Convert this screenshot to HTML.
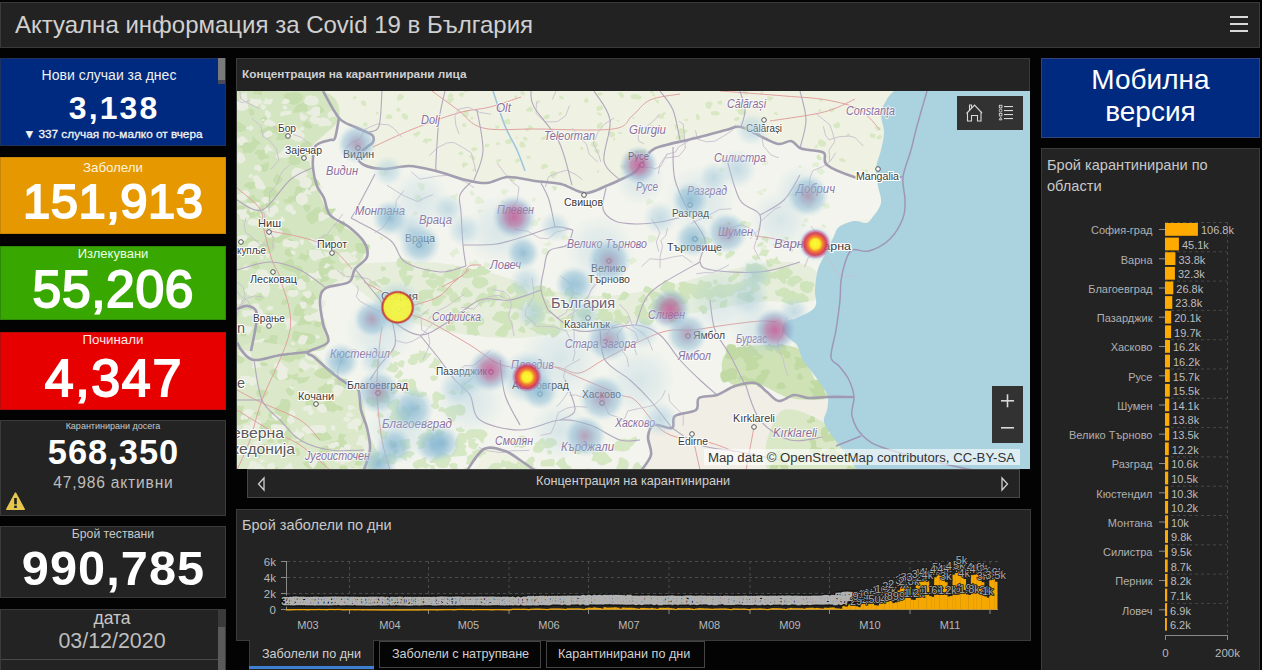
<!DOCTYPE html>
<html><head><meta charset="utf-8">
<style>
*{box-sizing:border-box;margin:0;padding:0}
html,body{width:1262px;height:670px;overflow:hidden;background:#030303;font-family:"Liberation Sans",sans-serif}
.a{position:absolute}
.pn{position:absolute;background:#232323;border:1px solid #3b3b3b}
.t{position:absolute;white-space:nowrap;line-height:1}
.c{left:0;right:0;text-align:center}
</style></head><body>
<!-- header -->
<div class="pn" style="left:0;top:2px;width:1260px;height:46px;background:#222;border-color:#3a3a3a"></div>
<div class="t" id="title" style="left:15px;top:13px;font-size:24px;color:#d0d0d0">Актуална информация за Covid 19 в България</div>
<div class="a" style="left:1230px;top:16px;width:18px;height:2px;background:#d8d8d8"></div>
<div class="a" style="left:1230px;top:23px;width:18px;height:2px;background:#d8d8d8"></div>
<div class="a" style="left:1230px;top:30px;width:18px;height:2px;background:#d8d8d8"></div>

<!-- left column -->
<div class="pn" style="left:0;top:58px;width:226px;height:88px;background:#002a80;border-color:#22325e"></div>
<div class="a" style="left:218px;top:58px;width:7px;height:22px;background:#7a7a7a"></div>
<div class="a" style="left:218px;top:80px;width:7px;height:4px;background:#4a4a5a"></div>
<div class="t" style="left:0;width:218px;text-align:center;top:67.5px;font-size:14px;color:#f0f0f0">Нови случаи за днес</div>
<div class="t" style="left:0;width:226px;text-align:center;top:91.8px;font-size:32px;font-weight:700;color:#fff;letter-spacing:2.1px;text-indent:2.1px">3,138</div>
<div class="t" style="left:0;width:226px;text-align:center;top:128.9px;font-size:11.8px;color:#f4f4f4;-webkit-text-stroke:0.3px #f4f4f4">▼ 337 случая по-малко от вчера</div>

<div class="pn" style="left:0;top:157px;width:226px;height:77px;background:#e69800;border-color:#c8860a"></div>
<div class="t" style="left:0;width:226px;text-align:center;top:160.6px;font-size:13.3px;color:#fff4dc">Заболели</div>
<div class="t" style="-webkit-text-stroke:1.9px #fff;left:0;width:226px;text-align:center;top:177.4px;font-size:49px;color:#fff;letter-spacing:0.5px;text-indent:0.5px">151,913</div>

<div class="pn" style="left:0;top:246px;width:226px;height:74px;background:#38a800;border-color:#2e8a08"></div>
<div class="t" style="left:0;width:226px;text-align:center;top:247.2px;font-size:13px;color:#e8ffe0">Излекувани</div>
<div class="t" style="-webkit-text-stroke:1.9px #fff;left:0;width:226px;text-align:center;top:264.3px;font-size:51.6px;color:#fff;letter-spacing:0.6px;text-indent:0.6px">55,206</div>

<div class="pn" style="left:0;top:332px;width:226px;height:78px;background:#e60000;border-color:#b80a0a"></div>
<div class="t" style="left:0;width:226px;text-align:center;top:333.3px;font-size:13.3px;color:#ffe8e8">Починали</div>
<div class="t" style="-webkit-text-stroke:1.9px #fff;left:0;width:226px;text-align:center;top:352.2px;font-size:52px;color:#fff;letter-spacing:1.65px;text-indent:1.65px">4,347</div>

<div class="pn" style="left:0;top:420px;width:226px;height:96px"></div>
<div class="t" style="left:0;width:226px;text-align:center;top:421.9px;font-size:9px;color:#c8c8c8">Карантинирани досега</div>
<div class="t" style="left:0;width:226px;text-align:center;top:434.5px;font-size:34.4px;font-weight:700;color:#fff;letter-spacing:1.0px;text-indent:1.0px">568,350</div>
<div class="t" style="left:0;width:226px;text-align:center;top:474.6px;font-size:15.6px;color:#bdbdbd;letter-spacing:0.8px;text-indent:0.8px">47,986 активни</div>
<svg class="a" style="left:5px;top:491px" width="21" height="20" viewBox="0 0 21 20"><path d="M10.5 2.2 L19.2 18.3 L1.8 18.3 Z" fill="#e6c64c" stroke="#e6c64c" stroke-width="1.6" stroke-linejoin="round"/><rect x="9.2" y="7" width="2.6" height="6.3" fill="#1e1e1e"/><rect x="9.2" y="14.6" width="2.6" height="2.4" fill="#1e1e1e"/></svg>

<div class="pn" style="left:0;top:526px;width:226px;height:72px"></div>
<div class="t" style="left:0;width:226px;text-align:center;top:527.6px;font-size:12.2px;color:#c8c8c8">Брой тествани</div>
<div class="t" style="left:0;width:226px;text-align:center;top:543.8px;font-size:48.7px;font-weight:700;color:#fff;letter-spacing:1.05px;text-indent:1.05px">990,785</div>

<div class="pn" style="left:0;top:609px;width:226px;height:70px"></div>
<div class="a" style="left:218px;top:610px;width:7px;height:60px;background:#3a3a3a"></div>
<div class="a" style="left:218px;top:627px;width:7px;height:43px;background:#5a5a5a"></div>
<div class="a" style="left:1px;top:659px;width:217px;height:1px;background:#4a4a4a"></div>
<div class="t" style="left:0;width:224px;text-align:center;top:610px;font-size:17.5px;color:#c8c8c8">дата</div>
<div class="t" style="left:0;width:224px;text-align:center;top:630.7px;font-size:21.4px;color:#bdbdbd">03/12/2020</div>

<!-- map panel -->
<div class="pn" style="left:236px;top:58px;width:794px;height:411px"></div>
<div class="t" style="left:242px;top:69px;font-size:11.8px;font-weight:700;color:#cfcfcf">Концентрация на карантинирани лица</div>
<div class="a" id="map" style="left:237px;top:91px;width:793px;height:378px;background:#efece4;overflow:hidden">
<svg width="793" height="378" viewBox="237 91 793 378" style="position:absolute;left:0;top:0" font-family="Liberation Sans">
<defs><radialGradient id="g0"><stop offset="0" stop-color="#9cc4d8" stop-opacity=".55"/><stop offset=".55" stop-color="#a9cde0" stop-opacity=".35"/><stop offset="1" stop-color="#bcd9e6" stop-opacity="0"/></radialGradient><radialGradient id="g1"><stop offset="0" stop-color="#7fb2cf" stop-opacity=".8"/><stop offset=".6" stop-color="#8fbdd6" stop-opacity=".5"/><stop offset="1" stop-color="#b0d2e2" stop-opacity="0"/></radialGradient><radialGradient id="g2"><stop offset="0" stop-color="#a585a8" stop-opacity=".75"/><stop offset=".35" stop-color="#90a4c4" stop-opacity=".65"/><stop offset=".7" stop-color="#8dbcd6" stop-opacity=".45"/><stop offset="1" stop-color="#b0d2e2" stop-opacity="0"/></radialGradient><radialGradient id="g3"><stop offset="0" stop-color="#c04d90" stop-opacity=".8"/><stop offset=".4" stop-color="#a9709f" stop-opacity=".7"/><stop offset=".7" stop-color="#8fa8cc" stop-opacity=".5"/><stop offset="1" stop-color="#b0d2e2" stop-opacity="0"/></radialGradient><radialGradient id="g4"><stop offset="0" stop-color="#ffff30"/><stop offset=".3" stop-color="#fff020"/><stop offset=".5" stop-color="#f5762a"/><stop offset=".72" stop-color="#d62a48" stop-opacity=".9"/><stop offset=".88" stop-color="#b868a8" stop-opacity=".5"/><stop offset="1" stop-color="#a0c8dc" stop-opacity="0"/></radialGradient><radialGradient id="g5"><stop offset="0" stop-color="#ffff3a"/><stop offset=".8" stop-color="#fbf52a"/><stop offset=".86" stop-color="#e45a20"/><stop offset=".92" stop-color="#b82828"/><stop offset="1" stop-color="#c05050" stop-opacity=".3"/></radialGradient></defs>
<rect x="237" y="91" width="793" height="378" fill="#eff2e2"/>
<polygon points="640.0,472.0 651.0,455.0 648.0,437.0 654.0,425.0 672.0,428.0 675.0,416.0 696.0,410.0 699.0,398.0 717.0,395.0 735.0,386.0 755.0,383.0 767.0,392.0 779.0,401.0 794.0,395.0 809.0,398.0 827.0,397.0 828.0,398.0 827.0,410.0 824.0,422.0 833.0,437.0 842.0,449.0 851.0,460.0 856.0,472.0" fill="#f1eee6"/>
<path d="M339.0,118.0 C342.3,116.2 349.5,124.2 355.0,127.0 C360.5,129.8 369.0,132.5 372.0,135.0 C375.0,137.5 373.8,140.0 373.0,142.0 C372.2,144.0 369.5,144.7 367.0,147.0 C364.5,149.3 358.5,153.0 358.0,156.0 C357.5,159.0 359.5,162.8 364.0,165.0 C368.5,167.2 377.5,168.8 385.0,169.0 C392.5,169.2 400.5,165.7 409.0,166.0 C417.5,166.3 426.5,168.7 436.0,171.0 C445.5,173.3 457.5,178.0 466.0,180.0 C474.5,182.0 480.0,183.5 487.0,183.0 C494.0,182.5 500.0,177.3 508.0,177.0 C516.0,176.7 526.2,179.8 535.0,181.0 C543.8,182.2 552.7,182.0 561.0,184.0 C569.3,186.0 577.5,192.7 585.0,193.0 C592.5,193.3 599.5,188.5 606.0,186.0 C612.5,183.5 619.0,180.5 624.0,178.0 C629.0,175.5 631.5,175.5 636.0,171.0 C640.5,166.5 646.0,155.3 651.0,151.0 C656.0,146.7 658.5,147.2 666.0,145.0 C673.5,142.8 686.0,140.5 696.0,138.0 C706.0,135.5 718.5,131.8 726.0,130.0 C733.5,128.2 734.7,125.7 741.0,127.0 C747.3,128.3 757.7,135.2 764.0,138.0 C770.3,140.8 774.5,143.5 779.0,144.0 C783.5,144.5 787.5,140.3 791.0,141.0 C794.5,141.7 797.0,146.5 800.0,148.0 C803.0,149.5 805.0,149.2 809.0,150.0 C813.0,150.8 821.0,150.5 824.0,153.0 C827.0,155.5 822.0,161.0 827.0,165.0 C832.0,169.0 847.5,174.8 854.0,177.0 C860.5,179.2 862.0,177.7 866.0,178.0 C870.0,178.3 876.2,177.8 878.0,179.0 C879.8,180.2 876.5,181.0 877.0,185.0 C877.5,189.0 881.8,197.5 881.0,203.0 C880.2,208.5 876.5,215.0 872.0,218.0 C867.5,221.0 859.5,219.5 854.0,221.0 C848.5,222.5 843.5,222.0 839.0,227.0 C834.5,232.0 830.5,244.0 827.0,251.0 C823.5,258.0 820.0,262.5 818.0,269.0 C816.0,275.5 815.5,283.7 815.0,290.0 C814.5,296.3 818.0,302.3 815.0,307.0 C812.0,311.7 802.5,314.2 797.0,318.0 C791.5,321.8 783.0,326.3 782.0,330.0 C781.0,333.7 787.5,335.0 791.0,340.0 C794.5,345.0 799.5,354.7 803.0,360.0 C806.5,365.3 808.5,367.2 812.0,372.0 C815.5,376.8 821.3,384.7 824.0,389.0 C826.7,393.3 827.5,396.7 828.0,398.0 C828.5,399.3 830.2,397.0 827.0,397.0 C823.8,397.0 814.5,398.3 809.0,398.0 C803.5,397.7 799.0,394.5 794.0,395.0 C789.0,395.5 783.5,401.5 779.0,401.0 C774.5,400.5 771.0,395.0 767.0,392.0 C763.0,389.0 760.3,384.0 755.0,383.0 C749.7,382.0 741.3,384.0 735.0,386.0 C728.7,388.0 723.0,393.0 717.0,395.0 C711.0,397.0 702.5,395.5 699.0,398.0 C695.5,400.5 700.0,407.0 696.0,410.0 C692.0,413.0 679.0,413.0 675.0,416.0 C671.0,419.0 675.5,426.5 672.0,428.0 C668.5,429.5 658.0,423.5 654.0,425.0 C650.0,426.5 648.5,432.0 648.0,437.0 C647.5,442.0 652.3,449.2 651.0,455.0 C649.7,460.8 645.2,469.2 640.0,472.0 C634.8,474.8 637.2,472.0 620.0,472.0 C602.8,472.0 553.7,474.0 537.0,472.0 C520.3,470.0 525.3,463.5 520.0,460.0 C514.7,456.5 511.0,452.8 505.0,451.0 C499.0,449.2 490.5,445.5 484.0,449.0 C477.5,452.5 486.0,468.2 466.0,472.0 C446.0,475.8 380.0,475.8 364.0,472.0 C348.0,468.2 369.5,456.3 370.0,449.0 C370.5,441.7 368.5,434.5 367.0,428.0 C365.5,421.5 362.5,416.5 361.0,410.0 C359.5,403.5 360.5,393.5 358.0,389.0 C355.5,384.5 350.5,385.8 346.0,383.0 C341.5,380.2 336.3,376.3 331.0,372.0 C325.7,367.7 317.8,360.3 314.0,357.0 C310.2,353.7 305.7,354.5 308.0,352.0 C310.3,349.5 325.5,346.7 328.0,342.0 C330.5,337.3 324.3,331.0 323.0,324.0 C321.7,317.0 319.5,306.0 320.0,300.0 C320.5,294.0 321.2,291.0 326.0,288.0 C330.8,285.0 344.2,285.2 349.0,282.0 C353.8,278.8 352.0,273.2 355.0,269.0 C358.0,264.8 365.5,261.5 367.0,257.0 C368.5,252.5 367.0,247.0 364.0,242.0 C361.0,237.0 354.7,231.5 349.0,227.0 C343.3,222.5 334.2,219.8 330.0,215.0 C325.8,210.2 326.2,202.8 324.0,198.0 C321.8,193.2 318.8,191.0 317.0,186.0 C315.2,181.0 313.5,174.0 313.0,168.0 C312.5,162.0 313.2,154.0 314.0,150.0 C314.8,146.0 315.3,145.7 318.0,144.0 C320.7,142.3 327.2,141.0 330.0,140.0 C332.8,139.0 333.5,141.7 335.0,138.0 C336.5,134.3 335.7,119.8 339.0,118.0Z" fill="#f3f4f0" opacity=".75"/>
<path d="M237.0,91.0 C251.2,47.5 305.0,86.5 322.0,91.0 C339.0,95.5 340.7,108.7 339.0,118.0 C337.3,127.3 316.7,138.7 312.0,147.0 C307.3,155.3 308.0,156.7 311.0,168.0 C314.0,179.3 321.2,202.7 330.0,215.0 C338.8,227.3 359.8,233.0 364.0,242.0 C368.2,251.0 361.3,261.3 355.0,269.0 C348.7,276.7 331.8,282.8 326.0,288.0 C320.2,293.2 319.7,291.0 320.0,300.0 C320.3,309.0 330.0,333.3 328.0,342.0 C326.0,350.7 323.2,350.3 308.0,352.0 C292.8,353.7 248.8,395.5 237.0,352.0 C225.2,308.5 222.8,134.5 237.0,91.0Z" fill="#d4e6c1"/>
<path d="M279.8,127.5 C281.5,128.1 284.5,128.5 285.0,129.9 C285.6,131.4 284.7,135.6 283.2,136.2 C281.7,136.9 277.6,134.7 276.1,133.8 C274.6,132.8 274.4,131.8 274.2,130.6 C274.0,129.4 273.8,127.0 274.8,126.5 C275.7,125.9 278.1,126.9 279.8,127.5Z" fill="#c6ddad"/>
<path d="M270.6,234.0 C271.0,234.5 270.5,236.1 269.9,236.5 C269.4,236.8 268.1,236.3 267.2,236.2 C266.4,236.0 264.8,236.0 264.6,235.6 C264.4,235.3 265.7,234.4 266.3,233.9 C266.9,233.5 267.2,233.1 268.0,233.1 C268.7,233.1 270.3,233.4 270.6,234.0Z" fill="#c6ddad"/>
<path d="M302.9,123.9 C303.2,122.9 306.0,121.0 307.2,121.0 C308.5,121.1 309.4,123.2 310.3,124.3 C311.2,125.4 312.9,126.9 312.6,127.6 C312.2,128.3 309.2,128.7 308.0,128.6 C306.7,128.5 306.0,128.0 305.1,127.2 C304.3,126.4 302.5,125.0 302.9,123.9Z" fill="#c6ddad"/>
<path d="M325.0,234.1 C326.2,233.8 327.4,234.1 328.8,234.3 C330.1,234.5 332.2,234.5 332.9,235.2 C333.7,235.9 333.7,237.7 333.4,238.7 C333.1,239.7 331.9,240.2 331.0,241.2 C330.2,242.1 329.5,244.3 328.2,244.6 C326.9,245.0 324.1,244.1 323.2,243.2 C322.3,242.3 323.2,240.5 322.9,239.3 C322.6,238.1 321.0,236.9 321.4,236.1 C321.7,235.2 323.7,234.4 325.0,234.1Z" fill="#c6ddad"/>
<path d="M300.5,317.3 C301.1,316.3 302.0,314.0 303.0,313.9 C304.0,313.7 305.6,315.6 306.7,316.5 C307.8,317.3 308.8,317.6 309.5,318.9 C310.3,320.2 312.1,323.4 311.2,324.3 C310.4,325.2 306.6,324.3 304.4,324.5 C302.1,324.7 298.3,326.3 297.5,325.5 C296.7,324.8 299.1,321.1 299.6,319.8 C300.1,318.4 299.9,318.3 300.5,317.3Z" fill="#c6ddad"/>
<path d="M305.1,290.9 C306.4,290.2 309.7,290.5 311.3,291.2 C312.8,291.9 313.7,293.5 314.6,295.0 C315.5,296.5 317.3,298.6 316.7,300.3 C316.2,301.9 313.4,304.6 311.4,304.9 C309.5,305.2 306.7,303.1 304.8,302.2 C302.9,301.3 300.0,300.4 299.8,299.3 C299.7,298.2 303.1,296.9 303.9,295.5 C304.8,294.1 303.9,291.6 305.1,290.9Z" fill="#c6ddad"/>
<path d="M324.5,265.8 C322.7,265.9 318.8,265.7 318.3,264.7 C317.8,263.7 321.1,261.3 321.4,259.7 C321.7,258.2 319.4,256.2 320.1,255.5 C320.7,254.8 323.8,255.2 325.3,255.3 C326.8,255.4 328.1,255.7 329.0,256.2 C329.9,256.8 329.7,257.6 330.8,258.7 C332.0,259.9 336.2,262.3 335.9,263.1 C335.5,264.0 330.5,263.4 328.6,263.8 C326.7,264.3 326.2,265.7 324.5,265.8Z" fill="#c6ddad"/>
<path d="M272.0,197.9 C269.9,198.6 266.8,198.1 265.4,197.3 C264.0,196.5 263.5,194.6 263.4,193.0 C263.3,191.5 263.3,189.0 264.8,188.0 C266.3,187.1 270.3,186.6 272.5,187.4 C274.6,188.2 277.8,191.3 277.7,193.0 C277.6,194.8 274.0,197.2 272.0,197.9Z" fill="#c6ddad"/>
<path d="M285.6,153.0 C284.8,153.1 283.8,153.3 283.2,152.9 C282.6,152.6 281.9,151.5 282.0,150.9 C282.2,150.4 283.4,149.8 284.1,149.6 C284.7,149.5 285.2,149.9 285.8,150.0 C286.5,150.1 287.7,150.1 288.0,150.5 C288.3,150.9 288.0,151.9 287.6,152.4 C287.2,152.8 286.3,152.9 285.6,153.0Z" fill="#c6ddad"/>
<path d="M300.3,341.7 C299.4,340.0 300.4,335.8 302.1,334.5 C303.9,333.1 308.6,333.1 310.9,333.7 C313.1,334.4 315.3,336.7 315.7,338.2 C316.1,339.8 314.6,342.1 313.2,343.1 C311.9,344.2 309.6,344.6 307.4,344.4 C305.3,344.2 301.2,343.4 300.3,341.7Z" fill="#c6ddad"/>
<path d="M296.0,196.2 C295.6,195.4 294.4,194.3 294.7,193.9 C295.0,193.5 296.8,193.8 297.8,193.7 C298.8,193.6 300.1,192.9 300.8,193.2 C301.5,193.6 301.9,194.8 302.0,195.7 C302.0,196.7 301.9,198.5 301.1,199.0 C300.3,199.5 297.8,199.1 297.0,198.6 C296.1,198.2 296.4,197.0 296.0,196.2Z" fill="#c6ddad"/>
<path d="M251.0,144.1 C251.4,144.8 250.7,146.5 250.0,147.1 C249.3,147.7 247.8,147.4 246.8,147.6 C245.7,147.9 244.9,148.7 243.6,148.6 C242.4,148.5 239.6,147.7 239.3,146.8 C239.0,146.0 240.9,144.2 241.8,143.5 C242.7,142.7 243.9,142.3 244.8,142.2 C245.8,142.2 246.4,142.7 247.5,143.0 C248.5,143.4 250.5,143.4 251.0,144.1Z" fill="#c6ddad"/>
<path d="M303.3,270.2 C303.4,271.4 301.7,272.3 300.9,273.3 C300.1,274.3 299.2,276.3 298.3,276.3 C297.4,276.3 296.6,274.2 295.5,273.3 C294.5,272.5 292.4,272.2 292.1,271.0 C291.8,269.8 292.2,266.9 293.6,266.0 C295.0,265.2 298.8,265.3 300.5,266.0 C302.1,266.7 303.2,269.0 303.3,270.2Z" fill="#c6ddad"/>
<path d="M278.4,129.8 C279.3,128.7 282.2,127.3 284.2,127.4 C286.2,127.4 289.5,128.7 290.3,129.9 C291.0,131.2 289.2,133.6 288.7,134.9 C288.1,136.2 288.0,137.0 287.1,137.9 C286.2,138.7 284.9,139.5 283.1,139.8 C281.4,140.0 277.4,140.3 276.6,139.4 C275.9,138.5 278.2,135.9 278.5,134.3 C278.7,132.7 277.4,131.0 278.4,129.8Z" fill="#c6ddad"/>
<path d="M293.7,282.6 C292.9,281.4 291.2,278.6 292.0,277.5 C292.8,276.5 296.0,276.6 298.3,276.1 C300.6,275.6 303.9,273.9 305.8,274.6 C307.7,275.4 309.7,278.6 309.6,280.4 C309.6,282.1 306.8,283.3 305.5,285.1 C304.2,286.9 303.2,291.4 301.7,291.4 C300.2,291.4 298.0,286.6 296.7,285.1 C295.3,283.7 294.5,283.9 293.7,282.6Z" fill="#c6ddad"/>
<path d="M245.5,210.2 C246.4,209.4 248.2,208.8 249.4,208.9 C250.6,209.0 251.6,210.1 252.5,210.7 C253.4,211.4 254.5,211.8 255.0,212.6 C255.5,213.4 255.9,215.1 255.3,215.6 C254.7,216.2 252.3,215.3 251.2,215.7 C250.1,216.1 249.7,217.6 248.7,217.8 C247.6,217.9 245.6,217.4 244.8,216.6 C244.1,215.9 244.1,214.4 244.2,213.3 C244.3,212.2 244.6,210.9 245.5,210.2Z" fill="#c6ddad"/>
<path d="M254.3,298.0 C254.3,297.3 256.5,296.5 257.2,296.0 C257.9,295.4 257.7,295.4 258.5,294.7 C259.2,294.0 261.0,291.7 261.6,291.9 C262.1,292.1 261.3,294.9 261.8,295.9 C262.3,296.8 264.4,296.8 264.6,297.4 C264.7,298.0 263.4,298.9 262.7,299.5 C261.9,300.1 261.0,301.0 260.0,301.1 C259.0,301.2 257.6,300.7 256.7,300.2 C255.7,299.7 254.2,298.7 254.3,298.0Z" fill="#c6ddad"/>
<path d="M307.6,213.5 C308.4,212.4 309.3,212.7 311.1,211.5 C312.9,210.4 316.8,206.3 318.6,206.7 C320.4,207.1 321.8,211.6 321.9,213.7 C321.9,215.8 320.4,217.7 318.8,219.4 C317.1,221.1 313.8,224.1 311.8,223.9 C309.7,223.7 307.0,220.0 306.4,218.2 C305.7,216.5 306.8,214.7 307.6,213.5Z" fill="#c6ddad"/>
<path d="M264.1,153.9 C265.3,154.0 266.7,154.0 267.5,154.7 C268.4,155.4 269.6,157.5 269.2,158.1 C268.7,158.7 266.0,158.2 264.7,158.6 C263.4,159.0 262.3,160.6 261.1,160.4 C260.0,160.2 258.1,158.4 258.0,157.4 C257.8,156.3 259.2,154.6 260.2,154.0 C261.2,153.4 262.9,153.7 264.1,153.9Z" fill="#c6ddad"/>
<path d="M333.0,224.7 C333.4,223.7 336.9,223.6 338.6,223.0 C340.4,222.3 342.2,220.4 343.4,220.7 C344.6,221.0 345.5,223.7 345.6,224.8 C345.6,226.0 344.5,226.3 343.7,227.8 C342.9,229.2 341.9,233.4 340.8,233.5 C339.6,233.7 337.8,230.0 336.6,228.5 C335.3,227.1 332.7,225.6 333.0,224.7Z" fill="#c6ddad"/>
<path d="M294.6,275.9 C295.5,275.3 297.6,275.6 299.2,276.0 C300.7,276.3 302.9,276.7 303.9,277.8 C304.8,278.9 305.5,281.7 304.6,282.5 C303.7,283.3 300.0,282.6 298.5,282.8 C297.1,282.9 296.4,283.6 295.7,283.4 C294.9,283.2 294.4,282.1 294.1,281.4 C293.8,280.7 293.6,280.2 293.7,279.3 C293.8,278.3 293.7,276.4 294.6,275.9Z" fill="#c6ddad"/>
<path d="M286.3,100.7 C285.5,99.0 286.7,95.7 288.3,94.2 C289.9,92.8 293.3,91.8 295.7,92.0 C298.2,92.2 302.4,94.0 303.1,95.7 C303.9,97.4 301.9,100.6 300.2,102.1 C298.6,103.6 295.4,104.9 293.1,104.7 C290.8,104.4 287.1,102.5 286.3,100.7Z" fill="#c6ddad"/>
<path d="M305.8,333.3 C306.3,334.3 303.2,336.5 302.3,337.9 C301.5,339.2 301.8,340.6 300.7,341.2 C299.6,341.8 297.3,341.8 295.9,341.5 C294.5,341.1 293.0,340.0 292.4,339.0 C291.8,338.0 292.1,336.7 292.4,335.4 C292.7,334.1 292.9,331.8 294.1,331.2 C295.2,330.6 297.6,331.6 299.5,331.9 C301.5,332.3 305.4,332.3 305.8,333.3Z" fill="#c6ddad"/>
<path d="M267.5,168.9 C267.8,169.4 267.0,170.6 266.5,171.2 C266.0,171.7 265.1,172.0 264.4,172.0 C263.8,172.0 263.2,171.7 262.6,171.3 C262.0,170.9 261.0,170.5 260.8,169.9 C260.7,169.2 261.1,167.6 261.7,167.4 C262.3,167.1 263.6,168.2 264.6,168.5 C265.6,168.7 267.1,168.5 267.5,168.9Z" fill="#c6ddad"/>
<path d="M287.8,198.9 C289.3,198.8 291.3,197.9 292.0,198.4 C292.8,199.0 293.0,201.4 292.4,202.2 C291.9,202.9 289.9,202.8 288.7,203.0 C287.5,203.1 286.2,203.6 285.3,203.0 C284.4,202.4 283.0,200.2 283.4,199.5 C283.8,198.9 286.4,199.1 287.8,198.9Z" fill="#c6ddad"/>
<path d="M307.3,107.0 C307.5,108.5 307.9,110.5 307.0,111.2 C306.1,112.0 304.1,111.3 301.9,111.6 C299.6,111.8 294.5,113.7 293.5,112.8 C292.4,111.9 294.6,107.9 295.7,106.4 C296.8,104.9 298.2,104.4 299.9,103.8 C301.6,103.1 304.5,101.7 305.7,102.3 C307.0,102.8 307.0,105.5 307.3,107.0Z" fill="#c6ddad"/>
<path d="M268.3,126.2 C269.3,126.0 270.0,126.5 271.6,126.5 C273.2,126.5 277.3,125.7 278.2,126.4 C279.1,127.2 278.0,130.1 277.1,131.2 C276.2,132.3 274.1,131.7 272.8,133.0 C271.5,134.3 270.9,138.7 269.4,139.0 C267.9,139.4 265.4,136.7 263.8,135.4 C262.2,134.0 259.3,132.4 259.6,131.1 C260.0,129.9 264.3,128.7 265.7,127.9 C267.2,127.1 267.3,126.5 268.3,126.2Z" fill="#c6ddad"/>
<path d="M276.7,232.8 C278.2,231.5 278.0,228.3 279.9,227.6 C281.7,227.0 286.0,227.5 287.9,228.8 C289.9,230.0 292.3,233.5 291.7,235.1 C291.1,236.8 286.5,238.0 284.6,238.8 C282.7,239.6 282.3,239.3 280.2,239.9 C278.1,240.4 273.8,242.6 272.2,241.9 C270.7,241.2 270.3,237.0 271.0,235.5 C271.8,234.0 275.3,234.1 276.7,232.8Z" fill="#c6ddad"/>
<path d="M303.6,150.0 C301.9,150.1 298.2,148.9 297.9,147.9 C297.6,146.9 300.8,144.8 301.7,143.9 C302.6,143.0 302.6,143.0 303.6,142.6 C304.5,142.1 305.9,141.0 307.3,141.2 C308.7,141.5 311.8,143.1 312.0,144.2 C312.1,145.2 309.5,146.8 308.1,147.8 C306.7,148.7 305.3,150.0 303.6,150.0Z" fill="#c6ddad"/>
<path d="M264.5,203.2 C265.9,202.3 267.4,200.8 269.2,200.7 C270.9,200.5 274.2,201.4 274.9,202.5 C275.7,203.6 274.0,206.2 273.5,207.4 C273.0,208.6 272.7,209.2 272.0,209.9 C271.3,210.6 270.3,211.2 269.3,211.4 C268.4,211.6 267.7,211.2 266.2,211.0 C264.6,210.9 261.1,211.4 260.2,210.5 C259.2,209.7 259.9,207.1 260.7,205.9 C261.4,204.7 263.0,204.1 264.5,203.2Z" fill="#c6ddad"/>
<path d="M264.1,349.9 C264.2,352.0 263.0,356.0 261.0,356.8 C259.1,357.7 254.1,356.3 252.3,355.2 C250.5,354.2 251.2,352.3 250.2,350.6 C249.2,349.0 245.8,346.5 246.4,345.3 C247.0,344.1 251.4,343.5 253.7,343.3 C256.1,343.2 258.9,343.3 260.6,344.4 C262.3,345.5 264.0,347.8 264.1,349.9Z" fill="#c6ddad"/>
<path d="M355.9,248.2 C355.5,246.7 354.9,244.5 355.9,243.7 C356.8,242.9 359.4,243.0 361.7,243.3 C364.0,243.6 368.7,243.8 369.6,245.3 C370.5,246.9 368.9,251.5 367.1,252.8 C365.2,254.0 360.3,253.4 358.5,252.7 C356.6,251.9 356.4,249.7 355.9,248.2Z" fill="#c6ddad"/>
<path d="M269.6,345.7 C268.5,345.8 267.9,345.3 267.1,345.0 C266.3,344.8 265.5,344.7 264.9,344.2 C264.2,343.6 263.0,342.2 263.3,341.6 C263.6,341.0 265.6,341.0 266.7,340.6 C267.8,340.1 269.4,338.6 270.0,338.9 C270.7,339.2 269.9,341.2 270.5,342.2 C271.1,343.1 273.5,344.1 273.4,344.7 C273.2,345.3 270.6,345.7 269.6,345.7Z" fill="#c6ddad"/>
<path d="M254.0,246.9 C252.9,246.7 251.1,246.7 250.5,246.0 C249.9,245.3 250.2,243.8 250.5,242.8 C250.9,241.8 251.6,240.3 252.7,239.8 C253.8,239.3 255.8,239.5 257.1,239.9 C258.5,240.3 259.9,241.1 260.6,242.1 C261.3,243.1 262.1,245.1 261.5,245.9 C261.0,246.8 258.4,247.2 257.2,247.3 C255.9,247.5 255.2,247.1 254.0,246.9Z" fill="#c6ddad"/>
<path d="M282.8,349.0 C282.6,349.8 281.3,351.2 280.2,351.5 C279.2,351.8 277.6,351.2 276.6,350.7 C275.6,350.2 274.5,349.4 274.3,348.6 C274.0,347.8 274.4,346.1 275.1,345.7 C275.8,345.3 277.5,346.1 278.5,346.2 C279.6,346.3 280.6,345.9 281.3,346.4 C282.0,346.8 282.9,348.1 282.8,349.0Z" fill="#c6ddad"/>
<path d="M304.6,310.6 C304.2,311.9 304.0,314.7 302.2,315.5 C300.4,316.2 295.1,316.2 293.8,315.0 C292.6,313.9 294.0,310.3 294.6,308.5 C295.2,306.7 295.9,304.7 297.2,304.3 C298.5,303.8 301.1,305.1 302.3,305.7 C303.6,306.3 304.4,307.0 304.8,307.8 C305.2,308.6 305.1,309.3 304.6,310.6Z" fill="#c6ddad"/>
<path d="M306.0,150.9 C306.8,151.0 307.5,152.3 308.0,153.0 C308.4,153.7 308.8,154.5 308.7,155.2 C308.7,156.0 308.4,157.3 307.7,157.6 C307.0,157.9 305.7,156.7 304.6,156.8 C303.6,156.9 302.0,158.3 301.5,158.0 C300.9,157.8 301.3,156.1 301.4,155.4 C301.6,154.7 302.0,154.4 302.3,153.9 C302.6,153.4 302.6,153.0 303.2,152.5 C303.9,152.0 305.2,150.8 306.0,150.9Z" fill="#c6ddad"/>
<path d="M300.4,186.1 C301.8,186.2 304.1,186.9 304.5,187.8 C304.9,188.6 303.4,190.2 303.0,191.1 C302.6,192.0 302.6,192.6 302.0,193.1 C301.4,193.6 300.5,194.0 299.3,194.1 C298.1,194.3 295.2,194.8 294.6,194.2 C293.9,193.6 295.1,191.6 295.3,190.5 C295.6,189.3 295.3,188.0 296.1,187.3 C296.9,186.5 299.0,186.0 300.4,186.1Z" fill="#c6ddad"/>
<path d="M236.9,103.2 C237.6,102.9 239.7,104.1 240.7,104.8 C241.7,105.5 242.9,106.5 242.7,107.4 C242.6,108.2 241.1,109.5 240.0,109.8 C238.9,110.2 236.7,109.9 236.1,109.3 C235.4,108.8 235.8,107.5 236.0,106.5 C236.1,105.5 236.1,103.5 236.9,103.2Z" fill="#c6ddad"/>
<path d="M245.9,210.6 C246.2,212.1 248.1,214.4 247.4,215.8 C246.7,217.2 243.2,219.3 241.5,218.9 C239.7,218.6 238.2,215.1 237.2,213.9 C236.1,212.8 236.1,213.1 235.0,212.2 C233.9,211.3 230.3,209.5 230.5,208.6 C230.7,207.7 234.5,207.4 236.1,206.9 C237.7,206.4 238.6,205.8 240.1,205.7 C241.6,205.6 244.3,205.6 245.2,206.4 C246.2,207.2 245.5,209.0 245.9,210.6Z" fill="#c6ddad"/>
<path d="M248.4,188.2 C247.2,187.5 243.8,187.0 243.5,186.1 C243.2,185.2 245.3,183.5 246.5,182.9 C247.7,182.2 249.2,182.5 250.6,182.3 C252.0,182.2 253.9,181.3 254.8,181.8 C255.8,182.2 256.0,184.0 256.1,185.0 C256.3,186.0 256.4,187.1 255.8,187.8 C255.3,188.4 253.9,188.4 253.0,188.8 C252.1,189.2 251.1,190.1 250.4,189.9 C249.6,189.8 249.5,188.8 248.4,188.2Z" fill="#c6ddad"/>
<path d="M276.6,174.0 C277.7,173.8 279.7,175.9 280.6,176.8 C281.6,177.7 282.5,178.4 282.5,179.3 C282.6,180.1 282.0,181.1 281.0,182.0 C280.0,183.0 277.9,185.1 276.7,184.9 C275.4,184.8 273.8,182.4 273.4,181.2 C273.0,180.0 273.8,179.0 274.3,177.8 C274.9,176.6 275.6,174.2 276.6,174.0Z" fill="#c6ddad"/>
<path d="M294.5,163.6 C294.3,164.3 292.8,165.3 292.0,165.3 C291.2,165.4 290.7,164.4 289.9,163.8 C289.2,163.2 287.3,162.3 287.5,161.8 C287.6,161.3 289.9,160.8 290.8,160.7 C291.8,160.7 292.5,161.1 293.1,161.6 C293.7,162.1 294.6,163.0 294.5,163.6Z" fill="#c6ddad"/>
<path d="M299.9,94.4 C300.8,95.3 299.1,97.9 298.6,99.5 C298.2,101.0 298.2,103.3 297.0,103.7 C295.8,104.1 293.3,101.8 291.4,101.8 C289.6,101.9 287.1,104.3 285.9,104.0 C284.8,103.6 285.1,101.1 284.7,99.6 C284.3,98.2 283.0,96.4 283.6,95.2 C284.2,94.0 286.8,92.7 288.4,92.6 C290.0,92.4 291.2,94.0 293.1,94.3 C295.0,94.6 299.0,93.5 299.9,94.4Z" fill="#c6ddad"/>
<path d="M241.0,334.0 C240.7,333.6 240.8,333.1 240.7,332.6 C240.6,332.0 240.2,330.9 240.6,330.4 C241.0,330.0 242.4,329.8 243.2,329.9 C243.9,330.0 244.7,330.6 245.1,331.0 C245.5,331.5 245.5,332.0 245.7,332.5 C245.8,333.0 246.2,333.6 246.1,334.2 C245.9,334.7 245.2,335.7 244.6,335.8 C244.0,335.8 243.1,334.8 242.5,334.5 C241.9,334.2 241.3,334.3 241.0,334.0Z" fill="#c6ddad"/>
<path d="M313.7,109.3 C314.0,108.6 315.2,108.1 316.2,107.5 C317.2,106.8 318.6,105.1 319.6,105.2 C320.7,105.2 321.7,107.0 322.5,107.9 C323.3,108.7 324.5,109.7 324.5,110.5 C324.4,111.3 322.8,112.2 322.0,112.7 C321.2,113.2 320.5,113.3 319.5,113.6 C318.5,114.0 316.8,115.0 316.0,114.7 C315.1,114.5 314.8,112.9 314.4,112.0 C314.1,111.1 313.4,110.1 313.7,109.3Z" fill="#c6ddad"/>
<path d="M283.8,299.5 C284.6,299.4 286.2,300.1 286.8,300.9 C287.3,301.6 287.6,303.1 287.1,303.8 C286.6,304.4 284.8,304.9 283.8,304.9 C282.8,304.9 281.3,304.1 281.0,303.5 C280.7,302.9 281.4,302.0 281.9,301.4 C282.3,300.7 282.9,299.6 283.8,299.5Z" fill="#c6ddad"/>
<path d="M276.0,345.6 C275.3,346.1 273.6,345.9 272.5,345.9 C271.4,345.9 270.1,346.1 269.5,345.6 C269.0,345.2 269.0,343.9 269.2,343.2 C269.4,342.6 270.1,342.2 270.8,341.7 C271.6,341.2 272.8,340.2 273.7,340.4 C274.7,340.5 276.4,341.5 276.8,342.4 C277.1,343.2 276.7,345.0 276.0,345.6Z" fill="#c6ddad"/>
<path d="M260.0,200.8 C260.1,201.7 257.4,202.2 256.9,203.6 C256.4,205.0 258.0,208.4 256.8,209.4 C255.7,210.4 251.7,210.3 250.0,209.5 C248.4,208.8 247.6,206.4 247.0,205.0 C246.3,203.6 246.1,202.4 246.4,201.2 C246.6,200.0 247.6,199.0 248.7,197.9 C249.8,196.9 251.6,194.7 252.9,194.8 C254.2,194.9 255.2,197.7 256.4,198.7 C257.6,199.7 260.0,200.0 260.0,200.8Z" fill="#c6ddad"/>
<path d="M259.8,346.3 C259.3,346.6 257.6,346.0 256.9,345.9 C256.2,345.9 256.2,346.2 255.6,346.2 C255.0,346.2 253.5,346.3 253.3,346.0 C253.2,345.7 254.4,345.0 254.5,344.4 C254.6,343.8 253.6,342.9 253.9,342.3 C254.2,341.7 255.6,341.0 256.4,341.0 C257.2,341.0 258.1,341.9 258.6,342.5 C259.2,343.0 259.4,343.6 259.6,344.2 C259.7,344.9 260.2,346.0 259.8,346.3Z" fill="#c6ddad"/>
<path d="M289.2,290.0 C289.5,289.3 290.3,288.8 290.9,288.6 C291.5,288.3 292.2,288.5 292.9,288.5 C293.6,288.6 295.1,288.4 295.3,288.7 C295.5,289.1 294.4,290.0 294.2,290.6 C294.0,291.1 294.4,291.6 294.1,292.0 C293.7,292.4 293.0,292.7 292.1,292.8 C291.2,292.8 289.4,293.0 288.9,292.5 C288.4,292.0 288.9,290.6 289.2,290.0Z" fill="#c6ddad"/>
<path d="M316.0,321.0 C316.5,319.9 316.0,318.6 317.0,318.0 C318.0,317.4 321.1,316.9 321.9,317.4 C322.7,317.9 322.0,320.2 322.0,321.3 C321.9,322.3 322.3,322.7 321.7,323.7 C321.1,324.8 319.7,327.4 318.4,327.5 C317.0,327.6 314.2,325.5 313.8,324.4 C313.4,323.4 315.5,322.0 316.0,321.0Z" fill="#c6ddad"/>
<path d="M247.7,152.7 C246.6,152.8 245.6,153.5 244.7,153.2 C243.9,152.9 243.0,151.9 242.7,151.0 C242.3,150.1 241.8,148.2 242.5,147.6 C243.2,147.1 245.3,147.8 246.8,147.6 C248.2,147.4 250.1,145.9 251.2,146.3 C252.3,146.7 253.4,148.6 253.4,149.7 C253.5,150.8 252.3,152.4 251.4,152.9 C250.4,153.4 248.8,152.7 247.7,152.7Z" fill="#c6ddad"/>
<path d="M263.5,346.7 C262.4,347.0 259.9,347.7 259.2,347.3 C258.6,346.8 259.5,345.1 259.5,343.8 C259.6,342.6 258.8,340.4 259.7,339.9 C260.5,339.4 263.4,340.2 264.5,340.8 C265.5,341.4 265.8,342.5 266.0,343.3 C266.2,344.1 266.3,344.9 265.8,345.5 C265.4,346.1 264.6,346.4 263.5,346.7Z" fill="#c6ddad"/>
<path d="M294.2,262.8 C294.6,264.1 294.4,264.6 294.1,266.1 C293.8,267.5 293.8,271.0 292.3,271.5 C290.9,272.1 287.6,270.6 285.5,269.5 C283.5,268.4 280.1,266.4 280.2,265.0 C280.3,263.6 284.3,262.3 286.2,261.2 C288.0,260.1 290.0,258.2 291.4,258.5 C292.7,258.8 293.7,261.6 294.2,262.8Z" fill="#c6ddad"/>
<path d="M253.3,115.4 C252.5,115.8 250.0,115.3 249.3,114.8 C248.7,114.2 249.6,112.9 249.4,112.0 C249.3,111.1 248.0,110.0 248.3,109.6 C248.6,109.1 250.6,109.1 251.5,109.2 C252.4,109.3 253.4,109.7 253.9,110.2 C254.4,110.8 254.3,111.5 254.2,112.3 C254.2,113.2 254.2,115.0 253.3,115.4Z" fill="#c6ddad"/>
<path d="M253.5,94.0 C252.9,93.5 253.8,91.7 254.2,90.8 C254.6,89.8 255.1,88.4 256.0,88.1 C256.9,87.8 258.3,88.6 259.5,88.9 C260.7,89.1 262.7,89.1 263.1,89.7 C263.5,90.3 262.2,91.5 261.8,92.5 C261.5,93.5 261.8,95.3 261.1,95.5 C260.4,95.8 259.1,94.0 257.8,93.7 C256.5,93.5 254.1,94.5 253.5,94.0Z" fill="#c6ddad"/>
<path d="M309.8,208.1 C309.6,209.1 310.1,210.4 309.4,211.1 C308.7,211.7 306.6,212.3 305.7,212.0 C304.8,211.6 304.5,209.7 304.1,209.0 C303.7,208.3 303.4,208.3 303.3,207.8 C303.2,207.4 303.4,207.3 303.5,206.4 C303.6,205.6 303.1,203.0 303.7,202.8 C304.3,202.5 305.9,204.5 307.0,204.9 C308.1,205.3 310.1,204.8 310.6,205.4 C311.1,205.9 310.0,207.2 309.8,208.1Z" fill="#c6ddad"/>
<path d="M271.4,335.1 C272.8,334.6 276.7,335.0 277.6,335.9 C278.5,336.9 276.7,339.3 276.6,340.9 C276.5,342.4 277.8,344.2 277.0,345.1 C276.2,346.0 273.6,346.3 271.8,346.4 C269.9,346.5 267.6,346.5 266.1,345.6 C264.6,344.7 262.3,342.2 262.8,341.1 C263.2,340.0 267.5,339.9 268.9,338.9 C270.4,337.9 270.0,335.6 271.4,335.1Z" fill="#c6ddad"/>
<path d="M335.8,208.7 C336.4,209.5 333.1,212.0 332.4,213.4 C331.7,214.9 332.5,217.1 331.6,217.4 C330.7,217.8 329.0,215.7 327.0,215.6 C324.9,215.4 320.1,217.4 319.3,216.7 C318.5,216.1 321.5,213.1 322.2,211.5 C322.9,209.8 322.3,207.2 323.5,206.8 C324.6,206.3 327.0,208.5 329.0,208.8 C331.1,209.1 335.2,207.9 335.8,208.7Z" fill="#c6ddad"/>
<path d="M262.3,315.5 C262.5,314.5 264.2,313.7 265.4,313.2 C266.7,312.7 268.4,312.1 269.7,312.6 C271.0,313.1 273.1,315.0 273.0,316.1 C272.9,317.3 270.8,319.0 269.3,319.5 C267.7,320.1 265.1,320.1 263.9,319.4 C262.7,318.8 262.0,316.5 262.3,315.5Z" fill="#c6ddad"/>
<path d="M257.2,203.9 C256.6,203.8 256.0,203.5 255.6,203.0 C255.2,202.5 254.5,201.5 254.8,200.9 C255.2,200.2 256.9,199.2 257.8,199.3 C258.6,199.4 259.9,200.6 260.1,201.3 C260.4,202.0 259.8,203.0 259.4,203.4 C258.9,203.9 257.9,203.9 257.2,203.9Z" fill="#c6ddad"/>
<path d="M290.9,248.7 C292.5,249.0 294.4,250.4 294.8,251.5 C295.3,252.7 294.8,254.7 293.8,255.6 C292.9,256.5 290.5,257.1 289.0,256.9 C287.6,256.6 285.8,255.4 285.1,254.3 C284.5,253.1 284.3,250.6 285.2,249.7 C286.2,248.8 289.3,248.4 290.9,248.7Z" fill="#c6ddad"/>
<path d="M258.8,155.2 C257.4,154.6 254.8,154.2 254.5,153.4 C254.3,152.6 256.3,150.8 257.3,150.3 C258.4,149.7 259.4,150.0 260.7,149.9 C262.0,149.9 264.2,149.3 264.9,149.9 C265.7,150.4 265.6,152.3 265.3,153.4 C265.0,154.6 264.2,156.7 263.1,157.0 C262.0,157.3 260.3,155.8 258.8,155.2Z" fill="#c6ddad"/>
<path d="M253.6,213.2 C254.0,214.6 256.0,214.9 255.9,215.7 C255.8,216.4 254.1,217.2 253.1,217.8 C252.2,218.4 251.7,218.5 250.1,219.1 C248.4,219.7 244.6,222.1 243.2,221.6 C241.9,221.1 242.5,217.9 242.1,216.1 C241.7,214.3 240.0,211.9 240.9,210.9 C241.8,209.9 245.6,210.6 247.7,210.0 C249.7,209.5 252.3,206.8 253.2,207.4 C254.2,207.9 253.2,211.8 253.6,213.2Z" fill="#c6ddad"/>
<path d="M300.2,162.7 C299.2,164.0 294.8,165.6 292.9,165.2 C291.1,164.8 289.8,162.0 289.1,160.4 C288.5,158.9 288.2,156.6 289.1,155.7 C290.0,154.9 293.1,154.8 294.7,155.1 C296.3,155.3 297.9,156.0 298.8,157.3 C299.8,158.6 301.2,161.4 300.2,162.7Z" fill="#c6ddad"/>
<path d="M272.7,241.3 C274.1,241.8 274.8,244.7 275.0,246.2 C275.3,247.7 274.8,248.9 273.9,250.1 C273.1,251.3 270.9,253.3 269.7,253.2 C268.4,253.1 267.1,250.5 266.5,249.5 C265.8,248.4 265.9,248.0 265.8,246.9 C265.8,245.8 265.2,243.9 266.3,242.9 C267.5,242.0 271.2,240.8 272.7,241.3Z" fill="#c6ddad"/>
<path d="M295.5,194.8 C297.4,194.1 297.6,193.7 299.4,193.6 C301.2,193.6 305.2,193.4 306.1,194.4 C306.9,195.4 305.5,198.5 304.5,199.7 C303.4,201.0 301.5,201.8 299.8,202.0 C298.2,202.3 296.8,202.1 294.8,201.3 C292.8,200.6 287.9,198.8 288.0,197.7 C288.1,196.6 293.6,195.5 295.5,194.8Z" fill="#c6ddad"/>
<path d="M282.5,239.4 C282.8,240.2 281.7,241.7 280.8,242.3 C279.9,243.0 278.1,243.2 277.0,243.1 C275.9,243.0 274.9,242.1 274.2,241.6 C273.4,241.0 273.1,240.5 272.5,239.7 C272.0,238.8 270.3,237.2 270.7,236.5 C271.1,235.8 273.8,235.7 274.9,235.6 C276.1,235.6 276.9,236.1 277.6,236.4 C278.3,236.8 278.3,237.1 279.2,237.6 C280.0,238.0 282.2,238.6 282.5,239.4Z" fill="#c6ddad"/>
<path d="M250.4,243.4 C249.3,243.9 249.2,244.1 248.0,244.3 C246.9,244.4 243.8,244.9 243.2,244.3 C242.7,243.6 243.9,241.6 244.5,240.6 C245.1,239.5 245.7,238.5 247.0,238.0 C248.3,237.4 251.0,236.8 252.2,237.4 C253.4,238.0 254.6,240.4 254.2,241.4 C253.9,242.4 251.4,242.9 250.4,243.4Z" fill="#c6ddad"/>
<path d="M260.8,181.0 C261.1,181.9 262.1,182.2 262.0,183.0 C261.8,183.7 260.9,185.0 259.9,185.3 C258.9,185.7 256.3,185.6 255.7,185.0 C255.1,184.5 256.0,182.6 256.3,181.9 C256.6,181.1 256.8,181.1 257.3,180.4 C257.9,179.8 259.2,177.8 259.8,177.9 C260.4,178.0 260.4,180.2 260.8,181.0Z" fill="#c6ddad"/>
<path d="M239.6,328.7 C240.3,328.0 243.4,328.1 244.9,328.5 C246.4,328.8 248.2,329.9 248.6,330.8 C248.9,331.7 247.5,333.0 246.9,333.9 C246.3,334.8 246.0,336.1 244.9,336.4 C243.9,336.8 241.3,336.6 240.6,336.0 C240.0,335.4 241.2,334.0 241.0,332.8 C240.9,331.6 239.0,329.4 239.6,328.7Z" fill="#c6ddad"/>
<path d="M291.1,131.8 C290.7,133.8 288.6,137.3 286.8,137.6 C285.0,137.8 282.9,134.3 280.4,133.3 C277.9,132.4 272.2,132.7 271.8,131.7 C271.5,130.7 276.7,128.7 278.6,127.2 C280.4,125.8 281.1,123.0 282.9,122.7 C284.8,122.5 288.2,124.3 289.6,125.8 C291.0,127.4 291.6,129.9 291.1,131.8Z" fill="#c6ddad"/>
<path d="M285.8,244.3 C285.8,243.6 287.4,243.0 287.8,242.1 C288.3,241.2 287.7,239.2 288.5,238.8 C289.3,238.4 291.6,238.9 292.5,239.4 C293.4,240.0 293.4,241.1 294.0,242.1 C294.5,243.0 296.3,244.3 296.1,245.3 C295.8,246.2 293.8,247.7 292.5,247.9 C291.2,248.1 289.3,247.2 288.2,246.6 C287.1,246.0 285.9,245.1 285.8,244.3Z" fill="#c6ddad"/>
<path d="M258.1,216.2 C257.2,215.7 255.7,215.1 255.7,214.5 C255.7,213.9 257.0,213.0 257.8,212.5 C258.7,212.0 260.0,211.4 260.6,211.7 C261.2,211.9 261.3,213.3 261.4,213.9 C261.6,214.5 261.8,214.6 261.7,215.2 C261.6,215.9 261.4,217.8 260.8,218.0 C260.2,218.2 258.9,216.8 258.1,216.2Z" fill="#c6ddad"/>
<path d="M274.6,276.5 C275.1,276.4 276.4,277.4 277.0,277.7 C277.6,277.9 277.6,277.8 278.1,278.0 C278.6,278.2 279.9,278.3 280.2,278.8 C280.5,279.2 280.2,280.4 279.8,280.7 C279.3,280.9 278.0,280.5 277.3,280.5 C276.7,280.5 276.7,280.5 276.0,280.5 C275.3,280.4 273.4,280.7 273.1,280.4 C272.9,280.1 274.2,279.2 274.5,278.5 C274.8,277.9 274.2,276.7 274.6,276.5Z" fill="#c6ddad"/>
<path d="M321.9,277.7 C322.4,277.2 323.0,276.8 323.8,276.6 C324.7,276.4 325.9,276.2 326.9,276.6 C327.8,276.9 329.4,278.0 329.5,278.8 C329.5,279.6 327.8,280.6 327.0,281.1 C326.2,281.6 325.5,281.3 324.4,281.6 C323.3,281.8 321.3,283.0 320.6,282.6 C319.9,282.3 320.2,280.3 320.4,279.5 C320.6,278.7 321.3,278.2 321.9,277.7Z" fill="#c6ddad"/>
<path d="M314.9,252.3 C314.8,252.7 314.3,252.9 313.6,253.6 C312.9,254.2 311.8,256.1 310.9,256.1 C310.0,256.1 308.9,254.6 308.2,253.7 C307.6,252.8 306.5,251.4 306.9,250.7 C307.3,250.1 309.7,250.4 310.7,249.9 C311.8,249.4 312.7,247.7 313.3,247.8 C313.9,248.0 314.1,249.9 314.3,250.7 C314.6,251.4 315.0,251.8 314.9,252.3Z" fill="#c6ddad"/>
<path d="M299.7,255.7 C300.2,254.7 300.3,252.8 301.2,252.7 C302.1,252.5 303.5,254.6 304.9,254.8 C306.3,254.9 308.8,253.1 309.6,253.5 C310.4,253.9 310.0,256.1 309.7,257.1 C309.3,258.0 308.3,258.4 307.6,259.2 C306.9,260.0 306.3,261.7 305.5,261.8 C304.6,261.9 303.8,260.1 302.6,259.6 C301.3,259.1 298.5,259.6 298.0,259.0 C297.5,258.3 299.1,256.8 299.7,255.7Z" fill="#c6ddad"/>
<path d="M311.3,191.3 C309.2,191.5 305.9,192.7 304.8,191.9 C303.7,191.0 305.0,187.9 304.8,186.4 C304.7,184.9 303.2,183.7 303.7,182.8 C304.1,181.9 306.2,181.8 307.7,180.9 C309.1,179.9 310.9,177.1 312.6,177.1 C314.3,177.0 316.7,179.0 317.9,180.4 C319.2,181.8 320.4,183.8 320.3,185.4 C320.2,187.1 319.0,189.3 317.5,190.3 C316.0,191.3 313.4,191.0 311.3,191.3Z" fill="#c6ddad"/>
<path d="M256.6,166.4 C256.8,165.6 260.9,165.2 262.2,164.6 C263.6,164.1 263.5,163.6 264.7,163.2 C265.9,162.8 268.6,161.7 269.2,162.2 C269.8,162.7 268.6,165.2 268.5,166.2 C268.3,167.2 268.3,167.3 268.2,168.0 C268.0,168.8 268.2,170.5 267.5,170.9 C266.8,171.2 265.3,170.2 264.2,170.0 C263.0,169.8 262.0,170.1 260.7,169.5 C259.5,168.9 256.3,167.2 256.6,166.4Z" fill="#c6ddad"/>
<path d="M260.2,248.0 C259.4,247.5 260.8,244.3 261.4,243.1 C261.9,242.0 262.5,242.1 263.6,241.2 C264.6,240.2 266.2,237.4 267.6,237.3 C269.1,237.3 271.7,239.7 272.2,241.1 C272.7,242.5 271.6,244.7 270.5,245.6 C269.5,246.4 267.8,245.7 266.1,246.1 C264.4,246.5 261.0,248.5 260.2,248.0Z" fill="#c6ddad"/>
<path d="M257.7,264.3 C258.1,265.1 260.1,266.2 259.9,267.0 C259.7,267.9 257.7,269.0 256.6,269.1 C255.4,269.3 253.8,268.3 252.9,267.7 C252.0,267.1 251.2,266.3 251.0,265.4 C250.8,264.6 251.0,263.4 251.6,262.7 C252.1,262.0 253.5,261.5 254.5,261.4 C255.5,261.3 257.1,261.4 257.6,261.9 C258.2,262.4 257.4,263.4 257.7,264.3Z" fill="#c6ddad"/>
<path d="M256.1,92.1 C255.8,91.4 256.2,91.2 256.4,90.5 C256.7,89.9 257.2,88.2 257.7,88.2 C258.2,88.1 258.8,89.7 259.3,90.4 C259.8,91.1 260.9,91.5 260.7,92.2 C260.5,92.8 259.0,94.4 258.2,94.4 C257.5,94.4 256.4,92.7 256.1,92.1Z" fill="#c6ddad"/>
<path d="M256.7,139.9 C257.9,140.6 259.0,140.5 259.6,141.2 C260.1,141.9 260.3,143.3 260.0,144.0 C259.6,144.6 258.1,144.4 257.2,145.3 C256.3,146.3 255.9,149.4 254.7,149.8 C253.4,150.2 250.9,148.7 249.8,147.7 C248.6,146.7 247.3,144.8 247.7,143.8 C248.1,142.8 251.5,142.8 252.3,141.6 C253.1,140.5 251.9,137.1 252.6,136.8 C253.4,136.5 255.6,139.2 256.7,139.9Z" fill="#c6ddad"/>
<path d="M269.5,121.5 C268.6,122.4 265.9,123.0 264.3,122.7 C262.8,122.4 260.5,120.7 260.3,119.7 C260.2,118.7 262.5,117.3 263.5,116.8 C264.5,116.3 265.2,116.6 266.3,116.7 C267.3,116.8 269.4,116.7 270.0,117.5 C270.5,118.3 270.5,120.6 269.5,121.5Z" fill="#c6ddad"/>
<path d="M320.1,278.6 C318.0,278.6 313.9,275.8 313.6,274.2 C313.4,272.6 317.6,270.5 318.6,268.9 C319.5,267.2 318.4,264.8 319.4,264.3 C320.4,263.8 322.6,265.5 324.8,265.7 C327.1,266.0 331.5,264.6 333.0,265.7 C334.4,266.8 334.6,271.0 333.4,272.4 C332.3,273.7 328.2,273.0 326.0,274.0 C323.8,275.1 322.2,278.6 320.1,278.6Z" fill="#c6ddad"/>
<path d="M255.9,331.8 C255.0,331.4 252.9,331.8 252.5,331.3 C252.0,330.8 252.9,329.5 253.3,328.8 C253.7,328.0 254.2,327.2 254.9,326.8 C255.7,326.4 256.8,326.4 257.8,326.4 C258.9,326.4 260.7,326.4 261.2,326.9 C261.7,327.5 260.8,328.8 260.8,329.7 C260.8,330.6 261.5,331.6 261.0,332.2 C260.6,332.8 259.0,333.3 258.1,333.2 C257.3,333.2 256.8,332.1 255.9,331.8Z" fill="#c6ddad"/>
<path d="M325.4,242.2 C324.6,241.7 324.1,239.8 324.5,239.1 C324.9,238.3 326.8,237.9 327.7,237.7 C328.6,237.5 329.4,237.8 330.1,238.1 C330.7,238.4 331.3,238.6 331.7,239.3 C332.2,240.0 333.3,241.8 332.9,242.3 C332.4,242.8 330.3,242.3 329.1,242.2 C327.8,242.2 326.1,242.8 325.4,242.2Z" fill="#c6ddad"/>
<path d="M238.4,121.2 C240.1,121.1 241.8,123.7 243.4,124.8 C244.9,126.0 247.8,127.1 247.7,128.2 C247.6,129.2 244.8,130.7 242.7,131.3 C240.7,132.0 237.2,133.0 235.5,132.1 C233.8,131.2 232.3,127.7 232.8,125.9 C233.2,124.1 236.6,121.4 238.4,121.2Z" fill="#c6ddad"/>
<path d="M264.1,118.7 C264.5,118.9 264.7,119.8 264.6,120.2 C264.6,120.5 264.1,120.9 263.8,121.0 C263.4,121.2 263.1,121.2 262.6,121.1 C262.1,120.9 260.8,120.6 260.8,120.3 C260.8,120.0 261.8,119.6 262.4,119.3 C262.9,119.0 263.7,118.6 264.1,118.7Z" fill="#e9eee0"/>
<path d="M278.5,201.2 C278.7,201.6 279.6,201.8 279.6,202.2 C279.7,202.6 279.1,203.2 278.6,203.4 C278.1,203.6 277.2,203.5 276.8,203.3 C276.3,203.1 275.9,202.6 275.7,202.3 C275.6,201.9 275.7,201.4 275.9,201.1 C276.1,200.8 276.5,200.8 276.9,200.6 C277.3,200.4 278.0,199.8 278.3,199.9 C278.5,200.0 278.2,200.9 278.5,201.2Z" fill="#e9eee0"/>
<path d="M299.9,116.1 C299.9,115.2 300.5,112.6 301.3,112.4 C302.1,112.3 303.5,114.3 304.6,115.2 C305.7,116.1 308.2,117.0 308.0,117.7 C307.9,118.3 304.8,118.8 303.7,118.8 C302.6,118.9 302.0,118.4 301.4,117.9 C300.8,117.5 300.0,117.0 299.9,116.1Z" fill="#e9eee0"/>
<path d="M260.3,292.6 C258.3,291.4 255.0,290.9 254.8,289.4 C254.6,287.9 256.7,284.5 259.0,283.6 C261.2,282.6 266.4,282.5 268.2,283.6 C270.0,284.8 270.2,288.2 269.9,290.5 C269.6,292.7 268.3,296.5 266.7,296.9 C265.1,297.2 262.3,293.9 260.3,292.6Z" fill="#e9eee0"/>
<path d="M304.2,241.3 C304.3,241.7 304.1,242.0 303.9,242.5 C303.7,243.1 303.6,244.5 303.0,244.7 C302.4,244.9 300.8,244.2 300.3,243.7 C299.8,243.2 299.9,242.5 299.9,241.7 C299.9,241.0 299.8,239.8 300.3,239.5 C300.8,239.1 302.5,239.5 303.2,239.8 C303.8,240.1 304.0,240.8 304.2,241.3Z" fill="#e9eee0"/>
<path d="M252.4,174.9 C252.6,175.3 252.3,175.8 252.3,176.3 C252.3,176.7 252.4,177.3 252.2,177.6 C251.9,177.8 251.0,177.8 250.6,177.8 C250.1,177.8 249.7,177.6 249.4,177.5 C249.0,177.3 248.6,177.1 248.4,176.8 C248.2,176.5 248.0,175.9 248.2,175.6 C248.3,175.3 249.1,175.5 249.5,175.2 C250.0,174.9 250.4,173.8 250.9,173.8 C251.3,173.7 252.1,174.5 252.4,174.9Z" fill="#e9eee0"/>
<path d="M316.0,338.6 C315.6,338.4 315.6,337.8 315.5,337.2 C315.5,336.7 315.3,335.4 315.8,335.1 C316.3,334.8 318.0,335.2 318.7,335.6 C319.4,336.0 320.1,337.1 320.0,337.6 C319.8,338.1 318.4,338.4 317.8,338.5 C317.1,338.7 316.3,338.9 316.0,338.6Z" fill="#e9eee0"/>
<path d="M290.1,296.5 C288.9,296.0 287.4,294.5 287.3,293.5 C287.1,292.5 288.3,290.9 289.3,290.3 C290.3,289.7 291.6,290.0 293.0,290.0 C294.4,290.0 296.6,289.6 297.5,290.3 C298.4,291.0 299.0,293.2 298.5,294.3 C298.1,295.4 296.0,296.4 294.6,296.7 C293.2,297.1 291.3,297.1 290.1,296.5Z" fill="#e9eee0"/>
<path d="M327.7,250.1 C326.7,249.8 324.2,249.7 323.9,249.1 C323.6,248.4 324.8,246.6 325.6,246.1 C326.5,245.7 327.7,246.6 328.9,246.6 C330.1,246.6 332.5,245.6 332.9,246.0 C333.2,246.4 331.4,248.0 330.9,248.8 C330.5,249.6 330.6,250.4 330.1,250.6 C329.5,250.8 328.7,250.3 327.7,250.1Z" fill="#e9eee0"/>
<path d="M263.5,256.4 C263.8,256.6 263.1,257.1 263.1,257.7 C263.1,258.2 263.7,259.4 263.4,259.6 C263.0,259.8 261.6,259.4 261.1,259.1 C260.6,258.8 260.6,258.4 260.3,257.9 C260.0,257.4 259.0,256.3 259.3,256.0 C259.5,255.7 261.1,256.0 261.8,256.1 C262.5,256.1 263.3,256.1 263.5,256.4Z" fill="#e9eee0"/>
<path d="M239.4,152.1 C240.7,152.0 243.1,154.5 244.1,155.9 C245.0,157.2 245.7,159.0 245.0,160.2 C244.4,161.5 241.8,163.5 240.2,163.5 C238.6,163.5 236.3,161.5 235.6,160.4 C234.9,159.2 235.5,158.1 236.2,156.7 C236.8,155.3 238.0,152.2 239.4,152.1Z" fill="#e9eee0"/>
<path d="M331.7,270.1 C333.0,269.5 334.7,269.6 336.4,269.8 C338.0,270.0 341.0,270.5 341.4,271.3 C341.8,272.2 339.5,273.9 338.7,275.0 C337.9,276.1 338.0,277.5 336.6,278.1 C335.3,278.7 332.0,279.3 330.6,278.5 C329.2,277.8 327.9,275.2 328.0,273.8 C328.2,272.4 330.3,270.8 331.7,270.1Z" fill="#e9eee0"/>
<path d="M285.2,209.3 C285.0,208.4 285.4,206.8 286.3,206.0 C287.1,205.2 289.2,204.3 290.4,204.5 C291.5,204.7 292.7,206.4 293.2,207.2 C293.7,208.0 292.8,208.5 293.3,209.3 C293.9,210.1 296.5,211.2 296.5,212.1 C296.5,213.0 294.6,214.7 293.5,214.8 C292.4,214.8 290.9,212.7 289.9,212.2 C289.0,211.6 288.5,211.9 287.7,211.5 C286.9,211.0 285.5,210.2 285.2,209.3Z" fill="#e9eee0"/>
<path d="M260.6,277.5 C261.0,275.9 259.9,274.0 261.0,273.2 C262.0,272.4 265.1,272.4 267.0,272.8 C268.8,273.3 271.6,274.6 272.1,275.9 C272.7,277.2 271.4,279.5 270.3,280.8 C269.1,282.1 267.4,283.5 265.4,283.8 C263.5,284.2 259.4,283.8 258.6,282.8 C257.8,281.7 260.2,279.1 260.6,277.5Z" fill="#e9eee0"/>
<path d="M307.8,197.9 C308.1,199.1 308.7,200.8 307.7,202.0 C306.7,203.3 303.7,205.5 301.8,205.4 C299.9,205.2 297.2,202.8 296.3,201.2 C295.5,199.6 295.7,197.4 296.5,195.9 C297.4,194.5 299.6,192.6 301.2,192.4 C302.7,192.3 305.0,193.9 306.1,194.8 C307.2,195.7 307.6,196.7 307.8,197.9Z" fill="#e9eee0"/>
<path d="M283.8,105.7 C284.3,105.4 284.9,105.2 285.3,105.3 C285.8,105.4 286.0,106.0 286.3,106.2 C286.6,106.4 287.0,106.5 287.1,106.7 C287.3,107.0 287.3,107.3 287.2,107.7 C287.1,108.1 287.1,109.0 286.7,109.2 C286.3,109.5 285.3,109.5 284.7,109.4 C284.0,109.2 283.3,108.8 283.0,108.4 C282.6,108.0 282.4,107.3 282.5,106.8 C282.7,106.3 283.3,105.9 283.8,105.7Z" fill="#e9eee0"/>
<path d="M298.3,128.5 C299.9,129.0 301.6,131.6 301.9,133.2 C302.1,134.8 301.3,137.5 300.0,138.2 C298.6,138.9 296.2,138.0 294.0,137.5 C291.7,137.0 286.8,136.2 286.5,135.1 C286.3,133.9 290.3,131.6 292.2,130.5 C294.2,129.4 296.7,128.1 298.3,128.5Z" fill="#e9eee0"/>
<path d="M325.4,304.5 C325.2,305.8 324.3,307.0 323.4,308.0 C322.4,309.0 320.9,310.4 319.6,310.5 C318.3,310.6 316.8,309.3 315.4,308.7 C314.0,308.1 311.5,307.7 311.2,306.9 C311.0,306.0 313.4,304.7 314.0,303.6 C314.5,302.4 313.6,300.7 314.5,299.9 C315.3,299.2 317.5,299.2 319.1,299.2 C320.8,299.3 323.5,299.3 324.5,300.2 C325.6,301.0 325.6,303.2 325.4,304.5Z" fill="#e9eee0"/>
<path d="M319.0,220.8 C318.2,220.3 318.5,218.3 318.4,217.1 C318.4,215.9 318.1,214.7 318.7,213.8 C319.4,212.9 321.4,211.4 322.5,211.5 C323.6,211.6 324.0,213.7 325.4,214.5 C326.9,215.2 331.0,215.3 331.1,216.0 C331.3,216.7 327.5,217.9 326.3,218.6 C325.0,219.4 324.9,220.1 323.7,220.5 C322.5,220.8 319.9,221.4 319.0,220.8Z" fill="#e9eee0"/>
<path d="M286.5,110.9 C287.7,110.8 290.2,110.1 291.0,110.6 C291.7,111.2 291.6,113.4 290.9,114.1 C290.3,114.8 288.2,114.8 287.3,114.9 C286.3,115.1 286.5,115.0 285.4,115.2 C284.3,115.4 281.2,116.6 280.4,116.1 C279.7,115.6 280.2,113.2 280.8,112.4 C281.4,111.5 283.0,111.2 284.0,110.9 C285.0,110.7 285.4,110.9 286.5,110.9Z" fill="#e9eee0"/>
<path d="M248.8,129.5 C248.1,129.1 246.4,129.5 246.0,129.1 C245.7,128.7 246.0,127.4 246.5,127.0 C247.0,126.6 248.3,127.1 249.0,126.8 C249.8,126.5 250.3,125.2 250.9,125.2 C251.5,125.2 252.1,126.2 252.5,126.8 C252.9,127.3 253.6,127.9 253.5,128.5 C253.5,129.1 252.8,129.7 252.3,130.1 C251.7,130.6 250.8,131.5 250.3,131.4 C249.7,131.3 249.5,129.9 248.8,129.5Z" fill="#e9eee0"/>
<path d="M260.7,269.8 C261.6,269.7 261.9,269.6 262.6,269.6 C263.4,269.6 264.4,269.4 265.3,269.8 C266.1,270.2 267.8,271.2 267.8,271.9 C267.8,272.7 266.1,273.5 265.3,274.1 C264.4,274.7 263.7,275.4 262.8,275.5 C261.8,275.6 260.9,275.1 259.8,274.8 C258.7,274.4 256.7,274.1 256.3,273.4 C255.9,272.6 256.5,270.9 257.2,270.3 C257.9,269.7 259.8,269.9 260.7,269.8Z" fill="#e9eee0"/>
<path d="M270.4,136.6 C269.3,137.3 266.8,138.4 265.7,138.0 C264.6,137.5 263.5,135.2 263.6,134.1 C263.7,133.0 265.1,131.9 266.3,131.4 C267.4,130.8 269.4,130.3 270.5,130.7 C271.5,131.1 272.7,132.8 272.7,133.8 C272.7,134.8 271.6,136.0 270.4,136.6Z" fill="#e9eee0"/>
<path d="M255.4,182.1 C256.4,180.9 259.7,179.2 261.1,179.5 C262.5,179.8 263.1,182.3 263.9,183.9 C264.6,185.4 266.3,187.9 265.5,188.7 C264.7,189.6 260.8,189.4 259.1,189.0 C257.4,188.7 255.9,187.6 255.3,186.4 C254.7,185.3 254.4,183.2 255.4,182.1Z" fill="#e9eee0"/>
<path d="M325.9,257.1 C325.2,256.8 325.0,255.6 324.7,254.8 C324.4,254.0 323.7,252.6 324.2,252.1 C324.7,251.7 326.7,252.0 327.6,252.1 C328.6,252.1 329.3,252.0 329.8,252.2 C330.3,252.5 330.8,253.3 330.8,253.8 C330.8,254.2 330.2,254.6 329.9,255.1 C329.5,255.5 329.5,256.0 328.8,256.3 C328.1,256.7 326.5,257.4 325.9,257.1Z" fill="#e9eee0"/>
<path d="M284.1,218.2 C284.6,218.8 284.5,219.2 284.6,219.8 C284.6,220.4 284.9,221.4 284.5,221.7 C284.1,222.0 282.8,221.7 282.1,221.6 C281.5,221.5 281.1,221.5 280.4,221.3 C279.7,221.0 278.0,220.4 278.0,219.9 C278.0,219.5 279.9,219.3 280.5,218.6 C281.2,218.0 281.4,216.0 282.0,215.9 C282.6,215.9 283.7,217.5 284.1,218.2Z" fill="#e9eee0"/>
<path d="M246.1,350.6 C246.6,350.0 246.1,349.3 246.4,349.1 C246.8,348.9 247.7,349.4 248.3,349.5 C248.9,349.6 249.2,349.4 250.0,349.6 C250.9,349.8 253.1,350.2 253.3,350.8 C253.6,351.4 252.1,352.4 251.4,353.0 C250.7,353.6 250.0,354.2 249.1,354.4 C248.2,354.7 247.0,354.8 246.0,354.5 C245.1,354.2 243.4,353.4 243.4,352.8 C243.4,352.1 245.5,351.2 246.1,350.6Z" fill="#e9eee0"/>
<path d="M316.0,256.4 C315.0,256.7 312.5,255.5 311.3,254.5 C310.1,253.6 308.4,251.4 308.8,250.6 C309.3,249.7 312.6,249.7 314.0,249.6 C315.4,249.5 316.6,249.6 317.2,250.1 C317.7,250.6 317.5,251.5 317.3,252.6 C317.1,253.6 317.0,256.0 316.0,256.4Z" fill="#e9eee0"/>
<path d="M310.1,158.6 C310.0,159.2 310.8,160.1 310.5,160.5 C310.2,160.9 309.1,161.0 308.2,161.1 C307.4,161.2 305.9,161.4 305.4,161.0 C304.8,160.6 305.1,159.4 305.2,158.7 C305.2,158.0 305.3,157.5 305.6,156.9 C305.9,156.3 306.4,155.4 307.1,155.1 C307.8,154.8 309.3,155.0 309.9,155.3 C310.6,155.7 311.0,156.7 311.0,157.2 C311.1,157.8 310.2,158.1 310.1,158.6Z" fill="#e9eee0"/>
<path d="M241.3,269.0 C241.1,268.4 242.6,267.7 243.4,266.9 C244.1,266.1 245.1,264.2 245.9,264.2 C246.7,264.2 247.9,266.1 248.4,266.9 C248.8,267.7 248.9,268.6 248.6,269.2 C248.3,269.8 247.2,270.2 246.5,270.4 C245.8,270.6 245.2,270.5 244.3,270.2 C243.4,270.0 241.4,269.6 241.3,269.0Z" fill="#e9eee0"/>
<path d="M324.7,126.1 C322.6,126.3 320.0,127.0 319.0,126.2 C318.0,125.4 318.3,122.9 318.9,121.4 C319.5,119.9 320.8,117.6 322.4,117.2 C324.0,116.9 327.1,118.1 328.6,119.4 C330.1,120.7 332.2,123.7 331.6,124.8 C330.9,125.9 326.8,125.9 324.7,126.1Z" fill="#e9eee0"/>
<path d="M331.2,274.3 C330.7,274.3 329.8,273.4 329.5,272.8 C329.3,272.2 329.4,271.3 329.9,270.7 C330.5,270.2 331.9,269.6 332.8,269.8 C333.7,269.9 335.2,271.1 335.2,271.7 C335.2,272.2 333.6,272.7 332.9,273.2 C332.2,273.6 331.8,274.4 331.2,274.3Z" fill="#e9eee0"/>
<path d="M237.1,109.4 C235.9,108.5 234.3,106.6 234.7,105.0 C235.1,103.3 237.4,100.2 239.5,99.8 C241.6,99.4 246.0,101.1 247.3,102.6 C248.6,104.1 248.4,107.3 247.5,108.7 C246.6,110.0 243.7,110.7 242.0,110.8 C240.2,111.0 238.4,110.4 237.1,109.4Z" fill="#e9eee0"/>
<path d="M291.8,139.0 C290.0,137.6 288.9,134.9 289.4,133.3 C289.8,131.8 292.8,130.2 294.6,129.8 C296.5,129.4 298.8,129.9 300.5,130.9 C302.2,131.8 305.1,133.9 304.9,135.7 C304.8,137.5 302.0,141.0 299.8,141.5 C297.6,142.1 293.5,140.4 291.8,139.0Z" fill="#e9eee0"/>
<path d="M334.0,236.9 C334.5,236.3 336.6,235.5 337.6,235.8 C338.6,236.0 339.6,237.2 340.0,238.2 C340.4,239.1 340.5,240.7 339.8,241.3 C339.0,241.9 336.5,242.3 335.7,241.9 C334.9,241.6 335.3,240.2 335.0,239.3 C334.7,238.5 333.6,237.5 334.0,236.9Z" fill="#e9eee0"/>
<path d="M252.3,311.4 C251.4,310.8 251.0,309.1 251.1,307.8 C251.2,306.6 251.6,304.6 252.8,303.9 C254.0,303.3 257.1,303.2 258.2,303.8 C259.4,304.3 259.7,306.4 259.7,307.4 C259.7,308.3 258.8,308.7 258.3,309.4 C257.8,310.0 257.6,310.9 256.6,311.2 C255.6,311.5 253.2,312.0 252.3,311.4Z" fill="#e9eee0"/>
<path d="M289.7,247.1 C287.5,246.7 283.8,247.2 283.0,245.9 C282.1,244.6 283.0,240.2 284.5,239.4 C285.9,238.6 289.2,240.6 291.6,241.1 C294.0,241.5 298.1,241.0 298.8,242.2 C299.6,243.4 297.6,247.5 296.1,248.3 C294.6,249.1 291.9,247.5 289.7,247.1Z" fill="#e9eee0"/>
<path d="M302.5,293.0 C302.8,292.2 304.2,291.3 305.6,290.9 C306.9,290.5 309.3,290.1 310.3,290.7 C311.3,291.4 311.9,293.5 311.6,294.8 C311.2,296.1 309.5,298.4 308.2,298.6 C307.0,298.7 305.1,296.7 304.1,295.8 C303.2,294.9 302.3,293.8 302.5,293.0Z" fill="#e9eee0"/>
<path d="M241.9,193.0 C242.5,192.3 242.3,191.0 243.2,190.5 C244.0,190.1 246.1,190.0 247.2,190.4 C248.2,190.9 249.5,192.2 249.6,193.2 C249.8,194.1 249.0,195.5 248.2,196.1 C247.5,196.7 246.1,196.4 245.1,196.7 C244.0,196.9 242.8,197.7 241.8,197.5 C240.8,197.3 239.0,196.0 239.1,195.3 C239.1,194.5 241.2,193.8 241.9,193.0Z" fill="#e9eee0"/>
<path d="M270.8,310.3 C270.1,310.4 269.6,310.3 268.8,310.1 C268.0,309.9 266.2,309.5 266.0,309.0 C265.9,308.5 267.1,307.5 267.8,306.9 C268.5,306.4 269.4,305.6 270.2,305.7 C271.0,305.7 271.9,306.5 272.5,307.1 C273.0,307.7 273.5,308.8 273.2,309.3 C272.9,309.8 271.6,310.1 270.8,310.3Z" fill="#e9eee0"/>
<path d="M259.9,99.1 C261.0,99.6 262.6,101.4 262.5,102.3 C262.3,103.3 260.0,104.0 259.0,104.8 C258.0,105.6 257.2,107.1 256.2,107.1 C255.3,107.1 254.4,105.6 253.4,104.9 C252.5,104.2 251.1,103.9 250.5,102.9 C250.0,101.8 249.5,99.3 250.4,98.7 C251.2,98.1 254.1,99.2 255.7,99.3 C257.3,99.4 258.8,98.6 259.9,99.1Z" fill="#e9eee0"/>
<path d="M262.6,322.9 C261.6,322.9 260.4,321.2 259.5,320.2 C258.5,319.2 256.5,317.8 256.8,316.7 C257.0,315.7 259.3,314.4 260.9,314.0 C262.4,313.6 264.5,313.6 266.0,314.1 C267.4,314.7 269.6,316.5 269.5,317.5 C269.4,318.5 266.7,319.3 265.6,320.2 C264.4,321.1 263.6,322.9 262.6,322.9Z" fill="#e9eee0"/>
<path d="M243.3,143.7 C243.0,144.3 243.2,144.9 242.6,145.2 C242.0,145.5 240.4,145.7 239.8,145.4 C239.2,145.0 239.1,143.9 239.3,143.1 C239.4,142.3 239.8,141.2 240.6,140.8 C241.4,140.5 243.7,140.8 244.1,141.3 C244.6,141.7 243.5,143.0 243.3,143.7Z" fill="#e9eee0"/>
<path d="M346.3,263.4 C344.4,263.4 341.4,262.2 340.2,260.7 C338.9,259.1 337.8,255.5 338.9,254.1 C340.0,252.6 344.8,251.8 346.9,252.1 C349.1,252.4 350.9,254.4 351.7,255.9 C352.5,257.3 352.6,259.4 351.7,260.6 C350.8,261.9 348.2,263.4 346.3,263.4Z" fill="#e9eee0"/>
<path d="M261.8,349.8 C260.3,350.9 254.9,351.1 253.5,350.1 C252.1,349.1 253.8,345.6 253.5,343.9 C253.1,342.2 251.0,340.4 251.6,339.7 C252.2,339.1 255.0,340.3 257.1,340.1 C259.3,339.8 263.5,337.5 264.4,338.1 C265.3,338.8 262.9,341.9 262.4,343.8 C262.0,345.8 263.3,348.8 261.8,349.8Z" fill="#e9eee0"/>
<path d="M305.7,285.0 C305.5,286.1 306.5,288.0 305.6,288.8 C304.8,289.7 302.2,290.5 300.8,290.2 C299.4,290.0 297.7,288.4 297.2,287.4 C296.7,286.3 297.6,285.1 297.7,284.0 C297.7,282.9 297.0,281.8 297.6,280.9 C298.1,280.0 299.9,278.4 301.0,278.6 C302.1,278.7 303.0,280.9 304.0,281.6 C304.9,282.3 306.3,282.2 306.6,282.8 C306.9,283.3 305.8,284.0 305.7,285.0Z" fill="#e9eee0"/>
<path d="M264.6,125.0 C264.0,124.2 264.0,122.1 264.7,121.1 C265.3,120.1 267.5,118.9 268.8,118.9 C270.1,118.9 271.3,120.2 272.4,121.0 C273.5,121.9 275.4,122.8 275.4,123.8 C275.4,124.7 273.7,126.6 272.6,126.9 C271.5,127.2 270.1,125.9 268.8,125.5 C267.5,125.2 265.3,125.7 264.6,125.0Z" fill="#e9eee0"/>
<path d="M323.0,186.7 C323.3,187.5 321.1,189.4 320.0,190.0 C319.0,190.7 317.8,190.4 316.9,190.6 C316.0,190.7 316.0,190.7 314.7,190.9 C313.4,191.2 309.7,192.5 309.1,192.1 C308.4,191.6 310.4,189.1 311.0,188.1 C311.6,187.1 311.9,186.5 312.6,186.1 C313.3,185.6 314.3,185.7 315.2,185.6 C316.2,185.4 317.0,185.0 318.3,185.2 C319.6,185.4 322.7,185.9 323.0,186.7Z" fill="#e9eee0"/>
<path d="M277.5,282.7 C277.5,282.2 277.0,280.9 277.3,280.7 C277.7,280.5 278.9,281.3 279.5,281.5 C280.1,281.7 280.7,281.6 281.0,281.9 C281.2,282.1 281.0,282.7 280.9,283.1 C280.9,283.5 280.9,283.7 280.8,284.1 C280.6,284.6 280.3,285.7 279.8,285.8 C279.4,285.9 278.5,285.0 278.1,284.7 C277.7,284.3 277.6,284.0 277.5,283.6 C277.4,283.3 277.5,283.1 277.5,282.7Z" fill="#e9eee0"/>
<path d="M303.0,178.2 C301.1,179.2 298.3,179.8 296.3,179.1 C294.4,178.5 291.7,176.4 291.4,174.6 C291.0,172.7 292.5,169.1 294.3,168.2 C296.1,167.3 300.0,168.3 302.2,169.2 C304.4,170.1 307.5,172.0 307.6,173.5 C307.8,175.0 304.9,177.3 303.0,178.2Z" fill="#e9eee0"/>
<path d="M261.9,287.6 C262.0,289.2 261.1,291.8 259.6,292.5 C258.1,293.1 254.7,291.3 253.1,291.2 C251.5,291.1 251.3,291.9 249.8,291.8 C248.2,291.8 244.0,291.7 243.8,290.9 C243.5,290.1 247.8,288.5 248.4,287.1 C249.1,285.7 247.0,283.2 247.7,282.6 C248.4,282.1 250.8,283.7 252.8,283.8 C254.7,283.8 257.6,282.1 259.1,282.7 C260.7,283.3 261.8,285.9 261.9,287.6Z" fill="#e9eee0"/>
<path d="M234.9,302.9 C234.4,302.2 234.2,300.2 234.9,299.6 C235.5,299.1 237.6,299.4 238.7,299.5 C239.7,299.5 240.7,299.5 241.1,299.9 C241.5,300.3 241.0,301.1 241.0,301.8 C240.9,302.4 241.2,303.4 240.8,303.7 C240.3,304.1 239.2,303.8 238.2,303.7 C237.2,303.6 235.5,303.5 234.9,302.9Z" fill="#e9eee0"/>
<path d="M259.2,308.7 C259.9,308.6 261.0,309.1 261.5,309.4 C262.1,309.8 262.4,310.3 262.6,311.1 C262.9,311.9 263.6,313.5 263.0,314.1 C262.4,314.7 260.1,314.8 259.1,314.5 C258.0,314.2 257.2,313.1 256.9,312.4 C256.6,311.6 256.7,310.7 257.1,310.1 C257.5,309.5 258.5,308.8 259.2,308.7Z" fill="#e9eee0"/>
<path d="M315.8,278.4 C314.1,278.7 312.5,281.0 311.5,280.8 C310.4,280.5 310.2,278.3 309.7,277.0 C309.2,275.7 307.9,273.7 308.5,273.1 C309.2,272.4 312.1,273.6 313.8,273.1 C315.4,272.7 317.3,270.1 318.3,270.4 C319.2,270.6 318.9,273.2 319.5,274.6 C320.0,275.9 322.2,278.0 321.6,278.6 C321.0,279.2 317.5,278.0 315.8,278.4Z" fill="#e9eee0"/>
<path d="M239.0,332.1 C237.6,332.1 235.1,332.6 234.8,332.0 C234.4,331.4 236.5,329.6 236.6,328.6 C236.7,327.6 235.1,326.4 235.4,325.8 C235.8,325.2 237.7,325.1 238.9,325.0 C240.1,325.0 242.2,324.8 242.8,325.4 C243.4,326.0 242.5,327.5 242.5,328.5 C242.6,329.6 243.7,331.2 243.1,331.8 C242.5,332.4 240.4,332.0 239.0,332.1Z" fill="#e9eee0"/>
<path d="M283.7,148.6 C284.9,148.5 286.4,150.7 287.5,152.0 C288.6,153.2 290.7,155.0 290.3,156.0 C289.9,157.1 286.5,157.7 285.0,158.0 C283.6,158.3 283.1,157.8 281.6,157.8 C280.2,157.8 277.2,158.8 276.4,158.2 C275.6,157.5 276.1,155.0 276.8,154.1 C277.4,153.2 279.3,153.6 280.4,152.7 C281.6,151.8 282.6,148.7 283.7,148.6Z" fill="#e9eee0"/>
<path d="M270.9,115.9 C270.5,116.8 268.9,119.2 268.1,119.2 C267.3,119.1 266.4,116.4 265.9,115.5 C265.3,114.6 265.1,114.6 265.0,113.7 C264.9,112.7 264.6,110.4 265.3,110.0 C266.0,109.7 268.5,111.0 269.3,111.6 C270.2,112.2 270.2,112.9 270.5,113.6 C270.8,114.3 271.3,115.0 270.9,115.9Z" fill="#e9eee0"/>
<path d="M317.8,244.3 C317.4,245.0 315.3,245.7 314.3,245.6 C313.3,245.4 312.6,243.8 312.0,243.2 C311.4,242.7 311.0,242.8 310.5,242.3 C310.0,241.9 308.9,241.1 309.0,240.4 C309.0,239.8 310.0,238.8 310.7,238.5 C311.5,238.2 312.8,238.5 313.5,238.7 C314.3,238.9 314.6,239.5 315.2,239.9 C315.8,240.4 316.7,240.6 317.1,241.3 C317.5,242.0 318.3,243.6 317.8,244.3Z" fill="#e9eee0"/>
<path d="M251.5,241.4 C253.0,240.8 254.6,241.0 256.5,241.4 C258.3,241.7 262.6,242.6 262.7,243.5 C262.8,244.4 258.4,245.7 257.1,247.0 C255.8,248.2 256.2,250.6 254.8,250.9 C253.5,251.3 250.2,250.4 249.1,249.3 C247.9,248.3 247.4,245.9 247.8,244.6 C248.2,243.3 250.1,241.9 251.5,241.4Z" fill="#e9eee0"/>
<path d="M314.5,96.0 C316.4,96.5 317.7,97.8 318.3,99.0 C318.8,100.3 318.8,102.3 317.9,103.3 C316.9,104.4 314.7,105.4 312.5,105.4 C310.3,105.4 305.4,104.7 304.5,103.2 C303.6,101.6 305.3,97.3 307.0,96.1 C308.6,94.9 312.6,95.5 314.5,96.0Z" fill="#e9eee0"/>
<path d="M307.8,336.7 C308.6,337.7 306.7,340.1 306.2,341.2 C305.7,342.4 305.8,343.2 305.0,343.7 C304.2,344.3 302.6,344.7 301.3,344.5 C300.1,344.3 298.1,343.4 297.7,342.6 C297.2,341.7 298.0,340.4 298.7,339.1 C299.4,337.9 300.1,335.5 301.6,335.1 C303.2,334.7 307.1,335.6 307.8,336.7Z" fill="#e9eee0"/>
<path d="M262.4,198.0 C263.0,197.4 264.4,196.8 265.4,196.8 C266.5,196.7 268.4,197.0 268.7,197.6 C269.1,198.2 267.6,199.7 267.7,200.5 C267.8,201.3 269.5,202.0 269.4,202.4 C269.2,202.8 267.6,202.7 266.7,203.0 C265.9,203.3 264.9,204.3 264.3,204.1 C263.7,204.0 263.6,202.7 263.2,202.1 C262.7,201.4 261.9,201.1 261.8,200.4 C261.7,199.7 261.8,198.6 262.4,198.0Z" fill="#e9eee0"/>
<path d="M350.5,254.5 C350.3,253.9 351.8,252.6 352.5,252.0 C353.2,251.5 353.8,251.2 354.7,251.2 C355.5,251.2 357.3,251.6 357.5,252.0 C357.7,252.5 356.5,253.4 355.9,254.0 C355.4,254.7 355.0,255.6 354.1,255.7 C353.2,255.8 350.8,255.1 350.5,254.5Z" fill="#e9eee0"/>
<path d="M266.9,214.1 C266.3,213.0 265.3,211.4 265.9,210.3 C266.4,209.3 268.7,207.9 270.1,207.9 C271.6,207.8 273.6,209.1 274.3,209.9 C275.0,210.8 274.6,211.9 274.6,212.9 C274.5,214.0 275.0,215.6 274.2,216.3 C273.3,217.0 270.7,217.3 269.5,216.9 C268.3,216.5 267.5,215.1 266.9,214.1Z" fill="#e9eee0"/>
<path d="M271.3,207.1 C272.3,206.3 274.0,204.5 275.1,204.7 C276.3,204.8 277.6,206.8 278.1,207.9 C278.6,209.1 278.9,210.6 278.3,211.6 C277.7,212.6 275.9,213.9 274.5,214.1 C273.1,214.3 271.0,213.4 270.1,212.6 C269.2,211.8 269.0,210.3 269.2,209.4 C269.4,208.5 270.3,207.9 271.3,207.1Z" fill="#e9eee0"/>
<path d="M271.6,148.2 C272.1,148.9 273.5,150.7 273.1,151.2 C272.6,151.6 270.0,150.6 268.8,151.0 C267.6,151.4 266.5,153.6 265.8,153.5 C265.1,153.4 264.9,151.2 264.7,150.3 C264.4,149.5 264.1,149.0 264.2,148.4 C264.3,147.8 265.0,147.5 265.5,146.8 C266.1,146.1 267.0,144.1 267.7,144.2 C268.4,144.2 269.1,146.2 269.8,146.9 C270.4,147.5 271.0,147.5 271.6,148.2Z" fill="#e9eee0"/>
<path d="M241.8,97.5 C241.5,96.6 240.4,96.1 240.5,95.4 C240.7,94.8 241.7,94.0 242.7,93.5 C243.6,93.1 245.7,92.3 246.4,92.6 C247.1,93.0 246.7,95.0 246.9,95.8 C247.0,96.7 247.3,96.8 247.3,97.7 C247.3,98.7 247.5,101.0 246.6,101.5 C245.7,102.0 242.8,101.4 242.0,100.7 C241.2,100.1 242.0,98.4 241.8,97.5Z" fill="#e9eee0"/>
<path d="M253.2,176.5 C253.8,175.8 255.8,175.2 256.9,175.3 C257.9,175.5 258.9,176.5 259.5,177.3 C260.2,178.1 260.9,179.1 260.7,179.9 C260.5,180.7 259.3,181.8 258.3,182.1 C257.2,182.5 255.4,182.5 254.5,182.0 C253.7,181.6 253.5,180.3 253.3,179.4 C253.0,178.5 252.6,177.2 253.2,176.5Z" fill="#e9eee0"/>
<path d="M333.3,277.6 C332.5,276.8 331.0,275.5 331.2,274.3 C331.4,273.2 333.3,271.1 334.6,270.9 C335.9,270.7 337.6,272.4 338.9,273.2 C340.2,274.0 341.7,274.1 342.4,275.5 C343.1,276.8 344.2,280.6 343.2,281.3 C342.1,281.9 337.8,279.9 336.2,279.3 C334.5,278.7 334.1,278.4 333.3,277.6Z" fill="#e9eee0"/>
<path d="M314.7,124.0 C313.6,123.8 312.5,123.2 311.7,122.4 C310.9,121.7 309.8,120.7 309.7,119.7 C309.6,118.6 310.2,117.2 311.2,116.3 C312.1,115.5 314.1,114.3 315.2,114.5 C316.2,114.7 316.4,117.2 317.7,117.8 C319.0,118.5 322.0,117.5 323.1,118.3 C324.1,119.1 324.8,121.9 324.0,122.8 C323.2,123.7 319.9,123.6 318.3,123.8 C316.7,124.0 315.8,124.3 314.7,124.0Z" fill="#e9eee0"/>
<path d="M269.5,228.9 C270.2,228.3 272.4,229.2 273.7,228.5 C275.0,227.9 276.6,224.9 277.5,224.9 C278.4,225.0 278.3,227.9 279.2,229.0 C280.0,230.2 282.5,230.8 282.7,231.9 C282.9,233.0 281.5,234.6 280.3,235.6 C279.1,236.6 276.8,238.1 275.5,237.8 C274.2,237.5 273.5,234.7 272.6,233.8 C271.6,232.9 270.4,232.9 269.8,232.1 C269.3,231.3 268.9,229.5 269.5,228.9Z" fill="#e9eee0"/>
<path d="M237.0,237.3 C237.1,236.5 239.6,235.9 240.8,235.5 C242.0,235.1 243.0,235.0 244.0,235.1 C245.1,235.2 246.8,235.7 247.3,236.4 C247.7,237.1 247.1,238.4 246.7,239.2 C246.3,239.9 245.7,240.5 244.9,241.0 C244.1,241.4 242.8,242.2 241.9,242.0 C241.1,241.9 240.7,240.8 239.9,240.0 C239.1,239.2 236.8,238.0 237.0,237.3Z" fill="#e9eee0"/>
<path d="M300.7,113.6 C301.4,113.4 303.1,114.6 303.8,114.9 C304.6,115.2 304.9,115.1 305.5,115.3 C306.0,115.6 306.9,116.0 307.0,116.5 C307.2,117.0 306.8,117.6 306.4,118.3 C306.1,118.9 305.8,119.9 305.0,120.3 C304.2,120.7 302.5,120.8 301.7,120.5 C300.9,120.1 300.6,119.0 300.2,118.2 C299.9,117.5 299.5,116.8 299.6,116.0 C299.6,115.3 300.0,113.8 300.7,113.6Z" fill="#e9eee0"/>
<path d="M336.4,114.6 C336.4,115.4 335.4,116.4 334.7,116.8 C334.0,117.2 333.1,116.6 332.1,116.9 C331.1,117.1 329.6,118.4 328.9,118.2 C328.1,118.0 327.8,116.4 327.7,115.5 C327.5,114.6 327.5,113.6 328.1,112.8 C328.7,112.1 330.0,111.1 331.1,111.0 C332.2,110.8 333.8,111.4 334.7,112.0 C335.6,112.6 336.4,113.8 336.4,114.6Z" fill="#e9eee0"/>
<path d="M288.2,131.8 C288.4,131.2 288.6,130.8 289.1,130.4 C289.6,129.9 290.6,129.0 291.3,129.1 C292.1,129.1 293.4,130.1 293.6,130.7 C293.9,131.3 293.3,132.0 292.9,132.8 C292.5,133.6 292.1,135.3 291.4,135.5 C290.6,135.7 288.7,134.6 288.1,134.0 C287.6,133.4 288.0,132.4 288.2,131.8Z" fill="#e9eee0"/>
<path d="M240.9,193.7 C242.6,193.3 245.4,192.3 246.4,192.9 C247.5,193.5 247.5,196.2 247.4,197.4 C247.2,198.5 246.1,199.3 245.4,199.8 C244.7,200.4 243.9,200.7 243.1,200.8 C242.4,200.9 241.5,200.8 240.7,200.6 C240.0,200.3 239.3,200.0 238.5,199.2 C237.8,198.3 235.8,196.4 236.2,195.5 C236.6,194.5 239.2,194.2 240.9,193.7Z" fill="#e9eee0"/>
<path d="M303.9,316.3 C304.4,315.5 306.9,315.3 308.2,315.2 C309.5,315.1 310.3,315.2 311.7,315.8 C313.2,316.3 316.9,317.6 316.8,318.5 C316.8,319.3 312.9,320.4 311.4,320.9 C310.0,321.4 309.1,321.6 308.1,321.4 C307.0,321.2 305.8,320.7 305.1,319.8 C304.4,319.0 303.4,317.1 303.9,316.3Z" fill="#e9eee0"/>
<path d="M300.0,302.2 C300.8,301.5 304.4,301.5 305.5,302.0 C306.5,302.6 306.5,304.5 306.5,305.6 C306.6,306.6 306.3,307.7 305.5,308.2 C304.7,308.7 302.6,309.0 301.8,308.6 C301.0,308.3 301.0,307.1 300.7,306.1 C300.4,305.0 299.2,302.8 300.0,302.2Z" fill="#e9eee0"/>
<path d="M313.2,319.3 C311.6,318.1 310.7,316.0 311.0,314.8 C311.4,313.7 313.4,313.4 315.3,312.5 C317.1,311.6 320.6,308.9 322.0,309.5 C323.5,310.0 324.1,313.7 323.9,315.8 C323.6,317.9 322.5,321.5 320.7,322.1 C318.9,322.7 314.8,320.5 313.2,319.3Z" fill="#e9eee0"/>
<path d="M294.6,255.0 C294.0,255.3 292.4,254.7 291.9,254.3 C291.3,254.0 291.4,253.6 291.2,252.9 C291.0,252.2 290.2,250.5 290.7,250.2 C291.2,249.8 293.3,250.4 294.1,250.8 C295.0,251.3 295.5,252.1 295.6,252.8 C295.6,253.5 295.2,254.8 294.6,255.0Z" fill="#e9eee0"/>
<path d="M269.3,327.3 C267.2,327.4 263.0,327.0 262.2,325.9 C261.4,324.8 263.5,322.0 264.6,320.6 C265.7,319.3 266.7,318.4 268.8,318.1 C270.8,317.7 275.6,317.4 276.6,318.6 C277.7,319.7 276.1,323.4 274.9,324.9 C273.6,326.3 271.4,327.1 269.3,327.3Z" fill="#e9eee0"/>
<path d="M257.2,185.7 C256.9,185.1 256.9,184.9 256.8,184.3 C256.8,183.7 256.4,182.5 256.9,182.3 C257.3,182.0 258.6,182.6 259.3,182.8 C260.1,182.9 260.9,182.7 261.4,183.1 C262.0,183.4 263.0,184.4 262.8,184.9 C262.6,185.4 261.2,185.7 260.5,186.1 C259.8,186.5 259.1,187.5 258.5,187.5 C258.0,187.4 257.5,186.2 257.2,185.7Z" fill="#e9eee0"/>
<path d="M307.5,193.9 C306.3,193.9 304.9,195.2 304.3,195.0 C303.7,194.7 303.7,193.0 303.9,192.3 C304.0,191.6 304.7,191.4 305.2,190.7 C305.7,190.0 306.3,188.2 306.9,188.2 C307.6,188.2 308.4,190.0 309.0,190.6 C309.6,191.2 310.1,191.2 310.5,191.9 C310.9,192.6 311.9,194.5 311.4,194.9 C310.9,195.2 308.7,193.9 307.5,193.9Z" fill="#e9eee0"/>
<path d="M256.0,210.2 C254.6,211.0 252.2,212.5 250.9,212.2 C249.6,211.8 249.1,209.6 248.3,208.1 C247.4,206.6 245.2,203.9 246.0,203.1 C246.7,202.3 250.5,203.5 252.7,203.3 C254.9,203.1 258.1,201.2 259.2,201.8 C260.3,202.5 259.7,205.8 259.2,207.2 C258.7,208.6 257.4,209.3 256.0,210.2Z" fill="#e9eee0"/>
<path d="M264.0,208.1 C264.4,207.6 264.7,206.5 265.2,206.4 C265.8,206.3 266.8,207.1 267.2,207.5 C267.7,207.9 267.9,208.4 268.0,208.8 C268.1,209.3 268.1,210.0 267.8,210.2 C267.5,210.5 266.7,210.2 266.1,210.4 C265.5,210.5 264.7,211.2 264.2,211.1 C263.7,211.0 263.2,210.0 263.1,209.6 C263.1,209.1 263.7,208.7 264.0,208.1Z" fill="#e9eee0"/>
<path d="M255.1,314.3 C254.4,315.1 252.0,315.3 250.9,315.6 C249.9,315.8 249.7,315.4 248.6,315.7 C247.5,316.0 245.4,317.6 244.4,317.3 C243.3,317.1 242.5,315.3 242.3,314.2 C242.0,313.1 241.9,311.2 242.7,310.6 C243.5,309.9 246.0,310.3 247.2,310.3 C248.5,310.2 248.6,310.4 250.0,310.4 C251.3,310.5 254.2,309.7 255.1,310.4 C256.0,311.0 255.8,313.4 255.1,314.3Z" fill="#e9eee0"/>
<path d="M248.1,334.8 C247.0,334.9 245.3,332.8 244.2,332.1 C243.0,331.4 242.2,331.7 241.3,330.8 C240.4,330.0 238.4,327.9 238.8,327.0 C239.2,326.2 242.3,325.8 243.8,325.6 C245.3,325.4 246.2,325.6 247.7,325.9 C249.2,326.2 252.3,326.4 252.8,327.3 C253.3,328.3 251.5,330.1 250.8,331.4 C250.0,332.6 249.2,334.6 248.1,334.8Z" fill="#e9eee0"/>
<path d="M319.1,258.9 C317.3,259.5 315.8,261.2 314.3,261.0 C312.8,260.8 311.2,259.0 310.3,257.6 C309.4,256.3 308.0,253.8 308.8,252.9 C309.6,252.1 313.5,253.2 315.3,252.7 C317.0,252.1 317.9,249.5 319.1,249.6 C320.2,249.6 321.0,251.7 322.0,253.0 C323.1,254.3 325.8,256.4 325.3,257.3 C324.8,258.3 321.0,258.3 319.1,258.9Z" fill="#e9eee0"/>
<path d="M290.2,329.1 C289.9,329.5 288.7,329.6 288.0,329.6 C287.4,329.6 286.4,329.4 286.1,329.1 C285.9,328.7 286.5,327.9 286.6,327.5 C286.8,327.2 286.7,327.0 286.9,326.8 C287.1,326.6 287.4,326.3 287.8,326.3 C288.1,326.2 288.6,326.3 288.9,326.5 C289.2,326.7 289.4,327.0 289.7,327.4 C289.9,327.8 290.4,328.7 290.2,329.1Z" fill="#e9eee0"/>
<path d="M283.1,100.5 C283.6,99.8 283.8,98.9 284.5,98.7 C285.2,98.5 286.4,98.7 287.3,99.1 C288.2,99.5 289.9,100.3 290.0,101.1 C290.0,101.8 288.7,103.0 287.9,103.5 C287.0,104.0 285.8,104.1 284.7,104.0 C283.6,103.9 281.5,103.6 281.3,103.0 C281.0,102.4 282.6,101.2 283.1,100.5Z" fill="#e9eee0"/>
<path d="M255.1,287.2 C256.2,288.0 257.3,290.1 257.0,291.6 C256.7,293.0 254.8,295.6 253.1,296.0 C251.5,296.3 247.8,294.7 247.0,293.7 C246.3,292.6 247.9,290.8 248.5,289.7 C249.0,288.6 249.0,287.5 250.1,287.1 C251.2,286.7 253.9,286.5 255.1,287.2Z" fill="#e9eee0"/>
<path d="M311.0,179.5 C311.8,180.5 312.1,182.4 311.7,183.7 C311.4,185.1 310.3,187.0 308.9,187.7 C307.5,188.4 304.9,188.3 303.4,187.9 C301.8,187.6 300.1,186.6 299.6,185.7 C299.0,184.7 300.5,183.6 300.2,182.4 C299.9,181.2 297.2,179.4 297.6,178.6 C297.9,177.7 300.8,177.6 302.4,177.4 C303.9,177.2 305.3,176.9 306.7,177.3 C308.2,177.6 310.1,178.4 311.0,179.5Z" fill="#e9eee0"/>
<path d="M265.3,232.5 C265.6,231.7 267.4,231.2 268.7,230.7 C269.9,230.3 271.7,229.2 272.9,229.6 C274.2,229.9 276.0,231.7 276.2,232.8 C276.3,233.9 274.8,235.3 273.8,236.1 C272.7,237.0 271.1,238.1 269.9,238.0 C268.7,237.9 267.4,236.6 266.6,235.7 C265.9,234.7 264.9,233.3 265.3,232.5Z" fill="#e9eee0"/>
<path d="M330.2,266.1 C330.1,266.6 328.6,266.8 327.9,267.2 C327.2,267.6 326.6,268.5 325.9,268.5 C325.2,268.5 323.8,267.6 323.6,267.1 C323.5,266.5 324.7,265.9 325.1,265.2 C325.5,264.6 325.5,263.4 326.1,263.2 C326.8,263.0 328.2,263.6 328.8,264.0 C329.5,264.5 330.4,265.5 330.2,266.1Z" fill="#e9eee0"/>
<path d="M267.7,254.0 C268.2,254.0 269.0,253.6 269.4,253.7 C269.8,253.9 270.1,254.6 270.1,255.1 C270.1,255.5 269.7,255.9 269.4,256.3 C269.1,256.7 268.9,257.3 268.4,257.5 C267.9,257.7 266.7,257.8 266.4,257.5 C266.0,257.2 266.4,256.2 266.3,255.8 C266.2,255.4 265.8,255.2 265.8,254.9 C265.8,254.6 266.1,254.1 266.4,254.0 C266.7,253.8 267.2,254.1 267.7,254.0Z" fill="#e9eee0"/>
<path d="M265.2,108.1 C264.6,108.8 263.7,110.4 263.1,110.3 C262.5,110.3 262.0,108.5 261.5,107.8 C261.1,107.1 260.3,106.7 260.3,106.2 C260.4,105.6 261.2,104.5 261.8,104.3 C262.5,104.1 263.6,104.6 264.4,105.0 C265.1,105.3 266.3,105.7 266.5,106.2 C266.6,106.7 265.7,107.4 265.2,108.1Z" fill="#e9eee0"/>
<path d="M249.8,216.5 C249.7,217.8 247.7,220.3 246.1,220.6 C244.5,220.9 241.5,219.6 240.3,218.6 C239.2,217.7 239.8,216.0 239.1,215.0 C238.4,213.9 236.3,213.3 236.3,212.3 C236.2,211.4 237.7,209.9 238.8,209.4 C239.9,208.9 241.4,209.6 242.8,209.5 C244.2,209.4 246.7,208.5 247.3,209.0 C247.9,209.6 245.9,211.5 246.3,212.8 C246.7,214.0 249.8,215.2 249.8,216.5Z" fill="#e9eee0"/>
<path d="M352.1,257.3 C353.1,256.6 354.2,254.3 354.8,254.5 C355.5,254.6 355.5,257.1 356.0,258.0 C356.6,258.9 358.2,259.3 358.1,259.8 C358.1,260.4 356.5,260.9 355.7,261.4 C354.8,261.8 354.3,262.4 353.0,262.6 C351.8,262.8 348.7,263.1 348.0,262.4 C347.3,261.8 348.2,259.4 348.8,258.5 C349.5,257.7 351.1,258.0 352.1,257.3Z" fill="#e9eee0"/>
<path d="M350.6,267.5 C351.2,267.6 351.3,267.9 351.8,268.1 C352.3,268.3 353.6,268.6 353.6,268.9 C353.7,269.2 352.6,269.7 352.1,270.0 C351.6,270.3 351.3,270.5 350.8,270.6 C350.4,270.6 349.5,270.7 349.2,270.4 C348.8,270.2 348.9,269.6 348.8,269.1 C348.7,268.6 348.3,267.7 348.6,267.5 C348.9,267.2 350.1,267.4 350.6,267.5Z" fill="#e9eee0"/>
<path d="M272.8,98.8 C273.4,99.3 272.3,101.2 271.9,102.1 C271.6,103.1 271.3,104.0 270.6,104.4 C269.9,104.7 268.5,104.3 267.6,104.2 C266.7,104.2 266.1,104.4 265.2,104.2 C264.4,103.9 262.7,103.3 262.6,102.7 C262.6,102.2 264.5,101.6 264.9,100.8 C265.3,100.0 264.6,98.1 265.2,97.8 C265.7,97.6 267.0,99.2 268.3,99.4 C269.5,99.5 272.2,98.4 272.8,98.8Z" fill="#e9eee0"/>
<path d="M294.5,342.8 C295.0,343.1 294.9,343.8 294.9,344.3 C294.8,344.7 294.4,345.4 294.1,345.5 C293.7,345.6 293.1,345.2 292.6,344.9 C292.1,344.6 291.0,344.4 290.9,343.9 C290.8,343.4 291.5,342.2 292.1,342.0 C292.7,341.9 294.1,342.4 294.5,342.8Z" fill="#e9eee0"/>
<path d="M300.0,128.2 C300.2,127.7 300.7,127.3 301.2,127.1 C301.7,126.9 302.5,126.9 303.1,127.1 C303.6,127.3 304.3,128.0 304.3,128.5 C304.3,129.1 303.7,130.0 303.1,130.3 C302.4,130.6 300.8,130.6 300.3,130.2 C299.8,129.9 299.9,128.8 300.0,128.2Z" fill="#e9eee0"/>
<path d="M254.4,166.9 C254.7,166.2 255.6,165.4 256.4,165.1 C257.3,164.8 258.7,164.9 259.5,165.3 C260.4,165.6 261.0,166.4 261.3,167.1 C261.7,167.9 261.9,168.8 261.6,169.5 C261.3,170.3 260.3,171.4 259.5,171.5 C258.7,171.6 257.6,170.5 256.8,170.1 C256.0,169.8 254.9,169.7 254.5,169.2 C254.1,168.7 254.1,167.6 254.4,166.9Z" fill="#e9eee0"/>
<path d="M310.7,109.9 C311.9,108.9 312.2,107.8 313.7,107.3 C315.2,106.8 318.6,106.4 319.6,107.1 C320.7,107.8 320.1,110.4 320.0,111.8 C320.0,113.2 320.4,114.9 319.5,115.6 C318.6,116.3 316.2,116.1 314.8,116.0 C313.5,116.0 312.6,115.9 311.2,115.3 C309.8,114.8 306.5,113.8 306.5,112.9 C306.4,112.0 309.5,110.8 310.7,109.9Z" fill="#e9eee0"/>
<path d="M239.3,137.7 C240.1,137.3 241.3,136.0 242.3,136.1 C243.3,136.1 244.3,137.2 245.2,138.0 C246.1,138.9 248.0,140.4 247.8,141.2 C247.5,142.0 244.7,142.6 243.5,143.0 C242.3,143.4 241.6,143.3 240.6,143.4 C239.6,143.5 238.2,143.7 237.5,143.3 C236.8,142.9 236.7,141.7 236.6,140.9 C236.6,140.2 236.7,139.3 237.2,138.8 C237.6,138.3 238.4,138.2 239.3,137.7Z" fill="#e9eee0"/>
<path d="M342.8,259.0 C343.6,259.0 344.1,258.6 344.6,258.8 C345.2,259.0 345.8,259.5 346.0,260.0 C346.2,260.5 346.4,261.3 346.1,261.8 C345.8,262.3 344.9,262.9 344.2,263.1 C343.4,263.3 342.1,263.4 341.5,263.1 C340.9,262.8 340.8,261.8 340.6,261.1 C340.4,260.5 339.9,259.5 340.3,259.1 C340.7,258.8 342.1,259.1 342.8,259.0Z" fill="#e9eee0"/>
<path d="M249.7,218.8 C250.9,218.0 253.8,218.5 255.2,219.0 C256.6,219.4 257.7,220.5 258.0,221.5 C258.4,222.5 258.5,224.5 257.6,225.2 C256.7,225.9 254.4,226.0 252.9,225.8 C251.3,225.5 248.6,224.7 248.1,223.6 C247.6,222.4 248.6,219.6 249.7,218.8Z" fill="#e9eee0"/>
<path d="M261.5,214.0 C262.0,214.2 262.4,214.0 262.7,214.2 C262.9,214.4 263.3,215.0 263.2,215.3 C263.1,215.5 262.4,215.5 262.0,215.8 C261.7,216.0 261.3,216.9 261.0,216.9 C260.6,216.9 260.3,216.1 260.0,215.7 C259.8,215.4 259.6,215.2 259.6,214.8 C259.6,214.4 259.5,213.4 259.8,213.3 C260.1,213.2 261.1,213.8 261.5,214.0Z" fill="#e9eee0"/>
<path d="M284.8,320.9 C285.4,319.6 287.9,317.9 289.3,317.9 C290.7,317.9 291.7,320.0 293.0,320.7 C294.3,321.5 296.9,321.9 297.1,322.7 C297.2,323.4 295.0,324.6 293.9,325.4 C292.7,326.2 291.4,327.8 290.1,327.7 C288.8,327.7 287.0,326.3 286.1,325.1 C285.2,324.0 284.3,322.1 284.8,320.9Z" fill="#e9eee0"/>
<path d="M291.3,285.0 C291.0,285.7 287.9,285.5 286.7,286.1 C285.4,286.8 285.1,288.5 283.7,288.9 C282.3,289.2 278.9,289.0 278.4,288.1 C277.8,287.3 280.5,285.2 280.2,283.7 C280.0,282.2 276.6,280.2 276.9,279.2 C277.3,278.1 280.9,277.4 282.5,277.5 C284.1,277.6 285.5,279.1 286.5,279.8 C287.6,280.5 287.8,281.0 288.6,281.9 C289.4,282.8 291.6,284.3 291.3,285.0Z" fill="#e9eee0"/>
<path d="M237.0,352.0 C248.8,332.0 292.3,348.7 308.0,352.0 C323.7,355.3 322.7,365.8 331.0,372.0 C339.3,378.2 352.0,379.7 358.0,389.0 C364.0,398.3 365.0,414.2 367.0,428.0 C369.0,441.8 391.7,464.7 370.0,472.0 C348.3,479.3 259.2,492.0 237.0,472.0 C214.8,452.0 225.2,372.0 237.0,352.0Z" fill="#dbe9ca"/>
<path d="M297.9,448.0 C299.5,448.6 299.6,450.6 299.9,451.8 C300.2,453.0 300.5,454.5 299.7,455.2 C299.0,455.8 297.3,455.8 295.4,455.7 C293.5,455.6 289.1,455.6 288.3,454.4 C287.5,453.1 289.0,449.1 290.6,448.0 C292.3,446.9 296.4,447.3 297.9,448.0Z" fill="#c9dfb0"/>
<path d="M319.1,451.0 C319.6,449.5 320.5,447.9 322.0,447.0 C323.5,446.1 327.0,445.0 328.1,445.7 C329.2,446.3 328.4,449.7 328.9,451.0 C329.4,452.3 331.2,452.6 331.1,453.3 C330.9,454.0 329.2,454.5 328.2,455.1 C327.1,455.7 326.1,457.0 324.6,457.1 C323.1,457.2 320.0,456.7 319.1,455.7 C318.1,454.7 318.6,452.4 319.1,451.0Z" fill="#c9dfb0"/>
<path d="M266.5,443.8 C267.8,444.3 268.6,447.0 268.7,448.4 C268.8,449.8 267.9,451.3 267.0,452.2 C266.1,453.1 264.8,452.8 263.5,453.7 C262.1,454.6 260.3,457.6 259.1,457.5 C257.8,457.5 256.5,454.7 255.9,453.4 C255.3,452.1 255.4,451.1 255.5,449.9 C255.6,448.8 255.5,447.2 256.3,446.5 C257.2,445.8 258.9,446.3 260.6,445.9 C262.3,445.4 265.1,443.4 266.5,443.8Z" fill="#c9dfb0"/>
<path d="M253.9,424.4 C254.7,424.3 255.7,424.3 256.6,424.6 C257.6,424.9 259.7,425.7 259.7,426.3 C259.8,427.0 257.7,427.9 256.9,428.5 C256.1,429.0 255.7,429.4 254.9,429.5 C254.1,429.7 252.7,429.7 252.2,429.4 C251.6,429.0 251.6,427.9 251.6,427.3 C251.6,426.6 251.7,426.0 252.1,425.6 C252.5,425.1 253.2,424.6 253.9,424.4Z" fill="#c9dfb0"/>
<path d="M352.8,429.0 C350.9,428.5 348.8,428.5 348.1,427.6 C347.5,426.7 348.4,424.9 349.0,423.6 C349.5,422.4 350.2,420.4 351.5,419.9 C352.9,419.4 355.3,420.0 357.1,420.7 C359.0,421.5 362.1,422.8 362.5,424.4 C363.0,426.1 361.5,429.7 359.9,430.4 C358.3,431.2 354.8,429.4 352.8,429.0Z" fill="#c9dfb0"/>
<path d="M242.7,412.9 C245.0,413.4 247.7,414.7 248.5,416.1 C249.3,417.4 248.2,419.8 247.3,421.1 C246.4,422.4 245.0,422.9 243.2,423.6 C241.4,424.3 238.3,425.9 236.4,425.3 C234.5,424.7 232.2,421.8 231.9,419.8 C231.6,417.9 232.9,414.5 234.7,413.4 C236.5,412.2 240.4,412.5 242.7,412.9Z" fill="#c9dfb0"/>
<path d="M319.6,388.1 C320.2,386.6 322.2,385.8 323.5,384.9 C324.9,383.9 326.5,382.5 328.0,382.5 C329.5,382.6 331.8,384.0 332.4,385.0 C333.1,386.0 331.9,387.5 331.8,388.7 C331.6,389.8 332.4,391.3 331.6,392.1 C330.9,392.8 329.2,392.9 327.3,393.2 C325.3,393.5 321.2,394.9 319.9,394.0 C318.6,393.2 319.0,389.7 319.6,388.1Z" fill="#c9dfb0"/>
<path d="M303.7,396.0 C303.5,396.9 303.5,397.1 302.9,397.8 C302.3,398.6 300.9,400.4 299.9,400.4 C299.0,400.3 297.3,398.7 296.9,397.8 C296.5,396.9 297.2,395.6 297.7,394.9 C298.3,394.1 299.1,393.6 300.1,393.3 C301.2,392.9 303.5,392.4 304.1,392.9 C304.7,393.3 303.9,395.2 303.7,396.0Z" fill="#c9dfb0"/>
<path d="M360.6,425.3 C359.8,425.4 358.6,425.1 357.8,424.6 C357.0,424.1 355.5,422.9 355.7,422.4 C356.0,421.8 358.4,421.6 359.2,421.2 C360.0,420.9 359.8,420.7 360.7,420.5 C361.5,420.2 363.4,419.4 364.0,419.8 C364.6,420.1 364.5,421.7 364.3,422.5 C364.1,423.2 363.2,423.5 362.6,424.0 C361.9,424.5 361.4,425.2 360.6,425.3Z" fill="#c9dfb0"/>
<path d="M281.9,399.0 C283.6,398.3 288.0,399.3 289.4,400.5 C290.9,401.7 290.5,404.7 290.5,406.2 C290.5,407.7 289.6,408.1 289.5,409.7 C289.4,411.3 291.0,415.1 289.8,416.0 C288.7,416.9 284.9,415.4 282.6,415.0 C280.3,414.6 277.5,414.7 276.1,413.5 C274.8,412.4 274.2,409.6 274.7,408.2 C275.2,406.8 278.0,406.5 279.2,405.0 C280.4,403.4 280.2,399.7 281.9,399.0Z" fill="#c9dfb0"/>
<path d="M243.6,354.1 C244.3,355.0 243.2,356.4 243.4,357.5 C243.5,358.7 245.0,360.0 244.5,361.1 C243.9,362.1 241.6,363.7 240.2,363.7 C238.8,363.7 236.5,362.1 235.9,361.2 C235.3,360.2 236.8,359.1 236.5,357.9 C236.3,356.7 234.1,355.2 234.6,354.2 C235.0,353.2 237.7,352.1 239.2,352.1 C240.7,352.1 242.9,353.2 243.6,354.1Z" fill="#c9dfb0"/>
<path d="M279.1,365.2 C279.8,364.8 282.2,365.9 283.3,366.4 C284.4,366.8 285.1,367.2 285.4,368.0 C285.7,368.8 286.0,370.6 285.3,371.2 C284.5,371.8 282.0,371.9 280.9,371.5 C279.9,371.2 279.4,369.9 279.1,368.9 C278.8,367.8 278.4,365.7 279.1,365.2Z" fill="#c9dfb0"/>
<path d="M327.8,391.2 C328.4,391.2 329.5,390.8 330.0,391.1 C330.5,391.4 330.9,392.2 330.9,392.9 C331.0,393.5 330.8,394.7 330.2,395.0 C329.6,395.3 328.4,394.6 327.5,394.6 C326.6,394.7 325.5,395.4 324.9,395.2 C324.2,394.9 323.3,393.8 323.5,393.3 C323.7,392.7 325.4,392.4 325.9,392.0 C326.3,391.5 326.0,390.9 326.3,390.8 C326.7,390.6 327.2,391.1 327.8,391.2Z" fill="#c9dfb0"/>
<path d="M325.5,391.4 C324.4,391.8 324.2,392.4 323.3,392.5 C322.3,392.6 320.7,392.5 319.7,391.9 C318.7,391.2 317.2,389.4 317.5,388.6 C317.8,387.7 320.4,387.1 321.6,386.7 C322.8,386.3 323.9,386.0 324.9,386.2 C325.9,386.4 326.7,387.0 327.6,387.7 C328.4,388.4 330.1,389.9 329.8,390.5 C329.4,391.2 326.6,391.1 325.5,391.4Z" fill="#c9dfb0"/>
<path d="M268.3,418.8 C269.5,418.8 270.4,421.7 271.9,422.8 C273.3,423.9 276.1,424.2 276.8,425.5 C277.6,426.9 277.6,430.1 276.4,431.1 C275.2,432.1 271.3,431.8 269.5,431.7 C267.6,431.6 266.6,431.0 265.2,430.5 C263.7,430.0 262.0,429.9 260.8,428.8 C259.5,427.8 256.8,425.1 257.5,424.1 C258.1,423.2 263.0,424.0 264.8,423.1 C266.6,422.2 267.2,418.9 268.3,418.8Z" fill="#c9dfb0"/>
<path d="M242.4,413.8 C241.5,414.5 239.2,413.8 237.3,413.7 C235.3,413.7 232.0,414.4 230.6,413.5 C229.3,412.5 228.7,409.4 229.2,407.9 C229.8,406.4 232.4,404.8 234.0,404.4 C235.6,404.1 237.3,405.6 238.9,405.8 C240.5,406.1 243.0,405.3 243.6,405.9 C244.3,406.6 243.0,408.4 242.8,409.7 C242.6,411.0 243.4,413.1 242.4,413.8Z" fill="#c9dfb0"/>
<path d="M347.2,379.3 C348.4,380.4 348.9,383.3 348.3,384.9 C347.6,386.5 345.2,388.4 343.3,388.8 C341.5,389.3 338.7,388.4 337.3,387.5 C336.0,386.7 335.6,385.2 335.2,383.8 C334.8,382.4 334.0,380.0 334.9,379.1 C335.8,378.3 338.7,378.4 340.7,378.4 C342.8,378.5 345.9,378.2 347.2,379.3Z" fill="#c9dfb0"/>
<path d="M355.3,464.9 C354.4,464.2 355.6,461.9 355.3,460.6 C355.1,459.3 353.2,457.6 353.8,457.1 C354.3,456.6 356.9,457.8 358.4,457.8 C359.9,457.9 362.0,456.9 362.7,457.4 C363.4,457.9 362.9,459.7 362.6,461.0 C362.4,462.2 362.3,464.2 361.1,464.9 C359.9,465.5 356.3,465.6 355.3,464.9Z" fill="#c9dfb0"/>
<path d="M250.2,418.2 C250.3,419.0 249.0,420.0 248.4,420.7 C247.9,421.4 247.6,422.0 246.9,422.4 C246.2,422.7 245.2,422.8 244.3,422.8 C243.4,422.7 241.9,422.6 241.4,422.1 C240.9,421.6 241.1,420.4 241.3,419.7 C241.4,419.0 241.8,418.7 242.2,417.9 C242.7,417.0 243.0,415.2 243.9,414.8 C244.8,414.5 246.8,415.2 247.8,415.8 C248.9,416.3 250.1,417.4 250.2,418.2Z" fill="#c9dfb0"/>
<path d="M271.3,471.9 C270.9,471.3 272.2,469.5 273.2,468.7 C274.2,467.9 276.2,466.7 277.1,466.9 C278.1,467.2 278.4,469.3 278.8,470.2 C279.2,471.0 279.9,471.6 279.7,472.1 C279.5,472.5 278.2,473.0 277.5,473.1 C276.9,473.2 276.7,472.9 275.7,472.7 C274.6,472.5 271.8,472.6 271.3,471.9Z" fill="#c9dfb0"/>
<path d="M269.7,421.0 C270.4,419.9 275.6,420.9 278.5,420.5 C281.3,420.1 285.6,417.7 286.9,418.5 C288.3,419.3 286.9,423.3 286.7,425.5 C286.5,427.7 287.3,430.6 285.6,432.0 C283.9,433.4 278.5,434.6 276.6,433.8 C274.7,432.9 275.4,429.2 274.2,427.0 C273.1,424.9 269.0,422.0 269.7,421.0Z" fill="#c9dfb0"/>
<path d="M352.9,469.2 C354.3,469.4 357.7,469.9 357.8,470.5 C358.0,471.2 354.9,472.5 353.7,473.1 C352.6,473.7 351.7,474.2 350.7,474.0 C349.7,473.8 347.9,472.8 347.6,472.0 C347.4,471.2 348.6,469.6 349.5,469.1 C350.4,468.6 351.5,469.0 352.9,469.2Z" fill="#c9dfb0"/>
<path d="M333.3,412.4 C332.3,412.2 331.7,410.3 331.3,409.2 C330.9,408.1 330.4,406.8 330.7,405.7 C331.1,404.6 332.5,402.7 333.6,402.7 C334.7,402.7 336.5,405.0 337.5,405.6 C338.5,406.1 338.9,405.5 339.8,405.9 C340.8,406.3 343.0,407.1 343.2,407.9 C343.4,408.7 342.2,410.5 341.2,410.8 C340.2,411.2 338.6,409.7 337.3,409.9 C336.0,410.2 334.3,412.5 333.3,412.4Z" fill="#c9dfb0"/>
<path d="M303.7,377.5 C305.8,377.3 309.1,375.8 309.7,376.4 C310.2,376.9 307.8,379.7 306.9,380.7 C306.1,381.7 306.0,381.9 304.6,382.4 C303.2,382.8 299.6,384.2 298.4,383.4 C297.2,382.6 296.4,378.6 297.3,377.6 C298.2,376.6 301.7,377.7 303.7,377.5Z" fill="#c9dfb0"/>
<path d="M304.2,349.9 C305.2,349.1 306.8,347.7 307.8,347.8 C308.8,348.0 309.7,349.7 310.4,350.7 C311.0,351.8 311.9,352.9 311.6,353.9 C311.3,354.8 309.5,356.6 308.5,356.6 C307.4,356.6 306.7,354.5 305.5,353.8 C304.3,353.2 301.5,353.2 301.3,352.6 C301.1,351.9 303.1,350.7 304.2,349.9Z" fill="#c9dfb0"/>
<path d="M350.1,470.8 C349.2,470.6 347.9,470.1 347.7,469.5 C347.4,469.0 348.1,467.9 348.7,467.5 C349.2,467.1 349.9,466.9 350.8,466.9 C351.7,466.9 353.7,466.9 354.1,467.5 C354.5,468.1 353.9,469.9 353.3,470.4 C352.6,471.0 351.0,470.9 350.1,470.8Z" fill="#c9dfb0"/>
<path d="M309.5,393.7 C310.2,393.4 311.4,393.3 312.2,393.5 C313.0,393.8 313.9,394.6 314.1,395.3 C314.3,396.0 314.0,397.5 313.2,398.0 C312.4,398.5 310.4,398.5 309.5,398.1 C308.7,397.7 307.9,396.5 307.9,395.7 C307.9,395.0 308.8,394.1 309.5,393.7Z" fill="#c9dfb0"/>
<path d="M286.7,392.5 C285.9,391.5 285.3,390.3 285.6,389.5 C285.9,388.7 287.3,388.6 288.5,387.8 C289.8,387.0 292.4,384.5 293.1,384.8 C293.8,385.1 292.5,388.3 292.7,389.6 C293.0,391.0 295.0,391.8 294.6,392.8 C294.2,393.9 291.7,395.9 290.4,395.8 C289.1,395.8 287.5,393.6 286.7,392.5Z" fill="#c9dfb0"/>
<path d="M273.4,421.4 C274.2,421.9 273.5,423.7 273.7,424.8 C274.0,426.0 275.5,427.6 275.0,428.0 C274.5,428.5 272.3,427.5 270.8,427.5 C269.4,427.5 267.0,428.6 266.3,428.1 C265.6,427.6 266.2,425.5 266.6,424.5 C267.1,423.4 267.7,422.1 268.8,421.6 C269.9,421.1 272.6,420.8 273.4,421.4Z" fill="#c9dfb0"/>
<path d="M331.5,404.6 C331.8,405.9 335.1,407.1 335.1,408.3 C335.0,409.4 332.6,411.3 331.1,411.6 C329.6,411.9 327.4,410.7 325.9,410.1 C324.4,409.4 323.2,409.0 322.0,408.0 C320.8,406.9 318.2,404.8 318.7,403.8 C319.1,402.8 323.4,402.9 324.9,402.1 C326.5,401.3 326.7,399.6 328.0,399.2 C329.4,398.9 332.6,399.3 333.2,400.1 C333.8,401.0 331.2,403.2 331.5,404.6Z" fill="#c9dfb0"/>
<path d="M283.0,434.5 C284.1,433.9 285.7,434.3 287.1,434.2 C288.4,434.2 290.0,433.6 290.9,434.1 C291.8,434.6 292.6,436.3 292.5,437.1 C292.3,438.0 290.9,438.6 290.1,439.3 C289.4,440.1 288.7,441.7 287.8,441.8 C286.9,441.8 286.1,440.4 284.9,439.8 C283.7,439.1 280.9,438.8 280.6,437.9 C280.3,437.0 282.0,435.1 283.0,434.5Z" fill="#c9dfb0"/>
<path d="M292.4,435.7 C292.8,435.2 297.0,436.6 298.6,436.2 C300.1,435.7 300.9,433.1 301.8,433.2 C302.7,433.2 303.6,435.4 304.0,436.3 C304.4,437.3 304.2,438.1 304.0,438.9 C303.8,439.6 303.3,440.2 302.7,440.8 C302.1,441.4 301.4,442.2 300.3,442.5 C299.3,442.9 296.8,443.4 296.1,442.9 C295.5,442.4 296.9,440.5 296.3,439.4 C295.6,438.2 292.1,436.3 292.4,435.7Z" fill="#c9dfb0"/>
<path d="M321.9,378.5 C319.4,377.8 314.3,375.7 314.1,374.0 C313.9,372.3 318.4,369.3 320.7,368.3 C323.1,367.3 326.0,367.2 328.3,367.9 C330.6,368.7 334.6,371.1 334.7,372.8 C334.9,374.5 331.2,377.2 329.1,378.1 C326.9,379.1 324.4,379.1 321.9,378.5Z" fill="#c9dfb0"/>
<path d="M282.2,432.4 C282.0,431.2 280.9,430.8 281.0,429.6 C281.2,428.5 281.8,425.7 283.1,425.2 C284.4,424.7 287.4,426.0 288.7,426.8 C289.9,427.7 290.4,429.2 290.7,430.3 C291.0,431.4 290.9,432.5 290.4,433.6 C289.9,434.8 289.0,436.6 287.6,437.1 C286.3,437.6 283.1,437.3 282.2,436.5 C281.3,435.7 282.4,433.5 282.2,432.4Z" fill="#c9dfb0"/>
<path d="M253.5,430.9 C254.4,430.0 256.4,428.6 257.5,428.8 C258.6,429.0 259.3,431.0 260.0,432.0 C260.7,433.1 262.0,434.3 261.7,434.9 C261.3,435.5 258.9,435.3 257.8,435.5 C256.7,435.7 256.0,436.4 255.0,436.1 C254.0,435.9 252.1,435.0 251.8,434.1 C251.6,433.3 252.5,431.8 253.5,430.9Z" fill="#c9dfb0"/>
<path d="M278.3,425.8 C276.7,425.5 276.1,421.6 274.5,420.3 C272.9,418.9 269.5,419.2 268.8,417.7 C268.0,416.3 268.4,412.5 269.8,411.6 C271.3,410.8 275.3,412.5 277.5,412.8 C279.6,413.0 281.0,412.2 282.7,412.9 C284.5,413.6 287.7,415.4 288.0,416.9 C288.2,418.5 286.0,420.6 284.4,422.1 C282.8,423.6 280.0,426.1 278.3,425.8Z" fill="#c9dfb0"/>
<path d="M292.6,358.6 C292.8,359.7 291.4,362.0 290.2,362.4 C288.9,362.9 286.6,361.5 285.2,361.0 C283.7,360.5 281.9,360.3 281.5,359.5 C281.0,358.8 282.1,357.3 282.6,356.4 C283.1,355.6 283.5,355.3 284.5,354.6 C285.4,353.8 287.4,351.7 288.2,351.9 C289.0,352.2 288.6,354.8 289.3,355.9 C290.1,357.0 292.5,357.5 292.6,358.6Z" fill="#c9dfb0"/>
<path d="M324.3,471.0 C323.6,472.7 324.3,476.6 323.1,476.9 C322.0,477.2 319.2,473.6 317.5,472.7 C315.7,471.8 313.3,472.4 312.6,471.5 C311.8,470.6 312.3,468.4 313.0,467.2 C313.6,466.0 314.9,465.1 316.6,464.1 C318.4,463.2 321.7,461.0 323.4,461.4 C325.2,461.8 327.1,465.1 327.3,466.7 C327.4,468.3 325.0,469.3 324.3,471.0Z" fill="#c9dfb0"/>
<path d="M306.3,466.9 C305.1,465.9 302.6,464.1 302.9,463.0 C303.1,461.9 306.3,461.1 307.8,460.4 C309.3,459.7 310.5,458.9 311.9,458.9 C313.3,458.8 314.8,459.3 316.2,460.0 C317.7,460.7 320.1,461.7 320.6,462.9 C321.0,464.1 319.7,466.0 318.7,467.3 C317.8,468.5 316.3,470.1 314.9,470.4 C313.4,470.6 311.4,469.4 309.9,468.8 C308.5,468.2 307.5,467.9 306.3,466.9Z" fill="#c9dfb0"/>
<path d="M242.9,430.6 C243.7,430.6 245.0,430.8 245.6,431.2 C246.1,431.7 245.4,432.4 245.9,433.4 C246.4,434.4 248.9,436.7 248.5,437.2 C248.0,437.7 244.5,436.6 243.2,436.4 C241.9,436.2 242.0,436.2 240.8,436.1 C239.5,436.0 236.5,436.5 235.7,435.8 C235.0,435.2 235.7,432.9 236.5,432.1 C237.3,431.4 239.5,431.6 240.5,431.3 C241.6,431.0 242.0,430.6 242.9,430.6Z" fill="#c9dfb0"/>
<path d="M321.2,435.7 C321.7,434.2 324.6,431.8 326.1,431.7 C327.6,431.7 329.2,434.3 330.2,435.4 C331.3,436.5 332.6,437.8 332.3,438.6 C331.9,439.3 329.8,439.4 328.2,439.8 C326.7,440.1 324.2,441.3 323.1,440.6 C321.9,439.9 320.7,437.1 321.2,435.7Z" fill="#c9dfb0"/>
<path d="M286.2,374.4 C286.2,376.0 285.3,377.7 284.1,378.7 C282.8,379.6 280.3,380.5 278.6,380.3 C276.9,380.1 275.6,378.9 274.0,377.4 C272.5,376.0 268.7,373.1 269.2,371.5 C269.7,370.0 274.5,368.5 277.0,368.1 C279.6,367.7 282.9,368.2 284.4,369.2 C285.9,370.3 286.3,372.9 286.2,374.4Z" fill="#c9dfb0"/>
<path d="M294.7,353.7 C295.5,354.1 295.6,355.9 295.8,356.7 C296.0,357.5 296.2,358.0 296.0,358.5 C295.8,359.0 295.1,359.1 294.6,359.7 C294.1,360.2 293.7,361.6 293.0,361.7 C292.3,361.9 291.2,361.0 290.5,360.5 C289.8,360.1 289.0,359.5 288.8,358.8 C288.5,358.1 288.7,357.2 289.1,356.5 C289.5,355.8 290.2,355.1 291.2,354.6 C292.1,354.2 294.0,353.4 294.7,353.7Z" fill="#c9dfb0"/>
<path d="M285.4,446.6 C286.1,446.5 286.5,446.6 287.4,447.1 C288.3,447.6 290.8,449.0 290.6,449.8 C290.4,450.6 287.4,452.1 286.3,452.0 C285.2,451.9 284.5,450.0 284.0,449.2 C283.4,448.4 282.9,447.8 283.1,447.3 C283.3,446.9 284.7,446.6 285.4,446.6Z" fill="#c9dfb0"/>
<path d="M291.6,378.1 C291.3,377.5 292.4,376.4 292.7,375.8 C293.0,375.2 293.1,374.8 293.5,374.5 C293.9,374.2 294.4,374.2 295.2,373.9 C296.0,373.7 298.0,372.5 298.4,372.8 C298.8,373.1 297.9,374.9 297.8,375.6 C297.7,376.3 297.7,376.2 297.6,376.9 C297.6,377.7 298.1,379.4 297.5,379.8 C296.9,380.3 295.0,380.1 294.0,379.8 C293.1,379.6 291.8,378.8 291.6,378.1Z" fill="#c9dfb0"/>
<path d="M295.2,353.8 C295.3,352.0 296.6,349.5 298.1,348.8 C299.6,348.0 302.7,348.9 304.3,349.4 C305.9,349.9 306.4,350.7 307.6,351.9 C308.7,353.2 311.9,355.9 311.3,356.8 C310.7,357.6 306.5,356.8 304.2,357.2 C301.9,357.7 298.8,360.3 297.3,359.7 C295.8,359.1 295.0,355.6 295.2,353.8Z" fill="#c9dfb0"/>
<path d="M267.2,363.4 C267.6,364.0 267.7,365.6 267.2,366.0 C266.6,366.5 265.1,366.1 264.0,366.0 C262.9,365.8 260.8,365.8 260.4,365.2 C260.1,364.5 261.0,362.6 261.8,362.1 C262.6,361.7 264.1,362.2 265.0,362.5 C265.9,362.7 266.9,362.8 267.2,363.4Z" fill="#c9dfb0"/>
<path d="M244.0,437.1 C243.4,437.1 242.3,437.1 242.0,436.8 C241.8,436.5 242.2,435.8 242.2,435.3 C242.3,434.8 242.1,434.0 242.5,433.8 C242.8,433.6 243.7,434.1 244.4,434.0 C245.1,433.8 246.4,432.8 246.8,433.0 C247.2,433.1 246.6,434.4 246.8,435.0 C247.0,435.7 248.1,436.5 247.9,436.8 C247.6,437.1 246.0,436.8 245.3,436.9 C244.7,436.9 244.5,437.1 244.0,437.1Z" fill="#c9dfb0"/>
<path d="M341.8,471.9 C340.8,471.6 339.6,470.7 339.4,469.7 C339.2,468.7 339.2,466.5 340.3,465.8 C341.4,465.1 344.9,464.9 346.0,465.5 C347.1,466.1 347.0,468.5 346.8,469.5 C346.6,470.6 345.9,471.4 345.1,471.8 C344.2,472.2 342.7,472.3 341.8,471.9Z" fill="#c9dfb0"/>
<path d="M263.0,389.7 C264.5,390.2 268.0,390.6 268.4,391.8 C268.8,393.0 267.0,396.1 265.3,396.9 C263.6,397.8 259.7,397.7 258.2,396.9 C256.7,396.1 256.2,393.4 256.4,392.1 C256.6,390.8 258.3,389.7 259.4,389.3 C260.5,388.9 261.5,389.3 263.0,389.7Z" fill="#c9dfb0"/>
<path d="M284.6,445.4 C283.2,445.7 281.5,445.4 280.3,444.7 C279.1,444.0 277.3,442.4 277.5,441.0 C277.6,439.7 279.8,437.1 281.2,436.8 C282.6,436.6 284.7,438.7 285.9,439.7 C287.2,440.7 288.7,442.0 288.5,442.9 C288.3,443.9 286.0,445.1 284.6,445.4Z" fill="#c9dfb0"/>
<path d="M347.6,445.2 C347.6,447.0 347.0,450.8 345.4,451.4 C343.7,452.1 340.4,449.6 337.7,449.1 C335.1,448.7 331.0,449.9 329.7,448.8 C328.5,447.6 329.1,443.7 330.2,442.3 C331.4,441.0 334.9,441.4 336.6,440.8 C338.3,440.1 339.0,438.6 340.5,438.6 C341.9,438.5 344.2,439.4 345.4,440.5 C346.6,441.6 347.6,443.4 347.6,445.2Z" fill="#c9dfb0"/>
<path d="M271.5,437.8 C272.1,437.9 272.6,439.2 273.1,440.0 C273.5,440.7 274.4,441.9 274.1,442.4 C273.7,442.8 271.7,442.7 270.8,442.8 C270.0,442.9 269.7,443.0 269.0,442.9 C268.4,442.8 267.1,442.5 266.9,442.1 C266.8,441.7 267.6,440.9 268.0,440.5 C268.4,440.1 268.5,440.0 269.1,439.6 C269.7,439.1 270.8,437.8 271.5,437.8Z" fill="#c9dfb0"/>
<path d="M308.9,399.4 C310.1,398.4 310.6,397.8 311.8,397.2 C313.1,396.6 315.4,395.3 316.4,395.7 C317.4,396.1 317.6,398.6 317.9,399.6 C318.3,400.7 318.2,400.8 318.6,402.1 C319.0,403.3 321.1,406.5 320.4,407.2 C319.7,407.9 316.2,406.1 314.2,406.1 C312.3,406.1 310.1,407.6 308.6,407.1 C307.1,406.6 305.1,404.4 305.2,403.1 C305.2,401.8 307.8,400.4 308.9,399.4Z" fill="#c9dfb0"/>
<path d="M303.2,371.5 C302.6,372.0 301.3,372.6 300.7,372.5 C300.0,372.3 299.7,371.3 299.2,370.8 C298.8,370.3 297.8,369.6 298.0,369.2 C298.1,368.8 299.3,368.6 300.1,368.3 C300.8,368.0 301.8,367.4 302.4,367.6 C303.1,367.8 303.8,368.8 304.0,369.5 C304.1,370.1 303.7,371.1 303.2,371.5Z" fill="#c9dfb0"/>
<path d="M292.6,375.3 C293.0,376.2 291.2,378.5 289.9,379.2 C288.6,380.0 286.3,380.1 285.1,379.8 C283.8,379.4 282.9,378.1 282.6,377.2 C282.2,376.4 282.6,375.5 282.9,374.8 C283.3,374.2 284.1,373.5 284.9,373.3 C285.6,373.2 286.1,373.5 287.4,373.8 C288.7,374.1 292.2,374.4 292.6,375.3Z" fill="#c9dfb0"/>
<path d="M344.5,437.3 C344.0,438.1 344.0,439.8 342.9,440.2 C341.9,440.5 339.1,440.1 338.4,439.4 C337.7,438.7 338.5,436.9 338.8,435.9 C339.0,434.9 339.3,433.6 340.0,433.3 C340.7,433.1 342.0,434.1 343.1,434.3 C344.1,434.6 345.9,434.6 346.1,435.1 C346.3,435.5 345.1,436.4 344.5,437.3Z" fill="#c9dfb0"/>
<path d="M249.0,429.5 C249.3,428.8 251.8,427.8 252.7,428.0 C253.7,428.2 254.2,429.8 254.7,430.4 C255.3,431.1 255.9,431.3 256.0,432.0 C256.0,432.7 256.0,433.9 255.2,434.6 C254.3,435.2 251.7,436.2 251.0,435.8 C250.3,435.4 251.3,433.2 251.0,432.2 C250.6,431.1 248.7,430.2 249.0,429.5Z" fill="#c9dfb0"/>
<path d="M327.2,438.7 C326.0,440.1 323.0,441.3 321.3,441.2 C319.5,441.2 317.9,439.4 316.6,438.6 C315.3,437.8 314.4,437.6 313.3,436.3 C312.2,435.0 309.7,432.3 310.2,430.8 C310.8,429.4 315.0,427.5 316.8,427.8 C318.7,428.0 319.4,431.3 321.3,432.2 C323.2,433.0 327.3,432.0 328.3,433.1 C329.3,434.2 328.4,437.4 327.2,438.7Z" fill="#c9dfb0"/>
<path d="M257.0,411.3 C257.9,411.1 260.0,410.5 260.6,410.9 C261.2,411.3 261.0,412.9 260.8,413.8 C260.6,414.6 260.0,415.8 259.3,416.0 C258.6,416.3 257.1,415.3 256.4,415.0 C255.8,414.7 256.0,414.7 255.2,414.3 C254.5,413.9 251.9,413.3 251.9,412.9 C252.0,412.5 254.6,412.4 255.5,412.1 C256.3,411.8 256.2,411.5 257.0,411.3Z" fill="#c9dfb0"/>
<path d="M307.6,393.3 C307.0,393.6 305.6,393.6 305.1,393.2 C304.5,392.9 304.1,391.6 304.3,391.2 C304.6,390.7 305.8,390.8 306.5,390.6 C307.2,390.5 308.2,389.9 308.5,390.1 C308.9,390.3 308.8,391.3 308.6,391.9 C308.5,392.4 308.2,393.1 307.6,393.3Z" fill="#eaefe2"/>
<path d="M263.0,471.9 C261.9,472.8 260.2,473.6 258.8,473.7 C257.3,473.7 255.2,473.1 254.2,472.3 C253.1,471.5 252.6,470.1 252.4,468.9 C252.1,467.7 252.0,466.3 252.7,465.3 C253.3,464.3 254.9,463.3 256.2,463.0 C257.4,462.7 259.3,463.2 260.3,463.7 C261.4,464.2 261.9,465.0 262.7,465.9 C263.5,466.7 265.1,467.7 265.2,468.7 C265.3,469.7 264.1,471.1 263.0,471.9Z" fill="#eaefe2"/>
<path d="M345.0,457.9 C344.6,458.7 342.9,459.7 341.7,459.8 C340.6,459.9 338.8,459.1 338.1,458.4 C337.4,457.6 336.9,455.7 337.4,455.1 C337.9,454.4 340.0,454.6 341.1,454.6 C342.2,454.5 343.5,454.3 344.2,454.9 C344.8,455.4 345.5,457.0 345.0,457.9Z" fill="#eaefe2"/>
<path d="M307.1,460.3 C306.1,459.4 305.6,456.8 306.2,455.6 C306.8,454.4 309.1,453.3 310.8,453.0 C312.6,452.7 315.7,453.0 316.8,454.0 C317.9,455.0 318.1,457.9 317.3,459.0 C316.6,460.2 314.1,460.4 312.4,460.6 C310.6,460.8 308.2,461.1 307.1,460.3Z" fill="#eaefe2"/>
<path d="M244.3,424.7 C245.5,424.1 248.5,425.4 249.9,426.0 C251.3,426.6 252.2,427.4 252.7,428.3 C253.3,429.1 253.4,430.1 253.3,431.2 C253.2,432.3 253.1,433.8 252.0,434.8 C250.9,435.7 248.3,437.1 246.6,436.9 C244.9,436.7 242.3,434.9 241.7,433.7 C241.1,432.4 242.5,430.7 242.9,429.2 C243.4,427.7 243.1,425.2 244.3,424.7Z" fill="#eaefe2"/>
<path d="M293.5,388.8 C293.1,389.3 292.5,389.8 292.0,389.8 C291.5,389.8 291.1,389.1 290.7,388.7 C290.3,388.4 289.8,388.3 289.6,387.8 C289.4,387.3 289.2,385.8 289.6,385.6 C290.0,385.4 291.3,386.4 292.1,386.6 C293.0,386.8 294.5,386.6 294.7,387.0 C295.0,387.3 294.0,388.3 293.5,388.8Z" fill="#eaefe2"/>
<path d="M290.5,415.4 C291.1,415.0 292.5,413.7 292.9,413.9 C293.4,414.0 293.2,415.6 293.2,416.3 C293.2,416.9 293.3,417.2 293.0,417.8 C292.6,418.4 291.7,419.9 291.1,419.9 C290.5,419.9 289.5,418.4 289.2,417.8 C288.8,417.2 288.9,416.6 289.1,416.2 C289.3,415.7 289.9,415.7 290.5,415.4Z" fill="#eaefe2"/>
<path d="M353.5,429.1 C351.8,428.6 348.9,429.4 347.9,428.5 C346.9,427.7 347.0,425.3 347.5,424.0 C348.0,422.7 349.7,421.9 351.0,420.9 C352.3,420.0 353.8,418.7 355.5,418.5 C357.2,418.3 360.4,418.8 361.3,419.8 C362.2,420.8 361.4,423.4 360.9,424.5 C360.4,425.7 358.7,425.4 358.2,426.6 C357.8,427.8 358.9,431.1 358.1,431.5 C357.3,432.0 355.2,429.6 353.5,429.1Z" fill="#eaefe2"/>
<path d="M250.3,377.2 C251.5,376.9 254.1,376.8 255.1,377.4 C256.1,378.1 256.4,379.9 256.4,381.1 C256.4,382.3 256.0,383.7 255.1,384.4 C254.3,385.2 252.3,385.9 251.3,385.7 C250.2,385.5 249.9,384.0 248.9,383.3 C247.8,382.7 245.3,382.5 245.1,381.9 C245.0,381.3 247.2,380.5 248.1,379.7 C249.0,378.9 249.2,377.6 250.3,377.2Z" fill="#eaefe2"/>
<path d="M295.2,413.1 C295.5,413.7 296.0,414.7 295.7,415.3 C295.4,415.9 294.2,416.6 293.3,416.7 C292.5,416.7 291.6,416.2 290.9,415.8 C290.1,415.4 289.3,415.1 289.0,414.4 C288.7,413.8 288.5,412.9 288.9,412.1 C289.2,411.4 290.2,410.2 291.1,410.1 C291.9,410.0 293.3,410.9 294.0,411.4 C294.7,411.9 294.9,412.4 295.2,413.1Z" fill="#eaefe2"/>
<path d="M283.6,468.6 C283.7,468.2 284.3,467.3 285.0,467.2 C285.6,467.1 287.0,467.3 287.5,467.8 C287.9,468.2 287.9,469.3 287.6,469.8 C287.4,470.4 286.3,471.1 285.8,471.1 C285.3,471.1 284.9,470.1 284.5,469.7 C284.1,469.3 283.5,469.0 283.6,468.6Z" fill="#eaefe2"/>
<path d="M284.6,372.9 C283.1,373.7 280.6,374.5 279.4,374.0 C278.2,373.6 278.1,371.3 277.3,370.3 C276.5,369.3 274.7,369.0 274.4,367.9 C274.1,366.7 274.1,364.2 275.3,363.3 C276.4,362.5 279.6,362.1 281.2,362.5 C282.7,363.0 283.2,364.8 284.4,365.9 C285.6,367.0 288.3,368.1 288.4,369.2 C288.4,370.4 286.1,372.1 284.6,372.9Z" fill="#eaefe2"/>
<path d="M272.8,414.1 C273.5,413.7 275.1,413.5 276.0,413.7 C276.9,413.9 277.2,414.8 278.1,415.3 C278.9,415.8 281.0,416.1 281.2,416.8 C281.5,417.5 280.3,418.7 279.6,419.3 C278.9,420.0 277.9,420.8 277.0,420.8 C276.2,420.8 275.1,420.0 274.5,419.5 C273.9,419.1 273.8,418.8 273.4,418.3 C272.9,417.8 271.8,417.2 271.7,416.5 C271.6,415.9 272.1,414.6 272.8,414.1Z" fill="#eaefe2"/>
<path d="M348.2,450.6 C347.4,450.7 346.4,449.1 345.7,448.6 C345.0,448.1 344.2,448.0 344.0,447.4 C343.8,446.9 343.8,445.8 344.4,445.2 C345.0,444.6 346.3,444.0 347.4,444.0 C348.5,444.0 350.5,444.6 351.0,445.3 C351.5,446.0 350.8,447.4 350.4,448.3 C349.9,449.2 349.0,450.6 348.2,450.6Z" fill="#eaefe2"/>
<path d="M365.5,449.1 C364.7,449.0 363.7,447.5 363.2,446.7 C362.7,445.8 362.3,445.0 362.5,444.1 C362.8,443.3 363.8,441.6 364.7,441.5 C365.6,441.3 367.1,442.5 368.0,443.1 C368.9,443.7 370.3,444.3 370.3,445.0 C370.4,445.6 369.1,446.4 368.3,447.0 C367.5,447.7 366.4,449.1 365.5,449.1Z" fill="#eaefe2"/>
<path d="M281.1,451.6 C280.1,451.8 278.0,450.4 276.8,449.5 C275.7,448.6 274.0,447.2 274.2,446.2 C274.5,445.2 276.7,444.0 278.2,443.6 C279.7,443.3 282.3,443.5 283.1,444.2 C283.8,444.9 283.1,446.6 282.8,447.8 C282.5,449.1 282.1,451.3 281.1,451.6Z" fill="#eaefe2"/>
<path d="M257.3,440.3 C257.9,440.1 258.6,440.4 259.6,440.7 C260.5,441.0 262.6,441.5 262.9,442.1 C263.1,442.8 261.6,444.0 260.8,444.6 C260.1,445.1 259.2,445.0 258.3,445.3 C257.4,445.6 256.2,446.5 255.6,446.3 C254.9,446.1 255.0,444.8 254.5,444.1 C253.9,443.4 252.0,442.5 252.2,442.1 C252.4,441.6 254.9,441.7 255.8,441.4 C256.6,441.1 256.6,440.4 257.3,440.3Z" fill="#eaefe2"/>
<path d="M346.7,422.1 C346.2,422.0 345.9,421.4 345.3,421.0 C344.8,420.6 343.5,420.3 343.3,419.7 C343.1,419.1 343.5,417.8 344.2,417.3 C344.9,416.8 346.5,416.5 347.3,416.7 C348.2,416.9 348.7,417.7 349.4,418.3 C350.1,418.9 351.6,419.8 351.4,420.3 C351.3,420.8 349.1,421.1 348.4,421.3 C347.6,421.6 347.2,422.1 346.7,422.1Z" fill="#eaefe2"/>
<path d="M278.7,424.6 C281.3,424.9 285.7,425.2 286.6,426.6 C287.5,428.1 285.8,432.3 284.2,433.4 C282.6,434.6 279.0,434.2 277.0,433.8 C275.0,433.4 273.2,432.6 272.3,431.1 C271.3,429.6 270.1,426.2 271.2,425.1 C272.2,424.0 276.2,424.4 278.7,424.6Z" fill="#eaefe2"/>
<path d="M279.4,368.4 C280.5,368.2 282.9,370.6 284.3,371.1 C285.6,371.7 287.1,371.1 287.6,371.7 C288.0,372.2 287.1,373.4 287.1,374.3 C287.2,375.3 288.2,376.4 287.8,377.2 C287.3,378.0 285.9,378.7 284.5,379.2 C283.1,379.6 280.6,380.4 279.3,379.9 C278.0,379.4 277.1,377.4 276.8,376.2 C276.5,374.9 276.9,373.7 277.4,372.4 C277.8,371.1 278.2,368.6 279.4,368.4Z" fill="#eaefe2"/>
<path d="M292.8,423.2 C291.9,423.7 290.5,424.0 289.6,423.8 C288.8,423.6 288.3,422.6 287.8,421.8 C287.4,421.0 286.6,419.9 287.0,419.2 C287.3,418.5 288.9,417.6 290.0,417.5 C291.0,417.4 292.4,418.0 293.2,418.6 C294.0,419.2 294.8,420.2 294.7,421.0 C294.6,421.8 293.6,422.7 292.8,423.2Z" fill="#eaefe2"/>
<path d="M321.9,456.5 C322.3,456.3 322.6,456.5 323.1,456.3 C323.5,456.2 324.1,455.6 324.6,455.6 C325.1,455.7 326.1,456.2 326.2,456.6 C326.3,457.0 325.4,457.6 325.0,458.0 C324.7,458.3 324.5,458.5 324.2,458.6 C323.8,458.8 323.3,458.9 323.0,458.8 C322.7,458.7 322.6,458.4 322.2,458.2 C321.8,458.0 320.6,457.7 320.5,457.4 C320.5,457.1 321.5,456.7 321.9,456.5Z" fill="#eaefe2"/>
<path d="M370.3,451.0 C369.6,451.5 367.2,450.6 366.0,450.3 C364.9,449.9 363.8,449.8 363.4,449.0 C363.0,448.3 362.8,446.4 363.5,445.8 C364.1,445.2 366.4,445.4 367.5,445.6 C368.6,445.9 369.6,446.6 370.1,447.5 C370.5,448.4 371.0,450.6 370.3,451.0Z" fill="#eaefe2"/>
<path d="M306.1,406.1 C307.0,405.6 307.7,405.4 308.6,405.3 C309.6,405.2 311.3,405.2 311.8,405.7 C312.2,406.1 311.5,407.3 311.6,408.2 C311.7,409.1 312.7,410.8 312.2,411.2 C311.7,411.6 309.7,410.5 308.5,410.5 C307.2,410.5 305.4,411.6 304.5,411.1 C303.7,410.7 302.9,408.8 303.2,408.0 C303.4,407.2 305.2,406.5 306.1,406.1Z" fill="#eaefe2"/>
<path d="M310.1,352.4 C311.3,352.6 312.8,353.7 313.4,355.1 C313.9,356.5 314.5,360.1 313.4,360.7 C312.3,361.4 308.2,359.8 306.8,359.0 C305.4,358.2 305.1,357.0 305.0,356.1 C304.9,355.1 305.4,354.0 306.2,353.4 C307.0,352.8 308.9,352.1 310.1,352.4Z" fill="#eaefe2"/>
<path d="M290.7,462.4 C291.5,462.6 291.7,464.8 292.0,466.1 C292.3,467.3 293.2,469.5 292.5,469.9 C291.9,470.3 289.4,468.7 288.2,468.2 C287.0,467.8 285.4,467.6 285.3,467.1 C285.1,466.6 286.4,465.8 287.3,465.0 C288.2,464.3 289.9,462.3 290.7,462.4Z" fill="#eaefe2"/>
<path d="M299.5,438.3 C298.4,438.3 297.2,437.0 296.3,436.5 C295.4,436.0 295.2,436.0 294.3,435.4 C293.4,434.9 290.7,433.7 290.8,433.1 C291.0,432.6 294.2,432.8 295.3,432.0 C296.3,431.2 296.6,428.1 297.2,428.1 C297.9,428.1 298.1,431.3 299.2,432.1 C300.3,432.9 303.3,432.1 303.9,432.9 C304.6,433.6 304.1,435.6 303.3,436.5 C302.6,437.4 300.7,438.3 299.5,438.3Z" fill="#eaefe2"/>
<path d="M335.8,441.7 C336.6,441.7 337.9,442.1 338.5,442.6 C339.0,443.1 339.2,444.1 339.1,444.8 C339.1,445.4 338.7,446.4 338.2,446.6 C337.6,446.8 336.5,446.2 335.9,446.1 C335.2,446.0 334.7,446.1 334.5,445.9 C334.2,445.7 334.6,445.3 334.4,444.8 C334.1,444.3 333.0,443.3 333.2,442.8 C333.4,442.2 334.9,441.7 335.8,441.7Z" fill="#eaefe2"/>
<path d="M330.8,425.8 C331.1,425.4 332.4,425.5 333.1,425.6 C333.7,425.7 334.6,425.8 334.9,426.2 C335.2,426.5 334.8,427.0 334.9,427.6 C335.1,428.2 336.0,429.3 335.6,429.8 C335.3,430.2 333.7,430.6 333.0,430.5 C332.2,430.4 331.3,429.7 331.0,429.2 C330.7,428.7 331.4,428.2 331.3,427.6 C331.3,427.0 330.5,426.1 330.8,425.8Z" fill="#eaefe2"/>
<path d="M328.8,447.6 C328.1,446.9 328.1,445.3 328.5,444.6 C328.8,443.9 329.9,443.7 330.6,443.4 C331.3,443.0 332.0,442.4 332.6,442.5 C333.3,442.5 333.9,443.1 334.5,443.8 C335.0,444.5 336.3,445.7 336.0,446.5 C335.7,447.3 334.0,448.5 332.8,448.7 C331.6,448.8 329.5,448.2 328.8,447.6Z" fill="#eaefe2"/>
<path d="M350.6,417.2 C350.1,417.2 350.1,416.6 349.3,416.6 C348.6,416.5 346.8,417.1 346.3,416.8 C345.8,416.5 346.4,415.3 346.6,414.6 C346.8,413.9 347.0,413.1 347.6,412.6 C348.3,412.2 349.7,411.7 350.4,411.9 C351.2,412.1 351.5,413.3 352.0,413.8 C352.6,414.4 353.6,414.7 353.7,415.2 C353.7,415.6 352.7,416.3 352.2,416.6 C351.7,417.0 351.1,417.2 350.6,417.2Z" fill="#eaefe2"/>
<path d="M347.2,454.5 C346.9,454.8 345.1,455.1 344.6,454.9 C344.0,454.7 344.1,453.9 343.7,453.3 C343.4,452.7 342.3,451.9 342.6,451.4 C342.9,450.9 345.0,450.1 345.6,450.3 C346.2,450.4 346.1,451.9 346.3,452.6 C346.6,453.3 347.5,454.1 347.2,454.5Z" fill="#eaefe2"/>
<path d="M307.3,457.0 C307.9,456.2 311.4,456.7 313.2,456.9 C314.9,457.0 317.3,457.0 318.0,457.8 C318.8,458.6 317.8,460.6 317.6,461.6 C317.3,462.7 317.2,463.1 316.5,464.3 C315.7,465.4 314.4,468.3 313.2,468.4 C312.0,468.5 310.0,465.9 309.4,464.7 C308.7,463.6 309.7,463.0 309.4,461.7 C309.0,460.4 306.7,457.8 307.3,457.0Z" fill="#eaefe2"/>
<path d="M312.2,365.8 C312.5,365.3 313.6,365.1 314.3,364.8 C315.1,364.6 316.0,364.1 316.7,364.2 C317.3,364.4 318.1,365.1 318.4,365.6 C318.7,366.2 318.6,366.8 318.5,367.4 C318.4,368.0 318.4,368.6 317.9,369.0 C317.5,369.5 316.5,370.2 315.9,370.1 C315.3,369.9 315.1,368.7 314.5,368.4 C314.0,368.0 313.0,368.2 312.6,367.8 C312.2,367.3 311.9,366.3 312.2,365.8Z" fill="#eaefe2"/>
<path d="M349.8,466.9 C350.7,466.8 351.4,468.0 352.8,468.1 C354.2,468.2 357.2,467.2 358.0,467.7 C358.8,468.3 358.1,470.7 357.4,471.5 C356.7,472.4 354.7,472.3 353.7,472.7 C352.7,473.1 352.9,473.5 351.7,474.0 C350.5,474.5 347.4,476.1 346.7,475.6 C346.1,475.2 347.6,472.5 347.7,471.4 C347.8,470.3 347.1,469.7 347.4,468.9 C347.8,468.2 348.9,467.0 349.8,466.9Z" fill="#eaefe2"/>
<path d="M342.1,456.3 C340.6,456.1 339.3,453.5 338.8,452.4 C338.4,451.3 339.0,450.8 339.5,449.9 C339.9,449.0 340.6,447.2 341.6,447.0 C342.6,446.9 344.5,447.9 345.6,448.9 C346.7,450.0 348.6,452.2 348.0,453.4 C347.4,454.7 343.7,456.5 342.1,456.3Z" fill="#eaefe2"/>
<path d="M364.5,446.1 C364.3,446.0 364.2,445.8 363.9,445.6 C363.5,445.5 362.3,445.4 362.2,445.2 C362.2,445.0 363.3,444.9 363.6,444.5 C363.9,444.1 363.5,443.1 363.9,442.9 C364.2,442.7 365.2,443.1 365.6,443.4 C365.9,443.6 365.6,444.2 365.8,444.6 C366.1,444.9 367.1,445.3 367.0,445.5 C366.9,445.8 365.8,445.8 365.4,445.9 C365.0,446.0 364.8,446.1 364.5,446.1Z" fill="#eaefe2"/>
<path d="M307.7,363.5 C308.8,364.1 312.4,364.9 312.6,365.7 C312.8,366.5 310.2,367.5 309.0,368.4 C307.8,369.2 306.4,370.7 305.1,370.6 C303.9,370.6 302.5,369.1 301.5,368.2 C300.4,367.4 299.1,366.6 298.9,365.6 C298.6,364.6 299.1,363.3 299.7,362.2 C300.3,361.2 301.5,359.2 302.6,359.2 C303.7,359.2 305.4,361.4 306.3,362.1 C307.1,362.8 306.7,362.9 307.7,363.5Z" fill="#eaefe2"/>
<path d="M242.6,415.1 C243.2,415.0 244.1,415.4 244.7,415.6 C245.2,415.9 245.5,416.0 246.0,416.3 C246.4,416.6 247.2,417.0 247.4,417.5 C247.7,418.1 247.8,419.4 247.4,419.7 C246.9,420.0 245.4,419.2 244.6,419.3 C243.7,419.3 242.9,420.2 242.2,420.1 C241.6,419.9 240.8,419.1 240.5,418.5 C240.3,417.8 240.4,416.9 240.8,416.4 C241.1,415.8 242.0,415.2 242.6,415.1Z" fill="#eaefe2"/>
<path d="M247.6,408.9 C249.5,408.7 253.3,410.0 253.9,411.0 C254.6,412.1 252.3,414.2 251.5,415.4 C250.6,416.5 250.1,417.8 249.1,417.9 C248.0,418.1 246.2,417.3 245.1,416.4 C244.1,415.5 242.1,413.6 242.6,412.4 C243.0,411.1 245.7,409.1 247.6,408.9Z" fill="#eaefe2"/>
<path d="M260.7,424.9 C260.4,426.0 260.2,426.5 259.2,427.5 C258.2,428.5 256.1,430.9 254.6,430.9 C253.0,430.8 250.6,428.5 249.9,427.1 C249.3,425.6 249.7,423.4 250.7,422.2 C251.6,421.0 253.8,419.9 255.5,419.7 C257.2,419.5 259.8,420.2 260.7,421.1 C261.5,422.0 260.9,423.8 260.7,424.9Z" fill="#eaefe2"/>
<path d="M325.4,426.3 C326.6,427.6 326.2,431.7 325.0,432.8 C323.8,433.8 320.5,432.6 318.4,432.7 C316.2,432.7 313.2,434.0 311.9,432.9 C310.7,431.9 309.8,427.9 310.8,426.6 C311.9,425.3 315.7,425.1 318.1,425.1 C320.5,425.0 324.3,425.0 325.4,426.3Z" fill="#eaefe2"/>
<path d="M333.8,382.7 C333.5,383.3 332.8,383.5 332.2,383.8 C331.7,384.0 331.4,383.9 330.6,384.1 C329.7,384.2 327.7,384.8 327.2,384.4 C326.6,384.0 327.0,382.5 327.3,381.8 C327.6,381.1 328.5,380.6 329.2,380.2 C329.9,379.9 330.8,379.4 331.6,379.5 C332.5,379.5 333.9,379.9 334.3,380.5 C334.6,381.0 334.1,382.2 333.8,382.7Z" fill="#eaefe2"/>
<path d="M334.1,392.5 C333.4,391.2 332.6,390.7 333.0,389.5 C333.4,388.2 334.8,385.1 336.6,384.8 C338.4,384.5 343.0,386.4 343.7,387.7 C344.5,389.1 342.2,391.4 341.1,393.0 C340.0,394.5 338.2,397.0 337.0,396.9 C335.9,396.8 334.8,393.7 334.1,392.5Z" fill="#eaefe2"/>
<path d="M346.0,462.5 C345.4,463.2 342.0,462.6 340.1,462.6 C338.3,462.5 335.9,462.8 335.1,462.0 C334.3,461.3 334.8,459.2 335.1,457.9 C335.5,456.7 336.0,455.4 337.4,454.5 C338.8,453.7 342.5,452.2 343.5,452.8 C344.6,453.4 343.5,456.4 343.9,458.0 C344.3,459.6 346.6,461.7 346.0,462.5Z" fill="#eaefe2"/>
<path d="M311.7,428.5 C312.3,429.2 313.2,430.4 313.0,431.2 C312.8,432.0 311.4,432.8 310.5,433.3 C309.5,433.7 308.0,434.3 307.2,434.0 C306.3,433.8 306.1,432.4 305.3,431.8 C304.5,431.2 302.6,431.1 302.1,430.4 C301.7,429.6 302.0,428.0 302.7,427.2 C303.3,426.5 305.1,425.9 306.2,425.9 C307.4,425.8 308.5,426.5 309.4,427.0 C310.3,427.4 311.1,427.8 311.7,428.5Z" fill="#eaefe2"/>
<path d="M250.6,461.3 C251.6,460.8 254.7,460.9 255.7,461.6 C256.7,462.2 256.4,464.3 256.4,465.3 C256.3,466.3 256.1,467.3 255.5,467.7 C254.8,468.2 253.8,467.8 252.5,467.9 C251.3,467.9 248.6,468.8 248.0,468.3 C247.5,467.8 249.0,466.1 249.4,464.9 C249.8,463.7 249.5,461.9 250.6,461.3Z" fill="#eaefe2"/>
<path d="M268.5,464.1 C269.5,463.4 272.2,462.8 273.3,463.2 C274.4,463.6 275.2,465.6 275.3,466.5 C275.4,467.5 274.6,468.3 274.0,468.9 C273.5,469.5 272.7,470.0 271.9,470.1 C271.2,470.1 270.5,469.7 269.7,469.3 C268.9,468.9 267.4,468.3 267.2,467.4 C267.0,466.6 267.5,464.8 268.5,464.1Z" fill="#eaefe2"/>
<path d="M259.4,364.0 C260.1,364.9 261.8,366.2 261.5,366.8 C261.2,367.5 258.6,367.6 257.5,367.8 C256.4,368.1 255.8,368.5 254.9,368.5 C253.9,368.4 251.8,368.1 251.5,367.5 C251.2,366.9 252.9,365.9 253.1,364.9 C253.4,363.8 252.2,361.8 253.0,361.2 C253.7,360.6 256.4,360.7 257.5,361.2 C258.6,361.6 258.8,363.0 259.4,364.0Z" fill="#eaefe2"/>
<path d="M355.9,407.9 C355.8,408.4 353.7,408.6 352.7,409.0 C351.7,409.5 350.6,410.7 349.7,410.5 C348.9,410.4 347.6,409.0 347.4,408.1 C347.2,407.3 347.8,405.9 348.4,405.4 C349.1,404.9 350.7,405.0 351.5,405.2 C352.2,405.3 352.2,405.9 352.9,406.3 C353.7,406.8 355.9,407.5 355.9,407.9Z" fill="#eaefe2"/>
<path d="M261.3,459.4 C261.7,459.2 262.3,459.2 262.6,459.3 C263.0,459.4 263.1,459.6 263.6,459.9 C264.1,460.3 265.8,460.9 265.8,461.2 C265.8,461.6 264.1,461.8 263.4,462.1 C262.7,462.4 262.2,462.9 261.6,462.8 C261.0,462.8 260.2,462.1 260.0,461.7 C259.8,461.3 260.2,460.6 260.5,460.3 C260.7,459.9 261.0,459.6 261.3,459.4Z" fill="#eaefe2"/>
<path d="M250.4,352.1 C251.2,353.1 251.8,355.3 251.2,356.2 C250.5,357.0 247.9,357.0 246.4,357.1 C244.9,357.2 243.5,357.6 242.1,357.0 C240.8,356.4 238.2,354.6 238.2,353.5 C238.3,352.4 241.1,350.8 242.5,350.3 C243.9,349.9 245.4,350.3 246.7,350.6 C248.0,350.9 249.7,351.2 250.4,352.1Z" fill="#eaefe2"/>
<path d="M324.0,461.1 C322.2,461.0 318.6,460.5 318.1,459.5 C317.6,458.5 320.0,456.1 321.0,455.1 C322.0,454.0 323.0,453.4 324.2,453.2 C325.4,453.0 327.0,453.2 328.1,453.8 C329.2,454.3 330.8,455.6 330.8,456.7 C330.9,457.7 329.8,459.4 328.7,460.1 C327.5,460.9 325.7,461.2 324.0,461.1Z" fill="#eaefe2"/>
<path d="M326.7,411.2 C326.0,412.1 323.2,413.1 321.8,412.9 C320.3,412.7 318.6,411.4 317.9,410.2 C317.1,409.0 316.6,406.9 317.5,405.8 C318.3,404.7 321.5,403.5 322.9,403.8 C324.3,404.0 325.2,406.1 325.9,407.3 C326.5,408.6 327.4,410.2 326.7,411.2Z" fill="#eaefe2"/>
<path d="M308.3,411.3 C308.3,410.7 308.2,410.3 308.5,409.8 C308.7,409.4 309.2,408.4 309.8,408.3 C310.3,408.3 311.3,409.0 311.8,409.3 C312.3,409.6 312.5,409.8 312.8,410.2 C313.2,410.6 314.0,411.1 314.0,411.6 C314.1,412.2 313.6,412.8 313.1,413.4 C312.5,414.0 311.4,415.3 310.6,415.3 C309.8,415.3 308.6,414.1 308.2,413.4 C307.8,412.7 308.2,411.9 308.3,411.3Z" fill="#eaefe2"/>
<path d="M252.5,382.7 C251.4,383.4 248.9,383.3 247.5,383.1 C246.2,382.9 245.2,382.1 244.5,381.6 C243.7,381.0 243.8,380.6 243.0,379.7 C242.1,378.9 239.3,377.3 239.6,376.7 C239.8,376.1 243.2,376.0 244.5,375.9 C245.7,375.8 246.2,376.0 247.1,376.1 C247.9,376.1 248.6,376.0 249.8,376.5 C251.0,376.9 253.7,377.6 254.2,378.6 C254.7,379.7 253.6,381.9 252.5,382.7Z" fill="#eaefe2"/>
<path d="M297.4,439.0 C297.8,438.8 297.8,438.6 298.2,438.4 C298.6,438.3 299.7,437.9 299.9,438.1 C300.1,438.3 299.4,439.1 299.5,439.5 C299.6,440.0 300.6,440.4 300.5,440.7 C300.4,440.9 299.5,441.2 299.1,441.3 C298.7,441.3 298.3,441.1 297.8,441.0 C297.4,440.9 296.9,440.9 296.5,440.7 C296.2,440.4 295.8,439.8 296.0,439.5 C296.1,439.3 297.1,439.2 297.4,439.0Z" fill="#eaefe2"/>
<path d="M341.3,459.6 C341.8,458.4 342.3,456.9 343.5,456.5 C344.7,456.1 347.5,456.3 348.7,457.1 C349.9,457.9 350.9,460.4 350.5,461.4 C350.0,462.3 347.5,462.4 345.9,462.9 C344.2,463.3 341.3,464.6 340.5,464.1 C339.8,463.5 340.8,460.9 341.3,459.6Z" fill="#eaefe2"/>
<path d="M358.9,436.2 C359.9,435.4 363.1,434.7 364.2,435.2 C365.3,435.7 364.8,438.3 365.5,439.4 C366.2,440.5 368.3,440.7 368.5,441.8 C368.7,442.8 368.0,445.1 366.9,445.7 C365.7,446.3 363.4,445.6 361.6,445.4 C359.8,445.2 356.7,445.3 356.1,444.4 C355.4,443.6 357.5,441.5 358.0,440.1 C358.5,438.7 357.9,437.1 358.9,436.2Z" fill="#eaefe2"/>
<path d="M362.7,450.9 C363.1,450.4 365.0,450.6 366.0,450.4 C366.9,450.3 368.2,449.8 368.6,450.1 C369.0,450.4 368.1,451.6 368.4,452.3 C368.8,453.1 370.9,454.2 370.7,454.6 C370.6,454.9 368.3,454.5 367.4,454.6 C366.4,454.7 365.8,455.1 365.1,454.9 C364.5,454.7 364.0,454.1 363.6,453.4 C363.2,452.7 362.3,451.4 362.7,450.9Z" fill="#eaefe2"/>
<path d="M345.0,268.0 C353.0,261.7 397.5,261.7 420.0,262.0 C442.5,262.3 460.0,265.7 480.0,270.0 C500.0,274.3 520.0,283.7 540.0,288.0 C560.0,292.3 580.0,296.0 600.0,296.0 C620.0,296.0 640.0,292.0 660.0,288.0 C680.0,284.0 700.0,276.3 720.0,272.0 C740.0,267.7 764.2,262.3 780.0,262.0 C795.8,261.7 809.2,263.7 815.0,270.0 C820.8,276.3 824.2,294.7 815.0,300.0 C805.8,305.3 779.2,300.0 760.0,302.0 C740.8,304.0 720.0,308.7 700.0,312.0 C680.0,315.3 660.0,319.0 640.0,322.0 C620.0,325.0 600.0,327.3 580.0,330.0 C560.0,332.7 538.3,337.2 520.0,338.0 C501.7,338.8 486.7,337.2 470.0,335.0 C453.3,332.8 436.3,330.8 420.0,325.0 C403.7,319.2 384.5,309.5 372.0,300.0 C359.5,290.5 337.0,274.3 345.0,268.0Z" fill="#e6eedb"/>
<path d="M793.3,304.9 C792.1,305.5 789.6,304.4 787.5,303.7 C785.5,303.0 781.3,301.7 781.2,300.5 C781.0,299.2 784.6,297.8 786.4,296.1 C788.1,294.5 789.6,290.8 791.7,290.6 C793.7,290.5 798.1,293.6 798.6,295.2 C799.1,296.9 795.6,298.8 794.8,300.4 C793.9,302.1 794.5,304.4 793.3,304.9Z" fill="#d0e4bc"/>
<path d="M429.0,289.7 C430.6,289.6 434.2,288.7 434.8,289.4 C435.4,290.1 432.8,292.3 432.6,293.8 C432.3,295.3 434.2,297.6 433.3,298.4 C432.5,299.3 429.2,299.1 427.6,298.8 C426.0,298.4 424.6,297.4 423.7,296.4 C422.8,295.3 421.8,293.8 422.0,292.8 C422.3,291.7 423.9,290.4 425.0,289.9 C426.2,289.4 427.4,289.8 429.0,289.7Z" fill="#d0e4bc"/>
<path d="M469.2,306.4 C468.6,306.8 468.2,307.8 467.4,307.9 C466.7,308.1 465.6,307.6 464.8,307.2 C463.9,306.7 462.2,305.8 462.4,305.2 C462.5,304.6 465.0,304.2 465.8,303.7 C466.5,303.2 466.4,302.6 466.9,302.4 C467.4,302.3 468.0,302.6 468.8,302.7 C469.6,302.9 471.1,302.8 471.5,303.2 C472.0,303.7 471.7,304.9 471.4,305.4 C471.0,306.0 469.9,306.0 469.2,306.4Z" fill="#d0e4bc"/>
<path d="M541.7,328.5 C542.6,329.6 544.7,332.6 544.0,333.4 C543.3,334.3 539.0,334.2 537.5,333.8 C535.9,333.5 536.0,332.2 534.6,331.3 C533.2,330.4 529.0,329.1 529.1,328.4 C529.2,327.6 533.9,327.1 535.4,326.9 C537.0,326.7 537.4,326.9 538.5,327.1 C539.5,327.4 540.7,327.5 541.7,328.5Z" fill="#d0e4bc"/>
<path d="M474.4,286.9 C473.0,285.7 471.3,282.6 472.0,280.9 C472.6,279.2 476.1,277.0 478.5,276.5 C480.8,276.1 484.4,277.2 486.1,278.4 C487.8,279.6 489.0,282.2 488.7,283.6 C488.4,285.0 485.7,286.0 484.3,286.8 C482.9,287.6 481.8,288.4 480.2,288.4 C478.5,288.5 475.8,288.2 474.4,286.9Z" fill="#d0e4bc"/>
<path d="M647.7,308.8 C647.2,307.7 648.9,305.8 649.8,304.6 C650.8,303.5 651.5,302.5 653.3,301.9 C655.0,301.3 658.4,300.4 660.2,301.2 C661.9,302.0 664.0,305.2 663.8,306.9 C663.6,308.6 660.6,310.7 658.7,311.4 C656.9,312.2 654.5,311.7 652.7,311.3 C650.9,310.8 648.2,309.9 647.7,308.8Z" fill="#d0e4bc"/>
<path d="M789.8,277.9 C791.4,276.6 794.3,275.2 796.4,275.5 C798.6,275.8 802.7,278.4 802.8,279.7 C802.9,281.1 798.7,282.4 797.0,283.6 C795.4,284.8 794.5,286.7 792.8,286.7 C791.1,286.6 787.4,284.7 786.9,283.2 C786.4,281.8 788.2,279.2 789.8,277.9Z" fill="#d0e4bc"/>
<path d="M678.9,309.2 C679.5,309.2 680.3,309.3 681.0,309.8 C681.7,310.3 683.4,311.6 683.1,312.1 C682.9,312.6 680.6,312.6 679.6,312.9 C678.7,313.2 678.5,313.6 677.6,313.7 C676.7,313.8 674.7,313.9 674.1,313.3 C673.4,312.8 673.2,311.0 673.6,310.4 C674.1,309.7 676.0,309.7 676.9,309.5 C677.8,309.3 678.2,309.1 678.9,309.2Z" fill="#d0e4bc"/>
<path d="M693.6,291.9 C693.0,292.4 691.6,292.8 690.5,292.8 C689.4,292.8 687.8,292.5 687.3,291.9 C686.7,291.3 687.1,290.1 687.2,289.3 C687.3,288.5 687.3,287.8 687.9,287.1 C688.4,286.4 689.6,285.1 690.7,285.0 C691.8,284.9 693.9,285.6 694.5,286.3 C695.1,287.0 694.3,288.5 694.2,289.4 C694.0,290.3 694.2,291.3 693.6,291.9Z" fill="#d0e4bc"/>
<path d="M674.7,292.2 C675.3,291.8 676.9,291.7 677.5,291.9 C678.2,292.2 678.6,293.4 678.8,294.0 C678.9,294.6 678.3,294.9 678.3,295.5 C678.2,296.1 679.0,297.3 678.6,297.6 C678.2,297.9 676.9,297.5 676.1,297.4 C675.3,297.4 674.2,297.8 673.8,297.5 C673.4,297.2 673.6,296.1 673.6,295.6 C673.6,295.1 673.6,294.8 673.8,294.2 C674.0,293.6 674.0,292.6 674.7,292.2Z" fill="#d0e4bc"/>
<path d="M621.5,318.5 C622.4,318.2 622.8,318.4 623.7,318.4 C624.6,318.4 625.9,318.0 626.7,318.4 C627.5,318.9 628.4,320.1 628.4,321.0 C628.4,322.0 627.5,323.8 626.6,324.0 C625.7,324.2 624.3,322.6 622.9,322.4 C621.6,322.3 619.2,323.8 618.4,323.3 C617.7,322.9 618.0,320.7 618.5,319.9 C619.1,319.1 620.7,318.7 621.5,318.5Z" fill="#d0e4bc"/>
<path d="M539.6,303.5 C540.2,303.9 540.8,304.2 540.8,304.6 C540.8,305.1 540.2,305.7 539.7,305.9 C539.2,306.1 538.6,306.1 537.8,305.9 C537.0,305.7 535.2,305.2 535.0,304.5 C534.9,303.9 536.4,302.4 537.1,302.2 C537.9,302.0 539.0,303.1 539.6,303.5Z" fill="#d0e4bc"/>
<path d="M381.9,271.2 C381.4,271.1 381.2,270.1 381.0,269.5 C380.8,268.9 380.5,268.3 380.7,267.8 C380.9,267.3 381.5,266.5 382.1,266.3 C382.6,266.1 383.7,266.3 384.3,266.6 C384.8,266.8 385.1,267.3 385.4,267.7 C385.6,268.0 385.9,268.4 385.9,268.7 C386.0,269.1 385.9,269.7 385.6,270.0 C385.3,270.3 384.7,270.2 384.1,270.5 C383.5,270.7 382.4,271.4 381.9,271.2Z" fill="#d0e4bc"/>
<path d="M636.2,317.5 C635.6,317.2 636.0,316.2 635.6,315.4 C635.2,314.6 633.4,313.2 633.7,312.6 C634.0,312.0 636.5,311.6 637.4,311.7 C638.4,311.9 639.0,313.0 639.5,313.4 C640.1,313.9 640.4,313.9 640.9,314.5 C641.3,315.1 642.5,316.4 642.2,316.9 C641.9,317.5 640.0,317.6 639.0,317.7 C638.0,317.8 636.8,317.9 636.2,317.5Z" fill="#d0e4bc"/>
<path d="M390.8,303.2 C391.3,303.3 391.4,304.9 391.5,305.5 C391.7,306.1 391.4,306.2 391.4,306.8 C391.5,307.4 392.3,308.6 391.9,309.0 C391.6,309.5 390.0,309.7 389.3,309.5 C388.6,309.4 388.2,308.4 387.8,308.0 C387.4,307.6 387.1,307.4 386.8,306.9 C386.5,306.4 385.7,305.4 386.0,305.1 C386.2,304.7 387.7,305.2 388.5,304.9 C389.3,304.6 390.3,303.1 390.8,303.2Z" fill="#d0e4bc"/>
<path d="M472.8,295.2 C472.3,296.2 469.3,296.9 467.8,297.1 C466.3,297.4 464.9,297.4 463.7,296.7 C462.5,296.1 460.5,294.5 460.7,293.3 C460.8,292.1 462.9,289.9 464.5,289.5 C466.1,289.0 469.0,289.7 470.3,290.7 C471.7,291.6 473.2,294.1 472.8,295.2Z" fill="#d0e4bc"/>
<path d="M770.5,279.0 C769.9,279.5 769.4,280.7 768.7,280.7 C768.0,280.8 767.1,280.0 766.3,279.5 C765.5,278.9 764.0,278.2 763.9,277.4 C763.8,276.6 764.7,275.3 765.6,274.7 C766.4,274.1 767.8,273.6 769.0,273.6 C770.2,273.6 772.2,274.0 772.8,274.7 C773.4,275.3 773.0,276.9 772.6,277.7 C772.2,278.4 771.2,278.5 770.5,279.0Z" fill="#d0e4bc"/>
<path d="M706.4,285.8 C706.3,284.9 704.9,283.2 705.4,282.5 C705.9,281.8 708.4,281.4 709.5,281.6 C710.6,281.9 711.7,283.2 712.1,284.0 C712.5,284.7 712.2,285.6 712.0,286.2 C711.7,286.8 711.3,287.1 710.8,287.6 C710.2,288.1 709.5,289.1 708.7,289.2 C707.9,289.3 706.3,288.7 705.9,288.1 C705.5,287.5 706.5,286.7 706.4,285.8Z" fill="#d0e4bc"/>
<path d="M518.0,318.0 C517.3,318.8 516.1,320.2 514.9,320.2 C513.7,320.2 511.2,318.9 510.7,318.0 C510.3,317.0 511.4,315.5 512.4,314.4 C513.3,313.4 515.3,311.5 516.4,311.6 C517.5,311.8 518.9,314.2 519.1,315.3 C519.4,316.4 518.7,317.2 518.0,318.0Z" fill="#d0e4bc"/>
<path d="M486.9,296.9 C486.8,295.8 489.1,293.6 490.5,293.2 C492.0,292.8 494.5,293.7 495.7,294.3 C496.9,294.8 496.5,295.8 497.6,296.7 C498.7,297.6 502.3,298.9 502.1,299.6 C502.0,300.3 498.2,299.9 496.6,300.8 C495.0,301.7 493.6,305.1 492.7,305.0 C491.8,304.9 492.1,301.3 491.2,300.0 C490.2,298.6 487.0,298.0 486.9,296.9Z" fill="#d0e4bc"/>
<path d="M670.9,322.5 C669.5,322.1 669.0,318.7 668.8,317.3 C668.7,316.0 669.1,314.9 669.9,314.2 C670.7,313.6 672.5,313.3 673.7,313.5 C674.9,313.7 676.3,314.4 676.9,315.4 C677.6,316.5 678.5,318.8 677.5,320.0 C676.5,321.2 672.4,323.0 670.9,322.5Z" fill="#d0e4bc"/>
<path d="M735.8,272.5 C736.5,272.2 737.9,271.2 738.5,271.4 C739.1,271.6 739.3,273.0 739.5,273.7 C739.8,274.4 740.3,275.2 740.0,275.6 C739.7,276.0 738.4,275.7 737.8,276.2 C737.1,276.8 736.9,278.5 736.2,278.7 C735.4,279.0 733.8,278.2 733.1,277.6 C732.5,277.0 732.3,275.9 732.4,275.2 C732.6,274.5 733.5,273.9 734.0,273.5 C734.6,273.0 735.0,272.9 735.8,272.5Z" fill="#d0e4bc"/>
<path d="M447.7,278.5 C446.4,277.9 443.4,277.0 443.0,275.9 C442.5,274.8 444.1,272.9 445.3,271.7 C446.4,270.5 448.5,268.7 450.1,268.7 C451.7,268.7 453.3,270.7 454.9,271.5 C456.6,272.4 459.5,272.7 460.0,273.8 C460.4,274.9 458.5,276.7 457.7,278.0 C457.0,279.4 456.7,281.9 455.5,282.1 C454.4,282.2 452.0,279.6 450.7,279.0 C449.4,278.4 449.0,279.0 447.7,278.5Z" fill="#d0e4bc"/>
<path d="M583.2,329.3 C581.6,329.1 579.2,327.6 578.5,326.3 C577.9,325.0 578.6,322.9 579.4,321.7 C580.2,320.4 582.0,318.7 583.4,318.7 C584.7,318.6 586.5,320.6 587.4,321.3 C588.3,322.0 588.5,322.2 589.0,322.9 C589.5,323.6 590.4,324.5 590.2,325.3 C590.1,326.1 589.2,327.1 588.0,327.7 C586.8,328.4 584.7,329.6 583.2,329.3Z" fill="#d0e4bc"/>
<path d="M717.3,280.8 C717.7,281.4 718.3,282.7 717.8,283.3 C717.3,283.9 715.1,284.4 714.3,284.1 C713.5,283.9 713.2,282.5 713.1,281.8 C712.9,281.2 712.9,280.4 713.3,280.0 C713.8,279.6 715.0,279.3 715.6,279.4 C716.3,279.6 716.9,280.1 717.3,280.8Z" fill="#d0e4bc"/>
<path d="M514.5,291.0 C514.4,291.7 513.8,292.8 513.0,293.3 C512.2,293.8 510.6,294.0 509.7,293.7 C508.8,293.5 508.2,292.5 507.8,291.7 C507.3,290.9 506.7,289.7 507.1,289.0 C507.5,288.3 509.2,287.6 510.3,287.5 C511.3,287.5 512.6,288.1 513.3,288.7 C514.0,289.3 514.5,290.2 514.5,291.0Z" fill="#d0e4bc"/>
<path d="M421.6,276.4 C421.2,275.7 422.7,274.3 422.9,273.4 C423.1,272.5 422.2,271.4 422.7,270.9 C423.1,270.5 424.6,270.7 425.7,270.7 C426.8,270.6 428.9,270.0 429.5,270.5 C430.1,271.0 429.1,272.5 429.1,273.5 C429.0,274.6 429.9,275.9 429.3,276.6 C428.7,277.3 426.7,277.8 425.4,277.8 C424.1,277.8 422.0,277.1 421.6,276.4Z" fill="#d0e4bc"/>
<path d="M760.7,265.1 C763.4,265.6 767.6,268.2 768.4,270.4 C769.1,272.7 767.4,277.2 765.3,278.5 C763.3,279.8 758.5,278.8 756.1,278.1 C753.8,277.3 751.9,275.8 751.2,274.0 C750.5,272.2 750.1,268.9 751.7,267.4 C753.3,265.9 757.9,264.6 760.7,265.1Z" fill="#d0e4bc"/>
<path d="M766.9,264.0 C766.7,262.8 765.5,260.5 766.4,259.9 C767.2,259.3 770.8,259.8 771.9,260.4 C773.0,261.1 773.1,262.8 773.1,263.9 C773.0,265.0 772.6,266.5 771.7,266.9 C770.7,267.4 768.3,267.2 767.5,266.7 C766.7,266.2 767.0,265.1 766.9,264.0Z" fill="#d0e4bc"/>
<path d="M503.6,324.3 C504.4,323.2 503.7,321.3 504.9,320.6 C506.1,319.8 509.4,319.2 510.8,319.8 C512.2,320.4 512.9,322.7 513.2,324.1 C513.5,325.5 513.4,326.9 512.7,328.0 C512.0,329.0 510.6,329.5 509.0,330.2 C507.4,330.8 504.8,332.3 503.3,331.9 C501.9,331.5 500.2,328.9 500.2,327.6 C500.3,326.4 502.8,325.5 503.6,324.3Z" fill="#d0e4bc"/>
<path d="M440.1,286.4 C441.5,285.9 443.3,286.0 444.6,286.5 C445.8,286.9 447.5,288.5 447.4,289.3 C447.3,290.0 445.1,290.7 444.1,291.1 C443.1,291.5 442.8,291.8 441.5,291.6 C440.2,291.4 436.5,290.8 436.3,289.9 C436.0,289.1 438.7,287.0 440.1,286.4Z" fill="#d0e4bc"/>
<path d="M436.7,287.3 C435.9,288.1 433.4,288.8 432.2,288.6 C431.0,288.4 430.5,286.7 429.6,286.1 C428.7,285.4 427.6,285.6 426.9,284.6 C426.2,283.7 424.9,281.5 425.5,280.6 C426.1,279.7 429.1,278.9 430.5,279.1 C431.8,279.3 432.4,281.1 433.5,281.9 C434.6,282.6 436.6,282.5 437.2,283.4 C437.7,284.3 437.5,286.4 436.7,287.3Z" fill="#d0e4bc"/>
<path d="M375.1,293.2 C375.4,292.3 377.4,291.7 378.5,291.1 C379.6,290.5 381.0,289.3 381.7,289.5 C382.4,289.8 382.1,291.8 382.9,292.5 C383.8,293.3 386.7,293.4 386.9,294.1 C387.1,294.8 385.1,296.1 384.1,296.5 C383.1,297.0 382.0,296.7 380.8,296.7 C379.6,296.6 377.9,297.1 376.9,296.5 C376.0,295.9 374.9,294.1 375.1,293.2Z" fill="#d0e4bc"/>
<path d="M769.6,273.1 C770.3,273.7 771.8,274.6 771.6,275.1 C771.5,275.6 769.3,275.9 768.6,275.9 C767.8,276.0 767.6,275.6 767.0,275.3 C766.5,275.0 765.4,274.6 765.4,274.0 C765.4,273.4 766.2,271.8 766.9,271.7 C767.6,271.6 768.8,272.5 769.6,273.1Z" fill="#d0e4bc"/>
<path d="M544.5,310.0 C543.4,310.1 541.9,310.8 541.5,310.5 C541.1,310.1 542.1,308.8 542.0,307.9 C541.8,307.1 540.1,306.0 540.4,305.3 C540.7,304.6 542.5,303.9 543.7,303.8 C544.9,303.7 547.1,303.8 547.6,304.4 C548.1,305.1 546.8,306.6 546.8,307.5 C546.9,308.5 548.4,309.8 548.0,310.2 C547.6,310.6 545.6,310.0 544.5,310.0Z" fill="#d0e4bc"/>
<path d="M735.4,279.1 C735.4,279.7 733.6,280.3 732.9,280.8 C732.2,281.4 731.8,282.2 731.1,282.3 C730.3,282.4 728.6,281.9 728.2,281.3 C727.8,280.8 728.7,279.9 728.9,279.1 C729.1,278.2 729.0,276.5 729.6,276.3 C730.3,276.0 731.9,276.9 732.9,277.4 C733.9,277.9 735.4,278.6 735.4,279.1Z" fill="#d0e4bc"/>
<path d="M587.5,297.0 C588.0,297.4 588.0,298.9 587.8,299.6 C587.5,300.2 586.5,300.8 585.8,300.9 C585.1,301.0 584.1,300.7 583.7,300.4 C583.3,300.0 583.2,299.3 583.4,298.8 C583.5,298.4 583.9,298.0 584.5,297.7 C585.2,297.4 587.0,296.7 587.5,297.0Z" fill="#d0e4bc"/>
<path d="M451.0,330.3 C450.3,330.0 449.5,329.8 449.3,329.4 C449.0,329.0 449.3,328.3 449.4,327.7 C449.5,327.2 449.5,326.6 450.0,326.2 C450.4,325.8 451.2,325.3 452.0,325.2 C452.8,325.0 454.3,324.9 454.8,325.3 C455.3,325.7 454.9,326.9 455.0,327.6 C455.2,328.3 456.0,329.1 455.8,329.7 C455.5,330.3 454.3,331.0 453.5,331.1 C452.7,331.2 451.7,330.6 451.0,330.3Z" fill="#d0e4bc"/>
<path d="M795.2,298.3 C795.6,296.9 796.1,295.5 797.2,294.6 C798.3,293.8 800.5,292.9 801.9,293.1 C803.3,293.2 804.5,294.6 805.6,295.4 C806.7,296.2 808.0,296.8 808.5,297.8 C808.9,298.8 808.9,300.6 808.2,301.3 C807.4,302.0 805.2,302.0 804.0,302.2 C802.9,302.4 802.5,302.4 801.0,302.5 C799.5,302.6 795.8,303.6 794.8,302.9 C793.8,302.2 794.8,299.7 795.2,298.3Z" fill="#d0e4bc"/>
<path d="M493.9,317.1 C493.6,315.6 495.7,312.8 497.2,312.0 C498.6,311.2 500.7,312.6 502.7,312.5 C504.8,312.3 508.4,310.6 509.5,311.3 C510.6,312.0 509.9,315.2 509.2,316.8 C508.6,318.3 507.4,319.8 505.7,320.6 C504.0,321.3 501.1,322.0 499.1,321.5 C497.2,320.9 494.3,318.7 493.9,317.1Z" fill="#d0e4bc"/>
<path d="M649.5,317.0 C649.9,316.7 651.2,316.8 651.9,316.9 C652.6,317.0 653.1,317.4 653.5,317.8 C653.8,318.3 654.4,319.1 654.2,319.5 C654.0,319.9 653.0,319.9 652.2,320.2 C651.5,320.4 650.2,321.2 649.9,321.0 C649.5,320.8 650.0,319.5 649.9,318.9 C649.8,318.2 649.2,317.4 649.5,317.0Z" fill="#d0e4bc"/>
<path d="M608.5,309.0 C608.8,309.8 607.0,311.1 606.5,311.9 C606.1,312.7 606.4,313.5 605.8,313.9 C605.1,314.3 603.5,314.6 602.6,314.3 C601.7,314.0 600.6,312.9 600.5,312.1 C600.3,311.3 601.0,310.5 601.7,309.7 C602.4,308.8 603.4,307.2 604.5,307.1 C605.7,307.0 608.2,308.2 608.5,309.0Z" fill="#d0e4bc"/>
<path d="M513.6,305.4 C512.4,306.4 511.9,308.4 510.6,308.8 C509.2,309.2 507.1,308.3 505.3,307.7 C503.6,307.0 500.1,305.9 500.2,304.9 C500.2,303.8 504.9,302.8 505.7,301.2 C506.5,299.7 504.2,296.2 505.0,295.8 C505.8,295.5 508.3,298.7 510.3,299.0 C512.3,299.4 515.6,297.2 516.8,297.8 C518.0,298.4 518.1,301.4 517.6,302.6 C517.1,303.9 514.8,304.4 513.6,305.4Z" fill="#d0e4bc"/>
<path d="M485.5,300.2 C484.7,301.2 484.0,301.0 483.2,302.2 C482.4,303.3 481.7,307.1 480.7,307.2 C479.7,307.3 478.3,303.8 477.3,302.7 C476.4,301.6 475.1,301.3 475.0,300.5 C474.9,299.8 476.0,298.9 476.5,298.0 C477.1,297.2 477.1,296.3 478.2,295.4 C479.3,294.5 481.5,292.7 483.1,292.8 C484.7,292.9 487.4,294.6 487.8,295.8 C488.2,297.1 486.3,299.1 485.5,300.2Z" fill="#d0e4bc"/>
<path d="M406.6,265.8 C405.1,266.6 404.7,266.9 403.2,267.1 C401.8,267.3 399.1,267.7 397.9,266.9 C396.8,266.1 396.2,263.8 396.5,262.2 C396.8,260.6 398.2,257.5 399.8,257.2 C401.4,256.8 403.8,259.0 405.9,259.9 C407.9,260.7 412.0,261.3 412.2,262.3 C412.3,263.3 408.1,265.0 406.6,265.8Z" fill="#d0e4bc"/>
<path d="M547.1,291.9 C546.9,291.0 545.6,289.9 546.0,289.2 C546.5,288.4 548.9,287.3 549.8,287.5 C550.7,287.7 550.7,289.7 551.4,290.6 C552.2,291.5 554.3,292.3 554.2,293.1 C554.0,293.9 552.0,295.2 550.8,295.4 C549.6,295.7 547.5,295.2 546.9,294.6 C546.3,294.0 547.2,292.8 547.1,291.9Z" fill="#d0e4bc"/>
<path d="M654.2,291.2 C656.2,291.4 660.2,292.9 660.4,293.9 C660.5,295.0 656.7,296.5 655.3,297.5 C653.9,298.5 652.7,300.2 651.9,300.1 C651.0,299.9 650.6,297.9 650.0,296.6 C649.3,295.4 647.5,293.3 648.2,292.4 C648.9,291.5 652.1,290.9 654.2,291.2Z" fill="#d0e4bc"/>
<path d="M658.3,299.4 C658.6,299.8 657.7,301.2 657.2,301.7 C656.7,302.3 656.1,302.6 655.3,302.7 C654.6,302.8 653.3,302.6 652.8,302.1 C652.2,301.5 651.5,299.8 651.9,299.3 C652.3,298.9 654.2,299.4 655.3,299.5 C656.3,299.5 658.0,299.1 658.3,299.4Z" fill="#d0e4bc"/>
<path d="M719.3,289.2 C721.1,288.9 723.2,287.3 724.6,287.7 C726.1,288.1 727.7,290.0 728.2,291.4 C728.7,292.8 728.7,294.9 727.9,296.0 C727.0,297.1 724.7,297.9 723.2,298.1 C721.7,298.4 720.3,297.7 719.1,297.3 C717.9,297.0 716.5,296.7 715.9,296.1 C715.3,295.4 715.8,294.5 715.4,293.3 C715.1,292.2 713.3,289.8 714.0,289.1 C714.6,288.4 717.6,289.4 719.3,289.2Z" fill="#d0e4bc"/>
<path d="M670.1,282.1 C671.7,282.7 673.7,282.8 674.5,283.7 C675.3,284.7 675.1,286.4 674.7,287.9 C674.4,289.4 674.0,291.9 672.5,292.7 C671.0,293.5 667.8,293.2 665.7,292.7 C663.6,292.2 660.6,290.9 660.0,289.6 C659.4,288.2 661.6,286.2 662.3,284.6 C663.1,283.0 663.3,280.6 664.6,280.2 C665.9,279.8 668.4,281.5 670.1,282.1Z" fill="#d0e4bc"/>
<path d="M383.2,291.8 C384.2,291.7 385.1,290.2 385.6,290.3 C386.1,290.4 385.9,291.9 386.2,292.5 C386.5,293.2 387.2,293.4 387.3,294.2 C387.5,294.9 387.7,296.5 387.1,297.0 C386.5,297.5 384.5,297.3 383.5,297.0 C382.6,296.8 382.1,296.2 381.2,295.7 C380.3,295.2 378.6,294.7 378.4,294.0 C378.1,293.2 378.7,291.5 379.5,291.2 C380.3,290.8 382.2,292.0 383.2,291.8Z" fill="#d0e4bc"/>
<path d="M377.9,296.3 C378.1,295.2 380.2,294.6 381.5,293.9 C382.8,293.3 384.7,292.2 385.6,292.5 C386.5,292.9 386.8,295.0 386.7,296.0 C386.7,297.0 386.4,298.0 385.3,298.7 C384.3,299.5 381.6,300.9 380.4,300.5 C379.1,300.1 377.7,297.4 377.9,296.3Z" fill="#d0e4bc"/>
<path d="M537.0,307.4 C536.7,306.1 539.3,304.6 540.3,303.1 C541.3,301.5 541.6,298.5 543.0,298.1 C544.4,297.8 547.6,299.8 548.7,300.9 C549.9,302.0 549.0,303.2 549.7,304.5 C550.4,305.8 553.3,307.9 552.8,308.7 C552.3,309.4 548.6,308.5 546.8,308.9 C545.0,309.2 543.4,311.1 541.8,310.9 C540.1,310.7 537.2,308.7 537.0,307.4Z" fill="#d0e4bc"/>
<path d="M600.8,316.7 C601.3,317.1 602.2,317.3 602.4,317.8 C602.6,318.2 602.3,319.1 601.9,319.4 C601.5,319.7 600.4,319.5 599.9,319.6 C599.3,319.6 599.3,319.7 598.6,319.7 C597.9,319.8 596.4,320.3 595.7,320.0 C595.1,319.6 594.6,318.3 594.9,317.7 C595.2,317.2 597.0,317.2 597.7,316.9 C598.4,316.5 598.6,315.5 599.2,315.5 C599.7,315.4 600.3,316.3 600.8,316.7Z" fill="#d0e4bc"/>
<path d="M761.2,267.1 C761.5,268.2 761.5,269.7 760.8,270.5 C760.1,271.2 758.3,271.7 757.0,271.8 C755.6,271.9 753.3,271.6 752.8,270.9 C752.2,270.3 753.2,268.5 753.7,267.7 C754.1,266.9 754.6,266.8 755.4,266.2 C756.3,265.6 758.0,263.8 758.9,264.0 C759.9,264.2 760.9,266.0 761.2,267.1Z" fill="#d0e4bc"/>
<path d="M452.2,326.0 C452.8,326.8 454.9,327.5 454.8,328.1 C454.8,328.8 453.0,329.4 452.0,330.0 C451.0,330.5 449.7,331.5 448.6,331.3 C447.6,331.2 446.4,329.9 445.9,329.1 C445.5,328.3 445.5,327.2 445.8,326.4 C446.2,325.7 447.0,325.1 447.9,324.6 C448.7,324.1 450.3,323.1 451.0,323.3 C451.7,323.6 451.5,325.2 452.2,326.0Z" fill="#d0e4bc"/>
<path d="M458.1,295.5 C459.1,296.8 461.7,298.6 461.3,299.7 C460.9,300.9 457.7,302.5 455.9,302.7 C454.1,302.9 451.5,302.1 450.4,301.2 C449.3,300.3 449.3,298.5 449.4,297.3 C449.5,296.2 450.2,295.4 451.2,294.5 C452.1,293.6 454.1,291.9 455.3,292.1 C456.4,292.2 457.1,294.2 458.1,295.5Z" fill="#d0e4bc"/>
<path d="M522.4,310.1 C521.3,310.6 518.6,308.8 516.5,308.5 C514.4,308.1 511.3,309.0 510.0,308.0 C508.7,307.0 507.8,303.5 508.7,302.4 C509.6,301.3 513.8,301.8 515.6,301.2 C517.3,300.6 517.7,298.9 519.4,298.7 C521.1,298.5 525.0,299.1 525.7,300.2 C526.3,301.3 523.9,303.5 523.4,305.2 C522.8,306.8 523.6,309.5 522.4,310.1Z" fill="#d0e4bc"/>
<path d="M355.8,278.2 C355.6,277.4 354.7,276.7 355.0,276.0 C355.2,275.3 356.3,274.3 357.2,274.1 C358.1,273.9 359.6,274.4 360.3,274.9 C361.0,275.4 361.1,276.1 361.5,276.9 C361.8,277.6 362.8,278.9 362.4,279.3 C362.0,279.7 360.1,279.1 359.1,279.3 C358.1,279.5 356.8,280.9 356.3,280.7 C355.7,280.6 356.0,279.0 355.8,278.2Z" fill="#d0e4bc"/>
<path d="M432.4,273.1 C433.5,273.0 435.1,273.5 435.8,274.1 C436.4,274.6 436.6,275.7 436.5,276.4 C436.3,277.0 435.7,277.4 435.1,277.9 C434.5,278.5 433.7,279.6 432.7,279.7 C431.8,279.7 430.0,279.0 429.4,278.2 C428.8,277.4 428.4,275.7 428.9,274.9 C429.4,274.0 431.3,273.2 432.4,273.1Z" fill="#d0e4bc"/>
<path d="M461.2,270.2 C461.2,271.4 460.1,273.3 459.1,273.6 C458.2,273.9 456.4,272.4 455.5,271.9 C454.7,271.4 454.4,271.2 454.2,270.5 C454.0,269.8 453.7,268.6 454.5,267.9 C455.3,267.2 458.0,265.9 459.1,266.3 C460.3,266.6 461.2,269.0 461.2,270.2Z" fill="#d0e4bc"/>
<path d="M490.3,307.2 C489.8,307.1 489.5,306.2 489.5,305.7 C489.5,305.3 490.2,305.0 490.5,304.6 C490.7,304.1 490.5,303.6 491.0,303.2 C491.4,302.8 492.5,302.2 493.2,302.3 C493.8,302.4 494.9,303.1 495.1,303.6 C495.2,304.1 494.3,304.9 494.0,305.4 C493.7,305.8 493.7,306.1 493.4,306.3 C493.1,306.5 492.8,306.4 492.2,306.5 C491.7,306.7 490.7,307.4 490.3,307.2Z" fill="#d0e4bc"/>
<path d="M612.9,322.2 C612.5,321.3 615.7,319.5 615.8,317.9 C615.9,316.3 612.8,314.0 613.4,312.6 C614.0,311.3 617.8,309.2 619.4,309.6 C621.0,310.0 621.3,314.0 622.9,315.2 C624.5,316.3 628.6,315.6 629.0,316.4 C629.5,317.3 626.6,319.3 625.4,320.2 C624.3,321.1 623.4,321.3 622.2,321.8 C621.0,322.3 620.0,323.1 618.4,323.2 C616.9,323.3 613.3,323.1 612.9,322.2Z" fill="#d0e4bc"/>
<path d="M635.2,310.9 C635.5,310.1 635.3,308.5 635.9,308.3 C636.5,308.1 638.1,309.3 638.8,309.7 C639.4,310.1 639.7,310.4 639.9,310.9 C640.2,311.3 640.3,311.8 640.1,312.2 C640.0,312.6 639.5,312.9 639.0,313.3 C638.4,313.6 637.6,314.4 636.8,314.4 C636.0,314.4 634.3,313.8 634.1,313.2 C633.8,312.6 634.9,311.7 635.2,310.9Z" fill="#d0e4bc"/>
<path d="M415.4,302.6 C415.1,302.0 416.8,300.6 417.3,299.9 C417.7,299.1 417.6,298.9 418.1,298.3 C418.6,297.7 419.3,296.3 420.1,296.1 C420.9,296.0 421.6,297.1 422.8,297.6 C423.9,298.1 426.7,298.4 426.9,299.1 C427.1,299.8 424.5,300.7 423.9,301.8 C423.2,302.9 423.7,305.3 422.8,305.5 C422.0,305.8 420.1,303.8 418.9,303.4 C417.7,302.9 415.6,303.2 415.4,302.6Z" fill="#d0e4bc"/>
<path d="M386.0,298.6 C385.7,297.4 383.0,296.1 383.2,295.2 C383.5,294.3 386.4,292.8 387.5,293.0 C388.7,293.3 388.8,295.9 390.1,296.6 C391.3,297.4 394.8,296.9 395.0,297.5 C395.2,298.0 392.3,299.4 391.3,299.9 C390.2,300.4 390.0,299.9 388.9,300.3 C387.8,300.7 385.2,302.7 384.8,302.4 C384.3,302.1 386.2,299.8 386.0,298.6Z" fill="#d0e4bc"/>
<path d="M436.1,284.4 C434.1,283.5 430.1,282.4 430.1,281.5 C430.2,280.6 434.3,279.9 436.3,279.0 C438.4,278.1 441.2,275.7 442.5,276.2 C443.8,276.7 444.5,280.1 444.3,281.9 C444.2,283.7 443.1,286.7 441.8,287.1 C440.4,287.6 438.0,285.3 436.1,284.4Z" fill="#d0e4bc"/>
<path d="M424.0,289.6 C425.9,289.4 428.4,290.9 429.4,292.0 C430.3,293.0 430.3,294.6 429.9,295.6 C429.6,296.7 429.0,297.7 427.2,298.4 C425.4,299.2 420.7,301.3 419.1,300.4 C417.6,299.5 417.0,295.0 417.8,293.2 C418.6,291.4 422.1,289.8 424.0,289.6Z" fill="#d0e4bc"/>
<path d="M417.7,310.7 C416.8,310.4 415.2,310.1 415.1,309.5 C415.0,308.9 416.1,307.4 416.9,307.1 C417.7,306.8 419.5,307.1 420.1,307.5 C420.7,307.9 420.5,308.8 420.6,309.5 C420.6,310.2 420.7,311.6 420.2,311.8 C419.7,312.0 418.5,311.1 417.7,310.7Z" fill="#d0e4bc"/>
<path d="M550.9,312.3 C550.8,312.8 551.0,313.4 550.7,313.7 C550.4,314.0 549.5,314.0 549.0,314.0 C548.5,313.9 548.3,313.6 547.7,313.5 C547.1,313.4 545.8,313.6 545.3,313.2 C544.8,312.7 544.2,311.4 544.5,311.0 C544.9,310.5 546.7,310.6 547.4,310.5 C548.2,310.4 548.5,310.4 549.1,310.4 C549.8,310.4 551.1,310.2 551.4,310.5 C551.7,310.8 551.0,311.8 550.9,312.3Z" fill="#d0e4bc"/>
<path d="M453.0,293.7 C452.6,294.3 451.9,294.7 451.1,295.0 C450.4,295.4 449.4,295.9 448.5,295.8 C447.6,295.7 446.7,295.3 445.8,294.6 C444.8,294.0 442.8,292.9 442.8,292.0 C442.9,291.1 444.8,290.3 445.8,289.4 C446.8,288.6 447.9,286.8 449.0,286.8 C450.1,286.8 451.6,288.6 452.3,289.4 C453.0,290.2 453.1,291.0 453.3,291.7 C453.4,292.4 453.3,293.1 453.0,293.7Z" fill="#d0e4bc"/>
<path d="M403.0,263.2 C404.2,262.6 408.5,262.2 409.2,262.9 C409.9,263.6 407.8,266.1 407.3,267.5 C406.9,268.9 407.6,270.9 406.5,271.4 C405.4,272.0 401.4,271.6 400.6,270.8 C399.8,270.0 401.3,267.9 401.7,266.6 C402.1,265.4 401.7,263.8 403.0,263.2Z" fill="#d0e4bc"/>
<path d="M614.3,319.5 C613.9,319.0 615.7,317.4 616.1,316.5 C616.5,315.6 616.2,314.6 616.8,314.2 C617.3,313.9 618.8,314.3 619.6,314.6 C620.4,314.8 620.7,315.2 621.4,315.7 C622.0,316.2 623.4,317.0 623.4,317.7 C623.4,318.3 622.1,319.3 621.3,319.6 C620.4,319.9 619.5,319.5 618.4,319.5 C617.2,319.5 614.7,320.0 614.3,319.5Z" fill="#d0e4bc"/>
<path d="M465.8,268.4 C467.1,268.0 468.3,267.9 469.5,268.3 C470.7,268.7 472.9,269.5 473.3,271.0 C473.7,272.5 473.6,276.2 471.8,277.2 C470.0,278.3 464.0,278.6 462.4,277.6 C460.8,276.5 461.4,272.3 462.0,270.8 C462.6,269.2 464.6,268.8 465.8,268.4Z" fill="#d0e4bc"/>
<path d="M440.4,303.9 C439.6,304.6 438.7,305.4 437.3,305.7 C436.0,305.9 433.1,306.2 432.2,305.5 C431.2,304.8 431.6,302.6 431.8,301.4 C432.0,300.2 432.4,298.6 433.3,298.1 C434.3,297.7 436.4,298.5 437.4,298.8 C438.4,299.1 438.6,299.4 439.3,299.9 C440.1,300.3 441.9,300.8 442.1,301.5 C442.2,302.1 441.2,303.2 440.4,303.9Z" fill="#d0e4bc"/>
<path d="M483.9,266.4 C485.1,266.9 485.0,268.0 486.2,268.8 C487.4,269.6 490.7,270.3 490.8,271.2 C491.0,272.0 488.4,273.4 487.2,274.1 C486.0,274.7 484.7,275.0 483.6,275.0 C482.4,275.1 481.4,274.6 480.4,274.2 C479.4,273.8 478.5,273.3 477.8,272.4 C477.2,271.5 476.1,270.2 476.4,269.1 C476.6,268.0 477.9,266.2 479.2,265.8 C480.4,265.4 482.7,265.9 483.9,266.4Z" fill="#d0e4bc"/>
<path d="M574.6,314.9 C575.2,315.4 575.4,316.5 575.2,317.1 C575.1,317.7 574.1,318.0 573.7,318.5 C573.3,318.9 573.4,319.6 572.9,319.9 C572.3,320.3 571.2,320.8 570.4,320.7 C569.5,320.6 568.3,320.1 567.7,319.5 C567.1,318.8 566.3,317.5 566.6,316.8 C566.9,316.2 568.8,315.9 569.6,315.5 C570.5,315.0 571.0,314.1 571.8,314.0 C572.7,313.9 574.1,314.4 574.6,314.9Z" fill="#d0e4bc"/>
<path d="M463.9,291.5 C463.3,291.2 462.8,290.4 462.8,289.7 C462.8,289.1 463.2,288.2 463.9,287.8 C464.7,287.4 466.4,287.1 467.2,287.4 C468.0,287.8 468.9,289.3 468.8,290.0 C468.6,290.7 467.0,291.1 466.2,291.4 C465.4,291.6 464.5,291.7 463.9,291.5Z" fill="#d0e4bc"/>
<path d="M714.4,288.1 C714.6,287.0 715.2,286.3 716.1,285.6 C716.9,284.9 718.1,284.0 719.4,284.0 C720.7,284.0 722.9,284.5 723.9,285.5 C724.8,286.4 725.6,288.6 725.1,289.8 C724.5,291.1 722.4,292.5 720.7,292.9 C719.0,293.3 716.0,293.1 715.0,292.3 C713.9,291.5 714.2,289.3 714.4,288.1Z" fill="#d0e4bc"/>
<path d="M550.6,291.2 C551.2,291.1 552.0,292.0 552.9,292.5 C553.9,292.9 556.2,293.4 556.3,294.0 C556.4,294.6 554.3,295.7 553.4,296.0 C552.6,296.3 551.7,296.0 551.0,295.8 C550.2,295.7 549.2,295.5 548.9,295.0 C548.6,294.6 549.0,293.8 549.3,293.2 C549.6,292.6 550.0,291.4 550.6,291.2Z" fill="#d0e4bc"/>
<path d="M711.0,301.5 C710.6,301.0 710.2,300.1 710.4,299.6 C710.7,299.2 712.0,299.0 712.7,298.9 C713.3,298.9 713.7,299.3 714.2,299.4 C714.8,299.6 715.9,299.5 716.2,299.9 C716.5,300.2 716.4,301.2 716.1,301.6 C715.8,301.9 714.8,301.8 714.2,302.0 C713.6,302.1 713.0,302.8 712.5,302.7 C712.0,302.7 711.3,302.1 711.0,301.5Z" fill="#d0e4bc"/>
<path d="M704.5,292.3 C703.2,292.7 700.1,292.3 699.0,291.5 C698.0,290.7 698.1,288.5 698.3,287.5 C698.5,286.4 699.4,286.0 700.3,285.1 C701.3,284.1 702.5,281.8 704.1,281.6 C705.6,281.5 709.3,283.1 709.8,284.3 C710.3,285.4 707.9,287.4 707.0,288.7 C706.1,290.1 705.8,291.8 704.5,292.3Z" fill="#d0e4bc"/>
<path d="M572.2,321.8 C572.0,323.3 570.7,326.2 568.8,326.8 C567.0,327.4 562.8,326.4 561.2,325.2 C559.7,324.0 558.9,320.7 559.6,319.4 C560.2,318.1 563.4,317.5 565.2,317.2 C566.9,316.9 568.8,316.9 570.0,317.7 C571.2,318.4 572.4,320.2 572.2,321.8Z" fill="#d0e4bc"/>
<path d="M496.1,297.1 C495.7,297.6 492.7,296.4 491.1,296.3 C489.5,296.2 487.0,296.9 486.5,296.4 C486.0,295.8 487.6,294.0 488.1,292.9 C488.6,291.9 488.6,290.5 489.5,290.1 C490.3,289.8 492.5,290.4 493.2,290.9 C493.9,291.5 493.3,292.3 493.8,293.3 C494.3,294.3 496.6,296.6 496.1,297.1Z" fill="#d0e4bc"/>
<path d="M475.7,322.2 C475.1,323.1 473.6,323.6 472.2,323.9 C470.8,324.2 468.4,324.7 467.3,323.9 C466.2,323.1 465.1,320.6 465.6,319.3 C466.1,318.0 468.7,316.0 470.3,315.8 C472.0,315.6 474.6,317.2 475.5,318.3 C476.4,319.3 476.2,321.2 475.7,322.2Z" fill="#d0e4bc"/>
<path d="M527.2,319.7 C528.2,319.8 529.6,319.9 530.2,320.4 C530.9,321.0 531.4,322.3 531.2,322.9 C530.9,323.6 529.4,323.8 528.7,324.3 C528.0,324.8 527.5,326.0 526.8,326.1 C526.0,326.2 524.6,325.3 524.3,324.7 C524.0,324.2 525.2,323.4 525.2,322.7 C525.2,321.9 523.8,320.7 524.2,320.2 C524.5,319.7 526.2,319.7 527.2,319.7Z" fill="#d0e4bc"/>
<path d="M527.4,295.8 C528.1,294.4 532.8,294.4 534.7,293.5 C536.6,292.7 537.1,290.9 538.6,290.8 C540.0,290.7 542.5,291.9 543.4,293.0 C544.4,294.0 544.1,295.5 544.2,297.1 C544.3,298.7 545.1,302.0 544.0,302.6 C542.9,303.2 539.6,301.0 537.3,300.8 C535.0,300.6 531.9,302.4 530.3,301.6 C528.6,300.8 526.7,297.1 527.4,295.8Z" fill="#d0e4bc"/>
<path d="M512.4,290.2 C510.9,290.3 507.0,291.6 506.3,291.0 C505.6,290.4 507.5,287.6 508.3,286.7 C509.1,285.7 510.1,285.8 511.2,285.1 C512.2,284.4 513.4,282.4 514.5,282.4 C515.7,282.4 517.5,284.0 518.1,285.0 C518.6,285.9 518.2,287.3 517.8,288.3 C517.4,289.3 516.6,290.4 515.7,290.7 C514.8,291.0 514.0,290.2 512.4,290.2Z" fill="#d0e4bc"/>
<path d="M742.6,289.7 C741.2,290.0 738.8,292.5 738.2,292.2 C737.6,292.0 738.9,289.3 738.9,288.2 C738.9,287.1 737.8,286.1 738.2,285.5 C738.6,284.9 740.4,284.6 741.4,284.5 C742.5,284.5 743.6,284.9 744.2,285.4 C744.9,285.8 744.9,286.5 745.3,287.3 C745.8,288.1 747.2,289.9 746.7,290.3 C746.3,290.7 744.0,289.4 742.6,289.7Z" fill="#d0e4bc"/>
<path d="M520.1,326.5 C520.7,326.1 522.2,326.0 522.9,326.3 C523.7,326.5 524.1,327.5 524.4,328.0 C524.7,328.6 524.7,328.9 524.9,329.6 C525.1,330.2 525.9,331.4 525.5,332.0 C525.1,332.7 523.5,333.4 522.6,333.4 C521.7,333.3 521.1,332.1 520.3,331.6 C519.4,331.1 517.6,331.1 517.5,330.5 C517.3,330.0 519.0,329.3 519.5,328.6 C519.9,327.9 519.6,326.9 520.1,326.5Z" fill="#d0e4bc"/>
<path d="M571.5,310.6 C570.6,310.6 568.5,311.0 568.0,310.5 C567.5,310.1 567.9,308.7 568.3,307.8 C568.6,307.0 569.3,306.0 570.1,305.6 C571.0,305.2 572.6,305.3 573.5,305.6 C574.4,306.0 575.1,306.8 575.5,307.5 C576.0,308.2 576.3,309.3 576.0,309.9 C575.6,310.4 574.1,310.7 573.4,310.8 C572.6,310.9 572.4,310.7 571.5,310.6Z" fill="#d0e4bc"/>
<path d="M575.8,302.4 C576.7,301.9 578.0,300.9 578.6,301.1 C579.1,301.3 578.7,302.7 578.9,303.7 C579.1,304.6 580.4,306.3 579.7,306.9 C579.1,307.5 576.1,307.8 574.9,307.3 C573.8,306.9 572.7,304.9 572.9,304.1 C573.0,303.3 574.8,302.9 575.8,302.4Z" fill="#d0e4bc"/>
<path d="M475.5,326.7 C475.2,327.6 473.3,328.2 472.1,328.7 C470.9,329.1 469.0,329.7 468.1,329.2 C467.2,328.8 466.5,326.9 466.7,326.0 C466.9,325.0 468.2,324.1 469.3,323.7 C470.4,323.2 472.4,322.8 473.5,323.3 C474.5,323.8 475.7,325.8 475.5,326.7Z" fill="#d0e4bc"/>
<path d="M400.2,277.9 C399.7,277.8 399.8,275.8 399.6,275.0 C399.4,274.3 399.1,274.2 399.0,273.4 C398.9,272.6 398.5,270.4 399.2,270.0 C399.9,269.6 401.9,270.4 403.2,270.8 C404.5,271.1 406.5,271.3 407.0,272.0 C407.4,272.8 406.5,274.6 405.8,275.2 C405.1,275.8 403.7,275.2 402.8,275.7 C401.8,276.1 400.8,278.0 400.2,277.9Z" fill="#d0e4bc"/>
<path d="M368.5,280.9 C368.9,280.5 371.1,281.7 372.2,281.6 C373.3,281.5 374.5,280.2 375.2,280.4 C375.9,280.6 376.0,281.9 376.4,282.7 C376.8,283.5 377.9,284.6 377.6,285.2 C377.3,285.8 375.5,286.4 374.6,286.5 C373.7,286.6 373.2,286.0 372.2,286.1 C371.1,286.1 368.6,287.2 368.2,286.8 C367.7,286.4 369.4,284.7 369.4,283.7 C369.5,282.8 368.0,281.3 368.5,280.9Z" fill="#d0e4bc"/>
<path d="M465.0,316.8 C464.2,317.8 463.0,319.4 461.9,319.5 C460.8,319.5 459.0,318.1 458.2,317.2 C457.5,316.4 457.4,315.3 457.6,314.4 C457.7,313.4 458.2,312.3 459.2,311.7 C460.2,311.1 462.0,310.7 463.3,311.0 C464.6,311.3 466.6,312.5 466.9,313.5 C467.2,314.4 465.9,315.8 465.0,316.8Z" fill="#d0e4bc"/>
<path d="M789.1,271.4 C789.9,272.2 790.1,273.6 790.1,274.8 C790.0,276.1 790.0,278.5 788.9,278.9 C787.8,279.4 785.4,277.6 783.6,277.6 C781.9,277.5 779.5,279.1 778.6,278.6 C777.7,278.1 778.6,276.0 778.2,274.6 C777.8,273.3 775.8,271.1 776.5,270.5 C777.2,269.9 780.9,270.9 782.4,270.9 C783.8,270.8 784.3,270.0 785.5,270.1 C786.6,270.2 788.4,270.6 789.1,271.4Z" fill="#d0e4bc"/>
<path d="M641.4,302.9 C640.1,302.5 638.0,300.9 637.9,299.9 C637.8,298.9 639.9,297.9 640.8,296.9 C641.7,296.0 642.7,294.1 643.5,294.1 C644.4,294.1 645.2,296.2 646.0,297.1 C646.8,298.0 648.4,298.5 648.3,299.4 C648.3,300.2 647.1,301.4 645.9,302.0 C644.8,302.6 642.8,303.2 641.4,302.9Z" fill="#d0e4bc"/>
<path d="M426.0,311.0 C426.6,311.1 427.5,311.3 428.0,311.8 C428.5,312.3 429.4,313.4 429.1,313.9 C428.8,314.3 426.9,314.3 426.1,314.5 C425.4,314.6 425.3,314.6 424.8,314.6 C424.2,314.6 423.4,314.9 423.0,314.7 C422.5,314.5 421.8,313.8 421.8,313.4 C421.9,313.0 422.8,312.5 423.2,312.2 C423.6,311.9 423.8,311.6 424.2,311.4 C424.7,311.2 425.4,310.9 426.0,311.0Z" fill="#d0e4bc"/>
<path d="M751.5,288.0 C752.1,288.0 753.0,289.5 753.8,290.1 C754.5,290.7 755.9,291.1 755.9,291.6 C755.8,292.1 754.4,292.5 753.7,293.0 C752.9,293.5 752.0,294.5 751.3,294.4 C750.5,294.3 749.4,293.1 749.3,292.5 C749.1,291.9 750.1,291.4 750.5,290.7 C750.8,290.0 751.0,288.1 751.5,288.0Z" fill="#d0e4bc"/>
<path d="M549.7,328.8 C550.0,327.3 550.5,324.3 551.7,323.9 C553.0,323.6 555.6,325.7 557.1,326.8 C558.6,328.0 561.1,329.9 560.7,330.9 C560.4,332.0 556.9,332.6 555.1,332.9 C553.2,333.3 550.4,333.9 549.5,333.2 C548.6,332.5 549.3,330.3 549.7,328.8Z" fill="#d0e4bc"/>
<path d="M653.0,289.9 C653.2,290.7 652.9,292.3 652.1,292.9 C651.3,293.4 649.6,293.4 648.2,293.1 C646.7,292.7 643.6,292.0 643.2,290.9 C642.9,289.7 644.5,286.6 645.8,286.1 C647.1,285.7 649.6,287.5 650.8,288.1 C652.0,288.7 652.8,289.1 653.0,289.9Z" fill="#d0e4bc"/>
<path d="M437.6,279.8 C436.6,279.5 436.6,279.1 435.9,278.3 C435.2,277.6 433.0,275.7 433.4,275.2 C433.7,274.7 436.8,275.1 438.0,275.4 C439.2,275.6 439.8,275.9 440.4,276.6 C441.1,277.4 442.6,279.5 442.1,280.0 C441.6,280.5 438.6,280.1 437.6,279.8Z" fill="#d0e4bc"/>
<path d="M537.3,322.4 C535.6,322.0 531.6,321.0 531.1,319.5 C530.7,318.0 532.6,314.6 534.8,313.3 C537.0,312.1 542.6,311.2 544.2,312.2 C545.8,313.1 544.9,317.6 544.4,319.2 C544.0,320.9 542.6,321.5 541.4,322.0 C540.2,322.5 539.0,322.8 537.3,322.4Z" fill="#d0e4bc"/>
<path d="M701.9,298.6 C700.4,299.0 698.3,299.4 696.6,298.9 C695.0,298.4 692.6,297.2 691.9,295.8 C691.2,294.5 691.5,292.2 692.3,290.8 C693.1,289.4 694.9,288.0 696.6,287.4 C698.2,286.8 700.5,286.7 702.2,287.1 C703.9,287.4 705.3,288.4 706.5,289.5 C707.8,290.5 710.1,292.2 709.8,293.4 C709.6,294.5 706.4,295.4 705.1,296.3 C703.8,297.2 703.3,298.2 701.9,298.6Z" fill="#d0e4bc"/>
<path d="M727.9,278.6 C727.9,278.0 728.6,277.5 729.1,277.0 C729.6,276.5 730.0,275.8 730.7,275.7 C731.5,275.5 733.4,275.7 733.7,276.1 C734.0,276.6 732.8,277.7 732.5,278.3 C732.2,278.9 732.4,279.4 731.9,279.8 C731.4,280.2 729.9,281.0 729.2,280.8 C728.5,280.6 727.9,279.3 727.9,278.6Z" fill="#d0e4bc"/>
<path d="M643.5,303.3 C644.8,303.7 644.9,306.4 645.5,307.8 C646.1,309.2 647.2,310.1 647.2,311.6 C647.2,313.0 646.6,315.9 645.3,316.3 C644.0,316.6 641.0,314.1 639.4,313.7 C637.7,313.2 636.0,314.1 635.4,313.6 C634.9,313.0 636.1,311.3 636.1,310.3 C636.0,309.3 634.8,308.4 635.1,307.5 C635.5,306.7 636.7,306.1 638.1,305.3 C639.5,304.6 642.3,302.9 643.5,303.3Z" fill="#d0e4bc"/>
<path d="M686.5,304.0 C685.6,304.5 683.9,304.1 682.7,303.8 C681.4,303.5 679.1,303.1 678.9,302.4 C678.7,301.7 680.4,300.4 681.4,299.8 C682.3,299.1 683.4,298.4 684.6,298.5 C685.7,298.7 687.8,299.7 688.2,300.6 C688.5,301.5 687.4,303.5 686.5,304.0Z" fill="#d0e4bc"/>
<path d="M534.0,302.5 C533.1,303.3 530.9,303.9 529.6,303.7 C528.4,303.5 526.6,302.0 526.4,301.2 C526.2,300.3 527.5,299.5 528.5,298.5 C529.4,297.5 531.0,294.9 532.0,295.0 C533.0,295.1 534.3,297.8 534.6,299.1 C534.9,300.4 534.8,301.8 534.0,302.5Z" fill="#d0e4bc"/>
<path d="M432.9,302.3 C432.4,301.3 433.5,299.4 434.0,298.4 C434.6,297.4 435.3,296.9 436.0,296.4 C436.7,296.0 437.4,296.0 438.4,295.7 C439.4,295.4 440.6,294.4 442.0,294.5 C443.4,294.6 446.7,295.5 446.9,296.4 C447.0,297.3 443.9,298.8 443.1,299.8 C442.2,300.8 442.7,301.8 441.7,302.6 C440.8,303.4 438.9,304.6 437.4,304.5 C435.9,304.5 433.5,303.3 432.9,302.3Z" fill="#d0e4bc"/>
<path d="M477.2,276.2 C476.0,276.9 475.2,279.2 474.4,279.1 C473.6,279.0 472.9,276.4 472.5,275.5 C472.1,274.7 472.0,274.4 472.0,273.9 C471.9,273.3 472.0,273.0 472.2,272.2 C472.4,271.4 472.3,269.7 473.2,269.2 C474.0,268.7 475.9,268.9 477.2,269.2 C478.5,269.5 480.0,270.3 480.7,271.2 C481.5,272.2 482.4,274.1 481.8,274.9 C481.2,275.8 478.5,275.5 477.2,276.2Z" fill="#d0e4bc"/>
<path d="M549.2,321.4 C548.5,320.9 547.8,319.3 548.1,318.6 C548.5,317.8 550.5,316.8 551.4,316.8 C552.4,316.8 553.3,318.0 553.9,318.8 C554.6,319.5 555.6,320.9 555.3,321.3 C554.9,321.8 552.9,321.5 551.9,321.5 C550.8,321.5 549.8,321.8 549.2,321.4Z" fill="#d0e4bc"/>
<path d="M605.9,306.0 C606.5,306.4 606.8,306.9 606.9,307.3 C607.0,307.8 606.9,308.1 606.8,308.7 C606.6,309.3 606.5,310.8 606.1,310.8 C605.6,310.9 604.9,309.5 604.1,309.1 C603.3,308.8 601.6,309.2 601.4,308.9 C601.3,308.6 602.8,308.0 603.2,307.3 C603.5,306.6 603.0,305.0 603.4,304.8 C603.9,304.6 605.4,305.6 605.9,306.0Z" fill="#d0e4bc"/>
<path d="M530.2,310.0 C529.6,308.9 531.4,306.8 532.6,305.1 C533.9,303.5 535.4,300.3 537.5,300.1 C539.6,299.9 544.2,302.3 545.2,304.1 C546.3,306.0 545.1,309.8 543.6,311.0 C542.1,312.3 538.7,312.0 536.5,311.9 C534.2,311.7 530.8,311.1 530.2,310.0Z" fill="#d0e4bc"/>
<path d="M605.3,306.6 C606.6,307.1 607.4,308.9 607.5,309.9 C607.6,310.9 606.8,311.7 605.9,312.5 C605.0,313.2 603.3,314.7 602.1,314.5 C600.9,314.3 599.1,312.6 598.7,311.4 C598.2,310.1 598.5,307.6 599.6,306.8 C600.7,306.0 604.0,306.1 605.3,306.6Z" fill="#d0e4bc"/>
<path d="M514.3,289.8 C514.9,289.0 518.0,289.3 519.7,289.1 C521.4,289.0 523.2,288.4 524.5,288.9 C525.7,289.4 526.7,290.8 527.5,292.3 C528.2,293.8 529.9,296.4 529.1,297.9 C528.2,299.3 524.8,300.5 522.5,300.8 C520.3,301.0 516.7,300.5 515.6,299.4 C514.5,298.2 516.4,295.6 516.1,294.0 C515.9,292.4 513.7,290.7 514.3,289.8Z" fill="#d0e4bc"/>
<path d="M463.5,316.9 C462.7,316.1 460.9,315.1 461.1,314.4 C461.3,313.7 463.3,313.3 464.5,312.9 C465.8,312.4 467.8,311.1 468.6,311.5 C469.3,311.8 468.8,313.9 469.0,315.0 C469.2,316.1 470.3,317.4 469.7,318.1 C469.2,318.7 466.8,319.3 465.8,319.1 C464.7,318.9 464.3,317.7 463.5,316.9Z" fill="#d0e4bc"/>
<path d="M536.9,333.6 C535.9,332.9 535.9,331.4 535.7,330.0 C535.4,328.7 534.7,326.7 535.5,325.5 C536.4,324.3 538.9,323.1 540.7,322.9 C542.6,322.7 545.2,323.4 546.6,324.3 C547.9,325.2 548.1,327.0 548.6,328.3 C549.1,329.7 550.1,331.2 549.6,332.3 C549.2,333.5 547.3,335.0 545.9,335.4 C544.5,335.7 542.8,334.5 541.2,334.2 C539.7,333.9 537.8,334.3 536.9,333.6Z" fill="#d0e4bc"/>
<path d="M562.6,321.6 C563.8,321.3 566.5,322.2 567.5,323.1 C568.5,324.0 569.2,326.2 568.7,327.0 C568.2,327.8 565.9,327.8 564.5,328.1 C563.1,328.3 561.0,328.9 560.3,328.4 C559.6,327.8 559.9,326.0 560.3,324.9 C560.7,323.8 561.5,321.9 562.6,321.6Z" fill="#d0e4bc"/>
<path d="M496.2,284.9 C497.1,285.4 496.6,288.4 496.4,289.7 C496.2,291.0 495.9,291.6 494.9,292.6 C494.0,293.6 492.1,295.7 490.9,295.6 C489.7,295.5 488.4,293.2 487.7,292.0 C487.0,290.8 486.2,289.2 486.6,288.4 C487.1,287.5 489.0,287.4 490.6,286.8 C492.2,286.3 495.2,284.4 496.2,284.9Z" fill="#d0e4bc"/>
<path d="M420.6,316.0 C420.6,316.6 420.0,317.1 419.6,317.5 C419.2,317.9 419.0,318.2 418.2,318.6 C417.5,319.0 415.8,320.1 414.9,319.9 C413.9,319.7 412.5,318.1 412.6,317.3 C412.7,316.5 414.7,315.9 415.5,315.3 C416.2,314.7 416.4,313.9 417.1,313.7 C417.8,313.5 419.1,313.8 419.7,314.2 C420.3,314.6 420.7,315.5 420.6,316.0Z" fill="#d0e4bc"/>
<path d="M624.1,300.1 C622.7,300.4 618.8,300.7 618.2,299.9 C617.6,299.2 619.4,296.9 620.3,295.5 C621.3,294.2 622.3,291.8 623.8,291.6 C625.3,291.5 629.0,293.3 629.4,294.4 C629.9,295.6 627.5,297.3 626.6,298.3 C625.7,299.2 625.5,299.8 624.1,300.1Z" fill="#d0e4bc"/>
<path d="M677.0,300.6 C677.9,301.8 678.0,303.8 677.5,304.9 C676.9,305.9 675.0,306.8 673.8,307.1 C672.6,307.4 672.0,307.0 670.1,306.7 C668.2,306.5 663.2,306.6 662.4,305.4 C661.6,304.2 663.7,300.8 665.3,299.5 C666.9,298.2 670.0,297.4 672.0,297.6 C673.9,297.8 676.1,299.4 677.0,300.6Z" fill="#d0e4bc"/>
<path d="M500.1,294.0 C500.5,293.2 500.4,291.5 501.1,291.3 C501.7,291.0 503.5,292.2 504.1,292.7 C504.8,293.2 504.7,293.8 504.9,294.3 C505.2,294.9 505.7,295.3 505.6,295.9 C505.5,296.6 505.2,297.7 504.4,298.1 C503.6,298.6 501.7,298.9 500.8,298.6 C500.0,298.3 499.2,296.9 499.1,296.1 C499.0,295.4 499.8,294.8 500.1,294.0Z" fill="#d0e4bc"/>
<path d="M715.7,293.6 C716.0,294.2 714.5,295.9 713.9,296.6 C713.3,297.3 712.9,297.4 712.1,298.0 C711.3,298.7 710.0,300.5 708.9,300.5 C707.9,300.5 706.3,299.1 705.6,298.1 C704.9,297.1 704.4,295.3 705.0,294.6 C705.5,293.8 707.8,293.6 708.9,293.4 C710.0,293.1 710.5,293.1 711.6,293.1 C712.7,293.2 715.3,293.0 715.7,293.6Z" fill="#d0e4bc"/>
<path d="M499.3,315.3 C500.1,314.3 502.8,311.5 503.8,311.8 C504.8,312.0 505.1,315.5 505.0,316.7 C505.0,317.9 504.5,318.4 503.7,319.1 C502.9,319.8 501.0,321.2 500.2,321.0 C499.4,320.7 499.1,318.7 499.0,317.8 C498.8,316.8 498.5,316.3 499.3,315.3Z" fill="#d0e4bc"/>
<path d="M571.5,297.2 C570.6,297.3 569.8,296.6 568.6,296.2 C567.4,295.8 565.0,295.7 564.4,294.9 C563.9,294.1 564.7,292.6 565.2,291.3 C565.6,290.1 566.0,287.9 567.2,287.4 C568.5,286.8 571.3,287.4 572.5,288.0 C573.7,288.7 573.0,290.3 574.4,291.3 C575.8,292.2 581.1,293.1 581.0,293.8 C580.9,294.5 575.4,294.9 573.8,295.5 C572.3,296.1 572.4,297.1 571.5,297.2Z" fill="#d0e4bc"/>
<path d="M751.4,295.5 C752.5,296.0 754.0,297.4 753.9,298.2 C753.8,299.0 751.6,299.6 750.9,300.4 C750.2,301.1 750.4,302.5 749.7,302.7 C748.9,303.0 747.6,302.3 746.6,301.9 C745.5,301.5 743.2,301.0 743.1,300.3 C743.0,299.7 745.3,298.9 746.0,298.0 C746.7,297.1 746.4,295.6 747.3,295.1 C748.2,294.7 750.3,295.0 751.4,295.5Z" fill="#d0e4bc"/>
<path d="M517.2,299.4 C517.3,298.2 518.2,296.5 519.1,296.2 C520.1,295.9 521.4,297.1 522.8,297.6 C524.1,298.1 527.0,298.5 527.1,299.3 C527.3,300.1 525.2,301.8 523.8,302.5 C522.4,303.2 519.8,303.9 518.7,303.4 C517.6,302.9 517.1,300.6 517.2,299.4Z" fill="#d0e4bc"/>
<path d="M741.0,282.1 C742.4,281.3 743.3,279.0 744.6,278.9 C745.9,278.8 747.8,280.2 748.9,281.3 C750.0,282.3 751.4,284.0 751.1,285.0 C750.7,286.0 747.8,286.5 746.6,287.3 C745.5,288.1 745.4,289.7 744.4,289.9 C743.5,290.1 741.8,289.2 740.9,288.6 C740.0,288.0 739.8,287.3 739.1,286.4 C738.4,285.5 736.4,284.0 736.7,283.3 C737.0,282.5 739.7,282.8 741.0,282.1Z" fill="#d0e4bc"/>
<path d="M601.1,325.0 C600.2,324.6 601.3,320.4 600.9,319.0 C600.5,317.6 599.0,317.6 598.6,316.5 C598.3,315.3 597.9,312.5 598.9,312.0 C599.9,311.4 602.6,313.3 604.5,313.2 C606.4,313.2 608.8,311.2 610.3,311.7 C611.7,312.1 612.9,314.4 613.3,315.9 C613.7,317.5 613.8,320.0 612.7,320.9 C611.6,321.8 608.5,320.8 606.6,321.5 C604.6,322.2 602.1,325.5 601.1,325.0Z" fill="#d0e4bc"/>
<path d="M775.4,271.2 C776.2,271.4 776.8,272.5 777.3,273.3 C777.8,274.1 778.5,275.4 778.1,276.2 C777.8,276.9 776.2,277.6 775.2,277.9 C774.2,278.2 772.8,278.3 772.0,277.9 C771.3,277.5 771.6,276.4 770.9,275.8 C770.2,275.2 768.2,275.1 767.9,274.4 C767.6,273.8 768.3,272.2 769.1,271.9 C769.8,271.5 771.5,272.7 772.5,272.6 C773.5,272.5 774.6,271.1 775.4,271.2Z" fill="#d0e4bc"/>
<path d="M553.2,325.5 C555.1,326.0 557.8,326.0 558.9,327.3 C559.9,328.6 560.4,331.6 559.4,333.3 C558.4,335.0 554.5,337.9 552.7,337.7 C550.9,337.4 549.8,333.1 548.6,331.7 C547.5,330.2 545.9,330.1 545.7,328.9 C545.5,327.6 546.3,325.0 547.6,324.4 C548.8,323.8 551.3,325.0 553.2,325.5Z" fill="#d0e4bc"/>
<path d="M789.2,268.9 C790.7,269.7 792.8,271.0 793.0,272.2 C793.3,273.3 791.4,275.2 790.5,276.0 C789.5,276.9 788.2,276.7 787.1,277.2 C786.0,277.8 785.6,278.8 784.0,279.2 C782.4,279.5 778.7,280.1 777.7,279.3 C776.7,278.5 777.2,275.5 778.0,274.3 C778.7,273.2 781.2,273.6 782.1,272.4 C783.1,271.2 782.4,267.7 783.6,267.1 C784.8,266.5 787.6,268.0 789.2,268.9Z" fill="#d0e4bc"/>
<path d="M749.6,290.9 C750.4,291.2 749.4,294.0 750.3,295.4 C751.1,296.7 754.6,297.7 754.7,298.8 C754.8,300.0 752.2,302.0 750.7,302.3 C749.2,302.7 746.8,301.3 745.6,300.7 C744.4,300.1 745.0,299.4 743.6,298.8 C742.3,298.3 738.2,298.5 737.5,297.5 C736.7,296.5 737.9,293.7 739.2,293.1 C740.5,292.5 743.3,294.2 745.0,293.9 C746.7,293.5 748.7,290.7 749.6,290.9Z" fill="#d0e4bc"/>
<path d="M804.8,292.8 C802.9,292.3 800.9,290.3 800.2,288.6 C799.5,287.0 799.3,283.9 800.5,282.7 C801.7,281.4 805.6,280.9 807.5,281.1 C809.4,281.4 811.0,283.0 811.9,284.1 C812.8,285.2 813.1,286.3 813.0,287.6 C812.9,288.9 812.6,291.0 811.2,291.9 C809.9,292.7 806.6,293.3 804.8,292.8Z" fill="#d0e4bc"/>
<path d="M764.4,284.2 C762.9,284.3 761.8,283.1 760.7,282.3 C759.6,281.6 758.0,280.8 758.0,279.5 C758.0,278.3 758.9,275.4 760.7,274.7 C762.5,274.0 767.2,274.2 768.7,275.4 C770.2,276.6 770.6,280.2 769.9,281.7 C769.2,283.1 766.0,284.1 764.4,284.2Z" fill="#d0e4bc"/>
<path d="M720.2,307.3 C719.3,306.6 720.3,303.9 720.7,302.8 C721.2,301.8 721.7,301.6 722.8,301.0 C723.9,300.4 726.8,298.8 727.5,299.2 C728.2,299.6 727.1,302.0 726.9,303.3 C726.8,304.6 727.4,306.5 726.3,307.1 C725.2,307.8 721.1,308.0 720.2,307.3Z" fill="#d0e4bc"/>
<path d="M381.6,278.6 C382.8,278.0 382.9,276.6 383.8,276.5 C384.6,276.4 385.6,277.5 386.7,278.0 C387.8,278.5 390.0,278.7 390.4,279.4 C390.9,280.2 390.0,281.8 389.3,282.7 C388.6,283.5 387.4,284.0 386.4,284.4 C385.3,284.9 383.8,285.4 382.7,285.1 C381.7,284.9 381.0,283.9 380.0,283.1 C378.9,282.3 376.1,280.9 376.4,280.2 C376.6,279.4 380.3,279.2 381.6,278.6Z" fill="#d0e4bc"/>
<path d="M756.8,264.4 C758.0,264.5 758.9,264.3 759.6,264.7 C760.3,265.1 760.4,265.9 760.7,266.9 C761.1,267.8 762.3,269.7 761.8,270.4 C761.2,271.1 758.7,271.4 757.4,271.3 C756.1,271.2 754.8,270.5 754.0,269.9 C753.3,269.2 753.2,268.4 752.9,267.3 C752.6,266.3 751.4,264.2 752.1,263.7 C752.7,263.2 755.5,264.2 756.8,264.4Z" fill="#d0e4bc"/>
<path d="M786.3,299.5 C785.5,299.4 785.1,298.7 784.2,298.2 C783.4,297.7 781.7,297.6 781.1,296.8 C780.5,295.9 780.0,293.8 780.8,293.3 C781.5,292.7 784.1,293.5 785.4,293.4 C786.7,293.2 787.1,292.4 788.4,292.4 C789.8,292.4 793.0,292.4 793.6,293.2 C794.1,294.0 792.4,296.1 791.7,297.1 C791.1,298.1 790.4,298.8 789.5,299.2 C788.6,299.6 787.2,299.7 786.3,299.5Z" fill="#d0e4bc"/>
<path d="M641.6,323.8 C639.8,322.9 639.2,321.1 638.7,319.7 C638.1,318.3 637.6,316.4 638.4,315.2 C639.3,314.1 641.4,313.1 643.6,312.7 C645.7,312.2 649.7,311.6 651.5,312.7 C653.2,313.8 654.5,317.3 654.1,319.4 C653.8,321.5 651.5,324.5 649.4,325.3 C647.3,326.0 643.4,324.7 641.6,323.8Z" fill="#d0e4bc"/>
<path d="M726.8,291.8 C725.6,290.2 720.9,288.4 721.2,287.1 C721.4,285.8 725.9,284.3 728.2,284.0 C730.6,283.8 733.5,284.3 735.1,285.4 C736.7,286.4 738.5,289.1 738.1,290.4 C737.7,291.6 734.4,292.0 732.8,293.0 C731.2,294.0 729.5,296.6 728.5,296.4 C727.5,296.2 728.1,293.3 726.8,291.8Z" fill="#d0e4bc"/>
<path d="M807.0,283.8 C807.4,283.0 808.8,281.9 809.8,281.7 C810.9,281.5 812.5,282.2 813.2,282.7 C814.0,283.2 814.3,284.2 814.4,284.8 C814.4,285.4 813.8,286.0 813.4,286.4 C813.0,286.8 812.6,286.9 812.0,287.2 C811.4,287.5 810.4,288.3 809.7,288.2 C809.0,288.0 808.1,287.2 807.7,286.5 C807.3,285.8 806.7,284.6 807.0,283.8Z" fill="#d0e4bc"/>
<path d="M539.7,292.9 C538.4,292.8 537.1,292.1 535.9,291.2 C534.7,290.4 532.4,288.7 532.6,287.8 C532.9,286.9 536.1,286.3 537.5,285.9 C538.9,285.6 539.5,285.4 541.0,285.6 C542.4,285.8 545.5,286.2 546.0,287.1 C546.5,288.1 545.1,290.3 544.1,291.3 C543.0,292.2 541.1,292.9 539.7,292.9Z" fill="#d0e4bc"/>
<path d="M580.4,317.9 C578.4,316.9 575.6,313.3 576.1,311.7 C576.5,310.2 580.7,309.5 583.0,308.6 C585.3,307.8 588.6,306.0 590.0,306.7 C591.4,307.4 591.8,310.9 591.5,312.7 C591.2,314.4 590.0,316.4 588.2,317.3 C586.3,318.1 582.4,318.8 580.4,317.9Z" fill="#d0e4bc"/>
<path d="M665.8,293.8 C664.7,293.0 663.2,292.4 662.9,291.3 C662.5,290.3 662.8,288.1 663.7,287.4 C664.7,286.7 667.1,287.0 668.5,287.2 C669.8,287.3 670.6,287.7 671.7,288.2 C672.8,288.8 674.1,289.2 674.9,290.5 C675.7,291.8 677.2,295.0 676.3,295.9 C675.4,296.8 671.2,296.5 669.4,296.1 C667.7,295.8 666.9,294.6 665.8,293.8Z" fill="#d0e4bc"/>
<path d="M688.7,294.1 C686.8,294.9 684.4,297.8 683.0,297.5 C681.5,297.2 680.8,294.2 680.0,292.5 C679.2,290.8 677.5,288.7 678.2,287.5 C678.9,286.3 682.1,286.2 684.1,285.4 C686.1,284.7 688.6,282.6 690.3,283.0 C692.0,283.3 693.5,286.0 694.2,287.6 C695.0,289.3 695.6,291.7 694.7,292.8 C693.8,293.9 690.7,293.3 688.7,294.1Z" fill="#d0e4bc"/>
<path d="M527.9,302.1 C528.6,301.8 530.1,301.4 530.7,301.6 C531.3,301.9 531.2,303.2 531.5,303.9 C531.8,304.5 532.5,304.9 532.4,305.4 C532.3,305.8 531.5,306.1 530.8,306.6 C530.1,307.0 528.7,308.5 528.2,308.3 C527.7,308.1 528.2,306.1 527.9,305.4 C527.6,304.7 526.4,304.5 526.4,303.9 C526.4,303.4 527.1,302.5 527.9,302.1Z" fill="#d0e4bc"/>
<path d="M681.5,288.4 C680.7,288.2 680.3,286.7 679.9,285.8 C679.4,285.0 678.4,283.7 678.8,283.0 C679.2,282.4 681.1,281.9 682.3,281.8 C683.5,281.6 685.2,281.5 686.2,282.1 C687.2,282.7 688.5,284.4 688.3,285.3 C688.0,286.1 685.8,286.6 684.7,287.1 C683.6,287.6 682.3,288.6 681.5,288.4Z" fill="#d0e4bc"/>
<path d="M704.8,286.1 C704.7,285.2 703.4,283.6 703.8,283.3 C704.2,282.9 706.2,283.6 707.3,283.8 C708.3,284.1 709.7,284.1 709.9,284.6 C710.1,285.0 709.0,285.9 708.6,286.5 C708.2,287.1 708.3,287.7 707.6,288.1 C707.0,288.4 704.9,289.0 704.5,288.7 C704.0,288.4 704.9,287.0 704.8,286.1Z" fill="#d0e4bc"/>
<path d="M703.1,314.1 C702.2,313.9 702.0,312.6 701.1,311.6 C700.3,310.6 697.9,309.2 698.2,308.1 C698.4,307.0 701.1,305.0 702.6,304.9 C704.0,304.8 706.2,306.7 706.9,307.6 C707.6,308.5 706.9,309.5 706.8,310.4 C706.8,311.2 707.2,312.2 706.6,312.8 C706.0,313.4 704.0,314.3 703.1,314.1Z" fill="#d0e4bc"/>
<path d="M775.0,275.0 C775.9,275.0 777.1,273.8 777.5,274.0 C777.9,274.1 777.4,275.6 777.4,276.2 C777.3,276.7 777.3,276.9 777.1,277.3 C777.0,277.7 776.8,278.2 776.4,278.5 C775.9,278.8 775.0,279.4 774.5,279.3 C773.9,279.2 773.8,278.4 773.2,277.9 C772.6,277.4 771.0,277.1 770.8,276.5 C770.5,275.8 771.1,274.4 771.9,274.1 C772.6,273.9 774.1,275.0 775.0,275.0Z" fill="#d0e4bc"/>
<path d="M477.9,325.9 C475.9,325.9 472.3,324.9 471.8,323.8 C471.3,322.6 474.4,320.2 474.9,318.9 C475.4,317.6 474.1,316.7 474.7,316.0 C475.2,315.3 477.2,314.8 478.3,314.9 C479.5,315.0 480.4,315.9 481.4,316.6 C482.3,317.3 483.5,317.9 483.9,319.1 C484.3,320.3 484.9,322.7 483.9,323.9 C482.9,325.0 479.9,325.9 477.9,325.9Z" fill="#d0e4bc"/>
<path d="M765.8,280.8 C766.6,280.3 768.2,279.7 769.1,279.9 C770.0,280.2 771.1,281.5 771.2,282.2 C771.2,282.9 770.1,283.3 769.3,284.0 C768.5,284.8 767.0,286.7 766.2,286.5 C765.3,286.4 764.3,284.2 764.3,283.2 C764.2,282.3 765.0,281.4 765.8,280.8Z" fill="#d0e4bc"/>
<path d="M511.9,307.6 C510.1,307.0 508.2,302.8 508.5,300.9 C508.8,299.0 511.9,296.9 513.9,296.2 C515.9,295.5 519.2,296.0 520.7,296.9 C522.2,297.8 523.0,300.3 522.7,301.6 C522.4,302.9 520.8,303.5 519.0,304.5 C517.2,305.5 513.6,308.2 511.9,307.6Z" fill="#d0e4bc"/>
<path d="M595.0,326.8 C594.2,326.4 591.9,326.3 591.7,325.8 C591.6,325.3 593.4,324.6 594.1,323.9 C594.7,323.3 594.8,322.3 595.5,322.0 C596.3,321.7 597.9,321.9 598.5,322.3 C599.1,322.7 598.7,323.9 599.0,324.5 C599.3,325.2 600.4,325.7 600.3,326.1 C600.2,326.6 598.9,326.7 598.3,327.1 C597.6,327.5 597.0,328.4 596.5,328.4 C595.9,328.3 595.7,327.3 595.0,326.8Z" fill="#d0e4bc"/>
<path d="M568.4,300.6 C568.4,299.4 569.2,297.0 570.6,296.4 C571.9,295.9 574.8,296.4 576.5,297.3 C578.2,298.1 580.9,300.3 580.7,301.6 C580.6,303.0 577.3,305.0 575.6,305.4 C573.9,305.7 571.8,304.6 570.6,303.8 C569.4,303.0 568.4,301.8 568.4,300.6Z" fill="#d0e4bc"/>
<path d="M573.5,322.0 C573.2,322.8 572.8,323.7 572.2,323.9 C571.5,324.2 570.5,323.8 569.6,323.7 C568.8,323.7 567.9,323.9 567.1,323.5 C566.3,323.0 564.8,321.9 564.8,321.2 C564.8,320.4 566.4,319.4 567.4,319.0 C568.3,318.6 569.3,318.9 570.4,318.9 C571.5,318.9 573.5,318.6 574.1,319.1 C574.6,319.7 573.8,321.2 573.5,322.0Z" fill="#d0e4bc"/>
<path d="M454.7,322.7 C454.3,323.5 451.7,324.4 450.5,324.2 C449.4,324.1 448.5,322.8 447.7,321.9 C446.8,321.1 445.3,320.1 445.5,319.3 C445.6,318.6 447.4,317.8 448.6,317.3 C449.8,316.8 451.8,315.9 452.5,316.3 C453.2,316.6 452.4,318.5 452.7,319.6 C453.1,320.7 455.1,321.9 454.7,322.7Z" fill="#d0e4bc"/>
<path d="M783.0,295.7 C781.5,296.0 778.7,296.6 777.4,295.9 C776.1,295.2 774.6,292.7 775.0,291.6 C775.4,290.4 778.7,289.6 780.0,288.9 C781.3,288.3 781.7,287.8 782.7,287.6 C783.7,287.4 784.9,287.5 785.9,287.8 C787.0,288.1 788.2,288.6 788.9,289.5 C789.7,290.3 791.0,292.1 790.6,292.9 C790.1,293.7 787.5,293.9 786.3,294.4 C785.0,294.8 784.5,295.5 783.0,295.7Z" fill="#d0e4bc"/>
<path d="M656.6,300.3 C657.7,298.8 659.4,294.6 660.9,294.6 C662.4,294.5 664.8,298.3 665.6,300.2 C666.3,302.1 666.7,304.4 665.5,305.9 C664.3,307.4 660.1,309.6 658.3,309.2 C656.5,308.9 654.8,305.3 654.5,303.8 C654.3,302.3 655.6,301.9 656.6,300.3Z" fill="#d0e4bc"/>
<path d="M654.6,309.0 C654.1,308.5 654.6,307.4 654.5,306.7 C654.4,306.0 653.9,305.2 654.2,304.8 C654.5,304.3 655.5,304.2 656.4,303.9 C657.2,303.5 658.4,302.6 659.1,302.8 C659.7,303.0 660.0,304.4 660.3,305.0 C660.6,305.7 660.9,306.2 660.9,306.8 C660.9,307.5 660.8,308.4 660.2,308.9 C659.6,309.4 658.4,309.8 657.4,309.8 C656.5,309.8 655.1,309.5 654.6,309.0Z" fill="#d0e4bc"/>
<path d="M709.7,296.1 C708.5,295.6 708.5,295.6 707.0,295.0 C705.5,294.4 700.8,293.6 700.6,292.7 C700.4,291.8 704.2,290.1 705.8,289.6 C707.3,289.0 708.1,289.8 709.7,289.3 C711.2,288.7 713.9,286.0 715.1,286.2 C716.4,286.5 717.3,289.4 717.3,290.7 C717.2,292.0 715.6,292.9 715.1,294.1 C714.5,295.2 714.9,297.3 714.0,297.6 C713.1,298.0 710.9,296.5 709.7,296.1Z" fill="#d0e4bc"/>
<path d="M412.1,270.9 C411.3,271.3 410.5,270.6 409.4,270.7 C408.3,270.7 405.8,271.7 405.2,271.3 C404.7,270.8 405.7,269.1 406.1,268.1 C406.6,267.1 407.0,265.5 407.9,265.2 C408.9,264.9 410.9,265.4 412.0,266.0 C413.0,266.6 414.1,267.8 414.1,268.6 C414.1,269.4 412.9,270.6 412.1,270.9Z" fill="#d0e4bc"/>
<path d="M706.1,289.5 C705.0,290.3 701.8,290.1 700.2,289.6 C698.5,289.2 696.3,288.0 696.0,287.0 C695.7,286.0 697.6,284.9 698.3,283.7 C699.0,282.5 699.1,280.0 700.1,279.8 C701.1,279.5 703.2,281.2 704.4,282.1 C705.5,282.9 706.5,283.7 706.8,284.9 C707.1,286.2 707.2,288.7 706.1,289.5Z" fill="#d0e4bc"/>
<path d="M701.6,285.1 C702.4,285.9 702.5,288.2 701.9,289.3 C701.3,290.4 699.4,291.5 697.9,291.7 C696.5,292.0 694.7,291.4 693.4,290.8 C692.1,290.1 690.1,288.8 690.0,287.7 C689.9,286.5 691.6,284.6 692.7,284.1 C693.9,283.6 695.5,284.6 697.0,284.7 C698.5,284.9 700.8,284.4 701.6,285.1Z" fill="#d0e4bc"/>
<path d="M542.0,293.7 C542.2,293.0 542.2,292.2 542.8,291.7 C543.4,291.3 544.5,291.0 545.6,291.0 C546.6,290.9 548.6,290.8 549.2,291.4 C549.9,292.0 549.9,293.6 549.6,294.4 C549.4,295.3 548.4,296.2 547.6,296.5 C546.8,296.8 545.9,296.4 544.8,296.4 C543.8,296.4 541.9,296.8 541.5,296.4 C541.0,296.0 541.8,294.5 542.0,293.7Z" fill="#d0e4bc"/>
<path d="M428.2,272.1 C427.3,272.6 426.7,273.6 425.9,273.5 C425.1,273.4 423.7,272.1 423.6,271.4 C423.5,270.7 424.5,269.5 425.4,269.0 C426.3,268.5 427.9,268.1 428.8,268.4 C429.8,268.6 431.1,270.2 431.0,270.8 C430.9,271.5 429.0,271.7 428.2,272.1Z" fill="#d0e4bc"/>
<path d="M452.6,313.7 C452.6,312.8 452.4,312.8 452.3,311.9 C452.3,311.1 451.7,309.2 452.4,308.5 C453.1,307.9 455.5,307.7 456.6,308.0 C457.7,308.4 458.3,309.9 458.8,310.7 C459.3,311.5 459.4,312.0 459.7,312.9 C460.0,313.8 460.9,315.3 460.4,316.1 C459.8,316.8 457.9,317.2 456.6,317.4 C455.2,317.6 453.1,317.7 452.5,317.1 C451.8,316.5 452.7,314.6 452.6,313.7Z" fill="#d0e4bc"/>
<path d="M690.4,298.6 C689.8,299.4 687.1,300.0 685.8,299.9 C684.4,299.8 683.7,298.9 682.4,298.0 C681.1,297.2 677.9,295.9 677.9,294.7 C677.9,293.6 680.9,291.4 682.4,291.1 C683.9,290.9 685.7,292.6 686.9,293.2 C688.1,293.9 688.9,294.0 689.5,294.9 C690.1,295.8 691.0,297.8 690.4,298.6Z" fill="#d0e4bc"/>
<path d="M501.8,302.7 C502.2,302.0 504.1,301.5 505.2,301.5 C506.2,301.5 507.1,302.2 508.2,302.6 C509.3,303.0 511.3,303.2 511.7,303.9 C512.2,304.6 511.6,306.4 510.8,307.0 C510.1,307.5 508.2,306.8 507.3,307.3 C506.3,307.8 505.5,310.1 505.0,310.0 C504.5,309.9 504.6,307.5 504.3,306.7 C503.9,306.0 503.2,306.2 502.8,305.5 C502.4,304.9 501.4,303.3 501.8,302.7Z" fill="#d0e4bc"/>
<path d="M781.0,276.4 C780.8,275.1 781.3,274.5 782.2,273.4 C783.1,272.3 785.0,269.8 786.3,269.9 C787.6,270.0 789.8,272.8 790.0,274.0 C790.2,275.1 788.6,275.9 787.6,277.1 C786.5,278.3 784.7,281.2 783.6,281.1 C782.5,281.0 781.2,277.7 781.0,276.4Z" fill="#d0e4bc"/>
<path d="M471.5,328.1 C472.5,328.3 473.6,328.4 474.4,329.0 C475.2,329.5 476.0,330.3 476.4,331.4 C476.8,332.6 477.8,335.2 477.0,335.8 C476.1,336.3 472.7,334.8 471.3,334.6 C469.9,334.3 469.2,334.6 468.5,334.3 C467.7,333.9 467.3,333.0 467.0,332.3 C466.7,331.6 466.4,330.8 466.6,330.0 C466.8,329.3 467.5,328.1 468.3,327.8 C469.1,327.4 470.5,327.9 471.5,328.1Z" fill="#d0e4bc"/>
<path d="M533.8,319.4 C534.0,320.0 534.5,321.1 534.1,321.5 C533.7,321.9 532.4,321.3 531.5,321.8 C530.5,322.2 529.3,324.2 528.4,324.2 C527.4,324.2 526.2,322.5 526.0,321.6 C525.9,320.8 527.4,320.2 527.6,319.2 C527.7,318.2 526.3,316.1 526.8,315.6 C527.4,315.2 529.9,316.3 530.9,316.6 C531.9,317.0 532.5,317.3 533.0,317.8 C533.5,318.2 533.6,318.8 533.8,319.4Z" fill="#d0e4bc"/>
<path d="M590.1,307.1 C590.2,307.5 588.6,308.1 588.0,308.7 C587.4,309.2 587.2,310.2 586.4,310.4 C585.7,310.6 583.9,310.3 583.5,309.9 C583.1,309.4 583.9,308.4 583.8,307.6 C583.6,306.8 582.1,305.3 582.4,305.0 C582.8,304.7 585.0,305.6 585.8,305.8 C586.7,306.0 586.6,305.9 587.3,306.1 C588.0,306.3 590.0,306.6 590.1,307.1Z" fill="#d0e4bc"/>
<path d="M487.7,294.9 C489.1,295.4 490.3,297.1 490.7,298.3 C491.2,299.6 491.3,301.7 490.4,302.3 C489.6,303.0 487.0,302.0 485.5,302.4 C484.0,302.8 482.5,305.0 481.4,304.9 C480.3,304.7 479.3,302.6 478.9,301.4 C478.4,300.2 478.1,298.6 478.8,297.6 C479.4,296.6 481.1,295.9 482.6,295.4 C484.1,294.9 486.4,294.4 487.7,294.9Z" fill="#d0e4bc"/>
<path d="M753.9,272.2 C752.8,272.6 751.3,272.7 749.9,272.5 C748.5,272.3 746.1,271.8 745.5,271.0 C744.9,270.1 746.2,268.5 746.5,267.2 C746.7,265.9 746.0,263.8 746.9,263.3 C747.8,262.8 750.1,264.3 751.8,264.2 C753.6,264.1 756.0,262.3 757.2,262.7 C758.4,263.2 759.1,265.7 759.0,266.9 C758.8,268.1 757.3,269.1 756.4,270.0 C755.6,270.9 755.0,271.8 753.9,272.2Z" fill="#d0e4bc"/>
<path d="M603.9,319.8 C602.8,319.4 603.0,318.5 601.7,317.6 C600.3,316.7 595.6,315.1 595.8,314.4 C596.1,313.7 601.2,314.2 602.9,313.5 C604.7,312.8 605.2,310.4 606.3,310.4 C607.4,310.4 609.0,312.5 609.5,313.5 C610.0,314.5 609.5,315.6 609.3,316.6 C609.1,317.7 609.1,319.4 608.2,319.9 C607.3,320.4 605.0,320.2 603.9,319.8Z" fill="#d0e4bc"/>
<path d="M784.4,284.1 C783.7,284.2 782.4,282.9 781.7,282.4 C781.1,282.0 780.6,282.0 780.3,281.6 C780.1,281.2 779.9,280.7 780.0,280.1 C780.1,279.6 780.4,278.6 781.0,278.3 C781.6,278.0 782.8,278.1 783.6,278.3 C784.4,278.5 785.2,279.0 785.7,279.6 C786.1,280.2 786.5,281.2 786.3,281.9 C786.1,282.7 785.2,284.1 784.4,284.1Z" fill="#d0e4bc"/>
<path d="M767.5,297.8 C767.4,298.3 766.6,298.7 765.9,298.9 C765.2,299.2 764.1,299.8 763.4,299.5 C762.7,299.3 761.5,297.8 761.7,297.3 C761.9,296.7 763.7,296.5 764.5,296.3 C765.3,296.1 766.0,295.9 766.5,296.2 C767.0,296.4 767.6,297.3 767.5,297.8Z" fill="#d0e4bc"/>
<path d="M717.3,294.6 C716.7,294.4 716.4,294.1 716.1,293.7 C715.7,293.2 715.2,292.4 715.4,292.0 C715.7,291.7 716.8,291.6 717.5,291.4 C718.1,291.2 718.8,290.8 719.5,290.9 C720.1,291.0 721.2,291.5 721.5,292.1 C721.8,292.6 721.8,293.7 721.4,294.2 C721.0,294.8 719.9,295.3 719.2,295.3 C718.6,295.4 717.8,294.9 717.3,294.6Z" fill="#d0e4bc"/>
<path d="M500.7,327.2 C502.6,327.0 507.1,328.5 508.0,330.0 C508.9,331.5 507.5,335.3 506.1,336.4 C504.7,337.5 501.4,336.8 499.6,336.5 C497.8,336.2 495.7,335.6 495.1,334.7 C494.6,333.8 495.6,332.2 496.5,330.9 C497.4,329.7 498.7,327.4 500.7,327.2Z" fill="#d0e4bc"/>
<path d="M760.8,289.1 C760.2,290.0 757.3,291.3 755.7,291.2 C754.0,291.1 751.6,289.7 750.9,288.4 C750.2,287.1 750.3,284.3 751.2,283.5 C752.2,282.7 755.4,283.1 756.7,283.4 C758.0,283.8 758.5,284.5 759.1,285.5 C759.8,286.4 761.3,288.1 760.8,289.1Z" fill="#d0e4bc"/>
<path d="M515.5,288.9 C515.3,288.4 516.6,287.6 517.1,287.1 C517.6,286.6 517.9,286.3 518.5,286.1 C519.1,285.8 519.8,285.5 520.5,285.5 C521.3,285.5 522.4,285.7 523.0,286.2 C523.6,286.7 524.4,287.9 524.1,288.5 C523.9,289.0 522.3,289.3 521.6,289.7 C520.9,290.2 520.6,291.2 519.9,291.2 C519.3,291.3 518.6,290.4 517.9,290.1 C517.1,289.7 515.6,289.4 515.5,288.9Z" fill="#d0e4bc"/>
<path d="M468.2,324.7 C469.0,323.7 472.2,323.0 473.8,323.2 C475.5,323.3 477.5,324.8 478.1,325.8 C478.7,326.8 477.1,327.8 477.4,329.3 C477.8,330.8 480.8,333.9 480.1,334.6 C479.5,335.3 475.7,333.5 473.6,333.5 C471.4,333.4 467.8,335.1 467.0,334.4 C466.3,333.7 468.8,330.8 469.0,329.2 C469.2,327.6 467.4,325.7 468.2,324.7Z" fill="#d0e4bc"/>
<path d="M402.7,276.1 C403.8,275.3 406.0,275.3 407.7,275.3 C409.5,275.2 412.6,274.9 413.2,275.8 C413.7,276.7 411.5,279.4 411.1,280.5 C410.6,281.6 410.8,281.6 410.5,282.3 C410.1,282.9 410.1,283.6 409.2,284.4 C408.3,285.1 405.8,286.9 405.0,286.6 C404.2,286.3 404.7,283.6 404.1,282.5 C403.6,281.4 401.8,281.1 401.6,280.0 C401.3,279.0 401.7,276.9 402.7,276.1Z" fill="#d0e4bc"/>
<path d="M702.9,292.4 C702.7,293.2 700.0,293.9 698.9,294.4 C697.8,294.9 697.3,295.4 696.2,295.5 C695.1,295.7 693.5,295.7 692.5,295.1 C691.4,294.6 690.1,293.3 690.0,292.1 C689.8,290.9 690.4,288.5 691.5,288.2 C692.6,287.8 695.0,289.8 696.4,290.0 C697.8,290.2 698.6,289.3 699.7,289.7 C700.8,290.1 703.0,291.6 702.9,292.4Z" fill="#d0e4bc"/>
<path d="M406.0,309.0 C406.3,309.8 408.3,310.6 408.2,311.2 C408.1,311.7 406.2,312.3 405.3,312.4 C404.4,312.4 403.6,311.9 402.8,311.6 C401.9,311.2 400.3,310.7 400.2,310.2 C400.2,309.7 402.0,309.0 402.5,308.5 C403.1,308.0 403.1,307.6 403.7,307.3 C404.3,307.0 405.9,306.4 406.3,306.7 C406.7,307.0 405.7,308.3 406.0,309.0Z" fill="#d0e4bc"/>
<path d="M736.7,291.4 C735.6,292.5 735.5,292.5 734.5,293.4 C733.6,294.3 732.3,296.7 731.1,296.8 C729.9,296.9 728.2,294.9 727.4,293.8 C726.6,292.8 726.3,291.8 726.1,290.6 C725.9,289.5 725.4,287.6 726.2,286.9 C727.0,286.3 729.1,287.5 730.9,286.8 C732.7,286.1 735.0,282.7 736.7,282.8 C738.4,282.8 741.2,285.7 741.2,287.1 C741.2,288.6 737.8,290.4 736.7,291.4Z" fill="#d0e4bc"/>
<path d="M602.1,296.2 C601.8,295.2 602.1,293.2 603.0,292.7 C603.8,292.2 606.1,293.2 607.3,293.4 C608.5,293.5 609.4,293.1 610.0,293.4 C610.7,293.8 611.2,294.8 611.3,295.5 C611.5,296.3 611.3,297.2 610.8,297.9 C610.2,298.6 609.0,299.6 608.0,299.7 C607.0,299.8 605.8,299.0 604.8,298.4 C603.8,297.8 602.4,297.1 602.1,296.2Z" fill="#d0e4bc"/>
<path d="M446.0,280.5 C445.8,281.0 444.9,281.1 444.3,281.5 C443.8,282.0 443.1,283.2 442.5,283.2 C441.8,283.2 441.2,282.2 440.6,281.6 C439.9,281.0 438.7,280.3 438.7,279.6 C438.7,278.9 439.8,278.0 440.7,277.6 C441.5,277.1 442.8,276.7 443.6,276.9 C444.4,277.1 445.1,278.1 445.5,278.7 C445.9,279.3 446.2,280.0 446.0,280.5Z" fill="#d0e4bc"/>
<path d="M678.2,299.2 C677.3,298.2 673.8,297.6 673.8,296.9 C673.8,296.2 677.0,295.7 678.3,295.1 C679.6,294.6 680.5,293.4 681.6,293.4 C682.7,293.5 684.4,294.7 684.7,295.5 C685.0,296.3 683.5,297.1 683.4,298.2 C683.3,299.2 684.8,300.8 684.2,301.7 C683.5,302.5 680.6,303.7 679.6,303.3 C678.6,302.9 679.2,300.3 678.2,299.2Z" fill="#d0e4bc"/>
<path d="M750.6,282.9 C749.1,282.3 746.7,280.7 746.7,279.7 C746.7,278.7 749.3,277.5 750.8,276.9 C752.2,276.2 754.1,275.3 755.5,275.7 C756.9,276.1 759.1,278.1 759.2,279.4 C759.3,280.7 757.5,283.1 756.0,283.7 C754.6,284.2 752.2,283.6 750.6,282.9Z" fill="#d0e4bc"/>
<path d="M504.6,323.4 C502.5,324.0 499.3,322.7 497.2,321.8 C495.0,321.0 491.7,319.4 491.7,318.2 C491.7,317.0 495.7,315.8 497.1,314.6 C498.5,313.4 498.5,311.3 500.1,311.0 C501.7,310.6 504.9,311.2 506.5,312.4 C508.1,313.6 510.1,316.3 509.8,318.1 C509.5,320.0 506.7,322.8 504.6,323.4Z" fill="#d0e4bc"/>
<path d="M779.0,268.8 C779.6,268.0 782.1,267.9 783.1,267.7 C784.2,267.6 784.3,268.2 785.3,267.9 C786.4,267.7 788.9,265.9 789.5,266.2 C790.0,266.4 788.7,268.6 788.6,269.5 C788.6,270.5 789.6,271.4 789.2,271.9 C788.8,272.5 787.3,272.6 786.4,272.8 C785.4,273.1 784.5,273.5 783.4,273.4 C782.3,273.3 780.4,273.0 779.6,272.2 C778.9,271.4 778.4,269.5 779.0,268.8Z" fill="#d0e4bc"/>
<path d="M467.8,324.7 C467.6,325.0 467.0,325.1 466.6,325.3 C466.3,325.4 466.0,325.6 465.7,325.6 C465.4,325.6 465.2,325.5 464.7,325.4 C464.2,325.2 463.2,325.2 462.9,324.8 C462.7,324.5 463.0,323.7 463.3,323.3 C463.6,323.0 464.2,322.7 464.7,322.5 C465.3,322.3 466.1,322.1 466.6,322.2 C467.1,322.4 467.4,323.1 467.6,323.5 C467.8,323.9 467.9,324.4 467.8,324.7Z" fill="#d0e4bc"/>
<path d="M747.1,294.8 C747.4,295.6 746.7,296.4 746.3,297.1 C745.9,297.9 745.5,298.7 744.5,299.1 C743.5,299.5 741.2,300.1 740.3,299.6 C739.4,299.1 739.0,297.2 739.1,296.2 C739.2,295.2 739.9,294.1 740.9,293.5 C741.8,292.8 743.6,292.0 744.7,292.3 C745.7,292.5 746.8,293.9 747.1,294.8Z" fill="#d0e4bc"/>
<path d="M545.8,308.5 C545.0,309.8 540.7,309.9 538.2,310.1 C535.7,310.4 531.7,310.8 530.9,309.8 C530.0,308.8 532.9,306.1 533.2,304.2 C533.4,302.3 531.2,299.7 532.3,298.6 C533.4,297.5 538.2,296.9 539.9,297.6 C541.6,298.3 541.7,301.0 542.7,302.8 C543.6,304.6 546.5,307.3 545.8,308.5Z" fill="#d0e4bc"/>
<path d="M539.4,326.4 C539.3,327.5 540.4,329.1 539.9,329.4 C539.3,329.8 537.2,328.7 536.3,328.4 C535.3,328.1 534.7,328.0 534.1,327.4 C533.4,326.7 531.9,325.3 532.2,324.5 C532.5,323.6 534.4,322.3 535.8,322.1 C537.1,321.8 539.8,322.2 540.4,322.9 C541.0,323.7 539.5,325.3 539.4,326.4Z" fill="#d0e4bc"/>
<path d="M532.9,467.9 C533.6,467.5 534.9,467.3 535.6,467.5 C536.2,467.7 536.6,468.5 536.8,469.2 C537.1,470.0 537.6,471.6 537.1,471.9 C536.6,472.3 534.8,471.6 533.8,471.3 C532.9,470.9 531.4,470.6 531.3,470.0 C531.1,469.4 532.2,468.3 532.9,467.9Z" fill="#d5e7c3"/>
<path d="M412.8,391.1 C414.3,390.7 416.0,389.5 417.0,389.9 C418.0,390.4 419.2,392.7 418.9,393.6 C418.6,394.5 416.5,395.1 415.3,395.4 C414.2,395.8 413.3,396.1 412.0,395.7 C410.8,395.3 407.8,393.7 407.9,392.9 C408.1,392.2 411.3,391.6 412.8,391.1Z" fill="#d5e7c3"/>
<path d="M407.6,457.3 C406.5,457.2 404.9,457.9 403.8,457.5 C402.8,457.0 401.0,455.3 401.3,454.5 C401.7,453.7 404.7,453.5 405.8,452.9 C406.9,452.4 406.9,451.6 407.8,451.3 C408.7,451.0 410.2,450.8 411.4,451.2 C412.5,451.5 414.6,452.5 414.6,453.4 C414.7,454.2 412.5,455.2 411.8,456.1 C411.1,456.9 411.2,458.1 410.5,458.3 C409.8,458.5 408.7,457.4 407.6,457.3Z" fill="#d5e7c3"/>
<path d="M593.5,455.8 C592.9,454.8 591.7,453.1 592.3,452.4 C592.9,451.7 595.7,451.8 596.9,451.5 C598.1,451.2 598.2,450.8 599.4,450.5 C600.7,450.3 603.9,449.4 604.3,450.0 C604.8,450.5 602.3,452.9 601.9,453.9 C601.5,454.9 602.5,455.4 602.2,456.0 C601.9,456.7 601.0,457.5 600.0,457.9 C599.0,458.3 597.1,458.8 596.0,458.5 C594.9,458.2 594.1,456.9 593.5,455.8Z" fill="#d5e7c3"/>
<path d="M541.3,466.0 C540.3,465.2 540.2,462.1 541.0,461.0 C541.9,460.0 544.1,460.0 546.2,459.7 C548.3,459.4 552.3,458.1 553.7,459.1 C555.0,460.1 555.3,464.8 554.2,465.9 C553.1,467.1 549.0,466.2 546.9,466.2 C544.7,466.2 542.3,466.9 541.3,466.0Z" fill="#d5e7c3"/>
<path d="M628.6,465.7 C628.2,467.4 627.2,470.1 625.1,470.8 C623.0,471.6 617.3,471.3 616.2,470.2 C615.0,469.0 617.5,465.8 618.2,463.7 C618.8,461.6 618.5,457.9 620.0,457.4 C621.5,456.9 625.9,459.3 627.3,460.7 C628.7,462.1 629.0,464.0 628.6,465.7Z" fill="#d5e7c3"/>
<path d="M495.3,473.3 C494.6,474.5 493.9,478.0 492.6,478.4 C491.3,478.8 488.6,477.0 487.2,475.9 C485.9,474.8 484.7,473.1 484.7,471.8 C484.8,470.6 486.6,469.2 487.6,468.3 C488.7,467.5 489.5,467.4 490.9,466.5 C492.4,465.7 495.0,463.0 496.4,463.2 C497.8,463.5 499.2,466.5 499.3,467.9 C499.3,469.3 497.3,470.5 496.6,471.4 C496.0,472.3 496.0,472.2 495.3,473.3Z" fill="#d5e7c3"/>
<path d="M468.4,387.6 C468.7,388.2 467.2,389.2 466.7,389.8 C466.3,390.5 466.1,391.4 465.6,391.4 C465.1,391.5 464.4,390.7 463.8,390.2 C463.3,389.6 462.0,388.8 462.2,388.1 C462.3,387.5 464.0,386.4 465.0,386.3 C466.0,386.2 468.1,387.0 468.4,387.6Z" fill="#d5e7c3"/>
<path d="M587.7,447.8 C587.2,447.3 587.5,445.5 588.0,444.7 C588.4,443.8 589.3,443.0 590.4,442.8 C591.5,442.5 593.9,442.6 594.5,443.2 C595.0,443.8 594.2,445.6 593.7,446.3 C593.2,447.0 592.4,447.2 591.4,447.4 C590.4,447.6 588.3,448.2 587.7,447.8Z" fill="#d5e7c3"/>
<path d="M571.2,467.3 C571.6,468.6 570.9,471.1 569.6,472.2 C568.3,473.3 564.6,474.5 563.3,474.0 C561.9,473.5 562.4,470.5 561.5,469.1 C560.6,467.8 557.8,466.6 558.1,465.9 C558.3,465.1 561.6,464.9 563.1,464.7 C564.6,464.5 565.5,464.3 566.9,464.8 C568.2,465.2 570.7,466.1 571.2,467.3Z" fill="#d5e7c3"/>
<path d="M464.2,468.6 C464.7,468.2 465.7,467.4 466.2,467.6 C466.7,467.7 466.9,469.0 467.2,469.5 C467.5,470.0 468.0,470.2 468.0,470.5 C467.9,470.8 467.1,471.0 466.8,471.3 C466.5,471.6 466.5,471.8 466.0,472.2 C465.5,472.5 464.0,473.6 463.6,473.4 C463.2,473.3 463.8,471.7 463.7,471.1 C463.6,470.5 463.0,470.2 463.1,469.8 C463.1,469.4 463.6,468.9 464.2,468.6Z" fill="#d5e7c3"/>
<path d="M377.5,390.1 C377.1,389.3 378.4,388.0 378.9,387.3 C379.4,386.6 379.8,386.2 380.5,385.9 C381.3,385.6 382.8,385.2 383.4,385.5 C384.1,385.8 384.4,387.1 384.4,387.7 C384.4,388.4 383.9,388.7 383.4,389.5 C382.8,390.3 382.0,392.3 381.0,392.4 C380.0,392.5 377.8,391.0 377.5,390.1Z" fill="#d5e7c3"/>
<path d="M423.1,433.3 C424.8,432.4 426.5,432.5 428.1,432.6 C429.6,432.8 431.3,433.1 432.5,434.1 C433.6,435.1 435.4,437.4 435.0,438.6 C434.5,439.7 431.5,440.5 429.7,441.0 C427.9,441.4 426.3,441.7 424.4,441.2 C422.4,440.6 418.0,439.1 417.8,437.8 C417.6,436.5 421.4,434.1 423.1,433.3Z" fill="#d5e7c3"/>
<path d="M496.4,470.1 C495.2,470.1 494.6,470.2 493.4,469.9 C492.2,469.6 489.4,469.2 489.0,468.3 C488.5,467.5 489.9,465.6 490.9,464.7 C491.8,463.8 493.2,463.4 494.6,463.1 C495.9,462.8 498.1,462.5 499.1,463.0 C500.1,463.6 500.5,465.3 500.7,466.4 C500.9,467.5 501.0,469.1 500.3,469.7 C499.6,470.3 497.5,470.1 496.4,470.1Z" fill="#d5e7c3"/>
<path d="M551.9,452.4 C551.9,453.0 551.6,454.0 551.0,454.3 C550.5,454.6 549.2,454.5 548.6,454.2 C548.1,454.0 547.9,453.4 547.6,452.9 C547.3,452.4 546.8,451.8 547.0,451.4 C547.1,450.9 548.1,450.5 548.8,450.3 C549.5,450.2 550.6,450.3 551.1,450.6 C551.6,451.0 551.9,451.8 551.9,452.4Z" fill="#d5e7c3"/>
<path d="M437.7,456.0 C438.4,456.4 438.0,457.8 438.5,459.0 C438.9,460.2 441.0,462.4 440.4,463.1 C439.8,463.8 436.8,463.2 435.0,463.1 C433.2,463.0 429.8,463.3 429.5,462.6 C429.1,461.9 432.1,459.7 432.8,458.8 C433.6,457.8 433.2,457.3 434.0,456.8 C434.9,456.4 437.0,455.7 437.7,456.0Z" fill="#d5e7c3"/>
<path d="M540.5,452.0 C539.0,452.6 535.1,452.8 534.1,452.0 C533.1,451.2 534.1,448.7 534.5,447.1 C534.8,445.5 535.2,442.6 536.3,442.3 C537.3,442.1 539.6,444.7 540.8,445.7 C542.0,446.7 543.6,447.4 543.6,448.5 C543.5,449.5 542.1,451.4 540.5,452.0Z" fill="#d5e7c3"/>
<path d="M401.6,420.8 C400.3,420.8 397.9,420.8 397.3,420.1 C396.6,419.4 397.7,417.7 397.7,416.6 C397.7,415.4 396.6,413.8 397.2,413.0 C397.9,412.3 400.1,412.2 401.5,412.0 C403.0,411.8 404.7,411.4 406.0,411.8 C407.2,412.3 408.4,413.5 409.1,414.7 C409.7,415.8 410.4,417.8 409.7,418.7 C409.1,419.6 406.4,419.8 405.1,420.1 C403.7,420.5 402.9,420.8 401.6,420.8Z" fill="#d5e7c3"/>
<path d="M420.1,392.6 C421.1,392.3 421.4,391.8 422.5,391.8 C423.5,391.7 425.5,391.6 426.2,392.2 C426.9,392.8 427.2,394.7 426.7,395.4 C426.3,396.1 424.2,396.2 423.3,396.4 C422.4,396.7 422.2,396.9 421.2,397.0 C420.2,397.1 418.2,397.5 417.4,397.0 C416.6,396.4 416.0,394.5 416.5,393.8 C416.9,393.1 419.1,393.0 420.1,392.6Z" fill="#d5e7c3"/>
<path d="M389.3,442.7 C389.4,441.9 388.6,440.2 389.1,439.8 C389.6,439.5 391.6,440.2 392.5,440.4 C393.5,440.6 394.1,440.6 394.8,441.0 C395.4,441.4 396.0,441.9 396.4,442.6 C396.7,443.3 397.1,444.4 396.8,445.2 C396.5,446.0 395.3,447.0 394.3,447.3 C393.3,447.6 391.7,447.1 390.8,446.7 C390.0,446.3 389.3,445.4 389.1,444.7 C388.8,444.0 389.3,443.5 389.3,442.7Z" fill="#d5e7c3"/>
<path d="M641.6,472.3 C639.7,473.2 636.9,475.3 635.5,474.9 C634.0,474.5 633.2,471.3 632.9,469.8 C632.5,468.2 632.6,466.8 633.4,465.5 C634.2,464.2 636.6,461.9 637.9,462.0 C639.2,462.1 639.9,465.0 641.4,466.1 C642.8,467.3 646.6,468.1 646.7,469.1 C646.7,470.2 643.4,471.3 641.6,472.3Z" fill="#d5e7c3"/>
<path d="M452.9,463.1 C454.2,462.9 456.6,463.4 457.3,464.2 C458.0,464.9 456.9,466.5 457.1,467.5 C457.3,468.5 458.8,469.3 458.6,470.0 C458.3,470.7 456.8,471.4 455.7,471.8 C454.5,472.1 452.4,472.3 451.7,471.8 C451.0,471.3 451.7,469.8 451.3,468.7 C450.9,467.7 448.8,466.4 449.0,465.5 C449.3,464.6 451.5,463.3 452.9,463.1Z" fill="#d5e7c3"/>
<path d="M449.7,408.4 C449.5,407.8 450.5,406.5 451.1,406.0 C451.7,405.5 452.6,405.4 453.3,405.3 C454.0,405.3 454.7,405.4 455.3,405.7 C455.9,406.0 456.9,406.8 456.9,407.3 C456.9,407.9 455.9,408.6 455.2,409.0 C454.5,409.4 453.6,409.8 452.7,409.7 C451.8,409.6 450.0,409.0 449.7,408.4Z" fill="#d5e7c3"/>
<path d="M392.8,393.8 C392.1,393.6 391.1,393.2 390.7,392.5 C390.2,391.9 389.7,390.5 390.2,390.1 C390.6,389.6 392.4,390.2 393.3,389.9 C394.3,389.6 395.3,388.0 396.1,388.1 C397.0,388.2 398.4,389.6 398.4,390.3 C398.4,391.1 396.9,391.9 396.3,392.4 C395.7,393.0 395.6,393.4 395.0,393.7 C394.4,393.9 393.5,394.0 392.8,393.8Z" fill="#d5e7c3"/>
<path d="M402.8,412.9 C404.2,411.9 407.8,410.7 409.2,411.3 C410.6,411.8 411.3,414.8 411.2,416.1 C411.1,417.3 409.8,417.5 408.6,418.6 C407.3,419.7 405.0,422.8 403.8,422.6 C402.5,422.4 401.1,419.0 401.0,417.4 C400.8,415.8 401.4,413.9 402.8,412.9Z" fill="#d5e7c3"/>
<path d="M449.1,461.8 C448.2,462.1 447.0,461.7 445.9,461.4 C444.8,461.2 442.8,461.0 442.5,460.4 C442.1,459.7 443.4,458.5 443.8,457.6 C444.2,456.7 444.1,455.5 445.0,455.0 C445.9,454.4 448.0,454.1 448.9,454.5 C449.8,454.8 450.1,456.4 450.5,457.2 C450.9,458.1 451.5,458.9 451.3,459.7 C451.0,460.4 450.0,461.5 449.1,461.8Z" fill="#d5e7c3"/>
<path d="M394.4,455.1 C395.3,455.8 397.6,457.0 397.4,457.9 C397.3,458.8 394.9,460.2 393.7,460.3 C392.5,460.4 391.3,459.1 390.3,458.5 C389.2,457.9 387.9,457.5 387.6,456.7 C387.3,455.9 387.8,454.1 388.6,453.6 C389.4,453.1 391.4,453.5 392.4,453.7 C393.3,454.0 393.6,454.4 394.4,455.1Z" fill="#d5e7c3"/>
<path d="M474.4,436.5 C474.1,435.1 474.9,432.4 476.5,431.3 C478.0,430.2 481.9,429.3 483.8,429.9 C485.6,430.5 487.5,433.3 487.6,434.7 C487.7,436.1 485.3,436.7 484.5,438.2 C483.7,439.6 483.8,443.2 482.8,443.4 C481.8,443.6 479.9,440.5 478.5,439.3 C477.1,438.2 474.8,437.8 474.4,436.5Z" fill="#d5e7c3"/>
<path d="M439.1,364.1 C438.3,364.5 438.3,365.0 437.4,365.4 C436.4,365.8 433.9,366.9 433.2,366.5 C432.5,366.2 432.9,364.1 432.9,363.1 C433.0,362.2 433.3,361.9 433.6,360.8 C433.9,359.8 433.8,357.1 434.5,357.0 C435.3,356.9 437.1,359.5 438.2,360.1 C439.2,360.7 440.2,360.1 440.9,360.6 C441.5,361.1 442.5,362.4 442.2,363.0 C441.9,363.5 439.9,363.7 439.1,364.1Z" fill="#d5e7c3"/>
<path d="M436.7,379.4 C435.9,380.0 434.0,381.2 432.9,380.9 C431.8,380.7 430.1,378.9 430.0,378.0 C429.9,377.0 431.6,375.7 432.4,375.4 C433.3,375.0 434.3,375.5 435.2,375.7 C436.1,376.0 437.4,376.2 437.7,376.9 C437.9,377.5 437.5,378.7 436.7,379.4Z" fill="#d5e7c3"/>
<path d="M518.0,444.1 C518.3,444.8 519.1,445.9 518.8,446.5 C518.4,447.0 516.7,447.5 515.9,447.4 C515.1,447.4 514.4,446.6 513.9,446.2 C513.4,445.9 513.5,445.8 512.9,445.3 C512.3,444.7 510.2,443.2 510.4,442.8 C510.6,442.4 513.2,443.1 514.2,443.0 C515.3,442.8 516.3,441.6 517.0,441.8 C517.6,441.9 517.7,443.3 518.0,444.1Z" fill="#d5e7c3"/>
<path d="M400.1,370.1 C401.1,370.1 403.0,372.6 403.2,373.6 C403.4,374.6 402.1,375.3 401.3,376.2 C400.5,377.0 399.8,378.8 398.6,378.8 C397.4,378.9 394.4,377.4 394.2,376.5 C394.0,375.6 396.1,374.6 397.1,373.5 C398.1,372.5 399.1,370.1 400.1,370.1Z" fill="#d5e7c3"/>
<path d="M578.3,449.8 C579.0,449.7 579.3,449.7 579.7,449.8 C580.1,450.0 580.4,450.3 580.6,450.7 C580.8,451.1 581.2,451.5 581.1,452.0 C581.1,452.5 580.9,453.3 580.2,453.8 C579.6,454.2 578.1,454.6 577.2,454.4 C576.3,454.2 575.2,453.2 574.9,452.5 C574.6,451.7 574.7,450.3 575.2,449.9 C575.8,449.4 577.5,449.8 578.3,449.8Z" fill="#d5e7c3"/>
<path d="M409.5,444.5 C409.6,445.9 411.1,446.9 410.6,447.7 C410.2,448.4 408.2,448.3 406.9,449.0 C405.6,449.6 403.8,451.8 403.0,451.5 C402.2,451.2 402.4,448.2 402.0,447.2 C401.7,446.2 401.1,446.3 400.6,445.3 C400.1,444.3 398.5,442.0 399.0,441.1 C399.6,440.1 402.2,439.8 404.1,439.5 C405.9,439.3 409.1,438.6 410.0,439.5 C410.9,440.3 409.4,443.1 409.5,444.5Z" fill="#d5e7c3"/>
<path d="M394.0,365.2 C395.3,366.1 398.3,366.4 398.6,367.6 C399.0,368.8 397.4,371.5 396.0,372.2 C394.6,372.9 391.7,372.3 390.0,371.7 C388.4,371.2 386.2,370.1 386.1,369.1 C385.9,368.2 388.3,367.3 389.1,366.2 C389.8,365.1 389.8,362.7 390.6,362.5 C391.5,362.4 392.6,364.4 394.0,365.2Z" fill="#d5e7c3"/>
<path d="M544.8,444.6 C544.0,445.3 543.0,445.2 541.5,445.3 C540.1,445.4 536.5,445.7 536.0,445.0 C535.5,444.2 537.4,442.1 538.5,441.0 C539.6,439.8 541.3,437.8 542.5,437.9 C543.8,438.0 545.7,440.3 546.1,441.4 C546.4,442.6 545.5,444.0 544.8,444.6Z" fill="#d5e7c3"/>
<path d="M380.7,459.0 C381.1,459.3 381.6,459.7 381.8,460.2 C382.0,460.6 382.0,461.2 381.9,461.8 C381.7,462.4 381.3,463.5 380.7,463.8 C380.1,464.0 378.6,463.5 378.1,463.1 C377.5,462.7 377.7,462.0 377.4,461.5 C377.0,461.0 376.0,460.7 376.0,460.3 C376.0,459.9 377.0,459.5 377.5,459.2 C378.0,458.9 378.5,458.4 379.0,458.4 C379.5,458.3 380.2,458.7 380.7,459.0Z" fill="#d5e7c3"/>
<path d="M536.8,452.2 C535.4,451.9 533.4,451.3 532.9,450.3 C532.5,449.4 533.1,447.1 534.1,446.4 C535.0,445.7 537.0,446.2 538.6,446.4 C540.2,446.6 543.2,446.9 543.7,447.9 C544.1,448.8 542.4,451.2 541.3,452.0 C540.1,452.7 538.2,452.4 536.8,452.2Z" fill="#d5e7c3"/>
<path d="M601.4,465.5 C599.7,465.1 596.6,462.8 596.5,461.5 C596.4,460.2 599.8,459.4 601.0,457.7 C602.1,456.1 602.3,451.8 603.5,451.6 C604.8,451.4 607.2,454.8 608.7,456.3 C610.1,457.8 612.6,459.3 612.4,460.5 C612.1,461.7 609.0,462.7 607.2,463.5 C605.4,464.3 603.2,465.8 601.4,465.5Z" fill="#d5e7c3"/>
<path d="M451.8,390.1 C452.7,389.9 454.1,391.0 454.8,391.5 C455.5,392.0 456.2,392.6 456.2,393.2 C456.2,393.8 455.3,394.9 454.7,395.1 C454.0,395.3 453.2,394.8 452.3,394.4 C451.4,394.0 449.4,393.4 449.3,392.7 C449.2,392.0 450.8,390.3 451.8,390.1Z" fill="#d5e7c3"/>
<path d="M525.0,463.2 C525.0,462.3 526.0,461.5 526.6,460.7 C527.2,460.0 527.5,459.2 528.5,458.5 C529.5,457.8 531.7,456.4 532.8,456.6 C533.9,456.9 534.9,459.2 534.9,460.2 C535.0,461.2 533.4,461.9 533.2,462.7 C533.0,463.6 533.9,464.7 533.4,465.2 C533.0,465.6 531.6,465.3 530.5,465.5 C529.3,465.6 527.5,466.5 526.6,466.1 C525.7,465.8 525.0,464.1 525.0,463.2Z" fill="#d5e7c3"/>
<path d="M627.7,443.4 C627.3,442.9 627.6,442.1 627.8,441.5 C627.9,440.8 628.2,439.4 628.7,439.3 C629.2,439.2 630.2,440.3 630.8,440.9 C631.4,441.4 632.2,441.8 632.2,442.4 C632.1,442.9 631.2,444.0 630.4,444.2 C629.7,444.3 628.2,443.8 627.7,443.4Z" fill="#d5e7c3"/>
<path d="M372.2,363.0 C372.7,361.8 372.6,360.1 373.8,359.6 C375.0,359.2 378.2,359.4 379.4,360.3 C380.5,361.2 381.1,363.7 380.6,364.9 C380.1,366.1 377.8,367.1 376.2,367.4 C374.6,367.7 371.7,367.5 371.0,366.7 C370.4,366.0 371.7,364.2 372.2,363.0Z" fill="#d5e7c3"/>
<path d="M392.4,400.5 C393.7,399.9 395.5,398.2 396.7,398.4 C397.9,398.6 399.4,400.6 399.7,401.7 C400.0,402.8 398.7,403.4 398.6,404.9 C398.5,406.4 400.0,409.6 398.8,410.6 C397.7,411.5 393.8,411.2 391.8,410.6 C389.9,410.0 387.6,408.3 387.0,407.0 C386.5,405.6 387.6,403.4 388.5,402.3 C389.4,401.3 391.0,401.2 392.4,400.5Z" fill="#d5e7c3"/>
<path d="M459.3,433.0 C460.9,432.3 464.7,432.8 465.9,433.7 C467.2,434.7 466.5,437.6 466.6,438.9 C466.7,440.2 466.8,440.9 466.4,441.7 C466.0,442.5 465.3,442.6 464.3,443.6 C463.4,444.7 462.2,447.7 460.9,447.9 C459.5,448.2 457.1,446.1 456.2,445.0 C455.3,443.8 455.3,442.2 455.4,441.0 C455.5,439.8 456.0,439.1 456.7,437.7 C457.4,436.4 457.8,433.6 459.3,433.0Z" fill="#d5e7c3"/>
<path d="M618.1,445.3 C618.0,443.6 617.4,441.5 618.6,440.3 C619.8,439.2 623.4,438.3 625.2,438.6 C627.0,439.0 628.9,441.2 629.5,442.6 C630.1,443.9 629.4,445.5 628.7,446.7 C628.0,448.0 627.1,449.3 625.5,449.9 C623.8,450.5 620.2,451.1 619.0,450.4 C617.8,449.6 618.2,447.0 618.1,445.3Z" fill="#d5e7c3"/>
<path d="M437.6,366.3 C437.1,367.4 437.9,370.0 437.1,370.3 C436.4,370.5 434.4,368.5 433.0,368.1 C431.6,367.7 429.4,368.6 428.9,368.0 C428.3,367.5 429.4,365.6 429.9,364.8 C430.4,364.0 431.2,364.0 431.8,363.3 C432.4,362.7 432.4,361.6 433.4,361.1 C434.4,360.6 436.6,360.1 437.7,360.6 C438.8,361.0 440.1,362.7 440.0,363.7 C440.0,364.6 438.0,365.2 437.6,366.3Z" fill="#d5e7c3"/>
<path d="M384.8,431.2 C386.1,431.7 388.4,431.1 388.7,431.7 C389.1,432.3 387.1,433.7 386.8,434.7 C386.6,435.7 387.7,436.8 387.2,437.6 C386.6,438.5 384.8,439.7 383.7,439.6 C382.6,439.5 381.2,438.0 380.6,437.2 C380.0,436.4 380.5,435.9 379.9,434.9 C379.3,434.0 376.8,432.6 376.9,431.5 C377.0,430.5 379.4,428.8 380.7,428.7 C382.0,428.7 383.4,430.7 384.8,431.2Z" fill="#d5e7c3"/>
<path d="M444.0,412.2 C443.3,412.4 442.2,411.6 441.4,411.4 C440.5,411.3 439.2,411.7 438.7,411.3 C438.2,410.9 438.3,409.7 438.6,409.1 C438.8,408.4 439.4,407.8 440.1,407.5 C440.8,407.1 442.0,406.6 442.6,406.8 C443.2,407.0 443.2,408.1 443.7,408.6 C444.2,409.2 445.6,409.7 445.6,410.3 C445.6,410.9 444.7,412.0 444.0,412.2Z" fill="#d5e7c3"/>
<path d="M527.9,441.5 C527.9,442.8 527.7,444.4 526.6,445.5 C525.5,446.6 523.0,448.0 521.3,448.0 C519.6,447.9 517.2,446.1 516.4,445.0 C515.6,443.8 516.4,442.1 516.6,440.8 C516.8,439.6 516.7,438.1 517.7,437.3 C518.7,436.4 520.9,435.6 522.4,435.6 C523.9,435.7 525.9,436.8 526.8,437.7 C527.7,438.7 527.9,440.2 527.9,441.5Z" fill="#d5e7c3"/>
<path d="M382.3,354.2 C382.4,353.4 382.8,353.0 383.6,352.5 C384.3,352.1 386.0,351.3 386.7,351.5 C387.4,351.8 387.5,353.2 387.6,354.2 C387.7,355.1 388.1,356.9 387.2,357.4 C386.4,357.9 383.4,357.9 382.6,357.4 C381.8,356.9 382.1,355.0 382.3,354.2Z" fill="#d5e7c3"/>
<path d="M518.7,464.6 C519.6,465.7 519.1,468.5 518.1,469.8 C517.1,471.1 514.5,472.2 512.7,472.5 C510.8,472.8 508.2,472.3 507.1,471.5 C505.9,470.7 506.3,469.0 505.8,467.7 C505.2,466.4 503.4,464.8 503.8,463.7 C504.2,462.5 506.8,460.8 508.3,460.7 C509.7,460.6 510.9,462.6 512.7,463.2 C514.4,463.9 517.8,463.5 518.7,464.6Z" fill="#d5e7c3"/>
<path d="M474.9,449.4 C473.8,449.6 472.2,448.7 471.1,448.2 C470.0,447.6 468.6,446.9 468.3,446.0 C468.0,445.2 468.8,443.8 469.5,443.0 C470.1,442.3 471.5,441.6 472.5,441.6 C473.4,441.6 474.1,442.5 475.1,442.9 C476.2,443.3 478.3,443.3 478.7,444.0 C479.1,444.6 477.9,445.9 477.3,446.8 C476.7,447.7 475.9,449.1 474.9,449.4Z" fill="#d5e7c3"/>
<path d="M459.6,404.3 C461.4,404.4 463.7,405.9 464.7,407.1 C465.7,408.4 466.0,410.3 465.5,411.7 C465.1,413.2 463.5,415.2 462.0,415.7 C460.4,416.2 457.5,415.4 456.1,414.6 C454.8,413.8 454.2,412.3 453.8,411.0 C453.5,409.6 453.2,407.7 454.1,406.6 C455.1,405.5 457.9,404.2 459.6,404.3Z" fill="#d5e7c3"/>
<path d="M462.2,394.2 C461.0,393.8 461.2,389.2 461.0,387.6 C460.9,386.1 460.7,385.8 461.1,384.8 C461.6,383.8 462.6,381.9 463.6,381.8 C464.7,381.6 465.6,383.0 467.4,383.8 C469.3,384.6 474.5,385.5 474.6,386.6 C474.8,387.6 470.4,388.9 468.3,390.2 C466.3,391.4 463.4,394.6 462.2,394.2Z" fill="#d5e7c3"/>
<path d="M472.2,452.0 C472.4,451.1 474.5,450.4 475.7,449.9 C476.9,449.3 478.2,448.7 479.4,448.8 C480.7,448.8 482.1,449.4 483.2,450.2 C484.4,450.9 486.7,452.4 486.4,453.2 C486.2,454.1 482.8,454.6 481.8,455.4 C480.7,456.2 480.7,457.7 479.9,457.8 C479.2,457.9 478.2,456.3 477.3,455.9 C476.3,455.4 475.1,455.7 474.3,455.1 C473.4,454.4 471.9,452.9 472.2,452.0Z" fill="#d5e7c3"/>
<path d="M389.5,395.9 C390.0,398.0 389.7,401.8 388.0,402.8 C386.3,403.8 381.2,403.1 379.4,402.1 C377.7,401.2 377.9,398.9 377.6,397.3 C377.3,395.7 376.5,393.6 377.8,392.5 C379.0,391.3 383.3,389.8 385.2,390.4 C387.2,391.0 389.0,393.9 389.5,395.9Z" fill="#d5e7c3"/>
<path d="M466.2,445.6 C466.6,446.6 465.9,448.1 464.8,449.3 C463.8,450.4 461.4,452.6 459.9,452.4 C458.4,452.2 456.6,449.9 455.8,448.2 C455.1,446.5 454.3,443.0 455.4,442.2 C456.5,441.5 460.6,443.2 462.4,443.7 C464.2,444.3 465.8,444.7 466.2,445.6Z" fill="#d5e7c3"/>
<path d="M404.7,361.4 C405.1,362.0 404.2,363.1 404.0,364.0 C403.8,364.9 404.3,366.4 403.6,366.9 C402.9,367.4 400.8,367.3 399.7,366.9 C398.6,366.5 397.2,365.4 397.0,364.6 C396.8,363.8 398.0,362.8 398.7,362.0 C399.4,361.3 400.2,360.4 401.2,360.3 C402.2,360.2 404.2,360.7 404.7,361.4Z" fill="#d5e7c3"/>
<path d="M393.0,348.9 C394.0,348.8 395.2,350.4 396.4,351.1 C397.6,351.8 400.4,352.2 400.4,352.9 C400.4,353.7 397.3,354.8 396.4,355.4 C395.4,356.0 395.4,356.1 394.7,356.5 C394.0,356.9 392.8,358.0 392.2,357.8 C391.6,357.7 391.9,356.3 391.0,355.6 C390.1,354.9 386.6,354.3 386.5,353.7 C386.5,353.1 389.5,352.7 390.6,351.9 C391.7,351.1 392.1,349.1 393.0,348.9Z" fill="#d5e7c3"/>
<path d="M379.8,453.7 C380.1,454.5 379.6,455.7 379.0,456.4 C378.4,457.1 377.1,457.8 376.1,457.9 C375.1,457.9 373.3,457.2 373.0,456.6 C372.7,456.0 373.9,454.9 374.3,454.4 C374.6,453.8 374.4,453.8 374.9,453.3 C375.5,452.8 376.6,451.5 377.4,451.5 C378.3,451.6 379.5,452.9 379.8,453.7Z" fill="#d5e7c3"/>
<path d="M407.0,451.1 C407.7,451.4 407.1,453.9 407.1,454.8 C407.1,455.7 407.2,455.7 407.0,456.8 C406.9,457.8 407.0,460.8 406.3,461.0 C405.5,461.3 403.9,458.8 402.4,458.2 C401.0,457.5 397.7,457.8 397.6,457.2 C397.4,456.5 400.4,455.1 401.3,454.3 C402.2,453.6 402.1,453.2 403.0,452.7 C404.0,452.2 406.4,450.8 407.0,451.1Z" fill="#d5e7c3"/>
<path d="M633.4,444.9 C632.5,445.6 630.3,447.4 629.3,447.1 C628.4,446.8 628.6,444.3 627.8,443.3 C627.1,442.2 624.7,441.4 624.9,440.7 C625.2,440.1 628.2,439.8 629.3,439.4 C630.3,439.0 630.2,438.9 631.3,438.5 C632.4,438.1 634.7,436.5 635.7,436.8 C636.7,437.1 637.4,439.3 637.2,440.3 C637.1,441.2 635.5,441.9 634.8,442.7 C634.2,443.4 634.3,444.1 633.4,444.9Z" fill="#d5e7c3"/>
<path d="M498.4,466.2 C498.1,465.5 499.5,464.5 500.2,463.4 C500.9,462.3 501.5,459.6 502.6,459.5 C503.6,459.4 506.2,461.5 506.7,462.6 C507.2,463.7 506.5,465.3 505.8,466.1 C505.0,466.9 503.6,467.3 502.4,467.3 C501.1,467.4 498.8,466.9 498.4,466.2Z" fill="#d5e7c3"/>
<path d="M426.0,462.2 C426.6,463.6 429.9,464.2 430.0,465.2 C430.1,466.2 427.8,467.9 426.5,468.2 C425.1,468.5 423.8,467.1 422.0,467.2 C420.3,467.3 417.5,469.3 415.9,468.8 C414.4,468.3 412.3,465.7 412.4,464.3 C412.6,462.9 415.3,461.4 416.7,460.5 C418.1,459.5 419.2,459.4 420.8,458.9 C422.3,458.3 425.3,456.5 426.1,457.1 C427.0,457.6 425.3,460.9 426.0,462.2Z" fill="#d5e7c3"/>
<path d="M430.7,467.6 C430.6,466.9 429.1,465.5 429.3,465.1 C429.6,464.7 431.3,465.3 432.2,465.3 C433.2,465.3 434.6,464.8 434.9,465.1 C435.2,465.5 433.9,466.8 434.1,467.5 C434.3,468.2 436.1,468.9 436.0,469.3 C435.9,469.7 434.2,470.0 433.5,470.0 C432.8,470.1 432.2,469.7 431.6,469.5 C431.0,469.3 430.1,469.3 429.9,469.0 C429.8,468.7 430.8,468.2 430.7,467.6Z" fill="#d5e7c3"/>
<path d="M393.0,421.8 C392.1,422.1 391.1,422.1 390.2,422.0 C389.2,421.8 388.3,421.5 387.5,420.9 C386.8,420.4 385.6,419.2 385.8,418.6 C386.0,418.0 388.1,417.7 388.9,417.2 C389.6,416.6 389.8,415.5 390.5,415.4 C391.1,415.3 391.9,416.2 392.8,416.5 C393.7,416.9 395.4,416.9 395.8,417.6 C396.3,418.2 395.9,419.5 395.5,420.2 C395.0,421.0 393.9,421.6 393.0,421.8Z" fill="#d5e7c3"/>
<path d="M438.1,466.9 C436.1,465.9 434.9,463.2 434.5,461.1 C434.2,459.1 434.6,456.2 436.2,454.8 C437.8,453.3 442.1,452.2 444.2,452.6 C446.4,453.1 448.4,455.6 449.3,457.2 C450.2,458.8 450.1,460.3 449.6,462.0 C449.2,463.8 448.4,466.7 446.5,467.5 C444.5,468.3 440.1,468.0 438.1,466.9Z" fill="#d5e7c3"/>
<path d="M377.3,405.8 C376.8,406.2 374.8,405.9 374.0,405.8 C373.2,405.7 373.0,405.5 372.3,405.2 C371.7,404.8 370.1,404.3 370.0,403.7 C369.9,403.1 371.1,401.9 371.8,401.6 C372.6,401.3 373.8,401.7 374.7,401.9 C375.5,402.2 376.4,402.5 376.9,403.1 C377.3,403.8 377.7,405.3 377.3,405.8Z" fill="#d5e7c3"/>
<path d="M520.3,466.4 C519.7,465.7 518.9,463.9 519.4,463.3 C520.0,462.8 522.4,463.5 523.5,463.1 C524.7,462.7 525.3,460.9 526.6,460.8 C527.8,460.7 530.1,461.4 530.8,462.3 C531.6,463.1 531.6,465.0 531.2,466.0 C530.8,467.1 529.6,468.1 528.6,468.6 C527.5,469.1 526.1,469.2 525.1,469.0 C524.2,468.8 523.8,468.0 523.0,467.5 C522.2,467.1 520.9,467.1 520.3,466.4Z" fill="#d5e7c3"/>
<path d="M391.4,417.6 C390.3,416.3 390.5,414.5 390.8,413.4 C391.1,412.2 391.9,411.3 393.1,410.5 C394.2,409.6 396.4,408.0 397.6,408.2 C398.8,408.4 399.7,410.5 400.5,411.8 C401.4,413.2 403.2,414.8 402.7,416.4 C402.3,418.0 399.7,421.3 397.8,421.5 C395.9,421.7 392.6,419.0 391.4,417.6Z" fill="#d5e7c3"/>
<path d="M432.8,400.8 C432.3,399.6 432.7,398.7 432.7,397.6 C432.6,396.5 432.0,395.2 432.6,394.2 C433.3,393.1 435.1,391.4 436.4,391.3 C437.8,391.2 439.3,392.9 440.7,393.7 C442.2,394.4 444.5,394.7 445.1,395.7 C445.6,396.7 444.9,398.9 444.0,399.6 C443.0,400.4 440.8,399.3 439.4,400.3 C438.1,401.2 436.9,405.2 435.8,405.3 C434.7,405.4 433.3,402.1 432.8,400.8Z" fill="#d5e7c3"/>
<path d="M454.8,412.7 C455.4,414.5 456.8,415.0 456.4,416.6 C456.1,418.2 454.3,422.4 452.9,422.5 C451.5,422.6 449.0,418.5 447.8,417.2 C446.6,415.8 446.1,415.7 445.7,414.3 C445.3,412.9 444.1,410.2 445.3,408.9 C446.6,407.6 451.5,405.6 453.0,406.2 C454.6,406.9 454.2,411.0 454.8,412.7Z" fill="#d5e7c3"/>
<path d="M456.4,428.0 C457.0,427.5 458.8,428.1 459.6,427.8 C460.5,427.5 461.1,426.1 461.5,426.2 C461.9,426.3 461.7,427.9 462.2,428.4 C462.7,428.9 464.2,428.8 464.6,429.4 C464.9,430.0 464.7,431.3 464.1,431.7 C463.6,432.1 462.1,431.9 461.2,432.0 C460.4,432.0 459.7,432.1 458.8,431.9 C458.0,431.6 456.6,431.2 456.2,430.6 C455.8,430.0 455.8,428.5 456.4,428.0Z" fill="#d5e7c3"/>
<path d="M423.2,448.3 C421.9,448.8 419.6,449.5 418.8,448.9 C417.9,448.4 418.6,446.0 418.2,445.1 C417.7,444.1 416.0,443.9 415.9,443.3 C415.9,442.6 417.1,441.9 417.9,441.3 C418.6,440.7 419.3,440.0 420.5,439.7 C421.6,439.3 424.0,438.7 425.0,439.2 C425.9,439.7 425.9,441.6 426.1,442.7 C426.4,443.9 427.0,445.1 426.5,446.1 C426.0,447.0 424.5,447.9 423.2,448.3Z" fill="#d5e7c3"/>
<path d="M464.5,449.5 C465.8,450.6 467.8,453.5 467.1,454.7 C466.4,455.8 462.0,455.9 460.2,456.2 C458.5,456.5 458.3,456.3 456.6,456.4 C454.9,456.4 450.5,457.3 450.0,456.6 C449.5,455.9 452.6,453.3 453.4,452.0 C454.2,450.8 453.9,449.8 454.8,449.2 C455.8,448.5 457.4,448.2 459.0,448.3 C460.6,448.3 463.1,448.4 464.5,449.5Z" fill="#d5e7c3"/>
<path d="M457.6,406.6 C458.3,406.3 459.8,405.9 460.6,406.2 C461.3,406.5 462.1,407.7 462.0,408.3 C461.9,409.0 460.3,409.3 459.9,409.9 C459.5,410.6 460.2,412.0 459.7,412.4 C459.2,412.9 457.5,412.9 456.7,412.6 C455.9,412.3 455.4,411.3 455.1,410.7 C454.7,410.1 454.4,409.4 454.6,408.9 C454.8,408.4 455.8,408.3 456.3,407.9 C456.8,407.5 456.9,406.9 457.6,406.6Z" fill="#d5e7c3"/>
<path d="M420.0,421.0 C420.4,420.6 422.8,421.4 424.1,421.0 C425.3,420.7 426.6,418.8 427.4,419.0 C428.2,419.1 428.6,421.0 428.9,421.9 C429.2,422.8 429.6,424.1 429.1,424.7 C428.6,425.2 427.0,425.1 425.9,425.4 C424.8,425.7 423.5,426.8 422.7,426.6 C421.9,426.3 421.7,424.9 421.3,424.0 C420.8,423.1 419.5,421.5 420.0,421.0Z" fill="#d5e7c3"/>
<path d="M414.1,388.5 C412.7,389.2 408.7,387.7 407.2,386.8 C405.8,386.0 405.4,384.5 405.4,383.5 C405.4,382.5 406.1,381.8 407.2,381.0 C408.3,380.1 410.4,378.2 411.8,378.4 C413.3,378.7 415.6,380.9 415.9,382.6 C416.3,384.3 415.6,387.8 414.1,388.5Z" fill="#d5e7c3"/>
<path d="M584.4,471.5 C584.4,470.8 583.9,470.2 584.2,469.7 C584.5,469.2 585.5,468.5 586.4,468.4 C587.2,468.3 589.0,468.4 589.3,468.9 C589.7,469.3 588.3,470.4 588.4,471.2 C588.6,472.1 590.6,473.5 590.3,473.9 C590.1,474.2 587.9,473.4 586.9,473.4 C585.8,473.4 584.4,474.2 584.0,473.9 C583.6,473.5 584.4,472.2 584.4,471.5Z" fill="#d5e7c3"/>
<path d="M416.6,404.9 C417.4,404.6 419.4,404.7 419.9,405.2 C420.4,405.7 419.3,407.1 419.5,407.8 C419.7,408.6 421.5,409.6 421.3,410.0 C421.1,410.3 419.2,409.9 418.2,410.1 C417.3,410.3 416.2,411.2 415.5,411.0 C414.8,410.9 414.1,409.6 414.0,408.9 C413.9,408.3 414.5,407.6 415.0,406.9 C415.4,406.3 415.8,405.2 416.6,404.9Z" fill="#d5e7c3"/>
<path d="M614.2,443.7 C615.3,442.2 617.8,440.6 619.7,440.3 C621.6,440.0 623.9,441.3 625.6,442.1 C627.3,442.9 629.1,443.8 629.7,445.1 C630.4,446.3 630.3,448.7 629.4,449.7 C628.5,450.8 625.9,451.0 624.3,451.2 C622.7,451.5 621.8,451.5 619.9,451.3 C618.0,451.0 613.9,450.9 613.0,449.6 C612.0,448.4 613.1,445.3 614.2,443.7Z" fill="#d5e7c3"/>
<path d="M369.5,404.2 C368.2,403.3 366.4,402.8 366.1,401.6 C365.7,400.4 366.2,397.7 367.3,397.0 C368.5,396.3 371.3,397.1 372.9,397.4 C374.6,397.7 376.3,398.0 377.4,399.0 C378.5,400.1 380.2,402.6 379.6,403.9 C379.0,405.2 375.6,406.6 373.9,406.6 C372.2,406.7 370.8,405.0 369.5,404.2Z" fill="#d5e7c3"/>
<path d="M402.2,405.7 C403.1,405.3 405.5,406.6 406.4,407.2 C407.3,407.8 407.3,408.5 407.7,409.1 C408.1,409.6 408.2,409.7 408.6,410.4 C409.1,411.1 410.6,412.8 410.2,413.3 C409.9,413.9 407.5,414.0 406.5,413.9 C405.6,413.7 405.4,412.7 404.3,412.4 C403.2,412.1 400.5,412.7 400.0,412.2 C399.4,411.6 400.6,410.2 401.0,409.1 C401.3,408.0 401.3,406.0 402.2,405.7Z" fill="#d5e7c3"/>
<path d="M554.0,438.9 C555.6,439.7 557.3,442.1 557.0,443.4 C556.8,444.6 553.8,445.7 552.7,446.4 C551.6,447.2 551.5,447.7 550.5,448.0 C549.6,448.3 548.6,448.5 547.1,448.3 C545.6,448.1 541.6,447.6 541.3,446.7 C541.0,445.8 544.4,444.4 545.4,443.0 C546.4,441.6 545.9,439.0 547.4,438.3 C548.8,437.6 552.4,438.0 554.0,438.9Z" fill="#d5e7c3"/>
<path d="M423.7,357.0 C423.4,358.8 423.7,361.2 422.5,361.7 C421.4,362.2 419.0,360.7 416.9,359.8 C414.8,358.8 409.7,357.1 409.8,356.0 C409.9,354.9 415.2,354.1 417.7,353.3 C420.2,352.4 423.8,350.3 424.8,350.9 C425.8,351.5 424.1,355.2 423.7,357.0Z" fill="#d5e7c3"/>
<path d="M515.5,470.6 C515.5,469.9 517.6,469.5 518.5,468.4 C519.4,467.4 519.8,464.6 520.9,464.3 C522.1,464.0 524.1,465.8 525.4,466.7 C526.8,467.5 528.4,468.2 529.1,469.3 C529.7,470.5 529.9,472.5 529.3,473.7 C528.6,474.9 526.7,476.1 525.2,476.6 C523.6,477.1 521.1,477.1 520.0,476.5 C519.0,475.8 519.6,473.7 518.8,472.7 C518.1,471.7 515.6,471.3 515.5,470.6Z" fill="#d5e7c3"/>
<path d="M561.2,466.4 C559.2,465.9 556.3,465.2 555.9,464.1 C555.5,463.0 557.5,461.1 558.9,459.9 C560.2,458.8 562.8,456.9 564.0,457.2 C565.1,457.5 565.1,460.2 565.7,461.8 C566.3,463.4 568.5,466.0 567.8,466.8 C567.0,467.5 563.2,466.8 561.2,466.4Z" fill="#d5e7c3"/>
<path d="M525.9,465.8 C526.2,464.6 526.9,462.7 527.9,462.4 C528.9,462.2 530.8,463.6 531.8,464.2 C532.7,464.8 533.4,465.4 533.6,466.1 C533.7,466.7 533.1,467.7 532.6,468.1 C532.1,468.6 531.4,468.5 530.3,468.8 C529.2,469.0 526.6,469.9 525.9,469.4 C525.2,468.9 525.5,466.9 525.9,465.8Z" fill="#d5e7c3"/>
<path d="M476.5,459.6 C476.1,460.8 474.8,461.3 473.9,462.0 C473.0,462.8 472.4,463.8 471.1,464.1 C469.9,464.4 466.9,464.7 466.2,464.0 C465.5,463.3 467.0,461.2 467.1,460.0 C467.2,458.8 466.3,457.9 466.9,457.0 C467.5,456.0 469.0,454.7 470.5,454.4 C472.1,454.1 475.3,454.1 476.3,455.0 C477.3,455.9 476.9,458.4 476.5,459.6Z" fill="#d5e7c3"/>
<path d="M416.6,363.7 C415.6,364.5 412.9,365.3 411.4,365.0 C409.9,364.6 407.8,362.7 407.6,361.5 C407.4,360.3 409.1,358.6 410.3,357.8 C411.5,357.1 413.6,356.8 414.8,357.2 C416.0,357.5 417.1,358.9 417.4,360.0 C417.7,361.1 417.6,362.9 416.6,363.7Z" fill="#d5e7c3"/>
<path d="M437.8,423.3 C437.8,424.0 438.2,425.8 437.9,426.0 C437.5,426.1 436.4,424.6 435.5,424.4 C434.6,424.1 433.1,424.8 432.6,424.4 C432.1,424.0 432.1,422.6 432.5,422.1 C432.9,421.7 434.5,421.7 435.1,421.6 C435.8,421.4 435.7,421.3 436.3,421.1 C436.8,420.9 438.2,420.2 438.5,420.5 C438.9,420.7 438.4,421.9 438.3,422.3 C438.2,422.8 437.9,422.7 437.8,423.3Z" fill="#d5e7c3"/>
<path d="M439.4,407.0 C439.1,407.8 437.2,408.9 436.1,409.0 C435.0,409.2 433.6,408.5 432.7,407.9 C431.8,407.4 430.9,406.5 430.9,405.7 C430.8,405.0 431.6,404.0 432.4,403.4 C433.2,402.8 434.6,401.9 435.5,402.0 C436.5,402.1 437.4,403.2 438.1,404.0 C438.7,404.9 439.7,406.2 439.4,407.0Z" fill="#d5e7c3"/>
<path d="M444.5,412.7 C443.7,411.9 442.9,409.9 443.3,409.2 C443.8,408.5 446.2,408.7 447.4,408.6 C448.6,408.5 449.9,408.2 450.7,408.7 C451.4,409.2 452.2,410.9 451.8,411.8 C451.4,412.7 449.7,413.9 448.5,414.0 C447.2,414.2 445.4,413.5 444.5,412.7Z" fill="#d5e7c3"/>
<path d="M392.7,455.8 C394.2,456.5 396.4,458.2 396.6,459.5 C396.9,460.9 395.5,463.4 394.2,464.1 C392.8,464.8 389.9,463.7 388.3,463.6 C386.7,463.6 385.7,464.3 384.6,464.0 C383.5,463.7 382.2,462.8 381.6,461.8 C381.0,460.9 380.8,459.6 381.1,458.4 C381.4,457.3 382.1,455.5 383.2,455.0 C384.4,454.4 386.4,455.0 388.0,455.2 C389.5,455.3 391.3,455.1 392.7,455.8Z" fill="#d5e7c3"/>
<path d="M474.7,429.3 C476.8,429.3 481.0,428.8 482.1,429.9 C483.1,431.0 482.0,434.7 480.9,435.9 C479.8,437.2 477.4,436.6 475.4,437.4 C473.4,438.1 470.4,440.8 468.7,440.4 C467.0,439.9 465.3,436.3 465.4,434.6 C465.4,432.8 467.4,430.7 469.0,429.8 C470.5,429.0 472.5,429.2 474.7,429.3Z" fill="#d5e7c3"/>
<path d="M476.5,439.3 C476.8,439.7 475.0,441.3 474.6,442.1 C474.2,442.9 474.6,443.9 474.1,444.1 C473.5,444.4 472.2,443.7 471.4,443.6 C470.6,443.6 469.9,443.9 469.3,443.7 C468.6,443.4 467.6,442.7 467.5,442.2 C467.4,441.6 468.2,441.0 468.6,440.3 C469.0,439.7 469.2,438.4 469.8,438.2 C470.5,438.0 471.3,439.2 472.5,439.3 C473.6,439.5 476.1,438.8 476.5,439.3Z" fill="#d5e7c3"/>
<path d="M440.6,430.0 C441.8,430.4 444.0,431.1 444.2,432.1 C444.4,433.0 443.1,435.0 441.8,435.7 C440.5,436.4 437.3,436.8 436.3,436.2 C435.3,435.6 435.8,433.3 435.9,432.1 C436.1,431.0 436.4,429.8 437.2,429.5 C438.0,429.1 439.5,429.5 440.6,430.0Z" fill="#d5e7c3"/>
<path d="M372.5,458.2 C372.1,458.8 372.0,459.2 371.3,459.5 C370.6,459.9 368.9,460.6 368.5,460.3 C368.0,460.0 368.7,458.5 368.7,457.8 C368.7,457.1 368.1,456.3 368.4,456.0 C368.7,455.8 369.7,456.4 370.6,456.4 C371.5,456.4 373.4,455.7 373.7,456.0 C374.0,456.3 372.9,457.6 372.5,458.2Z" fill="#d5e7c3"/>
<path d="M579.2,451.2 C576.9,451.2 573.9,453.2 572.6,452.4 C571.4,451.7 570.9,448.1 571.7,446.8 C572.4,445.6 575.3,445.6 577.2,444.8 C579.0,444.0 581.9,441.6 582.9,442.1 C583.8,442.5 582.1,445.7 582.7,447.5 C583.3,449.3 587.1,452.2 586.5,452.8 C585.9,453.4 581.5,451.3 579.2,451.2Z" fill="#d5e7c3"/>
<path d="M397.3,365.8 C396.8,366.2 395.7,366.1 394.8,366.3 C393.9,366.4 392.2,367.0 391.9,366.6 C391.6,366.3 392.8,364.9 393.0,364.3 C393.2,363.7 392.8,363.3 393.3,362.9 C393.7,362.4 395.0,361.3 395.8,361.4 C396.5,361.5 397.6,362.7 397.9,363.4 C398.1,364.2 397.8,365.3 397.3,365.8Z" fill="#d5e7c3"/>
<path d="M377.9,417.0 C377.2,416.4 376.4,415.2 376.5,414.5 C376.6,413.7 377.8,412.5 378.6,412.3 C379.4,412.1 380.6,413.0 381.3,413.3 C381.9,413.7 382.1,413.8 382.5,414.3 C383.0,414.9 384.2,416.1 384.0,416.6 C383.7,417.1 381.9,417.6 380.9,417.6 C379.9,417.7 378.6,417.5 377.9,417.0Z" fill="#d5e7c3"/>
<path d="M523.7,463.4 C523.5,464.0 522.9,464.9 522.3,465.0 C521.8,465.1 521.2,464.0 520.4,463.9 C519.6,463.8 518.2,464.5 517.7,464.2 C517.2,463.9 516.9,462.5 517.2,462.0 C517.5,461.5 518.9,461.4 519.6,461.2 C520.3,461.0 520.9,460.6 521.5,460.7 C522.1,460.8 523.1,461.1 523.4,461.6 C523.8,462.0 523.9,462.9 523.7,463.4Z" fill="#d5e7c3"/>
<path d="M516.3,446.4 C514.9,446.6 513.5,445.7 512.2,445.0 C510.8,444.2 507.7,442.7 507.9,441.9 C508.1,441.2 511.6,441.2 513.3,440.6 C515.1,440.0 517.3,437.9 518.5,438.4 C519.8,438.8 521.2,442.0 520.8,443.3 C520.4,444.7 517.7,446.1 516.3,446.4Z" fill="#d5e7c3"/>
<path d="M432.7,432.3 C432.1,432.8 431.6,432.7 430.7,433.0 C429.7,433.3 427.5,434.5 426.8,434.1 C426.2,433.8 426.7,432.0 426.8,430.9 C426.9,429.9 426.7,428.3 427.5,427.8 C428.3,427.2 430.7,427.4 431.7,427.8 C432.8,428.2 433.6,429.4 433.8,430.2 C434.0,430.9 433.2,431.8 432.7,432.3Z" fill="#d5e7c3"/>
<path d="M392.9,453.8 C392.4,453.2 392.7,452.1 393.0,451.4 C393.3,450.7 394.0,449.9 394.7,449.7 C395.4,449.5 396.6,449.8 397.4,450.2 C398.1,450.5 399.3,451.3 399.3,451.8 C399.2,452.3 397.8,452.5 397.2,453.1 C396.6,453.7 396.4,455.2 395.7,455.3 C394.9,455.5 393.3,454.5 392.9,453.8Z" fill="#d5e7c3"/>
<path d="M431.3,353.6 C431.8,354.5 428.8,356.8 427.8,358.0 C426.8,359.2 426.7,359.8 425.4,360.6 C424.1,361.5 421.1,363.6 420.0,363.2 C418.8,362.8 418.6,359.5 418.6,358.2 C418.5,356.9 419.6,356.9 419.8,355.6 C419.9,354.2 418.6,350.6 419.5,350.2 C420.3,349.7 422.9,352.2 424.9,352.8 C426.9,353.3 430.9,352.7 431.3,353.6Z" fill="#d5e7c3"/>
<path d="M594.4,454.9 C596.0,454.0 599.2,454.1 600.9,454.7 C602.5,455.2 604.1,456.7 604.6,458.2 C605.1,459.6 604.9,462.8 603.7,463.4 C602.6,464.0 599.8,462.5 597.7,462.0 C595.7,461.5 592.2,461.4 591.6,460.3 C591.1,459.1 592.9,455.9 594.4,454.9Z" fill="#d5e7c3"/>
<path d="M416.7,387.9 C417.3,389.7 418.2,392.6 417.1,393.4 C416.1,394.2 412.3,392.7 410.3,392.7 C408.2,392.7 405.6,393.9 404.9,393.3 C404.2,392.7 405.5,390.2 405.9,389.0 C406.3,387.8 406.3,387.2 407.5,386.1 C408.8,385.0 412.0,382.0 413.6,382.3 C415.1,382.6 416.1,386.0 416.7,387.9Z" fill="#d5e7c3"/>
<path d="M405.3,383.6 C404.8,385.0 405.7,386.9 404.9,387.4 C404.0,387.9 401.1,387.2 400.1,386.6 C399.1,385.9 399.3,384.7 398.9,383.7 C398.6,382.7 397.4,381.3 397.9,380.6 C398.4,379.9 400.2,379.6 401.9,379.4 C403.6,379.1 407.3,378.4 407.9,379.1 C408.5,379.8 405.8,382.2 405.3,383.6Z" fill="#d5e7c3"/>
<path d="M730.0,350.0 C738.0,345.8 758.3,345.0 770.0,345.0 C781.7,345.0 792.5,344.2 800.0,350.0 C807.5,355.8 810.5,372.0 815.0,380.0 C819.5,388.0 831.2,395.0 827.0,398.0 C822.8,401.0 801.2,400.2 790.0,398.0 C778.8,395.8 769.2,387.0 760.0,385.0 C750.8,383.0 741.3,388.5 735.0,386.0 C728.7,383.5 722.8,376.0 722.0,370.0 C721.2,364.0 722.0,354.2 730.0,350.0Z" fill="#cfe2b6"/>
<path d="M736.4,378.7 C735.4,379.6 733.2,379.2 731.1,379.9 C728.9,380.5 725.5,383.0 723.8,382.5 C722.0,382.0 720.9,378.7 720.5,376.9 C720.1,375.1 720.3,372.9 721.3,371.7 C722.3,370.5 725.0,370.4 726.7,369.8 C728.3,369.2 729.6,368.1 731.2,368.1 C732.9,368.1 735.4,368.8 736.4,369.9 C737.4,370.9 737.2,372.8 737.2,374.2 C737.2,375.7 737.4,377.7 736.4,378.7Z" fill="#c1d9a3"/>
<path d="M776.8,352.4 C775.6,351.2 774.3,349.0 774.9,347.6 C775.6,346.2 778.5,344.2 780.4,344.1 C782.4,343.9 785.8,345.3 786.7,346.6 C787.6,347.8 786.5,349.9 785.8,351.4 C785.0,352.8 783.5,354.9 782.0,355.1 C780.5,355.2 777.9,353.7 776.8,352.4Z" fill="#c1d9a3"/>
<path d="M745.7,377.2 C746.2,377.9 747.3,379.7 746.8,380.1 C746.4,380.5 744.3,379.5 743.0,379.5 C741.7,379.5 740.1,380.5 739.3,380.1 C738.5,379.7 737.6,377.5 738.0,376.9 C738.5,376.2 741.0,376.4 742.0,376.2 C743.0,375.9 743.6,375.4 744.2,375.5 C744.8,375.7 745.3,376.4 745.7,377.2Z" fill="#c1d9a3"/>
<path d="M823.2,395.1 C823.7,395.5 824.1,395.4 824.6,395.8 C825.0,396.3 826.1,397.3 826.0,397.8 C825.8,398.3 824.2,398.5 823.5,398.7 C822.7,398.9 821.8,399.1 821.3,398.9 C820.8,398.7 820.6,397.9 820.4,397.4 C820.2,397.0 820.2,396.8 820.0,396.4 C819.9,395.9 819.3,395.1 819.6,394.6 C819.8,394.1 821.0,393.4 821.6,393.4 C822.2,393.5 822.7,394.7 823.2,395.1Z" fill="#c1d9a3"/>
<path d="M763.5,355.5 C763.9,356.1 762.8,357.5 762.2,358.1 C761.5,358.8 760.6,359.4 759.6,359.6 C758.7,359.8 757.1,359.8 756.5,359.4 C755.9,358.9 755.9,357.7 755.9,357.0 C755.9,356.4 756.1,355.9 756.4,355.4 C756.7,354.9 757.1,354.0 757.8,353.8 C758.4,353.6 759.2,354.1 760.2,354.4 C761.1,354.7 763.2,354.8 763.5,355.5Z" fill="#c1d9a3"/>
<path d="M812.5,392.7 C811.8,391.5 808.2,388.5 808.6,387.9 C809.1,387.2 813.2,388.9 815.2,388.6 C817.2,388.2 819.4,385.5 820.6,385.8 C821.8,386.2 821.3,389.0 822.2,390.5 C823.0,392.1 826.3,394.0 825.8,394.9 C825.4,395.8 821.0,395.5 819.2,396.2 C817.5,396.9 816.3,399.5 815.2,399.3 C814.1,399.1 813.3,396.2 812.8,395.1 C812.4,394.0 813.2,393.9 812.5,392.7Z" fill="#c1d9a3"/>
<path d="M767.8,377.0 C767.0,377.3 765.3,376.4 764.2,376.0 C763.1,375.5 761.7,375.2 761.2,374.4 C760.6,373.5 760.3,371.8 760.8,371.0 C761.4,370.2 763.3,369.8 764.5,369.5 C765.8,369.3 767.3,369.1 768.2,369.5 C769.1,369.9 770.1,371.1 770.1,371.9 C770.2,372.6 768.9,373.1 768.5,374.0 C768.1,374.8 768.5,376.7 767.8,377.0Z" fill="#c1d9a3"/>
<path d="M768.9,343.8 C769.8,343.7 770.8,345.2 771.9,345.6 C773.0,346.1 775.1,346.0 775.4,346.6 C775.6,347.1 773.8,348.3 773.4,349.1 C773.0,349.9 773.4,351.2 772.8,351.5 C772.2,351.8 770.7,351.1 769.8,350.9 C768.9,350.7 768.4,350.7 767.6,350.3 C766.7,349.9 764.9,349.2 764.7,348.5 C764.5,347.8 765.9,346.9 766.6,346.1 C767.3,345.3 768.0,343.9 768.9,343.8Z" fill="#c1d9a3"/>
<path d="M795.9,362.0 C796.0,360.3 793.9,357.2 794.9,356.6 C795.8,355.9 799.4,357.9 801.5,357.9 C803.6,358.0 805.9,356.3 807.4,356.9 C808.9,357.4 810.1,359.7 810.5,361.2 C810.8,362.7 810.6,364.9 809.5,366.0 C808.5,367.1 805.9,367.5 804.2,367.8 C802.6,368.1 801.2,368.1 799.5,367.9 C797.8,367.7 794.4,367.5 793.8,366.5 C793.2,365.5 795.7,363.6 795.9,362.0Z" fill="#c1d9a3"/>
<path d="M737.3,359.0 C736.7,359.5 735.7,359.8 734.9,359.9 C734.0,360.0 732.8,360.2 732.1,359.8 C731.4,359.5 730.8,358.4 730.9,357.8 C730.9,357.2 732.2,356.9 732.4,356.3 C732.7,355.7 732.0,354.3 732.4,354.0 C732.8,353.7 734.1,354.4 735.0,354.6 C735.8,354.7 736.8,354.6 737.3,355.0 C737.9,355.4 738.2,356.3 738.2,357.0 C738.2,357.7 737.8,358.5 737.3,359.0Z" fill="#c1d9a3"/>
<path d="M751.4,361.7 C752.3,361.7 754.1,361.8 754.6,362.4 C755.1,362.9 754.3,364.0 754.2,365.0 C754.2,366.1 754.9,368.4 754.2,368.6 C753.5,368.9 751.5,366.8 750.2,366.5 C748.9,366.2 747.0,367.1 746.5,366.7 C746.0,366.3 746.7,364.6 747.1,363.9 C747.6,363.2 748.3,362.8 749.0,362.4 C749.7,362.1 750.4,361.7 751.4,361.7Z" fill="#c1d9a3"/>
<path d="M782.3,382.2 C783.5,382.4 784.4,383.6 785.0,384.5 C785.5,385.4 786.3,386.9 785.7,387.7 C785.2,388.4 783.3,389.1 781.8,389.1 C780.2,389.2 777.2,388.8 776.5,387.9 C775.9,386.9 776.9,384.4 777.9,383.5 C778.9,382.5 781.2,382.1 782.3,382.2Z" fill="#c1d9a3"/>
<path d="M736.6,352.7 C736.6,353.7 737.1,355.1 736.3,356.2 C735.5,357.2 733.8,358.4 732.0,358.8 C730.2,359.2 726.4,359.5 725.4,358.5 C724.5,357.5 726.1,354.5 726.2,353.0 C726.3,351.5 725.5,350.9 725.9,349.5 C726.2,348.1 726.7,345.4 728.2,344.6 C729.8,343.9 733.6,344.1 734.9,345.0 C736.2,345.9 735.9,348.7 736.2,350.0 C736.5,351.3 736.6,351.7 736.6,352.7Z" fill="#c1d9a3"/>
<path d="M784.4,350.9 C785.2,350.4 787.8,351.2 788.8,351.8 C789.9,352.4 790.6,353.4 790.7,354.5 C790.8,355.5 790.4,357.5 789.4,358.0 C788.3,358.5 785.5,358.1 784.5,357.5 C783.6,356.9 783.9,355.5 783.9,354.4 C783.9,353.3 783.6,351.3 784.4,350.9Z" fill="#c1d9a3"/>
<path d="M797.0,375.4 C797.4,374.5 798.9,373.1 799.8,373.1 C800.7,373.1 801.8,374.7 802.3,375.4 C802.8,376.2 803.2,376.7 803.0,377.5 C802.7,378.3 801.7,379.9 800.8,380.0 C799.8,380.2 797.8,379.2 797.2,378.4 C796.6,377.6 796.5,376.3 797.0,375.4Z" fill="#c1d9a3"/>
<path d="M759.3,387.6 C758.2,387.6 757.0,384.9 756.0,383.9 C755.0,382.9 753.5,382.2 753.5,381.4 C753.5,380.6 755.3,379.8 756.0,378.9 C756.6,377.9 756.4,376.6 757.5,375.8 C758.7,374.9 761.3,373.6 762.9,373.9 C764.5,374.2 766.7,376.2 767.0,377.5 C767.3,378.7 765.4,380.5 764.7,381.5 C764.0,382.6 763.6,382.8 762.7,383.8 C761.8,384.8 760.5,387.6 759.3,387.6Z" fill="#c1d9a3"/>
<path d="M750.0,349.4 C751.7,349.0 754.9,348.5 756.3,349.4 C757.7,350.4 758.9,354.0 758.1,355.1 C757.4,356.3 753.9,355.8 751.7,356.2 C749.5,356.6 745.9,358.1 744.9,357.4 C744.0,356.7 745.0,353.1 745.8,351.8 C746.7,350.5 748.2,349.8 750.0,349.4Z" fill="#c1d9a3"/>
<path d="M756.9,368.6 C755.6,369.7 753.6,369.8 751.7,370.1 C749.9,370.4 746.5,371.2 745.8,370.5 C745.0,369.7 747.3,367.0 747.1,365.5 C746.8,363.9 743.6,361.9 744.1,361.1 C744.6,360.2 748.4,360.2 749.9,360.4 C751.5,360.7 751.6,361.8 753.2,362.4 C754.8,363.0 758.7,363.0 759.3,364.0 C760.0,365.0 758.2,367.6 756.9,368.6Z" fill="#c1d9a3"/>
<path d="M750.6,359.4 C750.8,360.3 753.1,361.8 752.8,362.6 C752.6,363.4 750.1,364.2 749.1,364.0 C748.1,363.7 747.8,361.7 746.9,361.1 C746.0,360.5 744.1,361.1 743.6,360.6 C743.2,360.1 743.8,358.8 744.2,358.1 C744.7,357.4 745.3,356.8 746.1,356.3 C747.0,355.7 748.4,354.8 749.3,354.9 C750.3,355.1 751.8,356.2 752.0,356.9 C752.2,357.7 750.5,358.5 750.6,359.4Z" fill="#c1d9a3"/>
<path d="M824.5,388.6 C824.2,390.0 824.6,392.8 823.4,393.4 C822.2,394.1 819.6,392.6 817.5,392.4 C815.4,392.2 811.5,393.1 811.0,392.2 C810.4,391.3 814.2,388.8 814.0,387.0 C813.9,385.1 809.6,382.4 810.1,381.2 C810.6,380.1 814.9,380.1 817.1,379.9 C819.4,379.7 822.3,379.2 823.6,380.0 C825.0,380.9 825.0,383.6 825.2,385.0 C825.3,386.5 824.8,387.2 824.5,388.6Z" fill="#c1d9a3"/>
<path d="M750.1,381.1 C750.0,380.3 750.5,378.6 751.3,378.3 C752.0,378.0 753.7,379.1 754.5,379.5 C755.3,379.9 755.9,380.3 756.2,380.9 C756.4,381.5 756.5,382.3 756.1,382.9 C755.7,383.6 754.5,384.7 753.7,384.7 C753.0,384.6 752.4,383.4 751.8,382.8 C751.2,382.2 750.2,381.8 750.1,381.1Z" fill="#c1d9a3"/>
<path d="M795.7,364.1 C796.1,363.7 797.9,364.4 798.7,364.6 C799.4,364.8 799.5,365.0 800.3,365.3 C801.1,365.5 803.3,365.7 803.4,366.1 C803.6,366.6 801.9,367.6 801.3,368.0 C800.6,368.4 800.1,368.1 799.5,368.4 C798.8,368.8 798.2,369.9 797.3,370.0 C796.5,370.1 794.6,369.5 794.4,368.9 C794.2,368.3 796.2,367.4 796.4,366.6 C796.6,365.8 795.3,364.4 795.7,364.1Z" fill="#c1d9a3"/>
<path d="M742.8,346.1 C745.2,345.5 747.8,344.3 749.8,344.8 C751.7,345.4 754.1,348.0 754.3,349.5 C754.4,350.9 751.3,352.1 750.5,353.7 C749.7,355.3 750.7,358.3 749.5,359.1 C748.2,359.8 745.0,358.7 742.9,358.1 C740.7,357.5 737.9,356.8 736.6,355.3 C735.4,353.7 734.4,350.2 735.4,348.7 C736.4,347.2 740.4,346.8 742.8,346.1Z" fill="#c1d9a3"/>
<path d="M743.1,380.3 C742.7,379.8 742.8,378.6 743.2,378.0 C743.7,377.5 745.0,377.1 745.8,377.1 C746.6,377.1 747.2,377.5 747.9,378.0 C748.7,378.5 750.1,379.1 750.2,379.8 C750.2,380.5 749.0,381.9 748.2,382.0 C747.4,382.2 746.4,381.2 745.5,381.0 C744.6,380.7 743.4,380.8 743.1,380.3Z" fill="#c1d9a3"/>
<path d="M748.1,358.7 C748.9,357.8 749.3,356.4 750.4,356.1 C751.5,355.8 753.5,356.2 754.6,356.8 C755.8,357.4 756.8,358.5 757.2,359.5 C757.6,360.6 757.7,362.0 757.1,363.3 C756.5,364.5 755.1,366.8 753.6,367.1 C752.1,367.4 749.4,366.1 748.1,365.2 C746.7,364.3 745.4,362.8 745.4,361.7 C745.3,360.6 747.2,359.7 748.1,358.7Z" fill="#c1d9a3"/>
<path d="M780.0,412.0 C788.8,403.7 812.7,415.8 823.0,422.0 C833.3,428.2 836.5,440.7 842.0,449.0 C847.5,457.3 868.0,468.2 856.0,472.0 C844.0,475.8 782.7,482.0 770.0,472.0 C757.3,462.0 771.2,420.3 780.0,412.0Z" fill="#dae8c8"/>
<path d="M810.9,416.5 C811.6,416.1 813.6,416.5 814.3,417.0 C814.9,417.6 814.5,418.9 814.7,419.7 C814.9,420.5 815.7,421.3 815.3,421.7 C815.0,422.1 813.4,421.8 812.7,422.1 C811.9,422.5 811.6,423.4 810.8,423.6 C810.0,423.7 808.5,423.4 807.8,422.9 C807.1,422.4 806.4,421.0 806.8,420.4 C807.1,419.8 809.2,419.9 809.8,419.3 C810.5,418.6 810.1,416.9 810.9,416.5Z" fill="#c4dba8"/>
<path d="M784.0,462.6 C785.1,462.6 786.5,463.7 787.2,464.6 C787.9,465.4 788.7,466.4 788.3,467.7 C787.9,469.0 786.1,472.4 784.8,472.5 C783.5,472.6 781.2,469.5 780.5,468.1 C779.7,466.8 779.7,465.5 780.3,464.5 C780.9,463.6 782.8,462.6 784.0,462.6Z" fill="#c4dba8"/>
<path d="M778.9,457.9 C777.9,457.9 777.0,456.8 776.1,456.3 C775.2,455.8 773.3,455.3 773.3,454.7 C773.2,454.2 775.2,453.5 775.8,452.8 C776.5,452.1 776.5,450.7 777.3,450.5 C778.0,450.2 779.7,450.8 780.4,451.4 C781.2,451.9 781.4,452.7 781.7,453.5 C782.0,454.4 782.5,455.6 782.1,456.3 C781.6,457.0 779.9,457.9 778.9,457.9Z" fill="#c4dba8"/>
<path d="M780.3,463.9 C779.6,463.0 778.5,461.8 778.9,460.9 C779.2,460.0 781.2,458.5 782.4,458.4 C783.7,458.3 785.7,459.5 786.4,460.4 C787.2,461.2 787.2,462.8 786.7,463.7 C786.2,464.7 784.5,466.0 783.4,466.0 C782.3,466.0 781.1,464.7 780.3,463.9Z" fill="#c4dba8"/>
<path d="M850.8,472.2 C849.7,472.3 849.1,472.3 848.0,472.3 C846.9,472.2 844.5,472.5 844.1,472.0 C843.7,471.4 845.3,469.7 845.8,469.0 C846.3,468.3 846.7,468.2 847.1,467.7 C847.6,467.1 848.0,465.7 848.6,465.5 C849.3,465.4 850.3,466.3 851.3,466.7 C852.2,467.1 854.0,467.2 854.6,468.0 C855.2,468.8 855.2,470.6 854.6,471.3 C854.0,472.0 851.9,472.0 850.8,472.2Z" fill="#c4dba8"/>
<path d="M799.2,458.4 C799.8,458.3 800.7,458.1 801.2,458.3 C801.6,458.6 801.6,459.3 801.8,459.8 C802.0,460.3 802.3,461.0 802.1,461.6 C801.9,462.1 801.1,462.7 800.4,463.0 C799.6,463.3 798.2,463.7 797.6,463.4 C796.9,463.1 796.7,462.0 796.4,461.3 C796.1,460.7 795.6,460.0 795.8,459.6 C796.0,459.1 797.2,458.9 797.7,458.7 C798.3,458.5 798.7,458.4 799.2,458.4Z" fill="#c4dba8"/>
<path d="M826.9,462.7 C826.4,462.2 826.1,461.5 826.3,461.0 C826.4,460.4 827.4,459.4 827.9,459.3 C828.5,459.3 829.1,460.3 829.6,460.8 C830.1,461.2 831.2,461.6 831.1,462.2 C831.1,462.8 830.1,464.3 829.4,464.4 C828.7,464.5 827.5,463.3 826.9,462.7Z" fill="#c4dba8"/>
<path d="M774.5,460.7 C775.6,460.3 778.1,460.8 779.1,461.4 C780.0,462.1 780.2,463.9 780.1,464.8 C779.9,465.8 778.7,466.0 778.1,466.9 C777.6,467.9 777.7,470.2 776.7,470.7 C775.6,471.2 772.8,470.6 771.6,469.9 C770.5,469.2 769.4,467.3 769.6,466.3 C769.7,465.3 771.7,464.7 772.5,463.8 C773.3,462.9 773.4,461.1 774.5,460.7Z" fill="#c4dba8"/>
<path d="M814.2,440.0 C815.1,440.4 816.1,440.7 816.4,441.2 C816.7,441.8 816.0,442.5 816.0,443.3 C815.9,444.1 816.7,445.2 816.2,445.9 C815.7,446.5 813.9,447.5 813.0,447.3 C812.1,447.1 811.4,445.5 811.0,444.8 C810.6,444.1 811.0,443.8 810.7,443.2 C810.3,442.6 808.9,441.8 809.0,441.1 C809.1,440.4 810.3,439.2 811.2,439.0 C812.0,438.9 813.3,439.6 814.2,440.0Z" fill="#c4dba8"/>
<path d="M821.5,435.4 C820.5,434.4 820.7,432.6 820.9,431.3 C821.1,430.0 821.5,428.7 822.7,427.8 C823.9,426.9 827.0,425.5 828.1,425.9 C829.3,426.3 829.7,429.3 829.7,430.4 C829.7,431.6 828.7,431.6 828.3,432.7 C827.8,433.8 828.1,436.7 826.9,437.1 C825.8,437.6 822.5,436.4 821.5,435.4Z" fill="#c4dba8"/>
<path d="M809.7,451.1 C809.4,450.3 809.9,449.3 810.4,448.1 C811.0,446.9 811.9,444.2 813.0,444.1 C814.1,444.0 815.6,446.8 817.1,447.4 C818.7,448.1 821.8,447.4 822.3,448.2 C822.7,448.9 820.2,450.4 819.8,451.8 C819.5,453.2 820.8,456.0 820.0,456.4 C819.1,456.7 816.1,454.6 814.8,454.0 C813.4,453.5 812.9,453.7 812.0,453.2 C811.2,452.7 810.0,452.0 809.7,451.1Z" fill="#c4dba8"/>
<path d="M779.7,458.7 C780.4,459.6 782.5,460.5 782.4,461.5 C782.4,462.5 780.6,464.0 779.3,464.4 C777.9,464.8 775.8,464.5 774.5,464.0 C773.2,463.4 771.5,462.2 771.4,461.3 C771.3,460.4 773.5,459.5 774.1,458.6 C774.7,457.7 774.3,456.4 775.1,456.0 C775.9,455.6 778.0,455.7 778.7,456.1 C779.5,456.6 779.1,457.8 779.7,458.7Z" fill="#c4dba8"/>
<path d="M831.4,447.3 C832.4,447.2 833.9,448.1 834.8,448.7 C835.7,449.2 835.8,449.5 836.7,450.5 C837.6,451.5 840.4,453.4 840.1,454.5 C839.8,455.5 837.0,456.4 835.1,457.0 C833.1,457.6 830.2,458.8 828.3,458.3 C826.5,457.7 823.8,455.0 823.9,453.6 C823.9,452.1 827.5,450.6 828.8,449.6 C830.0,448.5 830.4,447.5 831.4,447.3Z" fill="#c4dba8"/>
<path d="M838.3,437.2 C838.4,438.3 836.0,439.8 834.7,440.4 C833.4,441.0 832.1,440.8 830.6,441.1 C829.1,441.4 826.9,442.7 825.6,442.3 C824.2,441.9 822.6,440.0 822.3,438.7 C822.1,437.5 823.1,435.6 824.1,434.9 C825.2,434.2 827.3,435.2 828.5,434.6 C829.8,434.1 830.5,431.9 831.4,431.8 C832.4,431.8 833.1,433.4 834.2,434.3 C835.4,435.2 838.3,436.2 838.3,437.2Z" fill="#c4dba8"/>
<path d="M769.7,261.1 C769.4,260.9 769.3,260.4 769.2,260.1 C769.1,259.8 769.1,259.5 769.2,259.2 C769.4,259.0 769.8,258.6 770.2,258.5 C770.7,258.4 771.4,258.4 772.0,258.6 C772.5,258.9 773.5,259.8 773.3,260.2 C773.2,260.6 771.7,260.7 771.1,260.9 C770.5,261.0 770.0,261.2 769.7,261.1Z" fill="#d6e7c4"/>
<path d="M731.4,232.0 C732.1,232.2 732.7,233.2 733.1,233.8 C733.5,234.5 734.1,235.1 734.0,235.8 C733.9,236.5 733.2,237.6 732.5,237.8 C731.8,238.0 731.0,237.1 729.9,237.0 C728.8,237.0 726.5,237.7 726.1,237.3 C725.7,236.9 726.9,235.3 727.3,234.6 C727.8,233.8 728.1,233.3 728.7,232.9 C729.4,232.5 730.7,231.9 731.4,232.0Z" fill="#d6e7c4"/>
<path d="M727.4,223.9 C727.3,223.6 727.2,223.5 727.2,223.3 C727.1,223.0 727.0,222.7 727.2,222.4 C727.4,222.0 727.8,221.3 728.3,221.2 C728.7,221.1 729.7,221.3 730.1,221.6 C730.5,221.9 730.8,222.5 730.8,223.0 C730.9,223.4 730.7,223.9 730.4,224.3 C730.2,224.6 729.7,224.9 729.2,225.0 C728.8,225.2 728.1,225.2 727.8,225.0 C727.5,224.8 727.5,224.2 727.4,223.9Z" fill="#d6e7c4"/>
<path d="M784.3,240.2 C784.8,240.8 785.1,241.5 785.0,242.1 C784.8,242.6 784.0,243.1 783.5,243.4 C782.9,243.7 782.4,243.8 781.6,243.9 C780.8,243.9 779.3,244.3 778.6,243.9 C778.0,243.5 777.3,242.0 777.6,241.5 C778.0,240.9 779.9,241.2 780.7,240.7 C781.4,240.2 781.7,238.5 782.3,238.4 C782.9,238.4 783.9,239.6 784.3,240.2Z" fill="#d6e7c4"/>
<path d="M788.8,248.9 C789.2,248.5 790.7,248.8 791.5,248.8 C792.3,248.8 793.3,248.7 793.6,249.0 C793.8,249.4 793.4,250.2 793.1,250.7 C792.7,251.3 792.3,252.2 791.6,252.3 C791.0,252.4 789.6,251.8 789.1,251.3 C788.6,250.7 788.4,249.3 788.8,248.9Z" fill="#d6e7c4"/>
<path d="M724.5,226.7 C724.8,227.2 724.8,228.5 724.4,229.0 C723.9,229.4 722.4,228.9 721.6,229.1 C720.7,229.3 719.7,230.3 719.1,230.1 C718.5,230.0 718.0,228.8 717.8,228.2 C717.6,227.5 717.7,226.7 718.1,226.2 C718.5,225.6 719.4,225.2 720.1,225.1 C720.8,225.0 721.6,225.3 722.3,225.6 C723.0,225.8 724.1,226.1 724.5,226.7Z" fill="#d6e7c4"/>
<path d="M794.7,242.9 C795.0,242.3 796.6,242.1 797.5,241.5 C798.4,241.0 799.2,239.6 800.0,239.7 C800.8,239.7 801.5,240.9 802.4,241.7 C803.3,242.4 805.6,243.5 805.5,244.2 C805.4,245.0 803.0,245.6 801.8,246.3 C800.7,246.9 799.4,248.3 798.4,248.2 C797.4,248.0 796.5,246.4 795.8,245.5 C795.2,244.7 794.5,243.6 794.7,242.9Z" fill="#d6e7c4"/>
<path d="M725.5,254.9 C725.7,254.0 726.9,253.7 727.8,252.9 C728.7,252.2 729.5,250.7 730.7,250.6 C732.0,250.5 735.0,251.5 735.3,252.4 C735.7,253.2 733.5,255.0 732.7,255.8 C731.9,256.6 731.7,256.7 730.6,257.2 C729.6,257.6 727.2,258.9 726.3,258.6 C725.5,258.2 725.2,255.8 725.5,254.9Z" fill="#d6e7c4"/>
<path d="M757.6,256.3 C758.3,256.8 759.0,257.7 758.9,258.4 C758.8,259.0 757.6,260.1 756.7,260.3 C755.9,260.5 754.5,260.0 753.7,259.4 C752.9,258.9 751.7,257.7 751.9,257.0 C752.1,256.2 753.8,255.0 754.8,254.9 C755.7,254.8 756.9,255.7 757.6,256.3Z" fill="#d6e7c4"/>
<path d="M761.0,246.4 C760.0,246.7 757.3,247.1 756.9,246.7 C756.5,246.2 758.0,244.3 758.6,243.6 C759.2,242.9 759.5,242.7 760.4,242.5 C761.3,242.3 763.5,242.0 763.9,242.4 C764.3,242.8 763.3,244.4 762.8,245.1 C762.4,245.7 762.0,246.2 761.0,246.4Z" fill="#d6e7c4"/>
<path d="M718.7,255.4 C717.8,255.1 715.8,254.3 715.8,253.7 C715.8,253.1 717.8,252.0 718.6,251.8 C719.5,251.5 720.4,251.9 721.0,252.2 C721.7,252.6 722.4,253.1 722.4,253.7 C722.5,254.2 721.9,255.2 721.3,255.5 C720.7,255.7 719.6,255.7 718.7,255.4Z" fill="#d6e7c4"/>
<path d="M768.2,237.1 C769.0,237.7 768.6,239.0 768.5,240.0 C768.3,240.9 767.8,242.7 767.1,242.8 C766.5,242.9 765.5,241.3 764.5,240.7 C763.6,240.0 761.4,239.8 761.3,239.0 C761.3,238.3 762.8,236.4 764.0,236.1 C765.1,235.8 767.5,236.4 768.2,237.1Z" fill="#d6e7c4"/>
<path d="M712.6,240.1 C713.0,241.4 710.1,242.9 709.0,244.2 C707.8,245.6 707.2,248.0 705.8,248.1 C704.5,248.3 701.8,246.4 700.9,245.0 C699.9,243.5 699.1,241.0 700.0,239.6 C701.0,238.3 704.4,236.8 706.5,236.9 C708.6,237.0 712.2,238.9 712.6,240.1Z" fill="#d6e7c4"/>
<path d="M775.2,243.6 C775.5,243.7 775.9,244.2 776.1,244.6 C776.3,245.0 776.6,245.9 776.3,246.2 C776.0,246.5 774.9,246.4 774.3,246.4 C773.8,246.3 773.3,246.2 773.1,245.9 C772.8,245.7 772.9,245.3 772.9,245.1 C772.8,244.8 772.6,244.4 772.8,244.2 C772.9,244.0 773.4,243.9 773.8,243.8 C774.2,243.7 774.8,243.5 775.2,243.6Z" fill="#d6e7c4"/>
<path d="M786.2,240.4 C785.8,240.3 786.0,239.4 785.6,239.0 C785.2,238.6 783.9,238.3 783.9,238.0 C783.9,237.6 785.1,237.3 785.6,237.0 C786.2,236.8 786.7,236.6 787.2,236.7 C787.7,236.7 788.5,237.1 788.7,237.4 C788.9,237.8 788.5,238.3 788.4,238.7 C788.3,239.1 788.4,239.8 788.1,240.1 C787.7,240.3 786.6,240.6 786.2,240.4Z" fill="#d6e7c4"/>
<path d="M710.5,219.2 C709.9,219.5 709.4,219.8 709.0,219.8 C708.5,219.7 708.4,219.3 707.7,219.2 C707.0,219.0 705.0,219.3 704.7,218.9 C704.3,218.6 705.3,217.4 705.8,217.0 C706.3,216.6 707.2,216.8 707.8,216.6 C708.4,216.4 708.6,215.8 709.3,215.7 C710.0,215.6 711.4,215.5 711.9,215.9 C712.4,216.3 712.8,217.5 712.6,218.0 C712.3,218.6 711.1,218.9 710.5,219.2Z" fill="#d6e7c4"/>
<path d="M749.8,226.0 C749.4,226.5 747.8,226.0 746.8,226.5 C745.9,227.0 744.9,229.1 744.2,229.0 C743.4,229.0 743.2,227.2 742.3,226.4 C741.5,225.6 739.2,224.9 739.1,224.1 C739.1,223.3 740.7,221.9 741.8,221.5 C742.8,221.0 744.3,221.0 745.2,221.2 C746.1,221.4 746.6,222.0 747.4,222.4 C748.1,222.8 749.2,223.0 749.6,223.6 C750.0,224.2 750.3,225.5 749.8,226.0Z" fill="#d6e7c4"/>
<path d="M781.5,263.1 C781.3,263.8 778.0,264.1 776.8,264.2 C775.6,264.3 775.3,263.7 774.2,263.6 C773.1,263.5 771.2,264.2 770.2,263.6 C769.3,263.0 768.0,260.7 768.6,260.0 C769.1,259.3 772.1,259.9 773.5,259.3 C774.9,258.7 776.1,256.3 776.9,256.4 C777.7,256.6 777.5,259.0 778.3,260.1 C779.1,261.2 781.8,262.4 781.5,263.1Z" fill="#d6e7c4"/>
<path d="M766.5,256.4 C765.7,256.7 764.4,255.9 763.0,255.7 C761.7,255.5 758.9,256.0 758.5,255.4 C758.1,254.8 760.1,253.1 760.6,252.1 C761.2,251.2 761.1,250.3 761.9,249.8 C762.6,249.4 763.9,249.4 765.2,249.5 C766.5,249.6 769.1,249.7 769.5,250.4 C769.9,251.1 768.0,252.7 767.5,253.7 C767.0,254.7 767.2,256.1 766.5,256.4Z" fill="#d6e7c4"/>
<path d="M818.2,251.7 C818.8,252.1 819.0,253.6 818.7,254.2 C818.4,254.8 816.9,255.0 816.3,255.3 C815.6,255.6 815.5,256.0 814.8,256.2 C814.0,256.4 812.2,256.7 811.8,256.3 C811.5,255.9 812.5,254.7 812.6,254.0 C812.6,253.2 811.7,252.0 812.1,251.6 C812.5,251.2 814.0,251.6 815.1,251.6 C816.1,251.6 817.6,251.2 818.2,251.7Z" fill="#d6e7c4"/>
<path d="M550.7,175.9 C550.2,174.8 549.5,173.1 550.2,172.3 C551.0,171.5 553.7,170.9 554.9,171.2 C556.1,171.4 557.5,173.1 557.6,173.9 C557.7,174.7 556.3,175.2 555.6,176.0 C554.9,176.8 554.0,178.6 553.1,178.6 C552.3,178.6 551.2,176.9 550.7,175.9Z" fill="#d9e8c4"/>
<path d="M364.4,100.7 C365.2,100.9 365.5,101.6 365.8,102.0 C366.1,102.5 366.2,102.7 366.2,103.3 C366.3,104.0 366.7,105.7 366.1,106.0 C365.5,106.4 363.6,105.8 362.8,105.4 C361.9,105.0 361.1,104.3 360.8,103.5 C360.6,102.8 360.7,101.4 361.3,100.9 C361.9,100.5 363.7,100.5 364.4,100.7Z" fill="#d9e8c4"/>
<path d="M497.8,159.6 C498.2,159.4 498.6,159.1 499.2,159.1 C499.7,159.1 500.9,159.2 501.1,159.6 C501.3,159.9 500.9,160.7 500.6,161.1 C500.4,161.5 499.9,161.6 499.5,161.9 C499.1,162.2 498.7,162.8 498.3,162.8 C498.0,162.8 497.6,162.2 497.2,161.9 C496.8,161.6 495.9,161.4 495.8,161.1 C495.8,160.9 496.6,160.4 496.9,160.1 C497.3,159.9 497.5,159.8 497.8,159.6Z" fill="#d9e8c4"/>
<path d="M744.5,115.1 C743.6,115.5 742.4,115.0 741.3,114.7 C740.1,114.3 738.0,113.9 737.8,113.2 C737.6,112.4 739.1,110.8 740.1,110.3 C741.0,109.9 742.5,110.0 743.6,110.3 C744.7,110.6 746.7,111.5 746.8,112.3 C747.0,113.1 745.5,114.7 744.5,115.1Z" fill="#d9e8c4"/>
<path d="M684.1,129.1 C685.3,129.5 687.1,129.7 687.4,130.3 C687.8,131.0 686.8,132.5 686.1,133.1 C685.4,133.8 684.3,134.1 683.2,134.3 C682.1,134.4 680.3,134.6 679.4,134.0 C678.6,133.5 677.7,131.8 677.9,130.8 C678.1,129.8 679.5,128.3 680.5,128.0 C681.5,127.7 683.0,128.7 684.1,129.1Z" fill="#d9e8c4"/>
<path d="M612.7,132.1 C613.6,132.4 614.3,132.1 614.6,132.4 C614.9,132.7 614.6,133.4 614.7,133.9 C614.8,134.4 615.2,134.9 615.0,135.4 C614.8,135.9 614.3,136.6 613.6,136.9 C612.9,137.2 611.5,137.6 610.8,137.4 C610.1,137.1 609.9,136.1 609.4,135.4 C608.9,134.7 608.0,134.0 608.0,133.3 C608.0,132.5 608.7,131.0 609.5,130.8 C610.2,130.6 611.9,131.8 612.7,132.1Z" fill="#d9e8c4"/>
<path d="M655.4,96.7 C655.2,96.8 654.3,96.3 654.0,96.2 C653.6,96.1 653.7,96.1 653.3,96.0 C652.9,96.0 651.7,96.0 651.6,95.9 C651.5,95.7 652.3,95.2 652.6,94.9 C652.9,94.6 652.9,94.3 653.2,94.2 C653.5,94.0 654.2,93.9 654.4,94.1 C654.7,94.2 654.6,94.7 654.8,95.0 C654.9,95.2 655.2,95.3 655.3,95.6 C655.4,95.8 655.6,96.6 655.4,96.7Z" fill="#d9e8c4"/>
<path d="M545.0,168.5 C543.8,169.0 541.7,169.6 541.1,169.2 C540.5,168.8 541.2,166.9 541.4,166.1 C541.7,165.3 541.8,164.6 542.5,164.2 C543.2,163.9 544.8,163.5 545.8,163.9 C546.8,164.3 548.6,165.8 548.5,166.6 C548.3,167.4 546.3,168.1 545.0,168.5Z" fill="#d9e8c4"/>
<path d="M597.2,143.1 C597.9,143.8 598.3,144.8 598.1,145.6 C597.9,146.3 596.9,147.6 596.0,147.8 C595.2,148.0 593.7,147.5 592.7,146.9 C591.8,146.2 590.4,144.9 590.6,144.1 C590.8,143.2 592.7,141.8 593.9,141.7 C595.0,141.5 596.5,142.5 597.2,143.1Z" fill="#d9e8c4"/>
<path d="M843.9,162.1 C843.3,162.1 842.2,161.8 842.0,161.4 C841.8,161.1 842.4,160.5 842.7,160.0 C843.0,159.6 843.4,158.7 843.8,158.7 C844.2,158.7 844.7,159.5 845.0,159.9 C845.4,160.4 846.2,161.1 846.0,161.4 C845.8,161.8 844.6,162.1 843.9,162.1Z" fill="#d9e8c4"/>
<path d="M546.0,138.9 C545.6,139.2 545.4,139.6 544.8,139.8 C544.2,140.0 543.1,140.3 542.4,140.1 C541.8,139.9 540.6,139.0 540.7,138.5 C540.8,137.9 542.4,137.3 543.0,137.0 C543.5,136.7 543.6,137.0 544.1,136.6 C544.6,136.3 545.1,135.1 545.7,135.0 C546.3,134.9 547.5,135.7 547.8,136.2 C548.0,136.7 547.7,137.6 547.4,138.0 C547.1,138.5 546.4,138.6 546.0,138.9Z" fill="#d9e8c4"/>
<path d="M537.0,100.4 C537.3,100.2 538.1,100.2 538.7,100.4 C539.2,100.5 539.9,100.7 540.1,101.1 C540.4,101.5 540.5,102.2 540.3,102.6 C540.1,102.9 539.2,102.9 538.7,103.1 C538.2,103.3 537.8,103.9 537.3,103.9 C536.9,103.8 536.3,103.1 536.2,102.8 C536.1,102.4 536.7,102.1 536.8,101.7 C536.9,101.3 536.7,100.7 537.0,100.4Z" fill="#d9e8c4"/>
<path d="M521.1,147.4 C520.1,147.2 519.6,145.9 519.3,145.2 C519.1,144.6 519.3,144.3 519.6,143.6 C519.9,143.0 520.5,141.3 521.3,141.2 C522.1,141.1 523.8,142.1 524.5,142.9 C525.2,143.8 526.0,145.7 525.4,146.4 C524.9,147.2 522.2,147.6 521.1,147.4Z" fill="#d9e8c4"/>
<path d="M588.5,100.4 C588.7,101.2 588.4,102.1 587.8,102.6 C587.3,103.0 586.0,103.0 585.3,102.8 C584.7,102.7 584.1,102.0 583.9,101.6 C583.7,101.1 583.8,100.6 584.3,100.0 C584.7,99.3 586.0,97.6 586.7,97.6 C587.4,97.7 588.3,99.6 588.5,100.4Z" fill="#d9e8c4"/>
<path d="M468.6,113.2 C468.6,114.2 469.2,115.8 468.5,116.4 C467.8,117.0 465.2,117.0 464.2,116.6 C463.3,116.2 463.2,114.7 462.9,113.9 C462.6,113.0 462.3,112.2 462.6,111.6 C463.0,111.0 464.1,110.5 465.1,110.3 C466.1,110.0 468.1,109.9 468.7,110.3 C469.3,110.8 468.6,112.2 468.6,113.2Z" fill="#d9e8c4"/>
<path d="M497.3,125.6 C498.1,125.7 499.4,125.5 499.6,125.8 C499.9,126.2 499.2,127.2 498.9,127.6 C498.6,128.1 498.4,128.2 497.8,128.5 C497.2,128.9 495.7,129.9 495.4,129.7 C495.0,129.5 495.8,128.1 495.7,127.4 C495.6,126.7 494.4,125.7 494.6,125.4 C494.9,125.1 496.4,125.6 497.3,125.6Z" fill="#d9e8c4"/>
<path d="M601.3,95.4 C601.0,95.6 600.0,95.4 599.5,95.4 C599.0,95.5 598.6,95.8 598.3,95.7 C598.0,95.6 597.6,95.0 597.6,94.7 C597.7,94.4 598.0,94.0 598.4,93.8 C598.7,93.5 599.1,93.3 599.6,93.3 C600.1,93.3 600.9,93.5 601.2,93.9 C601.5,94.2 601.6,95.1 601.3,95.4Z" fill="#d9e8c4"/>
<path d="M514.9,97.9 C514.6,97.5 514.0,97.3 514.0,97.0 C514.0,96.7 514.5,96.3 514.9,96.0 C515.2,95.7 515.9,95.1 516.3,95.2 C516.7,95.2 516.8,96.2 517.0,96.5 C517.2,96.9 517.5,96.9 517.6,97.2 C517.7,97.6 517.7,98.1 517.4,98.4 C517.1,98.7 516.3,99.2 515.9,99.1 C515.4,99.0 515.2,98.2 514.9,97.9Z" fill="#d9e8c4"/>
<path d="M597.1,171.4 C597.1,171.1 596.6,170.8 596.8,170.6 C596.9,170.4 597.4,170.2 597.8,170.2 C598.1,170.1 598.7,170.1 598.9,170.3 C599.2,170.5 599.3,170.9 599.4,171.2 C599.4,171.4 599.4,171.8 599.2,172.0 C599.0,172.3 598.6,172.4 598.2,172.5 C597.8,172.6 597.1,172.7 596.9,172.5 C596.7,172.3 597.1,171.8 597.1,171.4Z" fill="#d9e8c4"/>
<path d="M526.6,109.1 C526.9,108.6 527.7,108.5 528.0,108.2 C528.4,107.9 528.4,107.5 528.8,107.2 C529.3,106.9 530.5,106.2 531.0,106.3 C531.5,106.4 531.6,107.4 532.0,108.0 C532.4,108.6 533.4,109.3 533.3,109.8 C533.2,110.4 532.2,111.2 531.5,111.5 C530.8,111.8 529.9,111.4 529.1,111.4 C528.2,111.4 526.7,111.7 526.3,111.4 C525.9,111.0 526.3,109.6 526.6,109.1Z" fill="#d9e8c4"/>
<path d="M638.9,98.8 C638.2,99.4 636.4,99.4 635.2,99.3 C634.0,99.3 632.6,99.3 631.8,98.7 C631.1,98.1 630.3,96.5 630.6,95.7 C630.9,95.0 632.7,94.4 633.7,94.1 C634.7,93.9 635.5,93.8 636.5,94.1 C637.5,94.3 639.2,94.8 639.6,95.6 C640.0,96.4 639.7,98.2 638.9,98.8Z" fill="#d9e8c4"/>
<path d="M763.1,92.4 C763.1,93.0 763.9,93.8 763.5,94.2 C763.2,94.6 761.5,95.0 761.0,94.8 C760.4,94.6 760.1,93.4 760.0,92.9 C760.0,92.4 760.3,92.0 760.6,91.7 C760.9,91.4 761.1,91.4 761.7,91.2 C762.2,91.0 763.7,90.3 763.9,90.5 C764.2,90.7 763.2,91.7 763.1,92.4Z" fill="#d9e8c4"/>
<path d="M638.1,98.0 C638.0,97.5 637.8,97.0 638.2,96.6 C638.6,96.2 640.0,95.5 640.5,95.7 C641.1,95.9 641.5,97.1 641.5,97.6 C641.5,98.2 641.1,98.8 640.6,99.1 C640.1,99.5 638.8,99.9 638.4,99.7 C638.0,99.5 638.1,98.5 638.1,98.0Z" fill="#d9e8c4"/>
<path d="M719.3,104.4 C718.7,104.2 718.3,103.9 718.0,103.5 C717.6,103.2 717.0,102.7 717.0,102.3 C717.1,102.0 717.7,101.5 718.1,101.2 C718.5,101.0 719.0,101.0 719.6,100.9 C720.3,100.8 721.5,100.5 722.0,100.8 C722.4,101.1 722.3,102.0 722.2,102.7 C722.2,103.3 722.2,104.3 721.7,104.6 C721.2,104.9 719.9,104.6 719.3,104.4Z" fill="#d9e8c4"/>
<path d="M523.6,136.8 C524.0,136.6 524.9,136.8 525.4,137.0 C525.9,137.2 526.2,137.4 526.6,137.8 C527.1,138.2 528.0,138.9 527.9,139.4 C527.8,139.8 526.7,140.4 526.1,140.6 C525.4,140.7 524.6,140.5 524.1,140.3 C523.7,140.1 523.6,139.5 523.4,139.1 C523.3,138.8 522.9,138.5 522.9,138.1 C523.0,137.7 523.2,137.0 523.6,136.8Z" fill="#d9e8c4"/>
<path d="M452.2,97.4 C453.0,97.6 454.2,98.7 454.3,99.3 C454.3,100.0 452.9,100.4 452.3,101.1 C451.7,101.8 451.3,103.4 450.5,103.5 C449.7,103.6 448.2,102.5 447.6,101.8 C447.0,101.1 446.6,99.9 446.9,99.2 C447.2,98.6 448.5,98.3 449.4,98.0 C450.3,97.7 451.4,97.2 452.2,97.4Z" fill="#d9e8c4"/>
<path d="M844.8,160.2 C844.8,160.7 843.9,161.5 843.2,161.7 C842.6,161.9 841.6,161.7 841.0,161.5 C840.4,161.2 840.1,160.8 839.7,160.4 C839.3,159.9 838.5,159.1 838.8,158.8 C839.0,158.5 840.5,158.7 841.1,158.6 C841.7,158.4 842.0,157.8 842.3,157.8 C842.7,157.9 842.9,158.4 843.3,158.8 C843.7,159.2 844.9,159.7 844.8,160.2Z" fill="#d9e8c4"/>
<path d="M674.9,127.9 C674.9,127.4 675.1,127.5 674.9,127.0 C674.8,126.5 673.7,125.3 673.9,124.9 C674.2,124.6 675.6,124.8 676.3,124.9 C677.0,125.0 677.8,125.1 678.1,125.4 C678.3,125.8 678.0,126.5 678.0,126.9 C678.0,127.2 678.2,127.6 678.0,127.8 C677.8,128.0 677.5,127.8 677.0,128.2 C676.5,128.6 675.6,130.1 675.2,130.1 C674.9,130.0 675.0,128.4 674.9,127.9Z" fill="#d9e8c4"/>
<path d="M365.2,122.2 C365.7,122.2 366.3,122.5 366.7,122.8 C367.1,123.2 367.5,123.6 367.6,124.2 C367.6,124.7 367.6,126.1 367.0,126.4 C366.4,126.7 364.7,126.4 364.1,126.1 C363.4,125.7 363.1,124.8 363.0,124.3 C363.0,123.8 363.4,123.3 363.8,122.9 C364.2,122.6 364.7,122.2 365.2,122.2Z" fill="#d9e8c4"/>
<path d="M601.8,105.8 C602.5,106.2 603.3,107.7 603.1,108.4 C603.0,109.2 601.8,109.9 600.8,110.3 C599.8,110.7 597.9,111.2 597.2,110.8 C596.4,110.4 596.1,108.6 596.3,107.8 C596.6,107.0 597.6,106.4 598.5,106.1 C599.4,105.7 601.0,105.4 601.8,105.8Z" fill="#d9e8c4"/>
<path d="M615.2,137.7 C615.5,137.9 615.2,138.7 615.1,139.1 C615.1,139.5 615.3,139.9 615.0,140.2 C614.7,140.4 613.4,140.8 613.1,140.6 C612.8,140.4 613.0,139.5 613.1,139.1 C613.1,138.6 613.0,138.1 613.3,137.9 C613.7,137.6 614.9,137.5 615.2,137.7Z" fill="#d9e8c4"/>
<path d="M523.7,91.8 C524.1,92.4 524.8,92.5 524.8,93.0 C524.9,93.6 524.7,94.8 524.1,95.1 C523.6,95.5 521.9,95.4 521.3,95.0 C520.7,94.7 520.9,93.7 520.8,93.1 C520.6,92.6 520.0,92.2 520.3,91.6 C520.5,90.9 521.5,89.2 522.1,89.2 C522.6,89.2 523.2,91.1 523.7,91.8Z" fill="#d9e8c4"/>
<path d="M815.6,145.2 C816.0,145.0 817.3,144.7 817.7,145.0 C818.0,145.2 817.8,146.2 817.7,146.7 C817.5,147.1 817.1,147.5 816.6,147.7 C816.1,147.8 815.0,147.9 814.7,147.6 C814.5,147.4 814.8,146.6 815.0,146.2 C815.1,145.8 815.1,145.4 815.6,145.2Z" fill="#d9e8c4"/>
<path d="M835.7,128.4 C834.8,128.3 833.7,127.0 833.4,126.3 C833.1,125.6 833.5,124.8 833.8,124.3 C834.1,123.7 834.6,123.6 835.4,123.2 C836.2,122.8 837.5,121.8 838.3,122.0 C839.2,122.2 840.2,123.6 840.3,124.5 C840.5,125.3 840.1,126.7 839.3,127.3 C838.6,128.0 836.7,128.6 835.7,128.4Z" fill="#d9e8c4"/>
<path d="M377.4,114.3 C377.0,114.5 376.4,114.7 376.1,114.6 C375.8,114.5 375.8,114.0 375.7,113.7 C375.6,113.3 375.4,113.0 375.7,112.7 C376.0,112.4 376.9,111.8 377.4,111.8 C377.9,111.9 378.8,112.8 378.8,113.2 C378.8,113.6 377.9,114.1 377.4,114.3Z" fill="#d9e8c4"/>
<path d="M471.0,149.4 C470.8,148.8 472.1,147.8 472.7,147.4 C473.3,147.1 473.8,147.3 474.6,147.4 C475.4,147.5 477.2,147.4 477.5,147.9 C477.8,148.3 477.1,149.7 476.4,150.3 C475.7,150.9 474.3,151.4 473.4,151.2 C472.5,151.1 471.1,150.0 471.0,149.4Z" fill="#d9e8c4"/>
<path d="M427.1,140.7 C427.3,141.1 427.5,141.4 427.5,141.9 C427.5,142.4 427.5,143.5 427.1,143.6 C426.7,143.8 425.6,142.9 425.0,142.7 C424.4,142.5 423.9,142.7 423.5,142.5 C423.1,142.3 422.4,141.7 422.4,141.3 C422.5,140.9 423.3,140.7 423.7,140.2 C424.0,139.8 424.1,138.6 424.6,138.5 C425.0,138.4 426.1,139.1 426.5,139.5 C426.9,139.8 427.0,140.3 427.1,140.7Z" fill="#d9e8c4"/>
<path d="M518.5,162.1 C518.2,162.3 517.9,162.9 517.4,162.9 C516.9,163.0 515.9,162.8 515.6,162.5 C515.3,162.1 515.5,161.4 515.6,160.9 C515.7,160.3 515.6,159.5 516.1,159.1 C516.6,158.8 517.9,158.6 518.5,158.7 C519.2,158.9 519.9,159.7 520.0,160.2 C520.2,160.6 519.8,161.2 519.5,161.6 C519.3,161.9 518.9,161.9 518.5,162.1Z" fill="#d9e8c4"/>
<path d="M561.3,98.8 C560.7,98.6 560.1,98.7 559.7,98.3 C559.3,98.0 558.8,97.1 559.0,96.6 C559.3,96.2 560.4,95.7 561.0,95.7 C561.5,95.7 562.0,96.4 562.5,96.6 C563.0,96.8 563.7,96.8 563.9,97.0 C564.1,97.3 563.6,97.7 563.5,98.2 C563.3,98.7 563.3,99.7 563.0,99.8 C562.6,100.0 561.8,99.1 561.3,98.8Z" fill="#d9e8c4"/>
<path d="M576.1,135.3 C576.2,135.8 573.7,136.6 573.0,137.2 C572.3,137.8 572.5,139.0 572.0,139.0 C571.5,139.1 571.0,137.9 570.1,137.6 C569.3,137.3 567.1,137.4 566.9,137.0 C566.8,136.6 568.6,135.8 569.2,135.3 C569.8,134.7 569.9,134.0 570.5,133.9 C571.1,133.7 571.8,134.0 572.7,134.2 C573.7,134.5 576.1,134.8 576.1,135.3Z" fill="#d9e8c4"/>
<path d="M819.8,111.5 C819.3,111.4 818.1,111.7 817.9,111.5 C817.6,111.3 818.0,110.5 818.3,110.2 C818.5,109.8 818.8,109.5 819.2,109.3 C819.6,109.0 820.3,108.6 820.6,108.7 C820.9,108.8 821.0,109.7 821.2,110.0 C821.4,110.3 821.5,110.3 821.6,110.6 C821.8,110.9 822.5,111.7 822.3,111.9 C822.1,112.0 821.0,111.6 820.6,111.6 C820.1,111.5 820.2,111.5 819.8,111.5Z" fill="#d9e8c4"/>
<path d="M818.6,144.2 C818.1,143.5 817.8,142.8 817.9,141.9 C818.1,141.1 818.8,139.6 819.6,139.3 C820.5,139.0 822.1,139.8 823.1,140.4 C824.2,140.9 825.4,141.4 825.8,142.4 C826.1,143.3 826.0,145.2 825.2,145.9 C824.4,146.6 821.9,146.8 820.8,146.5 C819.7,146.2 819.1,145.0 818.6,144.2Z" fill="#d9e8c4"/>
<path d="M620.9,168.1 C620.4,167.4 620.2,166.1 620.6,165.6 C621.0,165.0 622.5,164.7 623.3,164.6 C624.1,164.5 625.2,164.6 625.6,165.0 C626.0,165.3 625.6,166.1 625.6,166.6 C625.6,167.2 626.2,167.8 625.8,168.3 C625.4,168.8 624.2,169.5 623.4,169.5 C622.6,169.5 621.4,168.7 620.9,168.1Z" fill="#d9e8c4"/>
<path d="M473.1,171.6 C472.7,171.6 471.6,171.4 471.5,171.1 C471.4,170.8 472.3,170.2 472.5,169.9 C472.7,169.5 472.4,169.3 472.7,169.1 C472.9,168.8 473.5,168.3 473.9,168.4 C474.3,168.4 474.5,169.0 474.8,169.3 C475.2,169.6 476.1,170.1 476.0,170.4 C475.9,170.7 474.7,170.7 474.3,170.9 C473.8,171.1 473.6,171.5 473.1,171.6Z" fill="#d9e8c4"/>
<path d="M618.4,133.9 C618.0,133.7 617.9,133.0 618.1,132.6 C618.2,132.3 618.8,132.1 619.2,131.9 C619.6,131.7 620.1,131.4 620.4,131.5 C620.7,131.5 620.8,132.1 621.1,132.4 C621.3,132.7 622.0,132.9 622.0,133.2 C622.0,133.5 621.6,134.1 621.2,134.2 C620.9,134.3 620.4,134.0 619.9,134.0 C619.4,133.9 618.7,134.1 618.4,133.9Z" fill="#d9e8c4"/>
<path d="M712.7,103.5 C713.0,104.3 711.8,105.2 711.4,106.0 C711.0,106.9 710.9,108.4 710.1,108.7 C709.3,109.0 707.2,108.4 706.4,107.8 C705.7,107.3 705.6,106.2 705.6,105.3 C705.5,104.4 705.3,103.1 706.0,102.5 C706.7,101.8 708.6,101.3 709.7,101.5 C710.8,101.6 712.4,102.7 712.7,103.5Z" fill="#d9e8c4"/>
<path d="M711.5,114.9 C710.8,114.3 710.6,112.3 711.2,111.7 C711.8,111.0 714.0,111.0 715.0,110.9 C716.0,110.8 716.6,111.0 717.2,111.3 C717.9,111.5 718.5,111.8 718.9,112.3 C719.3,112.8 720.0,113.9 719.7,114.3 C719.5,114.8 718.0,114.9 717.3,115.1 C716.5,115.2 716.2,115.4 715.3,115.3 C714.3,115.3 712.2,115.6 711.5,114.9Z" fill="#d9e8c4"/>
<path d="M747.9,92.7 C748.0,93.2 747.8,93.7 747.5,94.1 C747.2,94.5 746.6,95.0 746.1,95.1 C745.6,95.1 745.0,94.5 744.6,94.3 C744.2,94.0 744.0,93.8 743.8,93.5 C743.5,93.2 743.1,92.9 743.1,92.4 C743.0,91.9 742.9,91.0 743.3,90.6 C743.8,90.1 745.1,89.5 745.7,89.7 C746.4,89.8 746.9,90.9 747.2,91.4 C747.6,91.9 747.9,92.3 747.9,92.7Z" fill="#d9e8c4"/>
<path d="M561.5,112.1 C561.8,112.3 561.7,113.0 561.7,113.3 C561.7,113.6 561.5,113.7 561.4,113.9 C561.3,114.0 561.2,114.1 561.0,114.3 C560.8,114.5 560.3,114.8 560.0,114.8 C559.7,114.7 559.3,114.3 559.2,114.0 C559.2,113.7 559.4,113.5 559.5,113.2 C559.6,112.9 559.7,112.5 560.1,112.3 C560.4,112.1 561.2,111.9 561.5,112.1Z" fill="#d9e8c4"/>
<path d="M460.0,152.0 C460.5,151.7 461.2,150.8 461.6,150.9 C462.0,151.0 462.2,151.9 462.5,152.4 C462.8,152.9 463.4,153.3 463.3,153.8 C463.2,154.3 462.4,155.5 461.9,155.5 C461.4,155.6 460.8,154.3 460.2,153.9 C459.7,153.5 458.6,153.4 458.5,153.1 C458.5,152.8 459.5,152.4 460.0,152.0Z" fill="#d9e8c4"/>
<path d="M516.0,138.3 C515.7,138.0 515.8,137.8 515.8,137.5 C515.8,137.2 515.9,136.5 516.2,136.4 C516.5,136.3 517.3,136.7 517.5,136.9 C517.8,137.1 517.6,137.4 517.6,137.8 C517.5,138.2 517.5,139.0 517.2,139.0 C517.0,139.1 516.2,138.5 516.0,138.3Z" fill="#d9e8c4"/>
<path d="M424.7,113.6 C425.2,113.7 426.0,113.0 426.3,113.2 C426.6,113.3 426.5,114.0 426.5,114.4 C426.5,114.8 426.5,115.3 426.2,115.5 C425.9,115.7 425.2,115.6 424.8,115.6 C424.4,115.6 423.9,115.6 423.7,115.5 C423.5,115.3 423.6,114.9 423.6,114.7 C423.5,114.4 423.3,114.3 423.3,114.0 C423.3,113.7 423.2,112.9 423.4,112.8 C423.6,112.8 424.2,113.6 424.7,113.6Z" fill="#d9e8c4"/>
<path d="M416.7,136.8 C416.0,136.9 415.0,136.4 414.3,135.9 C413.7,135.3 412.7,134.3 412.9,133.8 C413.1,133.3 414.9,133.2 415.7,132.8 C416.4,132.4 416.6,131.8 417.4,131.6 C418.2,131.5 420.0,131.5 420.4,131.9 C420.8,132.4 420.0,133.8 419.6,134.4 C419.3,134.9 418.8,134.9 418.3,135.4 C417.8,135.8 417.3,136.8 416.7,136.8Z" fill="#d9e8c4"/>
<path d="M597.4,124.2 C597.7,123.8 598.3,123.9 598.9,123.6 C599.5,123.2 600.2,122.1 600.8,122.1 C601.4,122.0 602.3,123.0 602.6,123.5 C602.9,124.0 602.5,124.8 602.3,125.3 C602.1,125.8 601.9,126.0 601.5,126.5 C601.1,127.0 600.8,128.0 600.1,128.3 C599.3,128.5 597.6,128.5 597.1,128.1 C596.6,127.6 597.0,126.3 597.0,125.7 C597.1,125.0 597.0,124.5 597.4,124.2Z" fill="#d9e8c4"/>
<path d="M663.0,115.5 C662.4,115.4 661.4,114.4 661.4,113.9 C661.4,113.4 662.5,112.9 663.0,112.7 C663.5,112.4 663.9,112.2 664.5,112.3 C665.0,112.4 666.1,112.8 666.1,113.2 C666.2,113.6 665.5,114.1 665.0,114.5 C664.5,114.9 663.6,115.7 663.0,115.5Z" fill="#d9e8c4"/>
<path d="M639.4,149.7 C639.8,149.4 641.1,150.2 642.0,150.0 C642.9,149.9 643.9,148.9 644.6,149.1 C645.3,149.3 646.2,150.5 646.2,151.2 C646.2,151.8 645.2,152.5 644.6,153.1 C644.0,153.6 643.3,154.4 642.6,154.5 C641.9,154.5 640.8,153.8 640.3,153.4 C639.8,152.9 639.7,152.3 639.5,151.7 C639.4,151.1 639.0,150.0 639.4,149.7Z" fill="#d9e8c4"/>
<path d="M430.5,138.5 C431.1,138.7 432.5,139.6 432.4,140.1 C432.3,140.6 430.7,141.3 430.0,141.5 C429.3,141.7 428.8,141.3 428.2,141.4 C427.7,141.4 427.0,142.1 426.5,142.0 C425.9,141.9 425.3,141.3 424.9,140.8 C424.6,140.3 424.1,139.3 424.4,138.9 C424.7,138.5 426.2,138.4 426.9,138.4 C427.6,138.4 427.7,138.7 428.3,138.7 C428.9,138.7 429.8,138.2 430.5,138.5Z" fill="#d9e8c4"/>
<path d="M742.4,112.6 C741.7,113.2 740.5,114.1 739.8,114.0 C739.1,113.8 738.9,112.5 738.1,111.8 C737.4,111.2 735.0,110.7 735.1,110.2 C735.2,109.8 737.9,109.6 738.7,109.3 C739.6,109.0 739.5,108.8 740.2,108.7 C740.9,108.5 742.2,108.2 742.9,108.5 C743.5,108.9 744.2,110.0 744.1,110.7 C744.0,111.4 743.1,112.1 742.4,112.6Z" fill="#d9e8c4"/>
<path d="M449.0,93.9 C449.5,93.4 450.6,92.6 451.2,92.7 C451.8,92.8 452.2,94.0 452.6,94.6 C452.9,95.1 453.6,95.5 453.6,96.0 C453.6,96.5 453.0,97.3 452.5,97.5 C452.0,97.8 451.2,97.5 450.5,97.5 C449.7,97.5 448.2,97.8 447.8,97.5 C447.5,97.1 448.0,96.0 448.1,95.4 C448.3,94.8 448.5,94.3 449.0,93.9Z" fill="#d9e8c4"/>
<path d="M599.0,95.0 C598.5,94.8 597.4,94.1 597.4,93.7 C597.5,93.3 598.7,92.7 599.4,92.6 C600.1,92.4 601.1,92.3 601.7,92.6 C602.2,92.9 602.9,94.1 602.7,94.5 C602.5,95.0 601.0,95.0 600.4,95.1 C599.8,95.2 599.5,95.3 599.0,95.0Z" fill="#d9e8c4"/>
<path d="M819.6,100.1 C819.5,99.7 818.5,99.2 818.6,98.9 C818.7,98.7 819.6,98.7 820.1,98.6 C820.6,98.4 821.4,97.9 821.6,98.0 C821.8,98.2 821.3,99.2 821.6,99.5 C821.8,99.9 823.1,100.0 823.2,100.3 C823.3,100.6 822.5,101.1 822.0,101.3 C821.6,101.4 821.1,101.4 820.7,101.3 C820.2,101.3 819.6,101.3 819.5,101.1 C819.3,100.8 819.8,100.4 819.6,100.1Z" fill="#d9e8c4"/>
<path d="M546.1,119.3 C545.1,119.2 543.2,118.2 543.0,117.6 C542.8,117.0 544.4,116.0 545.0,115.5 C545.7,114.9 546.2,114.5 547.0,114.5 C547.8,114.5 549.6,114.9 549.9,115.5 C550.2,116.0 549.6,117.3 549.0,118.0 C548.3,118.6 547.1,119.3 546.1,119.3Z" fill="#d9e8c4"/>
<path d="M846.5,136.7 C846.2,136.5 846.3,135.5 846.4,135.1 C846.6,134.6 846.9,134.5 847.4,134.1 C847.9,133.7 848.9,132.7 849.3,132.8 C849.7,132.9 849.5,134.2 849.7,134.8 C849.9,135.4 850.5,135.8 850.3,136.1 C850.1,136.5 849.2,136.7 848.6,136.8 C848.0,136.9 846.9,137.0 846.5,136.7Z" fill="#d9e8c4"/>
<path d="M639.9,151.7 C640.2,152.2 641.1,153.1 640.9,153.5 C640.7,153.9 639.2,153.8 638.5,153.9 C637.9,153.9 637.5,153.7 636.9,153.5 C636.3,153.3 635.0,153.2 634.7,152.7 C634.5,152.3 634.9,151.2 635.3,150.8 C635.7,150.3 636.7,149.9 637.3,149.9 C637.9,149.9 638.6,150.4 639.0,150.8 C639.4,151.1 639.5,151.3 639.9,151.7Z" fill="#d9e8c4"/>
<path d="M400.1,109.3 C400.4,109.7 400.9,110.5 400.7,110.9 C400.4,111.3 399.3,111.8 398.6,111.8 C397.9,111.8 396.9,111.5 396.5,111.1 C396.1,110.7 396.3,109.9 396.4,109.4 C396.5,108.9 396.7,108.1 397.2,107.9 C397.7,107.7 398.7,107.8 399.2,108.1 C399.7,108.3 399.9,108.8 400.1,109.3Z" fill="#d9e8c4"/>
<path d="M828.8,110.1 C828.8,109.5 829.1,108.7 829.5,108.4 C830.0,108.1 830.7,108.3 831.5,108.3 C832.2,108.2 833.3,107.8 833.9,108.2 C834.4,108.5 834.9,109.7 834.7,110.3 C834.5,110.9 833.4,111.6 832.6,111.9 C831.8,112.1 830.5,112.3 829.9,112.0 C829.3,111.7 828.9,110.7 828.8,110.1Z" fill="#d9e8c4"/>
<path d="M878.3,127.2 C879.0,127.3 880.0,126.5 880.3,126.7 C880.7,126.8 880.3,127.7 880.4,128.3 C880.6,128.9 881.7,129.8 881.4,130.1 C881.1,130.4 879.6,129.8 878.8,130.0 C878.1,130.1 877.3,131.3 876.9,131.2 C876.5,131.1 876.7,129.9 876.3,129.3 C875.9,128.8 874.5,128.4 874.5,127.9 C874.5,127.4 875.5,126.5 876.2,126.4 C876.8,126.3 877.6,127.2 878.3,127.2Z" fill="#d9e8c4"/>
<path d="M489.7,145.1 C489.8,145.5 489.2,146.0 488.8,146.4 C488.4,146.8 487.8,147.4 487.2,147.4 C486.6,147.5 485.5,147.1 485.1,146.7 C484.7,146.2 484.6,145.4 484.8,144.8 C485.0,144.3 485.8,143.6 486.3,143.5 C486.9,143.3 487.7,143.7 488.3,144.0 C488.9,144.2 489.6,144.7 489.7,145.1Z" fill="#d9e8c4"/>
<path d="M737.4,127.2 C737.1,127.6 736.9,128.1 736.6,128.1 C736.2,128.2 735.4,127.8 735.2,127.5 C735.0,127.3 735.3,126.9 735.5,126.5 C735.6,126.1 735.8,125.4 736.3,125.3 C736.8,125.2 738.2,125.5 738.4,125.8 C738.6,126.1 737.7,126.9 737.4,127.2Z" fill="#d9e8c4"/>
<path d="M654.3,93.5 C654.0,93.8 652.7,93.5 652.1,93.5 C651.6,93.4 651.3,93.3 651.0,93.2 C650.7,93.0 650.7,92.7 650.5,92.4 C650.2,92.0 649.5,91.2 649.7,91.0 C649.9,90.8 650.9,91.2 651.6,91.0 C652.2,90.8 653.5,89.7 653.8,89.9 C654.2,90.0 653.6,91.3 653.7,91.9 C653.8,92.5 654.5,93.3 654.3,93.5Z" fill="#d9e8c4"/>
<path d="M617.6,120.0 C618.0,119.9 618.2,119.5 618.4,119.6 C618.6,119.6 618.7,120.0 618.9,120.3 C619.1,120.5 619.6,120.9 619.5,121.1 C619.4,121.3 618.8,121.4 618.4,121.5 C618.1,121.5 617.8,121.5 617.6,121.4 C617.4,121.3 617.5,121.1 617.3,120.9 C617.0,120.7 616.1,120.3 616.1,120.1 C616.2,120.0 617.2,120.1 617.6,120.0Z" fill="#d9e8c4"/>
<path d="M406.9,114.7 C407.7,115.3 408.1,116.0 408.1,116.9 C408.1,117.7 407.6,119.5 406.9,119.8 C406.1,120.1 404.4,119.0 403.5,118.5 C402.6,117.9 401.6,117.2 401.5,116.3 C401.5,115.5 402.4,113.6 403.3,113.3 C404.2,113.1 406.0,114.1 406.9,114.7Z" fill="#d9e8c4"/>
<path d="M465.5,123.6 C465.8,123.9 466.2,124.2 466.2,124.8 C466.2,125.3 466.3,126.7 465.7,127.0 C465.2,127.3 463.6,126.8 463.0,126.4 C462.3,126.1 461.9,125.3 461.9,124.8 C461.9,124.3 462.6,123.9 463.0,123.6 C463.4,123.3 463.8,123.2 464.2,123.2 C464.6,123.2 465.2,123.3 465.5,123.6Z" fill="#d9e8c4"/>
<path d="M459.4,154.5 C459.1,154.4 458.3,154.4 458.1,154.2 C458.0,154.0 458.4,153.5 458.7,153.2 C459.0,152.9 459.6,152.4 460.0,152.5 C460.4,152.5 460.9,153.2 461.0,153.5 C461.0,153.9 460.6,154.3 460.4,154.4 C460.1,154.6 459.8,154.5 459.4,154.5Z" fill="#d9e8c4"/>
<path d="M386.6,115.2 C387.2,114.6 388.6,114.3 389.5,114.3 C390.4,114.4 391.5,114.9 392.0,115.5 C392.4,116.1 392.8,117.4 392.3,118.0 C391.9,118.6 390.5,119.1 389.4,119.1 C388.3,119.2 386.2,118.9 385.7,118.3 C385.3,117.6 385.9,115.9 386.6,115.2Z" fill="#d9e8c4"/>
<path d="M505.5,140.6 C505.9,140.0 506.8,139.7 507.6,139.4 C508.3,139.2 509.5,138.8 510.3,139.1 C511.0,139.4 511.8,140.4 511.9,141.1 C512.0,141.8 511.5,143.0 510.9,143.4 C510.3,143.9 509.0,143.8 508.1,143.7 C507.2,143.7 505.7,143.5 505.3,143.0 C504.9,142.5 505.1,141.2 505.5,140.6Z" fill="#d9e8c4"/>
<path d="M657.6,100.0 C658.4,100.3 658.9,100.2 659.1,100.5 C659.4,100.8 659.1,101.3 659.0,101.8 C658.9,102.3 658.9,103.5 658.4,103.6 C658.0,103.7 657.0,102.9 656.6,102.5 C656.1,102.2 656.0,102.2 655.7,101.6 C655.3,101.0 654.1,99.3 654.4,99.1 C654.7,98.8 656.8,99.8 657.6,100.0Z" fill="#d9e8c4"/>
<path d="M651.1,128.9 C650.6,128.8 649.7,128.1 649.5,127.6 C649.3,127.1 649.7,126.1 650.1,125.7 C650.5,125.3 651.5,125.3 652.1,125.2 C652.7,125.2 653.4,125.2 653.8,125.4 C654.2,125.7 654.4,126.2 654.6,126.6 C654.7,127.1 655.0,127.8 654.8,128.1 C654.5,128.3 653.6,128.0 653.0,128.1 C652.3,128.3 651.7,129.0 651.1,128.9Z" fill="#d9e8c4"/>
<path d="M472.5,119.6 C472.0,119.7 470.7,119.3 470.5,119.0 C470.2,118.6 470.7,118.0 470.8,117.6 C471.0,117.2 471.1,116.9 471.5,116.7 C471.8,116.6 472.6,116.7 472.9,116.9 C473.2,117.1 473.5,117.7 473.5,118.1 C473.4,118.5 473.0,119.4 472.5,119.6Z" fill="#d9e8c4"/>
<path d="M634.2,118.7 C633.9,118.8 633.2,119.1 632.9,119.0 C632.5,118.8 632.2,118.1 632.3,117.8 C632.3,117.5 632.9,117.2 633.3,117.1 C633.6,117.0 634.0,117.2 634.3,117.3 C634.6,117.5 634.9,117.8 634.9,118.0 C634.9,118.2 634.5,118.5 634.2,118.7Z" fill="#d9e8c4"/>
<path d="M699.7,117.0 C699.9,117.6 700.4,118.8 699.9,119.3 C699.4,119.8 697.3,120.1 696.7,119.8 C696.0,119.5 696.2,118.1 696.0,117.4 C695.8,116.8 695.4,116.5 695.6,115.9 C695.8,115.3 696.5,113.7 697.2,113.7 C697.8,113.6 698.8,115.0 699.3,115.6 C699.7,116.1 699.6,116.4 699.7,117.0Z" fill="#d9e8c4"/>
<path d="M552.0,187.6 C551.8,187.2 551.7,186.2 552.1,186.0 C552.5,185.8 553.6,186.4 554.1,186.4 C554.7,186.5 554.8,186.3 555.4,186.4 C555.9,186.5 557.2,186.5 557.4,186.9 C557.6,187.2 556.8,187.9 556.6,188.4 C556.4,188.9 556.4,189.7 555.9,190.0 C555.4,190.4 554.1,190.7 553.6,190.4 C553.1,190.1 553.2,189.0 553.0,188.5 C552.7,188.0 552.1,188.0 552.0,187.6Z" fill="#d9e8c4"/>
<path d="M773.6,98.0 C773.7,98.5 772.6,99.2 771.9,99.7 C771.3,100.2 770.6,100.9 769.9,101.0 C769.1,101.0 767.9,100.5 767.4,100.1 C767.0,99.6 767.0,98.7 767.1,98.1 C767.1,97.5 767.2,96.7 767.7,96.4 C768.1,96.2 769.2,96.5 769.8,96.5 C770.4,96.6 770.7,96.5 771.4,96.8 C772.0,97.0 773.5,97.5 773.6,98.0Z" fill="#d9e8c4"/>
<path d="M531.2,129.3 C530.4,129.6 529.2,130.1 528.7,129.8 C528.2,129.6 528.2,128.4 528.1,127.9 C528.0,127.3 527.9,127.0 528.1,126.5 C528.3,126.0 529.0,125.1 529.5,125.0 C530.1,125.0 530.7,125.7 531.4,126.2 C532.1,126.7 533.8,127.3 533.7,127.8 C533.7,128.3 532.1,129.0 531.2,129.3Z" fill="#d9e8c4"/>
<path d="M397.3,97.2 C397.5,96.2 397.9,94.8 398.8,94.4 C399.8,94.0 402.1,94.2 402.9,94.8 C403.7,95.3 403.9,96.8 403.7,97.5 C403.5,98.3 402.9,98.7 401.9,99.3 C401.0,99.8 398.7,101.2 397.9,100.9 C397.1,100.5 397.2,98.3 397.3,97.2Z" fill="#d9e8c4"/>
<path d="M459.1,95.8 C458.7,95.4 458.7,94.5 458.9,94.0 C459.2,93.5 460.0,93.1 460.7,92.8 C461.3,92.6 462.2,92.4 462.9,92.6 C463.6,92.8 464.8,93.3 464.9,93.8 C464.9,94.2 463.3,94.7 463.0,95.2 C462.7,95.8 463.4,97.1 463.1,97.3 C462.8,97.5 461.6,96.8 460.9,96.5 C460.3,96.3 459.4,96.2 459.1,95.8Z" fill="#d9e8c4"/>
<path d="M526.3,131.2 C525.9,131.1 526.1,130.3 525.8,129.9 C525.5,129.5 524.6,129.1 524.6,128.8 C524.6,128.5 525.5,128.1 526.0,127.9 C526.5,127.7 527.3,127.4 527.8,127.5 C528.2,127.6 528.6,128.2 529.0,128.6 C529.3,129.0 529.9,129.7 529.8,130.1 C529.6,130.5 528.7,130.9 528.1,131.1 C527.5,131.2 526.7,131.4 526.3,131.2Z" fill="#d9e8c4"/>
<path d="M598.6,153.3 C598.0,153.6 596.8,153.6 596.2,153.4 C595.7,153.2 595.5,152.5 595.2,152.1 C594.9,151.7 594.4,151.5 594.3,151.1 C594.2,150.7 594.2,149.8 594.6,149.5 C595.0,149.2 595.9,149.3 596.6,149.3 C597.4,149.3 598.5,149.1 599.1,149.4 C599.6,149.8 599.9,150.8 599.9,151.4 C599.8,152.1 599.2,152.9 598.6,153.3Z" fill="#d9e8c4"/>
<path d="M468.9,89.8 C469.2,90.0 468.6,91.0 468.4,91.4 C468.1,91.7 467.7,91.7 467.4,91.9 C467.1,92.0 466.9,92.2 466.5,92.3 C466.2,92.3 465.5,92.4 465.1,92.2 C464.7,92.0 463.8,91.2 463.9,90.9 C464.1,90.6 465.6,90.6 466.1,90.5 C466.5,90.4 466.4,90.3 466.9,90.2 C467.4,90.1 468.7,89.7 468.9,89.8Z" fill="#d9e8c4"/>
<path d="M512.7,181.8 C512.1,181.8 511.4,181.4 510.9,181.0 C510.3,180.5 509.4,179.7 509.6,179.2 C509.7,178.7 511.1,178.3 511.7,178.1 C512.4,178.0 512.9,178.2 513.6,178.4 C514.2,178.5 515.5,178.8 515.7,179.2 C515.9,179.6 515.2,180.6 514.7,181.0 C514.2,181.4 513.4,181.8 512.7,181.8Z" fill="#d9e8c4"/>
<path d="M529.7,155.7 C530.1,155.9 530.3,156.6 530.4,157.1 C530.4,157.6 530.6,158.4 530.2,158.6 C529.9,158.9 528.9,158.8 528.3,158.8 C527.7,158.7 526.9,158.6 526.6,158.3 C526.3,157.9 526.3,157.1 526.5,156.8 C526.7,156.4 527.4,156.3 527.9,156.1 C528.5,155.9 529.3,155.5 529.7,155.7Z" fill="#d9e8c4"/>
<path d="M819.2,160.1 C818.5,160.0 817.8,159.5 817.4,159.2 C817.0,158.8 817.1,158.5 816.9,158.1 C816.6,157.7 816.0,157.4 816.1,157.0 C816.1,156.6 816.5,156.2 816.9,155.8 C817.4,155.3 818.3,154.3 818.8,154.3 C819.4,154.4 819.8,155.6 820.2,156.2 C820.5,156.7 820.7,156.8 820.9,157.4 C821.2,157.9 822.0,158.9 821.7,159.4 C821.4,159.8 819.9,160.1 819.2,160.1Z" fill="#d9e8c4"/>
<path d="M560.2,115.3 C559.9,115.5 559.0,115.9 558.7,115.7 C558.5,115.5 559.0,114.6 558.9,114.3 C558.9,113.9 558.3,113.8 558.3,113.5 C558.3,113.3 558.8,112.9 559.1,112.8 C559.4,112.7 559.9,112.9 560.1,113.0 C560.4,113.1 560.4,113.3 560.7,113.4 C561.0,113.6 561.7,113.7 561.8,114.0 C561.8,114.2 561.3,114.5 561.0,114.7 C560.8,114.9 560.6,115.1 560.2,115.3Z" fill="#d9e8c4"/>
<path d="M680.3,134.9 C681.3,135.0 683.6,134.5 684.3,135.0 C684.9,135.5 684.8,137.5 684.2,138.2 C683.7,138.8 681.8,138.8 680.8,139.1 C679.8,139.3 679.0,139.7 678.2,139.6 C677.3,139.4 675.9,138.8 675.6,138.2 C675.4,137.5 676.2,136.5 676.6,135.9 C677.0,135.3 677.5,134.6 678.2,134.4 C678.8,134.3 679.3,134.9 680.3,134.9Z" fill="#d9e8c4"/>
<path d="M580.2,149.2 C580.1,148.9 580.6,148.7 580.6,148.4 C580.6,148.1 580.0,147.6 580.2,147.4 C580.3,147.2 580.9,147.2 581.3,147.1 C581.7,147.0 582.5,146.7 582.7,146.9 C583.0,147.0 582.9,147.7 583.0,148.0 C583.0,148.4 583.2,148.6 583.1,148.9 C583.0,149.2 582.8,149.6 582.4,149.8 C582.1,150.0 581.4,150.3 581.0,150.2 C580.6,150.1 580.3,149.5 580.2,149.2Z" fill="#d9e8c4"/>
<path d="M462.3,166.6 C461.8,166.2 461.7,165.3 461.8,164.8 C461.8,164.3 462.4,164.0 462.7,163.5 C462.9,163.1 463.0,162.1 463.5,162.0 C463.9,161.9 464.6,162.6 465.3,162.8 C466.0,163.0 467.0,162.7 467.5,163.0 C468.0,163.4 468.3,164.5 468.0,164.9 C467.8,165.3 466.4,165.2 465.9,165.6 C465.3,166.1 465.2,167.3 464.6,167.5 C464.0,167.7 462.7,167.1 462.3,166.6Z" fill="#d9e8c4"/>
<path d="M687.8,119.0 C688.0,119.2 687.7,119.5 687.8,119.9 C687.9,120.2 688.6,121.1 688.4,121.3 C688.2,121.5 687.1,120.8 686.6,120.8 C686.0,120.8 685.3,121.5 685.0,121.4 C684.8,121.3 685.2,120.5 685.1,120.1 C684.9,119.7 684.1,119.1 684.2,118.9 C684.3,118.7 685.5,118.9 685.9,118.9 C686.4,118.9 686.5,118.8 686.8,118.8 C687.1,118.8 687.6,118.9 687.8,119.0Z" fill="#d9e8c4"/>
<path d="M821.7,144.5 C821.1,144.7 820.9,144.8 820.4,144.7 C819.9,144.7 818.9,144.8 818.5,144.5 C818.1,144.1 817.6,143.0 817.9,142.6 C818.2,142.2 819.5,142.0 820.2,141.9 C820.8,141.9 821.3,142.0 821.9,142.2 C822.6,142.5 824.1,143.1 824.1,143.5 C824.0,143.9 822.3,144.3 821.7,144.5Z" fill="#d9e8c4"/>
<path d="M509.0,118.6 C509.6,118.8 509.5,120.0 509.7,120.9 C509.9,121.7 510.9,123.1 510.3,123.7 C509.8,124.2 507.3,124.5 506.3,124.1 C505.2,123.7 504.0,122.3 504.0,121.5 C504.0,120.8 505.5,120.0 506.3,119.6 C507.1,119.1 508.5,118.4 509.0,118.6Z" fill="#d9e8c4"/>
<path d="M862.4,174.8 C862.0,174.3 863.4,172.8 863.2,171.9 C863.1,171.1 861.2,170.0 861.4,169.7 C861.6,169.4 863.7,170.1 864.6,170.0 C865.5,170.0 866.3,169.2 866.9,169.4 C867.5,169.6 868.2,170.6 868.2,171.1 C868.1,171.7 867.1,172.0 866.7,172.5 C866.3,173.1 866.5,174.3 865.8,174.7 C865.1,175.0 862.8,175.2 862.4,174.8Z" fill="#d9e8c4"/>
<path d="M777.6,113.9 C777.6,114.4 778.2,115.2 777.9,115.4 C777.7,115.5 776.6,115.1 776.2,115.0 C775.7,114.9 775.5,114.9 775.2,114.8 C774.9,114.6 774.6,114.5 774.3,114.1 C774.1,113.8 773.6,113.2 773.8,112.9 C773.9,112.5 774.6,112.1 775.1,112.0 C775.6,111.9 776.1,112.4 776.6,112.5 C777.0,112.6 777.7,112.6 777.9,112.8 C778.1,113.1 777.6,113.5 777.6,113.9Z" fill="#d9e8c4"/>
<path d="M355.2,98.4 C354.7,98.7 354.6,100.0 354.3,100.0 C354.0,100.0 353.5,98.9 353.3,98.6 C353.1,98.2 353.1,98.0 353.1,97.8 C353.0,97.5 353.0,97.3 353.2,97.1 C353.3,96.9 353.6,96.7 353.9,96.6 C354.2,96.5 354.6,96.3 355.0,96.3 C355.4,96.3 356.1,96.4 356.4,96.7 C356.7,97.0 357.1,97.7 356.9,98.0 C356.6,98.3 355.6,98.1 355.2,98.4Z" fill="#d9e8c4"/>
<path d="M499.5,144.8 C499.1,144.9 498.4,144.3 497.9,144.4 C497.3,144.6 496.5,145.7 496.2,145.6 C495.9,145.6 496.3,144.4 496.2,144.0 C496.1,143.6 495.4,143.2 495.5,143.0 C495.7,142.7 496.5,142.7 496.9,142.5 C497.3,142.4 497.6,141.9 498.0,142.0 C498.3,142.0 498.6,142.4 498.9,142.7 C499.3,143.0 500.0,143.2 500.1,143.5 C500.2,143.9 499.9,144.6 499.5,144.8Z" fill="#d9e8c4"/>
<path d="M876.0,137.2 C876.2,136.7 877.4,136.4 878.1,135.9 C878.7,135.5 879.3,134.4 879.9,134.4 C880.6,134.4 881.4,135.5 881.7,136.0 C882.1,136.6 882.2,137.2 882.0,137.6 C881.9,138.0 881.2,138.2 880.8,138.5 C880.3,138.8 880.0,139.4 879.5,139.5 C878.9,139.6 877.8,139.5 877.2,139.1 C876.6,138.7 875.9,137.7 876.0,137.2Z" fill="#d9e8c4"/>
<path d="M474.6,156.7 C475.1,157.2 475.9,158.0 475.6,158.7 C475.4,159.4 473.8,160.8 473.1,160.8 C472.4,160.7 472.0,159.3 471.2,158.4 C470.5,157.6 468.3,156.3 468.5,155.8 C468.8,155.4 471.7,155.4 472.7,155.6 C473.7,155.7 474.1,156.1 474.6,156.7Z" fill="#d9e8c4"/>
<path d="M875.4,136.4 C875.1,137.0 874.3,137.8 873.5,138.0 C872.7,138.1 871.2,137.7 870.6,137.2 C870.0,136.7 869.6,135.6 869.7,134.9 C869.9,134.2 870.7,133.2 871.4,133.0 C872.0,132.9 873.0,133.6 873.7,133.9 C874.4,134.1 875.2,134.1 875.5,134.6 C875.8,135.0 875.8,135.9 875.4,136.4Z" fill="#d9e8c4"/>
<path d="M623.3,94.3 C623.7,95.0 624.3,95.6 624.0,96.2 C623.8,96.8 622.4,98.2 621.7,98.1 C621.0,98.1 620.5,96.8 619.8,96.0 C619.2,95.2 617.4,94.1 617.7,93.5 C618.0,92.8 620.6,91.9 621.5,92.1 C622.4,92.2 622.9,93.6 623.3,94.3Z" fill="#d9e8c4"/>
<path d="M738.4,120.0 C738.0,120.4 737.7,120.8 737.2,120.9 C736.6,121.1 735.8,121.1 735.3,121.0 C734.7,120.8 734.3,120.2 734.0,119.8 C733.8,119.3 733.6,118.6 733.9,118.2 C734.2,117.9 735.2,118.0 735.7,117.8 C736.2,117.5 736.4,116.9 736.9,116.8 C737.5,116.7 738.5,116.9 738.9,117.2 C739.4,117.5 739.7,118.3 739.7,118.8 C739.6,119.3 738.8,119.6 738.4,120.0Z" fill="#d9e8c4"/>
<path d="M601.4,115.0 C601.2,115.4 600.3,116.0 599.8,116.0 C599.4,116.0 598.9,115.1 598.6,114.8 C598.2,114.5 598.1,114.7 597.8,114.4 C597.5,114.1 596.6,113.5 596.6,113.1 C596.7,112.7 597.7,112.2 598.2,112.2 C598.8,112.1 599.2,112.7 599.7,113.0 C600.2,113.2 601.1,113.1 601.4,113.4 C601.7,113.8 601.7,114.6 601.4,115.0Z" fill="#d9e8c4"/>
<path d="M661.2,118.4 C660.4,118.5 659.6,118.7 659.0,118.4 C658.4,118.2 657.7,117.4 657.6,116.9 C657.6,116.4 658.5,115.8 658.9,115.5 C659.3,115.1 659.5,114.9 660.0,114.7 C660.4,114.5 661.1,114.0 661.6,114.1 C662.0,114.2 662.3,114.8 662.7,115.2 C663.1,115.5 663.9,115.9 664.0,116.4 C664.1,116.9 664.0,117.9 663.5,118.3 C663.0,118.6 661.9,118.4 661.2,118.4Z" fill="#d9e8c4"/>
<path d="M483.1,210.9 C483.0,211.3 481.1,211.5 480.5,211.9 C479.8,212.3 479.6,213.4 479.2,213.4 C478.8,213.3 478.4,212.3 478.2,211.8 C477.9,211.4 477.7,211.0 477.9,210.7 C478.0,210.4 478.5,210.1 479.0,209.9 C479.5,209.7 480.2,209.4 480.9,209.5 C481.6,209.7 483.2,210.5 483.1,210.9Z" fill="#e2eed6"/>
<path d="M548.2,251.0 C548.5,251.9 549.8,253.2 549.3,253.9 C548.8,254.6 546.3,255.4 545.0,255.1 C543.7,254.9 541.7,253.6 541.3,252.6 C540.9,251.5 541.7,249.5 542.7,248.8 C543.7,248.1 546.2,247.9 547.1,248.3 C548.0,248.7 547.8,250.1 548.2,251.0Z" fill="#e2eed6"/>
<path d="M626.5,260.0 C626.7,259.5 629.4,259.7 630.3,259.3 C631.2,258.8 631.4,257.2 632.1,257.0 C632.9,256.9 634.0,257.8 634.9,258.3 C635.7,258.9 637.3,259.7 637.3,260.3 C637.3,261.0 635.5,261.8 634.8,262.4 C634.1,262.9 633.9,263.4 633.1,263.8 C632.3,264.2 630.6,265.0 630.0,264.7 C629.3,264.4 629.8,262.8 629.2,262.1 C628.6,261.3 626.3,260.4 626.5,260.0Z" fill="#e2eed6"/>
<path d="M547.1,243.3 C547.9,242.9 547.8,241.3 548.4,241.2 C549.0,241.1 550.0,242.1 550.5,242.6 C551.0,243.1 551.3,243.7 551.3,244.2 C551.3,244.7 550.8,245.3 550.4,245.6 C550.0,245.9 549.4,245.8 548.9,246.0 C548.4,246.1 548.0,246.5 547.4,246.5 C546.8,246.5 546.2,246.2 545.6,245.8 C544.9,245.3 543.3,244.2 543.5,243.8 C543.8,243.4 546.3,243.8 547.1,243.3Z" fill="#e2eed6"/>
<path d="M806.2,225.2 C806.2,225.6 805.2,226.4 804.6,226.6 C804.0,226.9 803.1,227.0 802.5,226.8 C801.9,226.5 800.8,225.8 800.8,225.2 C800.8,224.7 801.8,223.9 802.4,223.6 C803.0,223.4 803.9,223.6 804.5,223.8 C805.2,224.1 806.2,224.7 806.2,225.2Z" fill="#e2eed6"/>
<path d="M470.1,194.8 C469.6,194.3 469.9,193.5 469.9,193.0 C469.9,192.4 469.7,191.7 470.1,191.3 C470.5,190.9 471.8,190.4 472.3,190.5 C472.9,190.7 473.0,191.6 473.4,192.2 C473.8,192.7 474.6,193.2 474.6,193.8 C474.5,194.4 473.6,195.8 472.9,195.9 C472.1,196.1 470.5,195.3 470.1,194.8Z" fill="#e2eed6"/>
<path d="M696.7,241.8 C695.9,241.5 695.0,239.9 695.2,239.2 C695.3,238.6 696.8,238.4 697.6,238.0 C698.5,237.6 699.7,236.7 700.2,236.9 C700.7,237.1 700.4,238.5 700.4,239.2 C700.3,239.9 700.5,240.7 699.9,241.2 C699.3,241.6 697.4,242.1 696.7,241.8Z" fill="#e2eed6"/>
<path d="M456.7,197.3 C456.4,198.0 456.5,200.0 456.0,200.2 C455.5,200.3 454.5,198.7 453.6,198.2 C452.6,197.7 450.5,197.8 450.3,197.2 C450.1,196.7 451.7,195.5 452.4,195.1 C453.1,194.7 453.7,194.9 454.5,194.6 C455.3,194.4 456.9,193.2 457.4,193.5 C457.8,193.7 457.4,195.4 457.3,196.0 C457.2,196.7 456.9,196.6 456.7,197.3Z" fill="#e2eed6"/>
<path d="M418.8,201.3 C417.8,201.2 416.7,200.3 416.0,199.6 C415.3,198.8 414.4,197.5 414.7,196.7 C414.9,195.8 416.6,194.7 417.7,194.5 C418.7,194.4 420.1,195.3 420.8,195.8 C421.4,196.3 421.4,196.9 421.7,197.6 C421.9,198.3 422.6,199.5 422.2,200.1 C421.7,200.7 419.9,201.4 418.8,201.3Z" fill="#e2eed6"/>
<path d="M419.4,195.1 C419.9,195.3 420.0,196.5 420.2,197.0 C420.4,197.4 420.5,197.4 420.7,197.7 C420.8,198.1 421.4,198.9 421.2,199.1 C421.0,199.3 419.8,198.9 419.3,198.9 C418.9,198.8 418.8,198.8 418.4,198.8 C418.1,198.7 417.7,198.7 417.2,198.5 C416.8,198.2 415.8,197.5 415.8,197.1 C415.7,196.6 416.5,195.9 417.1,195.5 C417.8,195.2 418.9,194.8 419.4,195.1Z" fill="#e2eed6"/>
<path d="M383.0,239.0 C382.7,239.4 381.6,240.4 381.1,240.3 C380.6,240.2 380.6,239.1 380.2,238.5 C379.9,237.9 378.7,237.1 378.8,236.8 C379.0,236.6 380.6,236.8 381.3,236.9 C382.0,237.0 382.5,237.1 382.8,237.4 C383.1,237.8 383.3,238.5 383.0,239.0Z" fill="#e2eed6"/>
<path d="M681.7,191.7 C681.3,191.2 680.8,190.3 681.1,189.9 C681.4,189.5 682.4,189.5 683.3,189.4 C684.3,189.3 686.4,188.9 686.7,189.2 C686.9,189.6 685.3,190.8 684.8,191.5 C684.2,192.1 684.0,192.9 683.5,193.0 C683.0,193.0 682.1,192.2 681.7,191.7Z" fill="#e2eed6"/>
<path d="M479.0,263.9 C478.8,264.5 476.9,264.7 476.1,265.2 C475.3,265.6 475.0,266.7 474.4,266.7 C473.8,266.7 473.4,265.6 472.6,265.3 C471.7,264.9 470.0,265.2 469.4,264.6 C468.9,264.0 468.7,262.3 469.3,261.8 C470.0,261.4 472.1,262.4 473.1,262.0 C474.1,261.6 474.6,259.5 475.4,259.5 C476.1,259.4 476.9,260.8 477.5,261.6 C478.1,262.3 479.3,263.3 479.0,263.9Z" fill="#e2eed6"/>
<path d="M725.7,157.2 C726.5,157.7 727.2,158.3 727.4,159.0 C727.6,159.8 727.4,160.9 726.7,161.7 C726.0,162.5 723.9,163.9 723.0,163.6 C722.1,163.4 722.0,161.4 721.3,160.4 C720.7,159.4 718.9,158.4 719.1,157.6 C719.4,156.9 721.6,155.9 722.7,155.8 C723.8,155.7 724.9,156.6 725.7,157.2Z" fill="#e2eed6"/>
<path d="M823.3,169.7 C824.0,170.4 824.9,171.3 824.8,172.1 C824.7,172.8 823.7,173.7 822.9,174.2 C822.1,174.6 820.9,174.9 820.2,174.7 C819.4,174.6 819.1,173.7 818.5,173.2 C818.0,172.7 817.1,172.4 816.9,171.7 C816.6,171.0 816.4,169.6 817.1,169.0 C817.7,168.4 819.6,167.9 820.6,168.0 C821.6,168.2 822.6,169.1 823.3,169.7Z" fill="#e2eed6"/>
<path d="M382.8,172.6 C382.6,172.2 382.5,171.3 382.9,170.9 C383.3,170.4 384.5,170.0 385.1,170.1 C385.7,170.2 386.1,171.0 386.5,171.5 C386.9,172.0 387.7,172.6 387.6,173.1 C387.5,173.6 386.6,174.7 386.0,174.7 C385.4,174.8 384.5,173.9 384.0,173.6 C383.4,173.2 383.0,173.1 382.8,172.6Z" fill="#e2eed6"/>
<path d="M828.7,204.1 C829.4,204.8 829.9,206.6 829.3,207.4 C828.8,208.2 826.6,209.1 825.6,209.0 C824.6,208.8 824.3,207.3 823.5,206.7 C822.6,206.0 820.5,205.7 820.4,205.1 C820.3,204.6 822.2,203.5 823.0,203.2 C823.9,202.9 824.7,203.2 825.7,203.4 C826.6,203.5 828.1,203.5 828.7,204.1Z" fill="#e2eed6"/>
<path d="M807.6,219.1 C808.2,219.6 809.2,220.8 808.9,221.3 C808.7,221.8 807.0,221.8 806.0,221.9 C805.0,222.1 803.1,222.5 802.8,222.1 C802.5,221.8 803.7,220.5 804.1,219.8 C804.5,219.1 804.7,218.2 805.3,218.1 C805.9,218.0 807.0,218.6 807.6,219.1Z" fill="#e2eed6"/>
<path d="M537.7,219.2 C537.9,218.8 537.8,218.0 538.2,217.7 C538.6,217.5 539.8,217.5 540.2,217.8 C540.6,218.0 540.8,218.8 540.8,219.2 C540.8,219.6 540.5,220.0 540.2,220.3 C540.0,220.5 539.8,220.6 539.5,220.8 C539.2,220.9 539.1,221.1 538.6,221.2 C538.1,221.3 536.8,221.7 536.6,221.5 C536.3,221.3 536.9,220.3 537.1,219.9 C537.3,219.6 537.5,219.6 537.7,219.2Z" fill="#e2eed6"/>
<path d="M502.7,202.6 C502.3,202.6 501.2,202.9 500.9,202.7 C500.6,202.4 500.7,201.6 500.9,201.2 C501.2,200.8 501.7,200.3 502.2,200.2 C502.6,200.2 503.0,200.8 503.6,200.9 C504.1,201.0 505.2,200.8 505.4,201.0 C505.7,201.3 505.3,202.2 505.0,202.4 C504.7,202.7 503.9,202.6 503.5,202.6 C503.1,202.6 503.2,202.6 502.7,202.6Z" fill="#e2eed6"/>
<path d="M457.6,250.8 C457.5,251.6 457.3,253.4 456.7,253.5 C456.1,253.7 454.8,252.1 454.2,251.5 C453.6,250.9 453.0,250.5 453.0,250.1 C453.1,249.7 453.9,249.3 454.6,249.0 C455.4,248.7 457.0,248.0 457.5,248.3 C458.0,248.6 457.8,249.9 457.6,250.8Z" fill="#e2eed6"/>
<path d="M433.2,238.2 C432.6,238.5 431.0,239.1 430.5,238.8 C430.0,238.6 430.1,237.4 430.0,236.6 C429.8,235.8 429.0,234.5 429.4,234.1 C429.8,233.7 431.6,234.3 432.5,234.4 C433.5,234.5 434.7,234.5 435.0,234.9 C435.3,235.3 434.7,236.3 434.4,236.9 C434.1,237.4 433.9,237.9 433.2,238.2Z" fill="#e2eed6"/>
<path d="M723.5,168.4 C724.1,168.8 724.5,169.2 724.5,169.6 C724.6,170.1 724.3,170.6 723.7,171.1 C723.1,171.5 721.7,172.4 721.0,172.1 C720.3,171.9 719.4,170.6 719.4,169.8 C719.4,169.0 720.2,167.7 720.8,167.4 C721.5,167.2 722.9,168.0 723.5,168.4Z" fill="#e2eed6"/>
<path d="M764.1,160.6 C765.1,160.4 767.2,160.5 767.8,161.1 C768.4,161.7 768.3,163.5 767.8,164.1 C767.3,164.8 765.8,165.0 764.9,165.1 C764.0,165.1 762.8,164.9 762.4,164.5 C762.0,164.0 762.1,163.0 762.4,162.4 C762.6,161.7 763.2,160.8 764.1,160.6Z" fill="#e2eed6"/>
<path d="M649.1,235.6 C650.0,235.1 651.8,235.2 653.1,235.4 C654.3,235.7 656.0,236.4 656.5,237.2 C656.9,238.1 656.2,239.5 655.6,240.4 C655.0,241.3 653.8,242.2 652.6,242.4 C651.5,242.6 649.4,242.3 648.6,241.7 C647.8,241.0 647.8,239.6 647.8,238.6 C647.9,237.6 648.2,236.1 649.1,235.6Z" fill="#e2eed6"/>
<path d="M420.0,182.7 C420.6,182.8 421.9,182.7 422.2,183.1 C422.6,183.5 422.5,184.5 422.2,184.9 C421.8,185.3 420.6,185.1 420.0,185.3 C419.5,185.5 419.1,186.2 418.7,186.2 C418.4,186.2 418.0,185.4 417.8,185.0 C417.6,184.7 417.7,184.4 417.7,184.1 C417.6,183.8 417.5,183.4 417.7,183.2 C417.9,183.0 418.4,182.8 418.7,182.7 C419.1,182.6 419.4,182.7 420.0,182.7Z" fill="#e2eed6"/>
<path d="M766.4,247.7 C766.2,248.3 765.8,249.0 764.8,249.3 C763.8,249.6 761.0,250.0 760.6,249.5 C760.1,249.0 761.6,247.1 762.2,246.4 C762.8,245.6 763.3,244.9 764.0,244.8 C764.7,244.7 765.9,245.4 766.3,245.9 C766.7,246.4 766.7,247.2 766.4,247.7Z" fill="#e2eed6"/>
<path d="M385.3,172.2 C385.8,172.8 386.4,173.3 386.3,174.0 C386.3,174.7 385.7,176.3 384.9,176.5 C384.1,176.8 382.6,176.0 381.7,175.6 C380.7,175.1 379.4,174.5 379.2,173.8 C379.0,173.0 379.5,171.5 380.2,171.0 C381.0,170.5 382.7,170.5 383.6,170.7 C384.4,170.9 384.9,171.7 385.3,172.2Z" fill="#e2eed6"/>
<path d="M418.4,186.8 C418.5,186.0 419.2,184.2 420.2,183.9 C421.2,183.5 423.7,183.9 424.4,184.5 C425.1,185.1 424.3,186.7 424.3,187.5 C424.2,188.3 424.7,188.8 424.3,189.3 C423.9,189.9 422.6,190.8 421.9,190.7 C421.1,190.7 420.3,189.7 419.7,189.0 C419.2,188.4 418.3,187.7 418.4,186.8Z" fill="#e2eed6"/>
<path d="M809.3,198.8 C809.6,198.4 810.6,198.2 811.5,198.1 C812.4,197.9 814.0,197.7 814.5,198.1 C814.9,198.5 814.5,199.9 814.2,200.5 C814.0,201.1 813.5,201.3 813.1,201.6 C812.6,201.9 812.2,202.2 811.7,202.2 C811.2,202.3 810.4,202.2 810.0,201.9 C809.7,201.6 809.8,201.1 809.7,200.6 C809.6,200.1 809.0,199.2 809.3,198.8Z" fill="#e2eed6"/>
<path d="M758.7,191.1 C759.6,190.8 760.3,190.0 760.8,190.1 C761.3,190.2 761.2,191.2 761.7,191.9 C762.1,192.6 763.7,193.7 763.4,194.3 C763.1,194.9 760.9,195.6 760.1,195.5 C759.3,195.3 759.2,193.9 758.5,193.3 C757.8,192.8 755.8,192.4 755.8,192.0 C755.9,191.6 757.9,191.4 758.7,191.1Z" fill="#e2eed6"/>
<path d="M646.4,202.4 C646.5,201.7 646.7,201.3 647.1,200.7 C647.5,200.0 648.1,198.4 648.8,198.3 C649.5,198.2 650.6,199.4 651.4,200.0 C652.2,200.5 653.6,201.0 653.7,201.6 C653.7,202.2 652.6,203.1 651.9,203.5 C651.3,203.9 650.7,203.7 649.8,204.0 C648.9,204.2 647.1,205.4 646.6,205.1 C646.0,204.9 646.3,203.2 646.4,202.4Z" fill="#e2eed6"/>
<path d="M748.4,227.2 C747.8,227.2 747.0,227.5 746.3,227.2 C745.5,226.9 743.9,225.8 743.9,225.1 C744.0,224.4 745.4,223.5 746.5,223.0 C747.5,222.5 749.4,221.9 750.2,222.3 C751.0,222.6 751.3,224.3 751.3,225.1 C751.3,225.8 750.6,226.4 750.1,226.8 C749.6,227.1 749.1,227.1 748.4,227.2Z" fill="#e2eed6"/>
<path d="M802.0,165.3 C802.3,165.6 801.8,166.5 801.7,167.0 C801.5,167.4 801.5,167.7 801.2,167.9 C801.0,168.1 800.5,168.1 800.1,168.1 C799.7,168.2 799.1,168.3 798.8,168.1 C798.6,167.9 798.9,167.6 798.7,167.1 C798.5,166.7 797.6,165.7 797.8,165.4 C798.0,165.1 799.2,165.3 799.9,165.2 C800.6,165.2 801.7,165.0 802.0,165.3Z" fill="#e2eed6"/>
<path d="M815.8,162.3 C816.6,162.2 817.8,162.3 818.3,162.7 C818.9,163.1 819.1,163.9 819.2,164.6 C819.3,165.3 819.4,166.8 818.9,167.1 C818.3,167.5 816.9,166.9 815.7,166.8 C814.6,166.6 812.3,166.8 811.9,166.2 C811.5,165.7 812.6,164.0 813.2,163.3 C813.8,162.7 814.9,162.4 815.8,162.3Z" fill="#e2eed6"/>
<path d="M457.1,250.8 C458.1,251.2 460.0,252.7 459.7,253.3 C459.5,253.9 456.5,253.7 455.5,254.4 C454.5,255.1 454.6,257.2 453.7,257.4 C452.9,257.5 451.2,256.3 450.5,255.6 C449.9,254.8 449.4,253.6 449.7,252.9 C450.0,252.2 451.5,251.9 452.3,251.5 C453.0,251.2 453.3,251.1 454.1,251.0 C454.9,250.8 456.2,250.4 457.1,250.8Z" fill="#e2eed6"/>
<path d="M810.6,208.0 C810.0,208.4 808.5,208.2 807.8,208.0 C807.1,207.8 806.5,207.2 806.4,206.7 C806.2,206.2 806.3,205.4 806.8,205.0 C807.2,204.6 808.3,204.2 809.1,204.3 C809.8,204.4 811.2,205.0 811.5,205.6 C811.8,206.2 811.2,207.6 810.6,208.0Z" fill="#e2eed6"/>
<path d="M567.8,245.5 C568.2,245.8 568.7,246.4 568.6,246.7 C568.5,247.0 567.4,247.0 567.1,247.3 C566.7,247.6 566.7,248.5 566.3,248.6 C565.9,248.7 565.3,248.2 564.8,248.0 C564.3,247.8 563.2,247.5 563.2,247.2 C563.2,246.8 564.6,246.4 564.9,246.1 C565.3,245.8 565.0,245.3 565.3,245.2 C565.5,245.0 566.1,245.2 566.5,245.3 C566.9,245.4 567.5,245.3 567.8,245.5Z" fill="#e2eed6"/>
<path d="M789.4,195.7 C788.9,195.2 788.2,193.6 788.6,193.3 C789.0,192.9 791.0,193.3 791.7,193.5 C792.5,193.7 792.9,194.1 793.1,194.4 C793.3,194.8 793.2,195.4 792.9,195.8 C792.6,196.2 791.9,196.6 791.3,196.6 C790.7,196.6 789.8,196.3 789.4,195.7Z" fill="#e2eed6"/>
<path d="M532.9,198.3 C533.3,198.1 533.8,197.6 534.2,197.6 C534.7,197.6 535.5,198.0 535.7,198.4 C535.9,198.7 535.5,199.3 535.4,199.7 C535.3,200.1 535.3,200.4 535.0,200.7 C534.8,201.0 534.3,201.7 533.9,201.7 C533.4,201.8 532.7,201.3 532.4,201.0 C532.1,200.7 532.2,200.3 532.1,199.9 C531.9,199.6 531.3,199.1 531.5,198.8 C531.6,198.6 532.4,198.5 532.9,198.3Z" fill="#e2eed6"/>
<path d="M501.7,192.5 C501.5,191.9 500.7,191.1 500.9,190.6 C501.1,190.0 502.3,189.5 503.2,189.3 C504.1,189.1 505.3,189.1 506.2,189.4 C507.1,189.8 508.7,190.8 508.6,191.4 C508.5,192.0 506.3,192.3 505.6,193.1 C505.0,193.8 505.4,195.5 504.8,195.7 C504.3,195.9 502.9,194.6 502.3,194.1 C501.8,193.5 502.0,193.1 501.7,192.5Z" fill="#e2eed6"/>
<path d="M765.6,191.2 C765.4,191.5 765.5,192.0 765.2,192.1 C764.9,192.3 764.1,192.3 763.8,192.2 C763.5,192.0 763.8,191.4 763.5,191.1 C763.2,190.8 762.1,190.6 762.0,190.3 C762.0,189.9 762.6,189.4 763.0,189.1 C763.4,188.9 764.0,188.6 764.6,188.6 C765.1,188.5 766.1,188.7 766.3,189.0 C766.6,189.3 766.2,190.1 766.1,190.5 C765.9,190.8 765.7,190.9 765.6,191.2Z" fill="#e2eed6"/>
<path d="M535.9,226.0 C534.8,226.6 532.4,226.5 531.4,226.1 C530.4,225.6 530.1,224.0 530.1,223.2 C530.1,222.4 530.8,221.9 531.6,221.3 C532.3,220.7 533.6,219.6 534.7,219.8 C535.9,220.0 538.1,221.4 538.3,222.4 C538.5,223.5 537.1,225.4 535.9,226.0Z" fill="#e2eed6"/>
<path d="M490.7,263.9 C490.9,264.5 490.2,265.5 489.7,266.2 C489.1,266.9 488.2,268.1 487.2,268.2 C486.2,268.3 484.3,267.5 483.8,266.8 C483.2,266.1 483.8,264.8 484.1,264.0 C484.4,263.3 485.0,262.3 485.7,262.1 C486.4,261.9 487.3,262.6 488.2,262.9 C489.0,263.2 490.5,263.4 490.7,263.9Z" fill="#e2eed6"/>
<path d="M602.8,189.6 C602.6,189.9 602.4,189.9 602.0,190.2 C601.7,190.4 600.9,191.4 600.7,191.3 C600.4,191.2 600.5,190.2 600.3,189.8 C600.1,189.3 599.4,189.2 599.4,188.7 C599.4,188.3 599.6,187.3 600.1,187.1 C600.6,186.9 601.8,187.1 602.3,187.4 C602.8,187.7 603.1,188.3 603.1,188.6 C603.2,189.0 603.0,189.4 602.8,189.6Z" fill="#e2eed6"/>
<path d="M414.2,212.2 C414.6,212.0 415.3,211.8 415.8,211.8 C416.4,211.9 417.1,212.4 417.3,212.8 C417.5,213.1 417.2,213.8 417.0,214.2 C416.8,214.5 416.3,214.7 416.0,214.9 C415.6,215.0 415.4,214.8 415.0,214.9 C414.5,215.0 413.6,215.6 413.3,215.5 C413.0,215.4 413.0,214.6 413.0,214.2 C413.1,213.8 413.2,213.5 413.4,213.2 C413.6,212.9 413.8,212.5 414.2,212.2Z" fill="#e2eed6"/>
<path d="M806.3,197.1 C805.2,197.1 803.4,198.4 802.9,198.0 C802.4,197.7 803.5,196.0 803.4,195.2 C803.3,194.4 802.4,193.9 802.6,193.1 C802.7,192.4 803.5,190.9 804.3,190.7 C805.1,190.5 806.7,191.5 807.5,192.0 C808.3,192.4 808.6,192.7 809.3,193.3 C810.0,193.9 811.7,194.7 811.7,195.5 C811.8,196.3 810.5,197.7 809.6,197.9 C808.7,198.2 807.4,197.1 806.3,197.1Z" fill="#e2eed6"/>
<path d="M822.5,226.9 C822.1,226.4 821.4,225.9 821.6,225.4 C821.7,224.9 822.7,224.1 823.3,224.1 C823.9,224.0 824.4,224.8 824.9,225.2 C825.4,225.7 826.6,226.3 826.5,226.8 C826.4,227.3 824.9,228.1 824.3,228.1 C823.6,228.1 823.0,227.3 822.5,226.9Z" fill="#e2eed6"/>
<path d="M569.8,237.9 C569.8,238.4 567.9,239.2 567.0,239.7 C566.2,240.1 565.6,240.5 564.6,240.5 C563.7,240.4 562.0,240.2 561.5,239.5 C561.0,238.9 561.0,237.5 561.4,236.6 C561.9,235.8 563.2,234.6 564.1,234.5 C565.0,234.5 566.0,235.6 566.9,236.2 C567.9,236.7 569.8,237.3 569.8,237.9Z" fill="#e2eed6"/>
<path d="M481.2,198.5 C481.9,199.1 482.9,199.1 483.3,199.8 C483.8,200.6 484.4,202.1 483.9,202.7 C483.5,203.4 481.6,203.3 480.4,203.6 C479.3,203.8 478.1,204.3 477.1,204.0 C476.1,203.8 474.8,202.8 474.5,202.1 C474.2,201.3 475.2,200.3 475.5,199.5 C475.8,198.6 475.7,197.6 476.4,197.1 C477.1,196.6 478.7,196.1 479.5,196.4 C480.3,196.6 480.6,197.9 481.2,198.5Z" fill="#e2eed6"/>
<path d="M894.0,91.0 C892.8,92.3 889.2,95.2 887.0,99.0 C884.8,102.8 881.5,108.5 881.0,114.0 C880.5,119.5 884.0,126.0 884.0,132.0 C884.0,138.0 882.3,144.0 881.0,150.0 C879.7,156.0 876.5,162.0 876.0,168.0 C875.5,174.0 877.2,180.2 878.0,186.0 C878.8,191.8 882.0,197.7 881.0,203.0 C880.0,208.3 874.5,214.7 872.0,218.0 C869.5,221.3 869.0,222.5 866.0,223.0 C863.0,223.5 858.5,220.3 854.0,221.0 C849.5,221.7 842.3,224.5 839.0,227.0 C835.7,229.5 836.0,232.0 834.0,236.0 C832.0,240.0 829.7,245.5 827.0,251.0 C824.3,256.5 820.0,262.5 818.0,269.0 C816.0,275.5 815.5,283.7 815.0,290.0 C814.5,296.3 818.0,302.3 815.0,307.0 C812.0,311.7 801.7,315.7 797.0,318.0 C792.3,320.3 789.5,319.0 787.0,321.0 C784.5,323.0 781.3,326.8 782.0,330.0 C782.7,333.2 788.5,337.5 791.0,340.0 C793.5,342.5 795.0,341.7 797.0,345.0 C799.0,348.3 800.5,355.5 803.0,360.0 C805.5,364.5 808.5,367.2 812.0,372.0 C815.5,376.8 821.3,384.7 824.0,389.0 C826.7,393.3 827.5,394.5 828.0,398.0 C828.5,401.5 827.7,406.0 827.0,410.0 C826.3,414.0 823.0,417.5 824.0,422.0 C825.0,426.5 830.0,432.5 833.0,437.0 C836.0,441.5 839.0,445.2 842.0,449.0 C845.0,452.8 848.7,456.5 851.0,460.0 C853.3,463.5 855.2,468.3 856.0,470.0 L1031,472 L1031,89 Z" fill="#aad3df"/>
<path d="M493.0,91.0 C495.0,96.8 501.0,116.2 505.0,126.0 C509.0,135.8 513.7,142.5 517.0,150.0 C520.3,157.5 523.7,167.5 525.0,171.0" fill="none" stroke="#9cc6dc" stroke-width="1.6"/>
<path d="M237.0,188.0 C240.8,191.5 255.5,202.0 260.0,209.0 C264.5,216.0 262.0,221.5 264.0,230.0 C266.0,238.5 269.2,251.5 272.0,260.0 C274.8,268.5 278.0,269.3 281.0,281.0 C284.0,292.7 293.2,310.2 290.0,330.0 C286.8,349.8 268.7,381.7 262.0,400.0 C255.3,418.3 254.2,428.3 250.0,440.0 C245.8,451.7 239.2,465.0 237.0,470.0" fill="none" stroke="#e2a1a0" stroke-width="1"/>
<path d="M264.0,230.0 C269.3,231.0 287.2,234.0 296.0,236.0 C304.8,238.0 310.5,239.5 317.0,242.0 C323.5,244.5 329.2,246.5 335.0,251.0 C340.8,255.5 349.2,266.0 352.0,269.0" fill="none" stroke="#e2a1a0" stroke-width="1"/>
<path d="M237.0,390.0 C240.8,392.0 249.5,397.0 260.0,402.0 C270.5,407.0 290.0,413.7 300.0,420.0 C310.0,426.3 316.7,436.7 320.0,440.0" fill="none" stroke="#e2a1a0" stroke-width="1"/>
<path d="M237.0,410.0 C242.5,413.3 259.5,424.2 270.0,430.0 C280.5,435.8 290.0,438.3 300.0,445.0 C310.0,451.7 325.0,465.8 330.0,470.0" fill="none" stroke="#e2a1a0" stroke-width="1"/>
<path d="M373.0,147.0 C379.7,144.0 398.8,134.7 413.0,129.0 C427.2,123.3 445.2,116.7 458.0,113.0 C470.8,109.3 479.5,109.7 490.0,107.0 C500.5,104.3 515.8,98.7 521.0,97.0" fill="none" stroke="#e2a1a0" stroke-width="1"/>
<path d="M432.0,91.0 C436.3,94.2 449.5,103.8 458.0,110.0 C466.5,116.2 469.8,124.8 483.0,128.0 C496.2,131.2 515.3,128.8 537.0,129.0 C558.7,129.2 597.2,131.2 613.0,129.0 C628.8,126.8 625.8,120.8 632.0,116.0 C638.2,111.2 642.0,103.7 650.0,100.0 C658.0,96.3 675.0,95.0 680.0,94.0" fill="none" stroke="#e2a1a0" stroke-width="1"/>
<path d="M720.0,91.0 C730.8,91.8 767.2,94.5 785.0,96.0 C802.8,97.5 814.5,97.7 827.0,100.0 C839.5,102.3 851.2,105.0 860.0,110.0 C868.8,115.0 876.7,126.7 880.0,130.0" fill="none" stroke="#e2a1a0" stroke-width="1"/>
<path d="M770.0,121.0 C777.5,119.8 804.0,116.2 815.0,114.0 C826.0,111.8 829.3,110.5 836.0,108.0 C842.7,105.5 851.8,100.5 855.0,99.0" fill="none" stroke="#e2a1a0" stroke-width="1"/>
<path d="M364.0,282.0 C367.5,284.0 379.3,289.5 385.0,294.0 C390.7,298.5 390.5,304.3 398.0,309.0 C405.5,313.7 418.0,316.0 430.0,322.0 C442.0,328.0 457.5,337.7 470.0,345.0 C482.5,352.3 490.8,362.3 505.0,366.0 C519.2,369.7 542.7,365.8 555.0,367.0 C567.3,368.2 571.0,374.2 579.0,373.0 C587.0,371.8 593.5,365.0 603.0,360.0 C612.5,355.0 625.5,347.8 636.0,343.0 C646.5,338.2 656.5,333.2 666.0,331.0 C675.5,328.8 683.0,331.0 693.0,330.0 C703.0,329.0 714.7,326.5 726.0,325.0 C737.3,323.5 752.7,321.5 761.0,321.0 C769.3,320.5 773.5,321.8 776.0,322.0" fill="none" stroke="#e2a1a0" stroke-width="1"/>
<path d="M555.0,367.0 C560.0,369.2 574.0,375.3 585.0,380.0 C596.0,384.7 612.5,391.5 621.0,395.0 C629.5,398.5 628.5,394.7 636.0,401.0 C643.5,407.3 653.5,426.0 666.0,433.0 C678.5,440.0 699.5,439.8 711.0,443.0 C722.5,446.2 731.0,450.5 735.0,452.0" fill="none" stroke="#e2a1a0" stroke-width="1"/>
<path d="M442.0,287.0 C445.5,285.0 458.5,278.5 463.0,275.0 C467.5,271.5 466.0,267.7 469.0,266.0 C472.0,264.3 479.0,265.2 481.0,265.0" fill="none" stroke="#e2a1a0" stroke-width="1"/>
<path d="M469.0,270.0 C466.5,272.0 459.5,277.3 454.0,282.0 C448.5,286.7 445.3,293.5 436.0,298.0 C426.7,302.5 404.3,307.2 398.0,309.0" fill="none" stroke="#e2a1a0" stroke-width="1"/>
<path d="M382.0,327.0 C381.5,331.0 379.8,340.0 379.0,351.0 C378.2,362.0 376.5,378.2 377.0,393.0 C377.5,407.8 379.8,427.2 382.0,440.0 C384.2,452.8 388.7,465.0 390.0,470.0" fill="none" stroke="#e2a1a0" stroke-width="1"/>
<path d="M755.0,236.0 C758.5,236.5 768.0,237.5 776.0,239.0 C784.0,240.5 798.5,244.0 803.0,245.0" fill="none" stroke="#e2a1a0" stroke-width="1"/>
<path d="M754.0,427.0 L746.0,470.0" fill="none" stroke="#e2a1a0" stroke-width="1"/>
<path d="M692.0,434.0 L700.0,470.0" fill="none" stroke="#e2a1a0" stroke-width="1"/>
<polyline points="567.2,316.2 576.1,310.9 583.3,304.8 587.9,296.1 591.8,289.3 600.3,280.0 599.7,269.0 594.6,258.6" fill="none" stroke="#c7bfcf" stroke-width="0.9"/>
<polyline points="356.7,349.8 347.6,350.7 340.9,361.6 337.6,371.4 339.2,385.5" fill="none" stroke="#c7bfcf" stroke-width="0.9"/>
<polyline points="668.7,393.6 669.6,401.2 676.1,408.1 683.3,414.9 683.2,425.8" fill="none" stroke="#c7bfcf" stroke-width="0.9"/>
<polyline points="534.3,468.5 536.8,475.3 539.7,482.7 543.5,489.1 547.0,494.2 556.1,491.8 566.4,492.1" fill="none" stroke="#c7bfcf" stroke-width="0.9"/>
<polyline points="667.4,228.0 666.0,235.1 661.0,240.6 662.5,246.2 660.2,256.4 659.9,267.7" fill="none" stroke="#c7bfcf" stroke-width="0.9"/>
<polyline points="380.4,287.7 368.8,279.1 358.0,276.4 346.5,276.7 336.7,270.0" fill="none" stroke="#c7bfcf" stroke-width="0.9"/>
<polyline points="642.9,167.7 650.5,167.3 654.9,168.8 660.9,166.3 667.3,153.5" fill="none" stroke="#c7bfcf" stroke-width="0.9"/>
<polyline points="356.7,285.5 358.4,289.6 356.4,296.5 359.9,301.3 371.5,307.5 380.3,312.0 384.9,314.7 395.2,308.4" fill="none" stroke="#c7bfcf" stroke-width="0.9"/>
<polyline points="821.6,248.3 827.7,259.0 832.0,264.2 837.5,273.7 845.2,277.1 855.2,275.3" fill="none" stroke="#c7bfcf" stroke-width="0.9"/>
<polyline points="778.9,157.9 771.1,155.1 763.3,145.9 762.3,138.7 758.4,131.9 754.4,124.5" fill="none" stroke="#c7bfcf" stroke-width="0.9"/>
<polyline points="460.7,393.9 463.3,384.9 471.3,379.1 473.8,374.5 472.1,367.5" fill="none" stroke="#c7bfcf" stroke-width="0.9"/>
<polyline points="606.2,335.5 611.8,326.6 620.2,323.6 625.7,327.1 635.3,332.1 638.1,339.8 633.4,345.2 636.8,355.0" fill="none" stroke="#c7bfcf" stroke-width="0.9"/>
<polyline points="458.1,372.3 464.0,365.7 473.0,365.6 480.4,360.2 490.4,350.3" fill="none" stroke="#c7bfcf" stroke-width="0.9"/>
<polyline points="696.4,273.8 705.4,272.5 712.4,272.9 723.0,268.1 728.9,264.9" fill="none" stroke="#c7bfcf" stroke-width="0.9"/>
<polyline points="464.4,294.2 453.8,301.4 447.4,306.1 436.4,311.8 428.3,319.1" fill="none" stroke="#c7bfcf" stroke-width="0.9"/>
<polyline points="556.5,406.8 561.8,401.2 569.5,390.0 568.2,384.9 563.5,377.0 565.5,367.5 570.4,364.4 580.1,359.3" fill="none" stroke="#c7bfcf" stroke-width="0.9"/>
<polyline points="433.1,194.5 423.4,198.5 418.1,201.6 405.2,196.4 397.9,192.3 387.0,185.2" fill="none" stroke="#c7bfcf" stroke-width="0.9"/>
<polyline points="423.1,359.6 427.2,350.5 429.9,343.1 428.2,333.7 421.7,330.1 420.9,315.8 429.1,309.3" fill="none" stroke="#c7bfcf" stroke-width="0.9"/>
<polyline points="575.6,300.4 574.2,309.7 571.9,319.5 574.0,329.8 574.2,341.2 574.9,353.3 572.8,361.1" fill="none" stroke="#c7bfcf" stroke-width="0.9"/>
<polyline points="540.4,435.4 551.0,433.2 555.0,423.9 558.2,412.7 566.9,408.2 575.5,406.5 587.3,407.1" fill="none" stroke="#c7bfcf" stroke-width="0.9"/>
<polyline points="731.3,208.8 719.0,209.5 712.0,213.5 700.0,219.2 691.2,223.5" fill="none" stroke="#c7bfcf" stroke-width="0.9"/>
<polyline points="529.4,450.3 520.0,450.7 511.7,450.7 501.4,452.7 488.6,450.9 478.7,447.4" fill="none" stroke="#c7bfcf" stroke-width="0.9"/>
<polyline points="535.9,323.9 525.7,316.6 525.1,310.6 529.9,303.1 533.6,296.9 533.5,289.1 531.9,277.5" fill="none" stroke="#c7bfcf" stroke-width="0.9"/>
<polyline points="641.6,266.5 649.9,258.8 661.8,259.7 672.4,257.0 682.4,255.5 692.4,262.7" fill="none" stroke="#c7bfcf" stroke-width="0.9"/>
<polyline points="342.8,213.9 337.5,221.3 331.6,228.4 326.4,235.2 318.6,238.4" fill="none" stroke="#c7bfcf" stroke-width="0.9"/>
<polyline points="665.4,390.1 662.2,397.3 653.9,405.3 647.3,406.8 639.4,408.4 627.7,411.0 624.9,418.3 618.3,423.3" fill="none" stroke="#c7bfcf" stroke-width="0.9"/>
<polyline points="813.2,195.4 809.0,191.1 809.8,178.3 812.8,170.7 823.4,166.3 830.3,161.3 835.9,152.6" fill="none" stroke="#c7bfcf" stroke-width="0.9"/>
<polyline points="787.2,317.2 783.6,325.1 782.5,335.2 777.8,340.6 778.1,348.7 782.9,358.0 784.6,366.3 788.0,376.3" fill="none" stroke="#c7bfcf" stroke-width="0.9"/>
<polyline points="590.9,308.2 587.5,298.5 591.5,288.8 596.6,281.3 598.0,273.8" fill="none" stroke="#c7bfcf" stroke-width="0.9"/>
<polyline points="404.1,190.3 396.2,200.7 395.5,209.0 391.1,214.5 387.3,221.5 381.8,228.7 374.8,232.5" fill="none" stroke="#c7bfcf" stroke-width="0.9"/>
<polyline points="623.4,420.1 616.9,416.9 608.9,414.3 605.6,406.4 596.8,396.5 587.0,398.8 575.7,394.9 569.4,395.4" fill="none" stroke="#c7bfcf" stroke-width="0.9"/>
<polyline points="460.7,307.2 473.8,309.1 480.7,302.4 489.4,296.5 498.6,295.4 505.2,298.2" fill="none" stroke="#c7bfcf" stroke-width="0.9"/>
<polyline points="619.4,304.1 626.6,311.5 628.6,315.3 632.8,326.7 641.9,332.5 647.3,337.7 652.7,350.4" fill="none" stroke="#c7bfcf" stroke-width="0.9"/>
<polyline points="395.2,340.2 405.7,343.2 412.7,341.2 421.2,336.2 426.5,330.1 431.6,324.6 439.1,316.7" fill="none" stroke="#c7bfcf" stroke-width="0.9"/>
<polyline points="749.9,238.9 758.7,230.0 760.4,221.5 770.6,212.9 775.0,208.9 780.9,206.7" fill="none" stroke="#c7bfcf" stroke-width="0.9"/>
<polyline points="658.4,174.1 659.9,164.3 667.0,154.3 675.6,152.0 678.5,147.0 687.1,141.9 694.5,136.2" fill="none" stroke="#c7bfcf" stroke-width="0.9"/>
<polyline points="629.3,316.4 628.8,322.1 622.6,327.7 616.9,334.8 620.7,348.2 626.8,357.1 628.7,366.9" fill="none" stroke="#c7bfcf" stroke-width="0.9"/>
<polyline points="529.4,319.6 536.6,326.3 545.7,326.4 554.6,327.0 566.2,330.9 571.5,341.8" fill="none" stroke="#c7bfcf" stroke-width="0.9"/>
<polyline points="556.7,318.4 566.0,312.9 569.9,303.0 573.4,293.0 570.7,286.6 568.0,281.3 560.6,276.2" fill="none" stroke="#c7bfcf" stroke-width="0.9"/>
<polyline points="804.5,267.2 808.1,258.1 813.9,252.9 819.1,244.2 818.7,235.3 810.8,226.0" fill="none" stroke="#c7bfcf" stroke-width="0.9"/>
<polyline points="568.6,229.1 556.4,232.0 548.4,238.7 539.8,238.1 527.9,231.3 513.9,229.2" fill="none" stroke="#c7bfcf" stroke-width="0.9"/>
<polyline points="723.9,228.8 731.4,228.9 736.5,225.9 742.5,225.1 752.9,229.5 757.1,237.3 753.9,248.3 760.0,259.6" fill="none" stroke="#c7bfcf" stroke-width="0.9"/>
<polyline points="651.6,218.7 657.7,228.1 659.9,232.8 656.3,242.0 658.8,251.8" fill="none" stroke="#c7bfcf" stroke-width="0.9"/>
<polyline points="491.8,289.2 504.2,291.7 509.1,296.6 511.5,304.8 508.6,316.2 511.9,323.8 514.0,336.1" fill="none" stroke="#c7bfcf" stroke-width="0.9"/>
<polyline points="411.2,171.7 419.6,179.0 425.0,178.4 436.5,176.2 448.5,175.2 459.2,179.5 466.3,182.5 474.3,187.8" fill="none" stroke="#c7bfcf" stroke-width="0.9"/>
<polyline points="598.1,162.3 589.2,154.3 586.4,144.0 578.6,136.7 572.1,128.1" fill="none" stroke="#c7bfcf" stroke-width="0.9"/>
<polyline points="678.9,121.2 683.3,124.1 684.2,135.0 685.4,148.3 679.0,156.1 665.5,158.1" fill="none" stroke="#c7bfcf" stroke-width="0.9"/>
<polyline points="475.8,171.9 474.2,163.8 471.2,152.8 463.1,147.7 454.3,142.6 447.2,142.8 437.8,147.5 429.3,155.5" fill="none" stroke="#c7bfcf" stroke-width="0.9"/>
<polyline points="552.3,99.5 557.6,87.5 561.6,79.7 560.6,72.1 563.3,62.1 566.3,54.9 567.1,46.1" fill="none" stroke="#c7bfcf" stroke-width="0.9"/>
<polyline points="536.4,101.5 536.1,113.3 544.9,122.0 557.1,121.7 565.7,115.8 569.5,105.5" fill="none" stroke="#c7bfcf" stroke-width="0.9"/>
<polyline points="496.9,162.7 503.8,172.2 512.5,182.1 519.0,187.2 517.1,201.2 511.1,208.2 508.3,216.6 511.2,223.4" fill="none" stroke="#c7bfcf" stroke-width="0.9"/>
<polyline points="695.5,130.2 697.3,139.1 706.4,141.9 715.1,141.1 726.0,134.6 732.2,130.5 735.8,124.4" fill="none" stroke="#c7bfcf" stroke-width="0.9"/>
<polyline points="829.7,161.5 829.1,150.2 834.9,141.4 832.3,131.6 829.6,124.6 822.5,118.9 815.3,113.0" fill="none" stroke="#c7bfcf" stroke-width="0.9"/>
<polyline points="401.6,137.1 394.6,129.0 388.4,124.8 377.5,123.9 365.3,129.0 359.9,138.9 352.2,142.5 345.5,147.7" fill="none" stroke="#c7bfcf" stroke-width="0.9"/>
<polyline points="600.9,161.8 598.6,154.6 593.3,143.2 598.1,132.2 604.3,124.2 614.1,118.1" fill="none" stroke="#c7bfcf" stroke-width="0.9"/>
<polyline points="582.5,179.7 576.0,174.7 566.9,170.2 558.1,172.6 548.5,176.8 545.4,187.1" fill="none" stroke="#c7bfcf" stroke-width="0.9"/>
<polyline points="491.1,114.2 479.8,112.4 468.2,107.2 458.8,109.1 454.8,116.6 456.0,125.9 459.1,134.0" fill="none" stroke="#c7bfcf" stroke-width="0.9"/>
<polyline points="863.3,146.0 855.0,137.6 849.4,136.0 838.9,136.8 828.8,139.8 825.5,135.1 823.4,126.4" fill="none" stroke="#c7bfcf" stroke-width="0.9"/>
<polyline points="659.1,114.2 655.0,119.7 647.4,126.1 639.9,129.4 638.1,135.0 638.5,140.8 644.1,144.0" fill="none" stroke="#c7bfcf" stroke-width="0.9"/>
<polyline points="259.2,108.4 246.5,102.7 240.5,98.2 239.6,89.3 245.7,84.6 253.1,83.3 263.2,86.1" fill="none" stroke="#c7bfcf" stroke-width="0.9"/>
<polyline points="251.5,309.6 248.4,301.4 240.2,295.7 233.6,286.7 225.5,285.2 214.5,288.5 210.2,291.1 202.9,289.7" fill="none" stroke="#c7bfcf" stroke-width="0.9"/>
<polyline points="251.5,118.2 260.8,125.9 263.0,136.3 269.1,140.3 276.2,148.3 278.8,160.4 270.8,169.4" fill="none" stroke="#c7bfcf" stroke-width="0.9"/>
<polyline points="249.7,100.6 242.1,102.6 233.7,98.3 231.1,93.0 231.6,85.4 224.4,80.6" fill="none" stroke="#c7bfcf" stroke-width="0.9"/>
<polyline points="272.4,248.4 273.6,239.4 270.9,232.4 265.7,226.3 264.1,213.3 257.0,209.4" fill="none" stroke="#c7bfcf" stroke-width="0.9"/>
<polyline points="272.5,125.9 281.0,131.5 292.2,134.2 302.3,137.6 308.6,143.7" fill="none" stroke="#c7bfcf" stroke-width="0.9"/>
<polyline points="290.2,164.4 282.9,170.8 280.2,175.2 277.3,183.9 269.5,193.1 269.5,202.5 269.0,212.4" fill="none" stroke="#c7bfcf" stroke-width="0.9"/>
<polyline points="240.0,256.2 233.1,263.6 231.3,272.3 232.4,278.3 243.4,287.3 245.2,296.8 239.4,306.6" fill="none" stroke="#c7bfcf" stroke-width="0.9"/>
<polyline points="237.5,341.1 236.7,329.9 235.0,322.4 238.5,310.9 246.2,298.3 254.4,296.0 263.0,296.9" fill="none" stroke="#c7bfcf" stroke-width="0.9"/>
<polyline points="268.2,245.2 259.5,244.1 250.3,235.5 245.6,232.3 244.2,224.9 246.0,217.7" fill="none" stroke="#c7bfcf" stroke-width="0.9"/>
<path d="M375.0,174.0 C373.2,177.5 367.3,188.7 364.0,195.0 C360.7,201.3 357.2,208.2 355.0,212.0 C352.8,215.8 351.7,217.0 351.0,218.0" fill="none" stroke="#b3a7bd" stroke-width="1.1"/>
<path d="M472.0,181.0 C470.0,183.3 461.8,189.8 460.0,195.0 C458.2,200.2 460.5,203.7 461.0,212.0 C461.5,220.3 462.2,236.0 463.0,245.0 C463.8,254.0 465.5,262.5 466.0,266.0" fill="none" stroke="#b3a7bd" stroke-width="1.1"/>
<path d="M463.0,245.0 C468.5,244.8 485.5,245.5 496.0,244.0 C506.5,242.5 516.2,238.8 526.0,236.0 C535.8,233.2 547.2,228.0 555.0,227.0 C562.8,226.0 570.0,229.5 573.0,230.0" fill="none" stroke="#b3a7bd" stroke-width="1.1"/>
<path d="M541.0,183.0 C542.3,185.8 546.7,192.7 549.0,200.0 C551.3,207.3 554.0,222.5 555.0,227.0" fill="none" stroke="#b3a7bd" stroke-width="1.1"/>
<path d="M573.0,230.0 C572.0,232.5 571.0,241.5 567.0,245.0 C563.0,248.5 552.8,247.0 549.0,251.0 C545.2,255.0 545.3,262.5 544.0,269.0 C542.7,275.5 540.3,283.2 541.0,290.0 C541.7,296.8 546.8,306.7 548.0,310.0" fill="none" stroke="#b3a7bd" stroke-width="1.1"/>
<path d="M606.0,188.0 C605.5,191.5 601.5,203.5 603.0,209.0 C604.5,214.5 609.5,218.5 615.0,221.0 C620.5,223.5 628.5,223.8 636.0,224.0 C643.5,224.2 651.0,223.5 660.0,222.0 C669.0,220.5 685.0,216.2 690.0,215.0" fill="none" stroke="#b3a7bd" stroke-width="1.1"/>
<path d="M690.0,215.0 C692.5,219.2 703.3,232.2 705.0,240.0 C706.7,247.8 698.8,257.0 700.0,262.0 C701.2,267.0 702.0,268.3 712.0,270.0 C722.0,271.7 745.3,273.3 760.0,272.0 C774.7,270.7 793.3,263.7 800.0,262.0" fill="none" stroke="#b3a7bd" stroke-width="1.1"/>
<path d="M673.0,147.0 C673.3,152.5 672.2,168.7 675.0,180.0 C677.8,191.3 687.5,209.2 690.0,215.0" fill="none" stroke="#b3a7bd" stroke-width="1.1"/>
<path d="M727.0,160.0 C729.2,166.7 734.5,190.8 740.0,200.0 C745.5,209.2 757.2,208.3 760.0,215.0 C762.8,221.7 757.5,235.8 757.0,240.0" fill="none" stroke="#b3a7bd" stroke-width="1.1"/>
<path d="M760.0,215.0 C764.0,212.5 777.3,206.7 784.0,200.0 C790.7,193.3 797.3,179.2 800.0,175.0" fill="none" stroke="#b3a7bd" stroke-width="1.1"/>
<path d="M351.0,218.0 C357.5,221.7 381.0,232.7 390.0,240.0 C399.0,247.3 396.7,256.7 405.0,262.0 C413.3,267.3 429.8,271.3 440.0,272.0 C450.2,272.7 461.7,267.0 466.0,266.0" fill="none" stroke="#b3a7bd" stroke-width="1.1"/>
<path d="M355.0,269.0 C357.8,272.5 367.8,284.8 372.0,290.0 C376.2,295.2 376.7,295.0 380.0,300.0 C383.3,305.0 385.3,314.2 392.0,320.0 C398.7,325.8 410.7,334.7 420.0,335.0 C429.3,335.3 438.0,327.8 448.0,322.0 C458.0,316.2 469.7,303.7 480.0,300.0 C490.3,296.3 499.8,301.7 510.0,300.0 C520.2,298.3 535.8,291.7 541.0,290.0" fill="none" stroke="#b3a7bd" stroke-width="1.1"/>
<path d="M392.0,320.0 C392.5,324.2 397.0,337.5 395.0,345.0 C393.0,352.5 384.2,359.2 380.0,365.0 C375.8,370.8 371.7,377.5 370.0,380.0" fill="none" stroke="#b3a7bd" stroke-width="1.1"/>
<path d="M420.0,335.0 C423.3,339.2 434.2,352.5 440.0,360.0 C445.8,367.5 450.0,374.2 455.0,380.0 C460.0,385.8 465.8,388.3 470.0,395.0 C474.2,401.7 471.7,414.2 480.0,420.0 C488.3,425.8 506.7,430.0 520.0,430.0 C533.3,430.0 548.3,420.8 560.0,420.0 C571.7,419.2 580.0,421.7 590.0,425.0 C600.0,428.3 611.7,437.5 620.0,440.0 C628.3,442.5 636.7,440.0 640.0,440.0" fill="none" stroke="#b3a7bd" stroke-width="1.1"/>
<path d="M500.0,360.0 C500.8,365.8 501.7,384.2 505.0,395.0 C508.3,405.8 517.5,420.0 520.0,425.0" fill="none" stroke="#b3a7bd" stroke-width="1.1"/>
<path d="M548.0,310.0 C552.5,313.3 566.3,326.7 575.0,330.0 C583.7,333.3 589.8,330.8 600.0,330.0 C610.2,329.2 626.0,324.2 636.0,325.0 C646.0,325.8 652.7,329.2 660.0,335.0 C667.3,340.8 673.3,352.5 680.0,360.0 C686.7,367.5 693.8,374.2 700.0,380.0 C706.2,385.8 714.2,392.5 717.0,395.0" fill="none" stroke="#b3a7bd" stroke-width="1.1"/>
<path d="M636.0,325.0 C637.5,320.8 641.0,306.7 645.0,300.0 C649.0,293.3 650.8,291.3 660.0,285.0 C669.2,278.7 693.3,265.8 700.0,262.0" fill="none" stroke="#b3a7bd" stroke-width="1.1"/>
<path d="M600.0,330.0 C600.8,335.0 600.0,351.7 605.0,360.0 C610.0,368.3 622.5,373.3 630.0,380.0 C637.5,386.7 643.0,392.0 650.0,400.0 C657.0,408.0 668.3,423.3 672.0,428.0" fill="none" stroke="#b3a7bd" stroke-width="1.1"/>
<path d="M710.0,300.0 C710.8,305.0 711.7,320.8 715.0,330.0 C718.3,339.2 725.0,345.8 730.0,355.0 C735.0,364.2 742.5,380.0 745.0,385.0" fill="none" stroke="#b3a7bd" stroke-width="1.1"/>
<path d="M565.0,380.0 C566.7,385.0 575.8,403.3 575.0,410.0 C574.2,416.7 562.5,418.3 560.0,420.0" fill="none" stroke="#b3a7bd" stroke-width="1.1"/>
<path d="M382.0,91.0 C381.5,96.8 381.2,119.2 379.0,126.0 C376.8,132.8 370.7,131.0 369.0,132.0" fill="none" stroke="#b3a7bd" stroke-width="1.1"/>
<path d="M445.0,91.0 C444.0,95.8 440.5,108.3 439.0,120.0 C437.5,131.7 436.5,152.5 436.0,161.0 C435.5,169.5 436.0,169.3 436.0,171.0" fill="none" stroke="#b3a7bd" stroke-width="1.1"/>
<path d="M477.0,110.0 C478.0,116.8 483.5,139.3 483.0,151.0 C482.5,162.7 475.5,175.2 474.0,180.0" fill="none" stroke="#b3a7bd" stroke-width="1.1"/>
<path d="M531.0,91.0 C531.5,93.7 529.3,98.5 534.0,107.0 C538.7,115.5 552.7,129.0 559.0,142.0 C565.3,155.0 569.8,177.8 572.0,185.0" fill="none" stroke="#b3a7bd" stroke-width="1.1"/>
<path d="M594.0,91.0 C596.7,95.8 608.3,108.3 610.0,120.0 C611.7,131.7 602.3,151.0 604.0,161.0 C605.7,171.0 617.3,176.8 620.0,180.0" fill="none" stroke="#b3a7bd" stroke-width="1.1"/>
<path d="M660.0,91.0 C662.2,94.2 669.7,101.8 673.0,110.0 C676.3,118.2 678.8,135.0 680.0,140.0" fill="none" stroke="#b3a7bd" stroke-width="1.1"/>
<path d="M740.0,91.0 C740.8,94.2 744.8,104.0 745.0,110.0 C745.2,116.0 741.7,124.2 741.0,127.0" fill="none" stroke="#b3a7bd" stroke-width="1.1"/>
<path d="M800.0,91.0 C801.0,95.8 806.0,110.5 806.0,120.0 C806.0,129.5 801.0,143.3 800.0,148.0" fill="none" stroke="#b3a7bd" stroke-width="1.1"/>
<path d="M237.0,200.0 C241.2,201.7 253.2,213.3 262.0,210.0 C270.8,206.7 281.7,187.0 290.0,180.0 C298.3,173.0 308.3,170.0 312.0,168.0" fill="none" stroke="#b3a7bd" stroke-width="1.1"/>
<path d="M237.0,270.0 C242.5,268.7 259.5,262.0 270.0,262.0 C280.5,262.0 290.7,265.7 300.0,270.0 C309.3,274.3 321.7,285.0 326.0,288.0" fill="none" stroke="#b3a7bd" stroke-width="1.1"/>
<path d="M254.0,360.0 C255.3,366.7 257.7,390.0 262.0,400.0 C266.3,410.0 273.7,413.3 280.0,420.0 C286.3,426.7 291.7,435.0 300.0,440.0 C308.3,445.0 319.3,448.3 330.0,450.0 C340.7,451.7 358.3,450.0 364.0,450.0" fill="none" stroke="#b3a7bd" stroke-width="1.1"/>
<path d="M237.0,400.0 L262.0,400.0" fill="none" stroke="#b3a7bd" stroke-width="1.1"/>
<path d="M672.0,428.0 C676.7,430.8 688.7,441.0 700.0,445.0 C711.3,449.0 726.7,449.5 740.0,452.0 C753.3,454.5 773.3,458.7 780.0,460.0" fill="none" stroke="#b3a7bd" stroke-width="1.1"/>
<path d="M745.0,383.0 C747.5,389.2 752.5,410.5 760.0,420.0 C767.5,429.5 779.5,437.2 790.0,440.0 C800.5,442.8 817.5,437.5 823.0,437.0" fill="none" stroke="#b3a7bd" stroke-width="1.1"/>
<path d="M323.0,91.0 C325.7,95.5 333.7,112.0 339.0,118.0 C344.3,124.0 349.5,124.2 355.0,127.0 C360.5,129.8 369.0,132.5 372.0,135.0 C375.0,137.5 373.8,140.0 373.0,142.0 C372.2,144.0 369.5,144.7 367.0,147.0 C364.5,149.3 358.5,153.0 358.0,156.0 C357.5,159.0 359.5,162.8 364.0,165.0 C368.5,167.2 377.5,168.8 385.0,169.0 C392.5,169.2 400.5,165.7 409.0,166.0 C417.5,166.3 426.5,168.7 436.0,171.0 C445.5,173.3 457.5,178.0 466.0,180.0 C474.5,182.0 480.0,183.5 487.0,183.0 C494.0,182.5 500.0,177.3 508.0,177.0 C516.0,176.7 526.2,179.8 535.0,181.0 C543.8,182.2 552.7,182.0 561.0,184.0 C569.3,186.0 577.5,192.7 585.0,193.0 C592.5,193.3 599.5,188.5 606.0,186.0 C612.5,183.5 619.0,180.5 624.0,178.0 C629.0,175.5 631.5,175.5 636.0,171.0 C640.5,166.5 646.0,155.3 651.0,151.0 C656.0,146.7 658.5,147.2 666.0,145.0 C673.5,142.8 686.0,140.5 696.0,138.0 C706.0,135.5 718.5,131.8 726.0,130.0 C733.5,128.2 734.7,125.7 741.0,127.0 C747.3,128.3 757.7,135.2 764.0,138.0 C770.3,140.8 774.5,143.5 779.0,144.0 C783.5,144.5 787.5,140.3 791.0,141.0 C794.5,141.7 797.0,146.5 800.0,148.0 C803.0,149.5 805.0,149.2 809.0,150.0 C813.0,150.8 821.0,150.5 824.0,153.0 C827.0,155.5 822.0,161.0 827.0,165.0 C832.0,169.0 847.5,174.8 854.0,177.0 C860.5,179.2 862.0,177.7 866.0,178.0 C870.0,178.3 876.0,178.8 878.0,179.0" fill="none" stroke="#a39db0" stroke-width="2.6" stroke-linejoin="round"/>
<path d="M339.0,118.0 C338.3,121.3 336.5,134.3 335.0,138.0 C333.5,141.7 332.8,139.0 330.0,140.0 C327.2,141.0 320.7,142.3 318.0,144.0 C315.3,145.7 314.8,146.0 314.0,150.0 C313.2,154.0 312.5,162.0 313.0,168.0 C313.5,174.0 315.2,181.0 317.0,186.0 C318.8,191.0 321.8,193.2 324.0,198.0 C326.2,202.8 325.8,210.2 330.0,215.0 C334.2,219.8 343.3,222.5 349.0,227.0 C354.7,231.5 361.0,237.0 364.0,242.0 C367.0,247.0 368.5,252.5 367.0,257.0 C365.5,261.5 358.0,264.8 355.0,269.0 C352.0,273.2 353.8,278.8 349.0,282.0 C344.2,285.2 330.8,285.0 326.0,288.0 C321.2,291.0 320.5,294.0 320.0,300.0 C319.5,306.0 321.7,317.0 323.0,324.0 C324.3,331.0 330.5,337.3 328.0,342.0 C325.5,346.7 310.3,349.5 308.0,352.0 C305.7,354.5 310.2,353.7 314.0,357.0 C317.8,360.3 325.7,367.7 331.0,372.0 C336.3,376.3 341.5,380.2 346.0,383.0 C350.5,385.8 355.5,384.5 358.0,389.0 C360.5,393.5 359.5,403.5 361.0,410.0 C362.5,416.5 365.5,421.5 367.0,428.0 C368.5,434.5 370.5,442.0 370.0,449.0 C369.5,456.0 365.0,466.5 364.0,470.0" fill="none" stroke="#a39db0" stroke-width="2.6" stroke-linejoin="round"/>
<path d="M308.0,352.0 C303.5,352.5 290.0,353.7 281.0,355.0 C272.0,356.3 260.5,360.7 254.0,360.0 C247.5,359.3 244.8,354.0 242.0,351.0 C239.2,348.0 237.8,343.5 237.0,342.0" fill="none" stroke="#a39db0" stroke-width="2.6" stroke-linejoin="round"/>
<path d="M237.0,309.0 C238.8,308.5 244.7,305.0 248.0,306.0 C251.3,307.0 256.5,307.5 257.0,315.0 C257.5,322.5 252.0,345.0 251.0,351.0" fill="none" stroke="#a39db0" stroke-width="2.6" stroke-linejoin="round"/>
<path d="M466.0,472.0 C469.0,468.2 477.5,452.5 484.0,449.0 C490.5,445.5 499.0,449.2 505.0,451.0 C511.0,452.8 514.7,456.5 520.0,460.0 C525.3,463.5 534.2,470.0 537.0,472.0" fill="none" stroke="#a39db0" stroke-width="2.6" stroke-linejoin="round"/>
<path d="M640.0,472.0 C641.8,469.2 649.7,460.8 651.0,455.0 C652.3,449.2 647.5,442.0 648.0,437.0 C648.5,432.0 650.0,426.5 654.0,425.0 C658.0,423.5 668.5,429.5 672.0,428.0 C675.5,426.5 671.0,419.0 675.0,416.0 C679.0,413.0 692.0,413.0 696.0,410.0 C700.0,407.0 695.5,400.5 699.0,398.0 C702.5,395.5 711.0,397.0 717.0,395.0 C723.0,393.0 728.7,388.0 735.0,386.0 C741.3,384.0 749.7,382.0 755.0,383.0 C760.3,384.0 763.0,389.0 767.0,392.0 C771.0,395.0 774.5,400.5 779.0,401.0 C783.5,401.5 789.0,395.5 794.0,395.0 C799.0,394.5 803.5,397.7 809.0,398.0 C814.5,398.3 819.5,397.2 827.0,397.0 C834.5,396.8 849.5,397.0 854.0,397.0" fill="none" stroke="#a39db0" stroke-width="2.6" stroke-linejoin="round"/>
<path d="M927.0,91.0 C925.3,96.8 919.7,116.2 917.0,126.0 C914.3,135.8 913.3,141.5 911.0,150.0 C908.7,158.5 904.0,168.7 903.0,177.0 C902.0,185.3 905.0,193.2 905.0,200.0 C905.0,206.8 905.5,211.5 903.0,218.0 C900.5,224.5 895.7,233.5 890.0,239.0 C884.3,244.5 875.3,249.2 869.0,251.0 C862.7,252.8 856.0,248.0 852.0,250.0 C848.0,252.0 846.8,257.8 845.0,263.0 C843.2,268.2 841.8,274.8 841.0,281.0 C840.2,287.2 840.8,291.8 840.0,300.0 C839.2,308.2 837.5,320.5 836.0,330.0 C834.5,339.5 830.5,351.0 831.0,357.0 C831.5,363.0 836.0,362.2 839.0,366.0 C842.0,369.8 846.5,374.8 849.0,380.0 C851.5,385.2 853.5,391.0 854.0,397.0 C854.5,403.0 850.5,409.5 852.0,416.0 C853.5,422.5 857.2,430.5 863.0,436.0 C868.8,441.5 871.2,443.8 887.0,449.0 C902.8,454.2 940.8,463.2 958.0,467.0 C975.2,470.8 984.7,471.2 990.0,472.0" fill="none" stroke="#9f97b5" stroke-width="1.5"/>
<path d="M866.0,178.0 L903.0,177.0" fill="none" stroke="#9f97b5" stroke-width="1.5"/>
<path d="M827.0,397.0 L854.0,397.0" fill="none" stroke="#9f97b5" stroke-width="1.5"/>
<path d="M861.0,436.0 L836.0,446.0" fill="none" stroke="#9f97b5" stroke-width="1.5"/>
<g font-size="11" fill="#3a3a3a" stroke="#fff" stroke-width="2.2" stroke-linejoin="round" paint-order="stroke">
<text x="278" y="132" textLength="18" lengthAdjust="spacingAndGlyphs">Бор</text>
<text x="285" y="154" textLength="37" lengthAdjust="spacingAndGlyphs">Зајечар</text>
<text x="343" y="158" textLength="31" lengthAdjust="spacingAndGlyphs">Видин</text>
<text x="405" y="242" textLength="30" lengthAdjust="spacingAndGlyphs">Враца</text>
<text x="258" y="227" textLength="23" lengthAdjust="spacingAndGlyphs">Ниш</text>
<text x="317" y="248" textLength="30" lengthAdjust="spacingAndGlyphs">Пирот</text>
<text x="250" y="283" textLength="47" lengthAdjust="spacingAndGlyphs">Лесковац</text>
<text x="237" y="254" textLength="29" lengthAdjust="spacingAndGlyphs">купље</text>
<text x="564" y="206" textLength="39" lengthAdjust="spacingAndGlyphs">Свищов</text>
<text x="591" y="272" textLength="35" lengthAdjust="spacingAndGlyphs">Велико</text>
<text x="588" y="283" textLength="42" lengthAdjust="spacingAndGlyphs">Търново</text>
<text x="746" y="132" textLength="36" lengthAdjust="spacingAndGlyphs">Călărași</text>
<text x="672" y="217" textLength="37" lengthAdjust="spacingAndGlyphs">Разград</text>
<text x="667" y="251" textLength="55" lengthAdjust="spacingAndGlyphs">Търговище</text>
<text x="856" y="180" textLength="43" lengthAdjust="spacingAndGlyphs">Mangalia</text>
<text x="815" y="250" textLength="36" lengthAdjust="spacingAndGlyphs">Варна</text>
<text x="253" y="322" textLength="32" lengthAdjust="spacingAndGlyphs">Врање</text>
<text x="347" y="389" textLength="61" lengthAdjust="spacingAndGlyphs">Благоевград</text>
<text x="298" y="400" textLength="36" lengthAdjust="spacingAndGlyphs">Кочани</text>
<text x="381" y="300" textLength="37" lengthAdjust="spacingAndGlyphs">София</text>
<text x="564" y="328" textLength="46" lengthAdjust="spacingAndGlyphs">Казанлък</text>
<text x="436" y="375" textLength="51" lengthAdjust="spacingAndGlyphs">Пазарджик</text>
<text x="512" y="389" textLength="57" lengthAdjust="spacingAndGlyphs">Асеновград</text>
<text x="582" y="398" textLength="39" lengthAdjust="spacingAndGlyphs">Хасково</text>
<text x="693" y="339" textLength="32" lengthAdjust="spacingAndGlyphs">Ямбол</text>
<text x="733" y="422" textLength="42" lengthAdjust="spacingAndGlyphs">Kırklareli</text>
<text x="678" y="445" textLength="30" lengthAdjust="spacingAndGlyphs">Edirne</text>
<text x="856" y="180" textLength="43" lengthAdjust="spacingAndGlyphs">Mangalia</text>
<text x="628" y="160" textLength="21" lengthAdjust="spacingAndGlyphs">Руcе</text>
</g>
<g fill="none" stroke="#555" stroke-width="1">
<circle cx="288" cy="136" r="2.3" fill="#fff"/>
<circle cx="304" cy="158" r="2.3" fill="#fff"/>
<circle cx="358" cy="148" r="2.3" fill="#fff"/>
<circle cx="419" cy="245" r="2.3" fill="#fff"/>
<circle cx="269" cy="232" r="2.3" fill="#fff"/>
<circle cx="332" cy="253" r="2.3" fill="#fff"/>
<circle cx="273" cy="272" r="2.3" fill="#fff"/>
<circle cx="241" cy="242" r="2.3" fill="#fff"/>
<circle cx="584" cy="195" r="2.3" fill="#fff"/>
<circle cx="609" cy="261" r="2.3" fill="#fff"/>
<circle cx="764" cy="120" r="2.3" fill="#fff"/>
<circle cx="690" cy="205" r="2.3" fill="#fff"/>
<circle cx="695" cy="239" r="2.3" fill="#fff"/>
<circle cx="878" cy="169" r="2.3" fill="#fff"/>
<circle cx="269" cy="326" r="2.3" fill="#fff"/>
<circle cx="378" cy="393" r="2.3" fill="#fff"/>
<circle cx="316" cy="404" r="2.3" fill="#fff"/>
<circle cx="399" cy="309" r="2.3" fill="#fff"/>
<circle cx="588" cy="318" r="2.3" fill="#fff"/>
<circle cx="491" cy="372" r="2.3" fill="#fff"/>
<circle cx="540" cy="394" r="2.3" fill="#fff"/>
<circle cx="602" cy="403" r="2.3" fill="#fff"/>
<circle cx="688" cy="336" r="2.3" fill="#fff"/>
<circle cx="754" cy="427" r="2.3" fill="#fff"/>
<circle cx="692" cy="434" r="2.3" fill="#fff"/>
<circle cx="642" cy="165" r="2.3" fill="#fff"/>
<circle cx="815" cy="246" r="2.3" fill="#fff"/>
<circle cx="527" cy="376" r="2.3" fill="#fff"/>
</g>
<g font-size="12" font-style="italic" fill="#8a6f9c" stroke="#fff" stroke-opacity=".7" stroke-width="2" stroke-linejoin="round" paint-order="stroke">
<text x="421" y="124" textLength="19" lengthAdjust="spacingAndGlyphs">Dolj</text>
<text x="496" y="112" textLength="15" lengthAdjust="spacingAndGlyphs">Olt</text>
<text x="544" y="140" textLength="51" lengthAdjust="spacingAndGlyphs">Teleorman</text>
<text x="629" y="134" textLength="37" lengthAdjust="spacingAndGlyphs">Giurgiu</text>
<text x="326" y="175" textLength="32" lengthAdjust="spacingAndGlyphs">Видин</text>
<text x="355" y="215" textLength="50" lengthAdjust="spacingAndGlyphs">Монтана</text>
<text x="419" y="224" textLength="33" lengthAdjust="spacingAndGlyphs">Враца</text>
<text x="497" y="214" textLength="37" lengthAdjust="spacingAndGlyphs">Плевен</text>
<text x="490" y="269" textLength="31" lengthAdjust="spacingAndGlyphs">Ловеч</text>
<text x="567" y="248" textLength="80" lengthAdjust="spacingAndGlyphs">Велико Търново</text>
<text x="727" y="108" textLength="39" lengthAdjust="spacingAndGlyphs">Călărași</text>
<text x="636" y="191" textLength="22" lengthAdjust="spacingAndGlyphs">Русе</text>
<text x="714" y="162" textLength="52" lengthAdjust="spacingAndGlyphs">Силистра</text>
<text x="687" y="195" textLength="40" lengthAdjust="spacingAndGlyphs">Разград</text>
<text x="718" y="236" textLength="35" lengthAdjust="spacingAndGlyphs">Шумен</text>
<text x="796" y="193" textLength="39" lengthAdjust="spacingAndGlyphs">Добрич</text>
<text x="774" y="248" textLength="37" lengthAdjust="spacingAndGlyphs">Варна</text>
<text x="846" y="115" textLength="49" lengthAdjust="spacingAndGlyphs">Constanța</text>
<text x="330" y="358" textLength="60" lengthAdjust="spacingAndGlyphs">Кюстендил</text>
<text x="382" y="428" textLength="70" lengthAdjust="spacingAndGlyphs">Благоевград</text>
<text x="305" y="460" textLength="65" lengthAdjust="spacingAndGlyphs">Југоисточен</text>
<text x="432" y="321" textLength="49" lengthAdjust="spacingAndGlyphs">Софийска</text>
<text x="565" y="348" textLength="71" lengthAdjust="spacingAndGlyphs">Стара Загора</text>
<text x="511" y="369" textLength="43" lengthAdjust="spacingAndGlyphs">Пловдив</text>
<text x="495" y="445" textLength="38" lengthAdjust="spacingAndGlyphs">Смолян</text>
<text x="561" y="451" textLength="53" lengthAdjust="spacingAndGlyphs">Кърджали</text>
<text x="615" y="427" textLength="40" lengthAdjust="spacingAndGlyphs">Хасково</text>
<text x="648" y="319" textLength="37" lengthAdjust="spacingAndGlyphs">Сливен</text>
<text x="678" y="360" textLength="33" lengthAdjust="spacingAndGlyphs">Ямбол</text>
<text x="736" y="343" textLength="31" lengthAdjust="spacingAndGlyphs">Бургас</text>
<text x="773" y="437" textLength="44" lengthAdjust="spacingAndGlyphs">Kırklareli</text>
</g>
<text x="551" y="308" font-size="14.5" fill="#6c5c72" stroke="#fff" stroke-width="2" paint-order="stroke" textLength="64" lengthAdjust="spacingAndGlyphs">България</text>
<g font-size="14.5" fill="#5a5a5a" stroke="#fff" stroke-width="2" paint-order="stroke"><text x="237" y="388">е</text><text x="232" y="438" textLength="52" lengthAdjust="spacingAndGlyphs">еверна</text><text x="232" y="454" textLength="63" lengthAdjust="spacingAndGlyphs">кедонија</text><text x="237" y="333">n</text></g>
<circle cx="380" cy="330" r="35" fill="url(#g0)" opacity=".55"/>
<circle cx="470" cy="400" r="35" fill="url(#g0)" opacity=".55"/>
<circle cx="560" cy="360" r="40" fill="url(#g0)" opacity=".55"/>
<circle cx="640" cy="380" r="35" fill="url(#g0)" opacity=".55"/>
<circle cx="720" cy="300" r="35" fill="url(#g0)" opacity=".55"/>
<circle cx="600" cy="250" r="35" fill="url(#g0)" opacity=".55"/>
<circle cx="500" cy="230" r="35" fill="url(#g0)" opacity=".55"/>
<circle cx="420" cy="200" r="30" fill="url(#g0)" opacity=".55"/>
<circle cx="700" cy="200" r="35" fill="url(#g0)" opacity=".55"/>
<circle cx="780" cy="220" r="30" fill="url(#g0)" opacity=".55"/>
<circle cx="400" cy="430" r="35" fill="url(#g0)" opacity=".55"/>
<circle cx="560" cy="430" r="30" fill="url(#g0)" opacity=".55"/>
<circle cx="760" cy="330" r="30" fill="url(#g0)" opacity=".55"/>
<circle cx="640" cy="180" r="25" fill="url(#g0)" opacity=".55"/>
<circle cx="800" cy="190" r="25" fill="url(#g0)" opacity=".55"/>
<circle cx="357" cy="144" r="19.5" fill="url(#g2)"/>
<circle cx="388" cy="171" r="15.6" fill="url(#g0)"/>
<circle cx="390" cy="218" r="18.2" fill="url(#g1)"/>
<circle cx="420" cy="244" r="20.8" fill="url(#g1)"/>
<circle cx="448" cy="209" r="15.6" fill="url(#g0)"/>
<circle cx="464" cy="230" r="16.9" fill="url(#g0)"/>
<circle cx="514" cy="217" r="22.1" fill="url(#g3)"/>
<circle cx="523" cy="253" r="16.9" fill="url(#g1)"/>
<circle cx="555" cy="227" r="15.6" fill="url(#g0)"/>
<circle cx="609" cy="261" r="22.1" fill="url(#g2)"/>
<circle cx="573" cy="284" r="18.2" fill="url(#g1)"/>
<circle cx="638.5" cy="165" r="19.5" fill="url(#g3)"/>
<circle cx="752" cy="129" r="16.9" fill="url(#g0)"/>
<circle cx="737" cy="169" r="19.5" fill="url(#g0)"/>
<circle cx="690" cy="200" r="18.2" fill="url(#g1)"/>
<circle cx="727" cy="233" r="20.8" fill="url(#g2)"/>
<circle cx="693" cy="239" r="18.2" fill="url(#g1)"/>
<circle cx="660" cy="218" r="16.9" fill="url(#g0)"/>
<circle cx="808" cy="196" r="20.8" fill="url(#g2)"/>
<circle cx="714" cy="177" r="15.6" fill="url(#g0)"/>
<circle cx="755" cy="275" r="16.9" fill="url(#g0)"/>
<circle cx="372" cy="319" r="18.2" fill="url(#g2)"/>
<circle cx="341" cy="361" r="18.2" fill="url(#g1)"/>
<circle cx="376" cy="360" r="16.9" fill="url(#g0)"/>
<circle cx="378" cy="392" r="22.1" fill="url(#g2)"/>
<circle cx="412" cy="409" r="22.1" fill="url(#g1)"/>
<circle cx="394" cy="446" r="18.2" fill="url(#g1)"/>
<circle cx="379" cy="464" r="18.2" fill="url(#g1)"/>
<circle cx="433" cy="445" r="18.2" fill="url(#g1)"/>
<circle cx="490" cy="370" r="22.1" fill="url(#g3)"/>
<circle cx="457" cy="388" r="18.2" fill="url(#g0)"/>
<circle cx="442" cy="443" r="18.2" fill="url(#g1)"/>
<circle cx="608" cy="340" r="22.1" fill="url(#g2)"/>
<circle cx="602" cy="398" r="23.4" fill="url(#g2)"/>
<circle cx="585" cy="436" r="20.8" fill="url(#g2)"/>
<circle cx="540" cy="392" r="18.2" fill="url(#g1)"/>
<circle cx="579" cy="285" r="18.2" fill="url(#g0)"/>
<circle cx="526" cy="282" r="16.9" fill="url(#g0)"/>
<circle cx="532" cy="313" r="16.9" fill="url(#g0)"/>
<circle cx="585" cy="315" r="16.9" fill="url(#g0)"/>
<circle cx="670" cy="309" r="20.8" fill="url(#g3)"/>
<circle cx="687" cy="334" r="20.8" fill="url(#g2)"/>
<circle cx="775" cy="330" r="22.1" fill="url(#g3)"/>
<circle cx="749" cy="297" r="20.8" fill="url(#g0)"/>
<circle cx="642" cy="333" r="16.9" fill="url(#g0)"/>
<circle cx="660" cy="419" r="18.2" fill="url(#g0)"/>
<circle cx="794" cy="312" r="15.6" fill="url(#g0)"/>
<circle cx="470" cy="380" r="16.9" fill="url(#g0)"/>
<circle cx="410" cy="230" r="16.9" fill="url(#g0)"/>
<circle cx="397.6" cy="307.3" r="27.0" fill="url(#g1)" opacity=".8"/>
<circle cx="397.6" cy="307.3" r="16.8" fill="url(#g5)" opacity=".85"/>
<circle cx="527" cy="377" r="27.0" fill="url(#g1)" opacity=".8"/>
<circle cx="527" cy="377" r="15.5" fill="url(#g4)" opacity=".95"/>
<circle cx="815.4" cy="244" r="18.0" fill="url(#g1)" opacity=".8"/>
<circle cx="815.4" cy="244" r="15.5" fill="url(#g4)" opacity=".95"/>
<rect x="957" y="96" width="66" height="34" fill="#323232"/>
<path d="M967.5,121 V112.5 L966.5,113.5 L974.5,105 L982,113 L981,112.5 V121 H977.5 V115.5 H971.5 V121 Z M969.5,110 V105 H971.5 V107.5" fill="none" stroke="#d8d8d8" stroke-width="1.1"/>
<rect x="999.3" y="105.3" width="2.6" height="2.6" fill="none" stroke="#d8d8d8" stroke-width="0.9"/>
<rect x="1004" y="106.0" width="9" height="1.1" fill="#d8d8d8"/>
<circle cx="1000.6" cy="110.6" r="1.4" fill="none" stroke="#d8d8d8" stroke-width="0.9"/>
<rect x="1004" y="110.0" width="9" height="1.1" fill="#d8d8d8"/>
<rect x="999.3" y="113.3" width="2.6" height="2.6" fill="none" stroke="#d8d8d8" stroke-width="0.9"/>
<rect x="1004" y="114.0" width="9" height="1.1" fill="#d8d8d8"/>
<path d="M999.2,119.8 L1000.6,117.2 L1002,119.8 Z" fill="none" stroke="#d8d8d8" stroke-width="0.9"/>
<rect x="1004" y="118.0" width="9" height="1.1" fill="#d8d8d8"/>
<rect x="992" y="386" width="31" height="57" fill="#323232"/>
<rect x="1001" y="400" width="13" height="1.6" fill="#d8d8d8"/><rect x="1006.7" y="394.3" width="1.6" height="13" fill="#d8d8d8"/>
<rect x="1001" y="427" width="13" height="1.6" fill="#d8d8d8"/>
<rect x="704" y="449" width="316" height="16" fill="#fff" opacity=".6"/>
<text x="708" y="461.5" font-size="12.5" fill="#333" textLength="307" lengthAdjust="spacingAndGlyphs">Map data © OpenStreetMap contributors, CC-BY-SA</text>
</svg>
</div>

<!-- nav bar -->
<div class="pn" style="left:247px;top:469px;width:773px;height:29px;border-color:#474747"></div>
<svg class="a" style="left:256px;top:476px" width="10" height="16" viewBox="0 0 10 16"><path d="M8 2 L2.5 8 L8 14 Z" fill="none" stroke="#cfcfcf" stroke-width="1.3"/></svg>
<svg class="a" style="left:1000px;top:476px" width="10" height="16" viewBox="0 0 10 16"><path d="M2 2 L7.5 8 L2 14 Z" fill="none" stroke="#cfcfcf" stroke-width="1.3"/></svg>
<div class="t" style="left:536px;top:475.3px;font-size:12.7px;color:#cfcfcf">Концентрация на карантинирани</div>

<!-- chart panel -->
<div class="pn" style="left:236px;top:509px;width:795px;height:132px"></div>
<div class="t" style="left:242px;top:518px;font-size:14.5px;color:#c8c8c8">Брой заболели по дни</div>
<svg class="a" style="left:236px;top:540px" width="795" height="100" viewBox="236 540 795 100" font-family="Liberation Sans">
<g stroke="#4a4a4a" stroke-width="1" stroke-dasharray="3,3">
<line x1="287" y1="561.5" x2="998" y2="561.5"/>
<line x1="287" y1="577.5" x2="998" y2="577.5"/>
<line x1="287" y1="593.5" x2="998" y2="593.5"/>
<line x1="349.5" y1="561" x2="349.5" y2="609"/>
<line x1="428.5" y1="561" x2="428.5" y2="609"/>
<line x1="509" y1="561" x2="509" y2="609"/>
<line x1="588.5" y1="561" x2="588.5" y2="609"/>
<line x1="669" y1="561" x2="669" y2="609"/>
<line x1="750" y1="561" x2="750" y2="609"/>
<line x1="829.5" y1="561" x2="829.5" y2="609"/>
<line x1="910" y1="561" x2="910" y2="609"/>
<line x1="990" y1="561" x2="990" y2="609"/>
</g>
<g stroke="#8a8a8a" stroke-width="1">
<line x1="286.5" y1="561" x2="286.5" y2="609.5"/><line x1="286" y1="609.5" x2="998" y2="609.5"/>
<line x1="281" y1="561.5" x2="286" y2="561.5"/>
<line x1="281" y1="577.5" x2="286" y2="577.5"/>
<line x1="281" y1="593.5" x2="286" y2="593.5"/>
<line x1="281" y1="609.5" x2="286" y2="609.5"/>
<line x1="349.5" y1="609.5" x2="349.5" y2="614"/>
<line x1="428.5" y1="609.5" x2="428.5" y2="614"/>
<line x1="509" y1="609.5" x2="509" y2="614"/>
<line x1="588.5" y1="609.5" x2="588.5" y2="614"/>
<line x1="669" y1="609.5" x2="669" y2="614"/>
<line x1="750" y1="609.5" x2="750" y2="614"/>
<line x1="829.5" y1="609.5" x2="829.5" y2="614"/>
<line x1="910" y1="609.5" x2="910" y2="614"/>
<line x1="990" y1="609.5" x2="990" y2="614"/>
</g>
<g font-size="11.5" fill="#b8b8b8" text-anchor="end">
<text x="276" y="565.5">6k</text>
<text x="276" y="581.5">4k</text>
<text x="276" y="597.5">2k</text>
<text x="276" y="613.5">0</text>
</g>
<g font-size="11" fill="#b8b8b8" text-anchor="middle">
<text x="308" y="628.5">M03</text>
<text x="390" y="628.5">M04</text>
<text x="468.5" y="628.5">M05</text>
<text x="549" y="628.5">M06</text>
<text x="629" y="628.5">M07</text>
<text x="709.5" y="628.5">M08</text>
<text x="790" y="628.5">M09</text>
<text x="870" y="628.5">M10</text>
<text x="950" y="628.5">M11</text>
</g>
<g fill="#f5a800"><rect x="285.75" y="609.3" width="2.98" height="1.2"/><rect x="288.38" y="609.3" width="2.98" height="1.2"/><rect x="291.00" y="609.1" width="2.98" height="1.2"/><rect x="293.62" y="609.1" width="2.98" height="1.2"/><rect x="296.25" y="609.0" width="2.98" height="1.2"/><rect x="298.88" y="609.1" width="2.98" height="1.2"/><rect x="301.50" y="609.0" width="2.98" height="1.2"/><rect x="304.12" y="609.1" width="2.98" height="1.2"/><rect x="306.75" y="609.3" width="2.98" height="1.2"/><rect x="309.38" y="609.0" width="2.98" height="1.2"/><rect x="312.00" y="609.0" width="2.98" height="1.2"/><rect x="314.62" y="609.0" width="2.98" height="1.2"/><rect x="317.25" y="608.9" width="2.98" height="1.2"/><rect x="319.88" y="609.0" width="2.98" height="1.2"/><rect x="322.50" y="609.0" width="2.98" height="1.2"/><rect x="325.12" y="609.2" width="2.98" height="1.2"/><rect x="327.75" y="608.9" width="2.98" height="1.2"/><rect x="330.38" y="608.9" width="2.98" height="1.2"/><rect x="333.00" y="609.0" width="2.98" height="1.2"/><rect x="335.62" y="608.9" width="2.98" height="1.2"/><rect x="338.25" y="608.9" width="2.98" height="1.2"/><rect x="340.88" y="609.2" width="2.98" height="1.2"/><rect x="343.50" y="609.3" width="2.98" height="1.2"/><rect x="346.12" y="609.1" width="2.98" height="1.2"/><rect x="348.75" y="609.1" width="2.98" height="1.2"/><rect x="351.38" y="609.1" width="2.98" height="1.2"/><rect x="354.00" y="609.2" width="2.98" height="1.2"/><rect x="356.62" y="609.1" width="2.98" height="1.2"/><rect x="359.25" y="609.2" width="2.98" height="1.2"/><rect x="361.88" y="609.3" width="2.98" height="1.2"/><rect x="364.50" y="609.2" width="2.98" height="1.2"/><rect x="367.12" y="609.3" width="2.98" height="1.2"/><rect x="369.75" y="609.3" width="2.98" height="1.2"/><rect x="372.38" y="609.3" width="2.98" height="1.2"/><rect x="375.00" y="609.3" width="2.98" height="1.2"/><rect x="377.62" y="609.4" width="2.98" height="1.2"/><rect x="380.25" y="609.4" width="2.98" height="1.2"/><rect x="382.88" y="609.4" width="2.98" height="1.2"/><rect x="385.50" y="609.4" width="2.98" height="1.2"/><rect x="388.12" y="609.4" width="2.98" height="1.2"/><rect x="390.75" y="609.4" width="2.98" height="1.2"/><rect x="393.38" y="609.4" width="2.98" height="1.2"/><rect x="396.00" y="609.4" width="2.98" height="1.2"/><rect x="398.62" y="609.5" width="2.98" height="1.2"/><rect x="401.25" y="609.4" width="2.98" height="1.2"/><rect x="403.88" y="609.4" width="2.98" height="1.2"/><rect x="406.50" y="609.4" width="2.98" height="1.2"/><rect x="409.12" y="609.4" width="2.98" height="1.2"/><rect x="411.75" y="609.4" width="2.98" height="1.2"/><rect x="414.38" y="609.4" width="2.98" height="1.2"/><rect x="417.00" y="609.4" width="2.98" height="1.2"/><rect x="419.62" y="609.3" width="2.98" height="1.2"/><rect x="422.25" y="609.3" width="2.98" height="1.2"/><rect x="424.88" y="609.3" width="2.98" height="1.2"/><rect x="427.50" y="609.2" width="2.98" height="1.2"/><rect x="430.12" y="609.2" width="2.98" height="1.2"/><rect x="432.75" y="609.2" width="2.98" height="1.2"/><rect x="435.38" y="609.4" width="2.98" height="1.2"/><rect x="438.00" y="609.2" width="2.98" height="1.2"/><rect x="440.62" y="609.2" width="2.98" height="1.2"/><rect x="443.25" y="609.1" width="2.98" height="1.2"/><rect x="445.88" y="609.1" width="2.98" height="1.2"/><rect x="448.50" y="609.0" width="2.98" height="1.2"/><rect x="451.12" y="609.2" width="2.98" height="1.2"/><rect x="453.75" y="609.2" width="2.98" height="1.2"/><rect x="456.38" y="608.9" width="2.98" height="1.2"/><rect x="459.00" y="608.9" width="2.98" height="1.2"/><rect x="461.62" y="608.9" width="2.98" height="1.2"/><rect x="464.25" y="609.0" width="2.98" height="1.2"/><rect x="466.88" y="609.0" width="2.98" height="1.2"/><rect x="469.50" y="609.0" width="2.98" height="1.2"/><rect x="472.12" y="609.3" width="2.98" height="1.2"/><rect x="474.75" y="609.0" width="2.98" height="1.2"/><rect x="477.38" y="609.0" width="2.98" height="1.2"/><rect x="480.00" y="609.0" width="2.98" height="1.2"/><rect x="482.62" y="609.0" width="2.98" height="1.2"/><rect x="485.25" y="609.0" width="2.98" height="1.2"/><rect x="487.88" y="609.1" width="2.98" height="1.2"/><rect x="490.50" y="609.3" width="2.98" height="1.2"/><rect x="493.12" y="609.1" width="2.98" height="1.2"/><rect x="495.75" y="609.0" width="2.98" height="1.2"/><rect x="498.38" y="609.1" width="2.98" height="1.2"/><rect x="501.00" y="609.1" width="2.98" height="1.2"/><rect x="503.62" y="609.2" width="2.98" height="1.2"/><rect x="506.25" y="609.3" width="2.98" height="1.2"/><rect x="508.88" y="609.2" width="2.98" height="1.2"/><rect x="511.50" y="608.7" width="2.98" height="1.2"/><rect x="514.12" y="608.7" width="2.98" height="1.2"/><rect x="516.75" y="608.7" width="2.98" height="1.2"/><rect x="519.38" y="608.8" width="2.98" height="1.2"/><rect x="522.00" y="608.7" width="2.98" height="1.2"/><rect x="524.62" y="608.8" width="2.98" height="1.2"/><rect x="527.25" y="609.1" width="2.98" height="1.2"/><rect x="529.88" y="608.7" width="2.98" height="1.2"/><rect x="532.50" y="608.6" width="2.98" height="1.2"/><rect x="535.12" y="608.5" width="2.98" height="1.2"/><rect x="537.75" y="608.5" width="2.98" height="1.2"/><rect x="540.38" y="608.7" width="2.98" height="1.2"/><rect x="543.00" y="608.8" width="2.98" height="1.2"/><rect x="545.62" y="609.0" width="2.98" height="1.2"/><rect x="548.25" y="608.6" width="2.98" height="1.2"/><rect x="550.88" y="608.4" width="2.98" height="1.2"/><rect x="553.50" y="608.4" width="2.98" height="1.2"/><rect x="556.12" y="608.4" width="2.98" height="1.2"/><rect x="558.75" y="608.5" width="2.98" height="1.2"/><rect x="561.38" y="608.6" width="2.98" height="1.2"/><rect x="564.00" y="608.9" width="2.98" height="1.2"/><rect x="566.62" y="608.3" width="2.98" height="1.2"/><rect x="569.25" y="608.3" width="2.98" height="1.2"/><rect x="571.88" y="608.4" width="2.98" height="1.2"/><rect x="574.50" y="608.3" width="2.98" height="1.2"/><rect x="577.12" y="608.3" width="2.98" height="1.2"/><rect x="579.75" y="608.5" width="2.98" height="1.2"/><rect x="582.38" y="608.9" width="2.98" height="1.2"/><rect x="585.00" y="608.2" width="2.98" height="1.3"/><rect x="587.62" y="607.6" width="2.98" height="1.9"/><rect x="590.25" y="607.9" width="2.98" height="1.6"/><rect x="592.88" y="607.4" width="2.98" height="2.1"/><rect x="595.50" y="607.8" width="2.98" height="1.7"/><rect x="598.12" y="608.0" width="2.98" height="1.5"/><rect x="600.75" y="608.6" width="2.98" height="1.2"/><rect x="603.38" y="607.2" width="2.98" height="2.3"/><rect x="606.00" y="607.7" width="2.98" height="1.8"/><rect x="608.62" y="607.6" width="2.98" height="1.9"/><rect x="611.25" y="607.5" width="2.98" height="2.0"/><rect x="613.88" y="607.3" width="2.98" height="2.2"/><rect x="616.50" y="607.7" width="2.98" height="1.8"/><rect x="619.12" y="608.6" width="2.98" height="1.2"/><rect x="621.75" y="607.5" width="2.98" height="2.0"/><rect x="624.38" y="607.7" width="2.98" height="1.8"/><rect x="627.00" y="607.8" width="2.98" height="1.7"/><rect x="629.62" y="607.7" width="2.98" height="1.8"/><rect x="632.25" y="607.9" width="2.98" height="1.6"/><rect x="634.88" y="608.3" width="2.98" height="1.2"/><rect x="637.50" y="608.7" width="2.98" height="1.2"/><rect x="640.12" y="607.9" width="2.98" height="1.6"/><rect x="642.75" y="607.9" width="2.98" height="1.6"/><rect x="645.38" y="608.1" width="2.98" height="1.4"/><rect x="648.00" y="608.3" width="2.98" height="1.2"/><rect x="650.62" y="607.9" width="2.98" height="1.6"/><rect x="653.25" y="608.3" width="2.98" height="1.2"/><rect x="655.88" y="608.8" width="2.98" height="1.2"/><rect x="658.50" y="607.8" width="2.98" height="1.7"/><rect x="661.12" y="607.8" width="2.98" height="1.7"/><rect x="663.75" y="607.9" width="2.98" height="1.6"/><rect x="666.38" y="607.7" width="2.98" height="1.8"/><rect x="669.00" y="608.1" width="2.98" height="1.4"/><rect x="671.62" y="608.3" width="2.98" height="1.2"/><rect x="674.25" y="608.9" width="2.98" height="1.2"/><rect x="676.88" y="608.1" width="2.98" height="1.4"/><rect x="679.50" y="608.2" width="2.98" height="1.3"/><rect x="682.12" y="608.3" width="2.98" height="1.2"/><rect x="684.75" y="608.2" width="2.98" height="1.3"/><rect x="687.38" y="608.1" width="2.98" height="1.4"/><rect x="690.00" y="608.5" width="2.98" height="1.2"/><rect x="692.62" y="608.9" width="2.98" height="1.2"/><rect x="695.25" y="608.4" width="2.98" height="1.2"/><rect x="697.88" y="608.1" width="2.98" height="1.4"/><rect x="700.50" y="608.2" width="2.98" height="1.3"/><rect x="703.12" y="608.4" width="2.98" height="1.2"/><rect x="705.75" y="608.4" width="2.98" height="1.2"/><rect x="708.38" y="608.6" width="2.98" height="1.2"/><rect x="711.00" y="608.8" width="2.98" height="1.2"/><rect x="713.62" y="608.5" width="2.98" height="1.2"/><rect x="716.25" y="608.5" width="2.98" height="1.2"/><rect x="718.88" y="608.4" width="2.98" height="1.2"/><rect x="721.50" y="608.4" width="2.98" height="1.2"/><rect x="724.12" y="608.4" width="2.98" height="1.2"/><rect x="726.75" y="608.7" width="2.98" height="1.2"/><rect x="729.38" y="609.0" width="2.98" height="1.2"/><rect x="732.00" y="608.4" width="2.98" height="1.2"/><rect x="734.62" y="608.4" width="2.98" height="1.2"/><rect x="737.25" y="608.5" width="2.98" height="1.2"/><rect x="739.88" y="608.6" width="2.98" height="1.2"/><rect x="742.50" y="608.4" width="2.98" height="1.2"/><rect x="745.12" y="608.8" width="2.98" height="1.2"/><rect x="747.75" y="609.1" width="2.98" height="1.2"/><rect x="750.38" y="608.5" width="2.98" height="1.2"/><rect x="753.00" y="608.5" width="2.98" height="1.2"/><rect x="755.62" y="608.5" width="2.98" height="1.2"/><rect x="758.25" y="608.3" width="2.98" height="1.2"/><rect x="760.88" y="608.5" width="2.98" height="1.2"/><rect x="763.50" y="608.7" width="2.98" height="1.2"/><rect x="766.12" y="609.0" width="2.98" height="1.2"/><rect x="768.75" y="608.5" width="2.98" height="1.2"/><rect x="771.38" y="608.1" width="2.98" height="1.4"/><rect x="774.00" y="608.2" width="2.98" height="1.3"/><rect x="776.62" y="608.2" width="2.98" height="1.3"/><rect x="779.25" y="608.3" width="2.98" height="1.2"/><rect x="781.88" y="608.6" width="2.98" height="1.2"/><rect x="784.50" y="608.9" width="2.98" height="1.2"/><rect x="787.12" y="608.3" width="2.98" height="1.2"/><rect x="789.75" y="607.9" width="2.98" height="1.6"/><rect x="792.38" y="608.2" width="2.98" height="1.3"/><rect x="795.00" y="608.2" width="2.98" height="1.3"/><rect x="797.62" y="608.2" width="2.98" height="1.3"/><rect x="800.25" y="608.2" width="2.98" height="1.3"/><rect x="802.88" y="608.7" width="2.98" height="1.2"/><rect x="805.50" y="607.9" width="2.98" height="1.6"/><rect x="808.12" y="607.8" width="2.98" height="1.7"/><rect x="810.75" y="607.7" width="2.98" height="1.8"/><rect x="813.38" y="608.1" width="2.98" height="1.4"/><rect x="816.00" y="607.9" width="2.98" height="1.6"/><rect x="818.62" y="608.3" width="2.98" height="1.2"/><rect x="821.25" y="608.6" width="2.98" height="1.2"/><rect x="823.88" y="607.7" width="2.98" height="1.8"/><rect x="826.50" y="607.9" width="2.98" height="1.6"/><rect x="829.12" y="607.6" width="2.98" height="1.9"/><rect x="831.75" y="607.4" width="2.98" height="2.1"/><rect x="834.38" y="608.2" width="2.98" height="1.3"/><rect x="837.00" y="608.5" width="2.98" height="1.2"/><rect x="839.62" y="608.7" width="2.98" height="1.2"/><rect x="842.25" y="605.4" width="2.98" height="4.1"/><rect x="844.88" y="604.8" width="2.98" height="4.7"/><rect x="847.50" y="604.3" width="2.98" height="5.2"/><rect x="850.12" y="603.9" width="2.98" height="5.6"/><rect x="852.75" y="604.9" width="2.98" height="4.6"/><rect x="855.38" y="606.3" width="2.98" height="3.2"/><rect x="858.00" y="607.2" width="2.98" height="2.3"/><rect x="860.62" y="602.0" width="2.98" height="7.5"/><rect x="863.25" y="600.8" width="2.98" height="8.7"/><rect x="865.88" y="600.0" width="2.98" height="9.5"/><rect x="868.50" y="599.9" width="2.98" height="9.6"/><rect x="871.12" y="601.9" width="2.98" height="7.6"/><rect x="873.75" y="605.2" width="2.98" height="4.3"/><rect x="876.38" y="605.5" width="2.98" height="4.0"/><rect x="879.00" y="597.6" width="2.98" height="11.9"/><rect x="881.62" y="596.4" width="2.98" height="13.1"/><rect x="884.25" y="595.6" width="2.98" height="13.9"/><rect x="886.88" y="592.7" width="2.98" height="16.8"/><rect x="889.50" y="596.2" width="2.98" height="13.3"/><rect x="892.12" y="603.1" width="2.98" height="6.4"/><rect x="894.75" y="602.4" width="2.98" height="7.1"/><rect x="897.38" y="590.5" width="2.98" height="19.0"/><rect x="900.00" y="586.8" width="2.98" height="22.7"/><rect x="902.62" y="584.9" width="2.98" height="24.6"/><rect x="905.25" y="583.5" width="2.98" height="26.0"/><rect x="907.88" y="587.2" width="2.98" height="22.3"/><rect x="910.50" y="599.7" width="2.98" height="9.8"/><rect x="913.12" y="599.9" width="2.98" height="9.6"/><rect x="915.75" y="583.9" width="2.98" height="25.6"/><rect x="918.38" y="579.5" width="2.98" height="30.0"/><rect x="921.00" y="580.0" width="2.98" height="29.5"/><rect x="923.62" y="578.0" width="2.98" height="31.5"/><rect x="926.25" y="581.2" width="2.98" height="28.3"/><rect x="928.88" y="596.1" width="2.98" height="13.4"/><rect x="931.50" y="596.9" width="2.98" height="12.6"/><rect x="934.12" y="577.4" width="2.98" height="32.1"/><rect x="936.75" y="573.7" width="2.98" height="35.8"/><rect x="939.38" y="575.6" width="2.98" height="33.9"/><rect x="942.00" y="575.8" width="2.98" height="33.7"/><rect x="944.62" y="582.2" width="2.98" height="27.3"/><rect x="947.25" y="596.5" width="2.98" height="13.0"/><rect x="949.88" y="596.0" width="2.98" height="13.5"/><rect x="952.50" y="574.6" width="2.98" height="34.9"/><rect x="955.12" y="572.9" width="2.98" height="36.6"/><rect x="957.75" y="571.3" width="2.98" height="38.2"/><rect x="960.38" y="566.7" width="2.98" height="42.8"/><rect x="963.00" y="579.0" width="2.98" height="30.5"/><rect x="965.62" y="594.4" width="2.98" height="15.1"/><rect x="968.25" y="595.0" width="2.98" height="14.5"/><rect x="970.88" y="575.1" width="2.98" height="34.4"/><rect x="973.50" y="574.7" width="2.98" height="34.8"/><rect x="976.12" y="573.0" width="2.98" height="36.5"/><rect x="978.75" y="575.9" width="2.98" height="33.6"/><rect x="981.38" y="582.2" width="2.98" height="27.3"/><rect x="984.00" y="596.4" width="2.98" height="13.1"/><rect x="986.62" y="597.7" width="2.98" height="11.8"/><rect x="989.25" y="580.2" width="2.98" height="29.3"/><rect x="991.88" y="578.7" width="2.98" height="30.8"/><rect x="994.50" y="581.7" width="2.98" height="27.8"/></g>
<g font-size="10.5" fill="#111" text-anchor="middle" stroke="#111" stroke-width="3.2" stroke-linejoin="round"><text x="287.1" y="605.1">30</text><text x="289.7" y="605.1">22</text><text x="292.3" y="604.9">45</text><text x="294.9" y="604.9">49</text><text x="297.6" y="604.8">59</text><text x="300.2" y="604.9">56</text><text x="302.8" y="604.8">63</text><text x="305.4" y="604.9">52</text><text x="308.1" y="605.1">30</text><text x="310.7" y="604.8">61</text><text x="313.3" y="604.8">61</text><text x="315.9" y="604.8">68</text><text x="318.6" y="604.7">72</text><text x="321.2" y="604.8">68</text><text x="323.8" y="604.8">62</text><text x="326.4" y="605.0">31</text><text x="329.1" y="604.7">79</text><text x="331.7" y="604.7">69</text><text x="334.3" y="604.8">59</text><text x="336.9" y="604.7">75</text><text x="339.6" y="604.7">72</text><text x="342.2" y="605.0">43</text><text x="344.8" y="605.1">30</text><text x="347.4" y="604.9">52</text><text x="350.1" y="604.9">55</text><text x="352.7" y="604.9">46</text><text x="355.3" y="605.0">41</text><text x="357.9" y="604.9">48</text><text x="360.6" y="605.0">31</text><text x="363.2" y="605.1">19</text><text x="365.8" y="605.0">32</text><text x="368.4" y="605.1">27</text><text x="371.1" y="605.1">26</text><text x="373.7" y="605.1">25</text><text x="376.3" y="605.1">19</text><text x="378.9" y="605.2">15</text><text x="381.6" y="605.2">8</text><text x="384.2" y="605.2">16</text><text x="386.8" y="605.2">14</text><text x="389.4" y="605.2">12</text><text x="392.1" y="605.2">9</text><text x="394.7" y="605.2">9</text><text x="397.3" y="605.2">9</text><text x="399.9" y="605.3">5</text><text x="402.6" y="605.2">10</text><text x="405.2" y="605.2">12</text><text x="407.8" y="605.2">11</text><text x="410.4" y="605.2">14</text><text x="413.1" y="605.2">13</text><text x="415.7" y="605.2">14</text><text x="418.3" y="605.2">9</text><text x="420.9" y="605.1">20</text><text x="423.6" y="605.1">29</text><text x="426.2" y="605.1">30</text><text x="428.8" y="605.0">34</text><text x="431.4" y="605.0">31</text><text x="434.1" y="605.0">32</text><text x="436.7" y="605.2">17</text><text x="439.3" y="605.0">40</text><text x="441.9" y="605.0">42</text><text x="444.6" y="604.9">55</text><text x="447.2" y="604.9">51</text><text x="449.8" y="604.8">63</text><text x="452.4" y="605.0">43</text><text x="455.1" y="605.0">31</text><text x="457.7" y="604.7">70</text><text x="460.3" y="604.7">74</text><text x="462.9" y="604.7">70</text><text x="465.6" y="604.8">66</text><text x="468.2" y="604.8">60</text><text x="470.8" y="604.8">57</text><text x="473.4" y="605.1">30</text><text x="476.1" y="604.8">67</text><text x="478.7" y="604.8">63</text><text x="481.3" y="604.8">62</text><text x="483.9" y="604.8">57</text><text x="486.6" y="604.8">58</text><text x="489.2" y="604.9">45</text><text x="491.8" y="605.1">28</text><text x="494.4" y="604.9">54</text><text x="497.1" y="604.8">63</text><text x="499.7" y="604.9">52</text><text x="502.3" y="604.9">47</text><text x="504.9" y="605.0">40</text><text x="507.6" y="605.1">30</text><text x="510.2" y="605.0">43</text><text x="512.8" y="604.5">100</text><text x="515.4" y="604.5">99</text><text x="518.0" y="604.5">103</text><text x="520.7" y="604.6">91</text><text x="523.3" y="604.5">103</text><text x="525.9" y="604.6">91</text><text x="528.5" y="604.9">52</text><text x="531.2" y="604.5">102</text><text x="533.8" y="604.4">114</text><text x="536.4" y="604.3">125</text><text x="539.0" y="604.3">124</text><text x="541.7" y="604.5">104</text><text x="544.3" y="604.6">82</text><text x="546.9" y="604.8">63</text><text x="549.5" y="604.4">108</text><text x="552.2" y="604.2">133</text><text x="554.8" y="604.2">132</text><text x="557.4" y="604.2">139</text><text x="560.0" y="604.3">127</text><text x="562.7" y="604.4">118</text><text x="565.3" y="604.7">71</text><text x="567.9" y="604.1">149</text><text x="570.5" y="604.1">156</text><text x="573.2" y="604.2">133</text><text x="575.8" y="604.1">156</text><text x="578.4" y="604.1">153</text><text x="581.0" y="604.3">123</text><text x="583.7" y="604.7">71</text><text x="586.3" y="604.0">158</text><text x="588.9" y="603.4">238</text><text x="591.5" y="603.7">208</text><text x="594.2" y="603.2">269</text><text x="596.8" y="603.6">218</text><text x="599.4" y="603.8">192</text><text x="602.0" y="604.4">114</text><text x="604.7" y="603.0">294</text><text x="607.3" y="603.5">233</text><text x="609.9" y="603.4">241</text><text x="612.5" y="603.3">249</text><text x="615.2" y="603.1">282</text><text x="617.8" y="603.5">223</text><text x="620.4" y="604.4">109</text><text x="623.0" y="603.3">247</text><text x="625.7" y="603.5">225</text><text x="628.3" y="603.6">213</text><text x="630.9" y="603.5">228</text><text x="633.5" y="603.7">202</text><text x="636.2" y="604.1">155</text><text x="638.8" y="604.5">96</text><text x="641.4" y="603.7">204</text><text x="644.0" y="603.7">196</text><text x="646.7" y="603.9">170</text><text x="649.3" y="604.1">153</text><text x="651.9" y="603.7">199</text><text x="654.5" y="604.1">154</text><text x="657.2" y="604.6">91</text><text x="659.8" y="603.6">212</text><text x="662.4" y="603.6">212</text><text x="665.0" y="603.7">205</text><text x="667.7" y="603.5">222</text><text x="670.3" y="603.9">176</text><text x="672.9" y="604.1">152</text><text x="675.5" y="604.7">77</text><text x="678.2" y="603.9">182</text><text x="680.8" y="604.0">165</text><text x="683.4" y="604.1">147</text><text x="686.0" y="604.0">165</text><text x="688.7" y="603.9">171</text><text x="691.3" y="604.3">124</text><text x="693.9" y="604.7">78</text><text x="696.5" y="604.2">137</text><text x="699.2" y="603.9">176</text><text x="701.8" y="604.0">168</text><text x="704.4" y="604.2">141</text><text x="707.0" y="604.2">139</text><text x="709.7" y="604.4">108</text><text x="712.3" y="604.6">82</text><text x="714.9" y="604.3">126</text><text x="717.5" y="604.3">129</text><text x="720.2" y="604.2">137</text><text x="722.8" y="604.2">140</text><text x="725.4" y="604.2">132</text><text x="728.0" y="604.5">95</text><text x="730.7" y="604.8">60</text><text x="733.3" y="604.2">136</text><text x="735.9" y="604.2">136</text><text x="738.5" y="604.3">127</text><text x="741.2" y="604.4">112</text><text x="743.8" y="604.2">142</text><text x="746.4" y="604.6">93</text><text x="749.0" y="604.9">53</text><text x="751.7" y="604.3">122</text><text x="754.3" y="604.3">126</text><text x="756.9" y="604.3">127</text><text x="759.5" y="604.1">152</text><text x="762.2" y="604.3">130</text><text x="764.8" y="604.5">105</text><text x="767.4" y="604.8">66</text><text x="770.0" y="604.3">131</text><text x="772.7" y="603.9">171</text><text x="775.3" y="604.0">169</text><text x="777.9" y="604.0">167</text><text x="780.5" y="604.1">152</text><text x="783.2" y="604.4">117</text><text x="785.8" y="604.7">75</text><text x="788.4" y="604.1">153</text><text x="791.0" y="603.7">199</text><text x="793.7" y="604.0">169</text><text x="796.3" y="604.0">170</text><text x="798.9" y="604.0">161</text><text x="801.5" y="604.0">162</text><text x="804.2" y="604.5">103</text><text x="806.8" y="603.7">199</text><text x="809.4" y="603.6">216</text><text x="812.0" y="603.5">228</text><text x="814.7" y="603.9">179</text><text x="817.3" y="603.7">197</text><text x="819.9" y="604.1">151</text><text x="822.5" y="604.4">119</text><text x="825.2" y="603.5">227</text><text x="827.8" y="603.7">205</text><text x="830.4" y="603.4">240</text><text x="833.0" y="603.2">262</text><text x="835.7" y="604.0">160</text><text x="838.3" y="604.3">120</text><text x="840.9" y="604.5">107</text><text x="843.5" y="601.2">518</text><text x="846.2" y="600.6">596</text><text x="848.8" y="600.1">652</text><text x="851.4" y="599.7">711</text><text x="854.0" y="600.7">587</text><text x="856.7" y="602.1">405</text></g>
<g font-size="10.5" fill="#b4b4b4" text-anchor="middle" stroke="#b4b4b4" stroke-width="0.4" stroke-linejoin="round"><text x="287.1" y="605.1">30</text><text x="289.7" y="605.1">22</text><text x="292.3" y="604.9">45</text><text x="294.9" y="604.9">49</text><text x="297.6" y="604.8">59</text><text x="300.2" y="604.9">56</text><text x="302.8" y="604.8">63</text><text x="305.4" y="604.9">52</text><text x="308.1" y="605.1">30</text><text x="310.7" y="604.8">61</text><text x="313.3" y="604.8">61</text><text x="315.9" y="604.8">68</text><text x="318.6" y="604.7">72</text><text x="321.2" y="604.8">68</text><text x="323.8" y="604.8">62</text><text x="326.4" y="605.0">31</text><text x="329.1" y="604.7">79</text><text x="331.7" y="604.7">69</text><text x="334.3" y="604.8">59</text><text x="336.9" y="604.7">75</text><text x="339.6" y="604.7">72</text><text x="342.2" y="605.0">43</text><text x="344.8" y="605.1">30</text><text x="347.4" y="604.9">52</text><text x="350.1" y="604.9">55</text><text x="352.7" y="604.9">46</text><text x="355.3" y="605.0">41</text><text x="357.9" y="604.9">48</text><text x="360.6" y="605.0">31</text><text x="363.2" y="605.1">19</text><text x="365.8" y="605.0">32</text><text x="368.4" y="605.1">27</text><text x="371.1" y="605.1">26</text><text x="373.7" y="605.1">25</text><text x="376.3" y="605.1">19</text><text x="378.9" y="605.2">15</text><text x="381.6" y="605.2">8</text><text x="384.2" y="605.2">16</text><text x="386.8" y="605.2">14</text><text x="389.4" y="605.2">12</text><text x="392.1" y="605.2">9</text><text x="394.7" y="605.2">9</text><text x="397.3" y="605.2">9</text><text x="399.9" y="605.3">5</text><text x="402.6" y="605.2">10</text><text x="405.2" y="605.2">12</text><text x="407.8" y="605.2">11</text><text x="410.4" y="605.2">14</text><text x="413.1" y="605.2">13</text><text x="415.7" y="605.2">14</text><text x="418.3" y="605.2">9</text><text x="420.9" y="605.1">20</text><text x="423.6" y="605.1">29</text><text x="426.2" y="605.1">30</text><text x="428.8" y="605.0">34</text><text x="431.4" y="605.0">31</text><text x="434.1" y="605.0">32</text><text x="436.7" y="605.2">17</text><text x="439.3" y="605.0">40</text><text x="441.9" y="605.0">42</text><text x="444.6" y="604.9">55</text><text x="447.2" y="604.9">51</text><text x="449.8" y="604.8">63</text><text x="452.4" y="605.0">43</text><text x="455.1" y="605.0">31</text><text x="457.7" y="604.7">70</text><text x="460.3" y="604.7">74</text><text x="462.9" y="604.7">70</text><text x="465.6" y="604.8">66</text><text x="468.2" y="604.8">60</text><text x="470.8" y="604.8">57</text><text x="473.4" y="605.1">30</text><text x="476.1" y="604.8">67</text><text x="478.7" y="604.8">63</text><text x="481.3" y="604.8">62</text><text x="483.9" y="604.8">57</text><text x="486.6" y="604.8">58</text><text x="489.2" y="604.9">45</text><text x="491.8" y="605.1">28</text><text x="494.4" y="604.9">54</text><text x="497.1" y="604.8">63</text><text x="499.7" y="604.9">52</text><text x="502.3" y="604.9">47</text><text x="504.9" y="605.0">40</text><text x="507.6" y="605.1">30</text><text x="510.2" y="605.0">43</text><text x="512.8" y="604.5">100</text><text x="515.4" y="604.5">99</text><text x="518.0" y="604.5">103</text><text x="520.7" y="604.6">91</text><text x="523.3" y="604.5">103</text><text x="525.9" y="604.6">91</text><text x="528.5" y="604.9">52</text><text x="531.2" y="604.5">102</text><text x="533.8" y="604.4">114</text><text x="536.4" y="604.3">125</text><text x="539.0" y="604.3">124</text><text x="541.7" y="604.5">104</text><text x="544.3" y="604.6">82</text><text x="546.9" y="604.8">63</text><text x="549.5" y="604.4">108</text><text x="552.2" y="604.2">133</text><text x="554.8" y="604.2">132</text><text x="557.4" y="604.2">139</text><text x="560.0" y="604.3">127</text><text x="562.7" y="604.4">118</text><text x="565.3" y="604.7">71</text><text x="567.9" y="604.1">149</text><text x="570.5" y="604.1">156</text><text x="573.2" y="604.2">133</text><text x="575.8" y="604.1">156</text><text x="578.4" y="604.1">153</text><text x="581.0" y="604.3">123</text><text x="583.7" y="604.7">71</text><text x="586.3" y="604.0">158</text><text x="588.9" y="603.4">238</text><text x="591.5" y="603.7">208</text><text x="594.2" y="603.2">269</text><text x="596.8" y="603.6">218</text><text x="599.4" y="603.8">192</text><text x="602.0" y="604.4">114</text><text x="604.7" y="603.0">294</text><text x="607.3" y="603.5">233</text><text x="609.9" y="603.4">241</text><text x="612.5" y="603.3">249</text><text x="615.2" y="603.1">282</text><text x="617.8" y="603.5">223</text><text x="620.4" y="604.4">109</text><text x="623.0" y="603.3">247</text><text x="625.7" y="603.5">225</text><text x="628.3" y="603.6">213</text><text x="630.9" y="603.5">228</text><text x="633.5" y="603.7">202</text><text x="636.2" y="604.1">155</text><text x="638.8" y="604.5">96</text><text x="641.4" y="603.7">204</text><text x="644.0" y="603.7">196</text><text x="646.7" y="603.9">170</text><text x="649.3" y="604.1">153</text><text x="651.9" y="603.7">199</text><text x="654.5" y="604.1">154</text><text x="657.2" y="604.6">91</text><text x="659.8" y="603.6">212</text><text x="662.4" y="603.6">212</text><text x="665.0" y="603.7">205</text><text x="667.7" y="603.5">222</text><text x="670.3" y="603.9">176</text><text x="672.9" y="604.1">152</text><text x="675.5" y="604.7">77</text><text x="678.2" y="603.9">182</text><text x="680.8" y="604.0">165</text><text x="683.4" y="604.1">147</text><text x="686.0" y="604.0">165</text><text x="688.7" y="603.9">171</text><text x="691.3" y="604.3">124</text><text x="693.9" y="604.7">78</text><text x="696.5" y="604.2">137</text><text x="699.2" y="603.9">176</text><text x="701.8" y="604.0">168</text><text x="704.4" y="604.2">141</text><text x="707.0" y="604.2">139</text><text x="709.7" y="604.4">108</text><text x="712.3" y="604.6">82</text><text x="714.9" y="604.3">126</text><text x="717.5" y="604.3">129</text><text x="720.2" y="604.2">137</text><text x="722.8" y="604.2">140</text><text x="725.4" y="604.2">132</text><text x="728.0" y="604.5">95</text><text x="730.7" y="604.8">60</text><text x="733.3" y="604.2">136</text><text x="735.9" y="604.2">136</text><text x="738.5" y="604.3">127</text><text x="741.2" y="604.4">112</text><text x="743.8" y="604.2">142</text><text x="746.4" y="604.6">93</text><text x="749.0" y="604.9">53</text><text x="751.7" y="604.3">122</text><text x="754.3" y="604.3">126</text><text x="756.9" y="604.3">127</text><text x="759.5" y="604.1">152</text><text x="762.2" y="604.3">130</text><text x="764.8" y="604.5">105</text><text x="767.4" y="604.8">66</text><text x="770.0" y="604.3">131</text><text x="772.7" y="603.9">171</text><text x="775.3" y="604.0">169</text><text x="777.9" y="604.0">167</text><text x="780.5" y="604.1">152</text><text x="783.2" y="604.4">117</text><text x="785.8" y="604.7">75</text><text x="788.4" y="604.1">153</text><text x="791.0" y="603.7">199</text><text x="793.7" y="604.0">169</text><text x="796.3" y="604.0">170</text><text x="798.9" y="604.0">161</text><text x="801.5" y="604.0">162</text><text x="804.2" y="604.5">103</text><text x="806.8" y="603.7">199</text><text x="809.4" y="603.6">216</text><text x="812.0" y="603.5">228</text><text x="814.7" y="603.9">179</text><text x="817.3" y="603.7">197</text><text x="819.9" y="604.1">151</text><text x="822.5" y="604.4">119</text><text x="825.2" y="603.5">227</text><text x="827.8" y="603.7">205</text><text x="830.4" y="603.4">240</text><text x="833.0" y="603.2">262</text><text x="835.7" y="604.0">160</text><text x="838.3" y="604.3">120</text><text x="840.9" y="604.5">107</text><text x="843.5" y="601.2">518</text><text x="846.2" y="600.6">596</text><text x="848.8" y="600.1">652</text><text x="851.4" y="599.7">711</text><text x="854.0" y="600.7">587</text><text x="856.7" y="602.1">405</text></g>
<g font-size="11" fill="#a8a8a8" text-anchor="middle" stroke="#1a1a1a" stroke-width="1.6" stroke-linejoin="round" paint-order="stroke"><text x="859.1" y="604.7">294</text><text x="861.7" y="599.5">943</text><text x="864.4" y="598.3">1k</text><text x="867.0" y="597.5">1k</text><text x="869.6" y="597.4">1k</text><text x="872.2" y="599.4">959</text><text x="874.9" y="602.7">538</text><text x="877.5" y="603.0">504</text><text x="880.1" y="595.1">1k</text><text x="882.7" y="593.9">1.7k</text><text x="885.4" y="593.1">1.8k</text><text x="888.0" y="590.2">2k</text><text x="890.6" y="593.7">2k</text><text x="893.2" y="600.6">807</text><text x="895.9" y="599.9">899</text><text x="898.5" y="588.0">2.4k</text><text x="901.1" y="584.3">3k</text><text x="903.7" y="582.4">3k</text><text x="906.4" y="581.0">3k</text><text x="909.0" y="584.7">2.8k</text><text x="911.6" y="597.2">1k</text><text x="914.2" y="597.4">1.2k</text><text x="916.9" y="581.4">3.2k</text><text x="919.5" y="577.0">4k</text><text x="922.1" y="577.5">3.7k</text><text x="924.7" y="575.5">4k</text><text x="927.4" y="578.7">4k</text><text x="930.0" y="593.6">1.7k</text><text x="932.6" y="594.4">1.6k</text><text x="935.2" y="574.9">4k</text><text x="937.9" y="571.2">5k</text><text x="940.5" y="573.1">4.3k</text><text x="943.1" y="573.3">4k</text><text x="945.7" y="579.7">3k</text><text x="948.4" y="594.0">1.6k</text><text x="951.0" y="593.5">2k</text><text x="953.6" y="572.1">4.4k</text><text x="956.2" y="570.4">4.6k</text><text x="958.9" y="568.8">5k</text><text x="961.5" y="564.2">5k</text><text x="964.1" y="576.5">4k</text><text x="966.7" y="591.9">1.9k</text><text x="969.4" y="592.5">1.8k</text><text x="972.0" y="572.6">4k</text><text x="974.6" y="572.2">4k</text><text x="977.2" y="570.5">4.6k</text><text x="979.9" y="573.4">4.2k</text><text x="982.5" y="579.7">3k</text><text x="985.1" y="593.9">2k</text><text x="987.7" y="595.2">1k</text><text x="990.4" y="577.7">4k</text><text x="993.0" y="576.2">3.9k</text><text x="995.6" y="579.2">3.5k</text></g>
</svg>

<!-- tabs -->
<div class="a" style="left:249px;top:640px;width:125px;height:30px;background:#232323;border-left:1px solid #3b3b3b;border-right:1px solid #3b3b3b"></div>
<div class="a" style="left:249px;top:666px;width:125px;height:3px;background:#3d7fd0"></div>
<div class="t" style="left:262px;top:648.1px;font-size:12.6px;color:#d0d0d0">Заболели по дни</div>
<div class="a" style="left:379px;top:641px;width:162px;height:27px;background:#050505;border:1px solid #444"></div>
<div class="t" style="left:392px;top:648.1px;font-size:12.6px;color:#d0d0d0">Заболели с натрупване</div>
<div class="a" style="left:546px;top:641px;width:159px;height:27px;background:#050505;border:1px solid #444"></div>
<div class="t" style="left:558px;top:648.1px;font-size:12.6px;color:#d0d0d0">Карантинирани по дни</div>

<!-- right column -->
<div class="pn" style="left:1041px;top:58px;width:219px;height:80px;background:#002a80;border-color:#34447a"></div>
<div class="t" style="left:1041px;width:219px;text-align:center;top:65.6px;font-size:28px;color:#fff">Мобилна</div>
<div class="t" style="left:1041px;width:219px;text-align:center;top:98.3px;font-size:28px;color:#fff">версия</div>

<div class="pn" style="left:1041px;top:148px;width:219px;height:530px"></div>
<div class="t" style="left:1047px;top:155.4px;font-size:14.6px;color:#c8c8c8;line-height:20.3px;white-space:normal;width:190px">Брой карантинирани по области</div>
<svg class="a" style="left:1041px;top:149px" width="219" height="521" viewBox="1041 149 219 521" font-family="Liberation Sans">
<g stroke="#474747" stroke-width="1" stroke-dasharray="3,3">
<line x1="1227.5" y1="222" x2="1227.5" y2="634"/>
<line x1="1165" y1="222.5" x2="1227" y2="222.5"/>
<line x1="1165" y1="251.8" x2="1227" y2="251.8"/>
<line x1="1165" y1="281.1" x2="1227" y2="281.1"/>
<line x1="1165" y1="310.4" x2="1227" y2="310.4"/>
<line x1="1165" y1="339.7" x2="1227" y2="339.7"/>
<line x1="1165" y1="369.0" x2="1227" y2="369.0"/>
<line x1="1165" y1="398.3" x2="1227" y2="398.3"/>
<line x1="1165" y1="427.6" x2="1227" y2="427.6"/>
<line x1="1165" y1="456.9" x2="1227" y2="456.9"/>
<line x1="1165" y1="486.2" x2="1227" y2="486.2"/>
<line x1="1165" y1="515.5" x2="1227" y2="515.5"/>
<line x1="1165" y1="544.8" x2="1227" y2="544.8"/>
<line x1="1165" y1="574.1" x2="1227" y2="574.1"/>
<line x1="1165" y1="603.4" x2="1227" y2="603.4"/>
</g>
<g fill="#ffaa00">
<rect x="1165" y="223.0" width="32.9" height="12.8"/>
<rect x="1165" y="237.6" width="13.9" height="12.8"/>
<rect x="1165" y="252.2" width="10.4" height="12.8"/>
<rect x="1165" y="266.9" width="9.9" height="12.8"/>
<rect x="1165" y="281.5" width="8.3" height="12.8"/>
<rect x="1165" y="296.1" width="7.3" height="12.8"/>
<rect x="1165" y="310.8" width="6.2" height="12.8"/>
<rect x="1165" y="325.4" width="6.1" height="12.8"/>
<rect x="1165" y="340.0" width="5.0" height="12.8"/>
<rect x="1165" y="354.6" width="5.0" height="12.8"/>
<rect x="1165" y="369.2" width="4.8" height="12.8"/>
<rect x="1165" y="383.9" width="4.8" height="12.8"/>
<rect x="1165" y="398.5" width="4.3" height="12.8"/>
<rect x="1165" y="413.1" width="4.3" height="12.8"/>
<rect x="1165" y="427.8" width="4.2" height="12.8"/>
<rect x="1165" y="442.4" width="3.8" height="12.8"/>
<rect x="1165" y="457.0" width="3.3" height="12.8"/>
<rect x="1165" y="471.6" width="3.2" height="12.8"/>
<rect x="1165" y="486.2" width="3.2" height="12.8"/>
<rect x="1165" y="500.9" width="3.1" height="12.8"/>
<rect x="1165" y="515.5" width="3.1" height="12.8"/>
<rect x="1165" y="530.1" width="3.0" height="12.8"/>
<rect x="1165" y="544.8" width="2.9" height="12.8"/>
<rect x="1165" y="559.4" width="2.7" height="12.8"/>
<rect x="1165" y="574.0" width="2.5" height="12.8"/>
<rect x="1165" y="588.6" width="2.2" height="12.8"/>
<rect x="1165" y="603.2" width="2.1" height="12.8"/>
<rect x="1165" y="617.9" width="1.9" height="12.8"/>
</g>
<g font-size="11" fill="#bdbdbd">
<text x="1200.9" y="234.3">106.8k</text>
<text x="1181.9" y="248.9">45.1k</text>
<text x="1178.4" y="263.6">33.8k</text>
<text x="1177.9" y="278.2">32.3k</text>
<text x="1176.3" y="292.8">26.8k</text>
<text x="1175.3" y="307.4">23.8k</text>
<text x="1174.2" y="322.1">20.1k</text>
<text x="1174.1" y="336.7">19.7k</text>
<text x="1173.0" y="351.3">16.2k</text>
<text x="1173.0" y="365.9">16.2k</text>
<text x="1172.8" y="380.6">15.7k</text>
<text x="1172.8" y="395.2">15.5k</text>
<text x="1172.3" y="409.8">14.1k</text>
<text x="1172.3" y="424.4">13.8k</text>
<text x="1172.2" y="439.1">13.5k</text>
<text x="1171.8" y="453.7">12.2k</text>
<text x="1171.3" y="468.3">10.6k</text>
<text x="1171.2" y="482.9">10.5k</text>
<text x="1171.2" y="497.6">10.3k</text>
<text x="1171.1" y="512.2">10.2k</text>
<text x="1171.1" y="526.8">10k</text>
<text x="1171.0" y="541.4">9.8k</text>
<text x="1170.9" y="556.0">9.5k</text>
<text x="1170.7" y="570.7">8.7k</text>
<text x="1170.5" y="585.3">8.2k</text>
<text x="1170.2" y="599.9">7.1k</text>
<text x="1170.1" y="614.5">6.9k</text>
<text x="1169.9" y="629.2">6.2k</text>
</g>
<g font-size="11" fill="#b0b0b0" text-anchor="end">
<text x="1152.5" y="234.3">София-град</text>
<text x="1152.5" y="263.6">Варна</text>
<text x="1152.5" y="292.8">Благоевград</text>
<text x="1152.5" y="322.1">Пазарджик</text>
<text x="1152.5" y="351.3">Хасково</text>
<text x="1152.5" y="380.6">Русе</text>
<text x="1152.5" y="409.8">Шумен</text>
<text x="1152.5" y="439.1">Велико Търново</text>
<text x="1152.5" y="468.3">Разград</text>
<text x="1152.5" y="497.6">Кюстендил</text>
<text x="1152.5" y="526.8">Монтана</text>
<text x="1152.5" y="556.0">Силистра</text>
<text x="1152.5" y="585.3">Перник</text>
<text x="1152.5" y="614.5">Ловеч</text>
</g>
<g stroke="#8a8a8a" stroke-width="1">
<line x1="1159" y1="229.5" x2="1165" y2="229.5"/>
<line x1="1159" y1="258.8" x2="1165" y2="258.8"/>
<line x1="1159" y1="288.0" x2="1165" y2="288.0"/>
<line x1="1159" y1="317.2" x2="1165" y2="317.2"/>
<line x1="1159" y1="346.5" x2="1165" y2="346.5"/>
<line x1="1159" y1="375.8" x2="1165" y2="375.8"/>
<line x1="1159" y1="405.0" x2="1165" y2="405.0"/>
<line x1="1159" y1="434.2" x2="1165" y2="434.2"/>
<line x1="1159" y1="463.5" x2="1165" y2="463.5"/>
<line x1="1159" y1="492.8" x2="1165" y2="492.8"/>
<line x1="1159" y1="522.0" x2="1165" y2="522.0"/>
<line x1="1159" y1="551.2" x2="1165" y2="551.2"/>
<line x1="1159" y1="580.5" x2="1165" y2="580.5"/>
<line x1="1159" y1="609.8" x2="1165" y2="609.8"/>
<line x1="1165" y1="635.5" x2="1227.5" y2="635.5"/><line x1="1165.5" y1="635" x2="1165.5" y2="640"/><line x1="1227.5" y1="635" x2="1227.5" y2="640"/>
</g>
<g font-size="11.5" fill="#b8b8b8" text-anchor="middle"><text x="1165.5" y="657">0</text><text x="1227.5" y="657">200k</text></g>
</svg>
</body></html>
